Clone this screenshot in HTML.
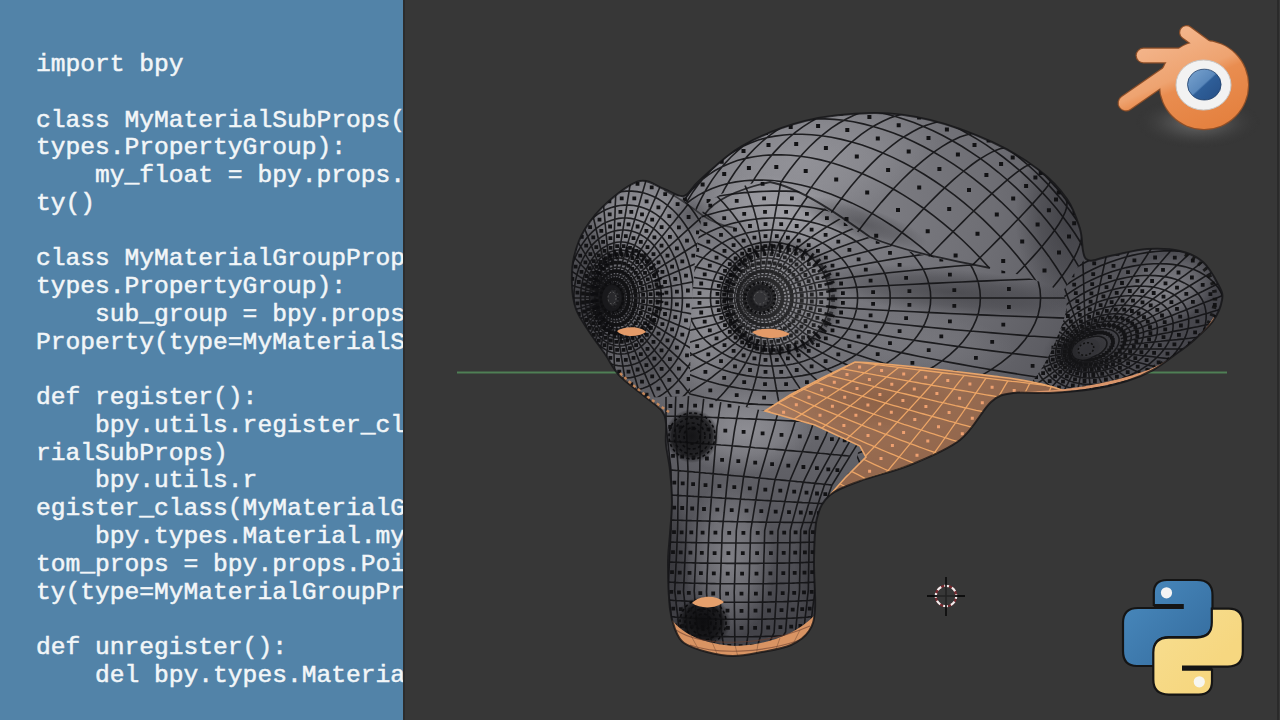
<!DOCTYPE html>
<html><head><meta charset="utf-8">
<style>
html,body{margin:0;padding:0;width:1280px;height:720px;overflow:hidden;background:#373737;}
#code{position:absolute;left:0;top:0;width:403px;height:720px;background:#5283a8;overflow:hidden;}
#code pre{position:absolute;left:36px;top:51px;margin:0;font-family:"Liberation Mono",monospace;font-size:24.6px;line-height:27.77px;color:#f2f6f8;white-space:pre;-webkit-text-stroke:0.5px #f2f6f8;}
#edge{position:absolute;left:403px;top:0;width:2px;height:720px;background:#2c2c2c;}
#redge{position:absolute;left:1277px;top:0;width:2px;height:720px;background:#2a2a2a;}
#scene{position:absolute;left:0;top:0;filter:blur(0.45px);}
</style></head><body>
<div id="code"><pre>import bpy

class MyMaterialSubProps(bpy.
types.PropertyGroup):
    my_float = bpy.props.FloatProper
ty()

class MyMaterialGroupProps(bpy.
types.PropertyGroup):
    sub_group = bpy.props.Pointer
Property(type=MyMaterialSubProps)

def register():
    bpy.utils.register_class(MyMate
rialSubProps)
    bpy.utils.r
egister_class(MyMaterialGroupProps)
    bpy.types.Material.my_cus
tom_props = bpy.props.PointerProper
ty(type=MyMaterialGroupProps)

def unregister():
    del bpy.types.Material.my_custom</pre></div>
<div id="edge"></div>
<div id="redge"></div>
<svg id="scene" width="1280" height="720" viewBox="0 0 1280 720">
<line x1="457" y1="372.5" x2="1227" y2="372.5" stroke="#4f7f55" stroke-width="2"/>
<defs><clipPath id="cSil"><path d="M640.0,181.0 C649.2,179.0 656.7,186.5 664.0,189.0 C671.3,191.5 678.0,197.5 684.0,196.0 C690.0,194.5 690.3,188.3 700.0,180.0 C709.7,171.7 724.5,155.8 742.0,146.0 C759.5,136.2 783.0,126.5 805.0,121.0 C827.0,115.5 853.2,113.2 874.0,113.0 C894.8,112.8 910.3,115.2 930.0,120.0 C949.7,124.8 973.8,133.7 992.0,142.0 C1010.2,150.3 1026.5,160.5 1039.0,170.0 C1051.5,179.5 1060.2,189.2 1067.0,199.0 C1073.8,208.8 1076.8,219.0 1080.0,229.0 C1083.2,239.0 1081.0,254.5 1086.0,259.0 C1091.0,263.5 1099.8,257.7 1110.0,256.0 C1120.2,254.3 1135.3,249.8 1147.0,249.0 C1158.7,248.2 1170.7,248.8 1180.0,251.0 C1189.3,253.2 1196.5,256.2 1203.0,262.0 C1209.5,267.8 1215.8,279.7 1219.0,286.0 C1222.2,292.3 1223.0,294.2 1222.0,300.0 C1221.0,305.8 1217.8,314.2 1213.0,321.0 C1208.2,327.8 1199.2,335.5 1193.0,341.0 C1186.8,346.5 1182.7,349.2 1176.0,354.0 C1169.3,358.8 1161.2,365.5 1153.0,370.0 C1144.8,374.5 1137.0,377.8 1127.0,381.0 C1117.0,384.2 1106.0,387.0 1093.0,389.0 C1080.0,391.0 1062.3,392.3 1049.0,393.0 C1035.7,393.7 1022.7,391.5 1013.0,393.0 C1003.3,394.5 999.8,394.2 991.0,402.0 C982.2,409.8 973.5,429.5 960.0,440.0 C946.5,450.5 926.7,458.2 910.0,465.0 C893.3,471.8 873.3,476.0 860.0,481.0 C846.7,486.0 837.2,488.8 830.0,495.0 C822.8,501.2 819.7,507.2 817.0,518.0 C814.3,528.8 814.3,544.8 814.0,560.0 C813.7,575.2 815.8,597.2 815.0,609.0 C814.2,620.8 813.0,625.0 809.0,631.0 C805.0,637.0 798.8,641.5 791.0,645.0 C783.2,648.5 771.7,650.2 762.0,652.0 C752.3,653.8 742.2,656.0 733.0,656.0 C723.8,656.0 715.2,654.2 707.0,652.0 C698.8,649.8 689.3,646.8 684.0,643.0 C678.7,639.2 677.3,634.7 675.0,629.0 C672.7,623.3 671.2,619.8 670.0,609.0 C668.8,598.2 668.0,576.5 668.0,564.0 C668.0,551.5 669.3,544.3 670.0,534.0 C670.7,523.7 672.0,512.7 672.0,502.0 C672.0,491.3 671.0,479.7 670.0,470.0 C669.0,460.3 666.7,451.8 666.0,444.0 C665.3,436.2 666.7,428.5 666.0,423.0 C665.3,417.5 665.8,415.7 662.0,411.0 C658.2,406.3 650.2,401.0 643.0,395.0 C635.8,389.0 625.3,381.8 619.0,375.0 C612.7,368.2 610.2,361.5 605.0,354.0 C599.8,346.5 592.8,337.5 588.0,330.0 C583.2,322.5 578.7,316.5 576.0,309.0 C573.3,301.5 572.3,293.7 572.0,285.0 C571.7,276.3 571.8,266.3 574.0,257.0 C576.2,247.7 579.2,238.3 585.0,229.0 C590.8,219.7 599.8,209.0 609.0,201.0 C618.2,193.0 630.8,183.0 640.0,181.0Z"/></clipPath><radialGradient id="gBase" gradientUnits="userSpaceOnUse" cx="800" cy="200" r="430"><stop offset="0" stop-color="#85858b" stop-opacity="1"/><stop offset="0.45" stop-color="#6e6e74" stop-opacity="1"/><stop offset="1" stop-color="#434349" stop-opacity="1"/></radialGradient><radialGradient id="b2" gradientUnits="userSpaceOnUse" cx="0" cy="0" r="1"><stop offset="0" stop-color="#a6a6ac" stop-opacity="0.45"/><stop offset="0.55" stop-color="#a6a6ac" stop-opacity="0.27"/><stop offset="1" stop-color="#a6a6ac" stop-opacity="0"/></radialGradient><radialGradient id="b3" gradientUnits="userSpaceOnUse" cx="0" cy="0" r="1"><stop offset="0" stop-color="#b4b4ba" stop-opacity="0.5"/><stop offset="0.55" stop-color="#b4b4ba" stop-opacity="0.3"/><stop offset="1" stop-color="#b4b4ba" stop-opacity="0"/></radialGradient><radialGradient id="b4" gradientUnits="userSpaceOnUse" cx="0" cy="0" r="1"><stop offset="0" stop-color="#b4b4ba" stop-opacity="0.55"/><stop offset="0.55" stop-color="#b4b4ba" stop-opacity="0.33"/><stop offset="1" stop-color="#b4b4ba" stop-opacity="0"/></radialGradient><radialGradient id="b5" gradientUnits="userSpaceOnUse" cx="0" cy="0" r="1"><stop offset="0" stop-color="#b0b0b6" stop-opacity="0.45"/><stop offset="0.55" stop-color="#b0b0b6" stop-opacity="0.27"/><stop offset="1" stop-color="#b0b0b6" stop-opacity="0"/></radialGradient><radialGradient id="b6" gradientUnits="userSpaceOnUse" cx="0" cy="0" r="1"><stop offset="0" stop-color="#b4b4ba" stop-opacity="0.5"/><stop offset="0.55" stop-color="#b4b4ba" stop-opacity="0.3"/><stop offset="1" stop-color="#b4b4ba" stop-opacity="0"/></radialGradient><radialGradient id="b7" gradientUnits="userSpaceOnUse" cx="0" cy="0" r="1"><stop offset="0" stop-color="#b0b0b6" stop-opacity="0.5"/><stop offset="0.55" stop-color="#b0b0b6" stop-opacity="0.3"/><stop offset="1" stop-color="#b0b0b6" stop-opacity="0"/></radialGradient><radialGradient id="b8" gradientUnits="userSpaceOnUse" cx="0" cy="0" r="1"><stop offset="0" stop-color="#b8b8be" stop-opacity="0.5"/><stop offset="0.55" stop-color="#b8b8be" stop-opacity="0.3"/><stop offset="1" stop-color="#b8b8be" stop-opacity="0"/></radialGradient><radialGradient id="b9" gradientUnits="userSpaceOnUse" cx="0" cy="0" r="1"><stop offset="0" stop-color="#8a8a90" stop-opacity="0.3"/><stop offset="0.55" stop-color="#8a8a90" stop-opacity="0.18"/><stop offset="1" stop-color="#8a8a90" stop-opacity="0"/></radialGradient><radialGradient id="b10" gradientUnits="userSpaceOnUse" cx="0" cy="0" r="1"><stop offset="0" stop-color="#a8a8ae" stop-opacity="0.35"/><stop offset="0.55" stop-color="#a8a8ae" stop-opacity="0.21"/><stop offset="1" stop-color="#a8a8ae" stop-opacity="0"/></radialGradient><radialGradient id="b11" gradientUnits="userSpaceOnUse" cx="0" cy="0" r="1"><stop offset="0" stop-color="#2a2a2e" stop-opacity="0.65"/><stop offset="0.55" stop-color="#2a2a2e" stop-opacity="0.39"/><stop offset="1" stop-color="#2a2a2e" stop-opacity="0"/></radialGradient><radialGradient id="b12" gradientUnits="userSpaceOnUse" cx="0" cy="0" r="1"><stop offset="0" stop-color="#222226" stop-opacity="0.45"/><stop offset="0.55" stop-color="#222226" stop-opacity="0.27"/><stop offset="1" stop-color="#222226" stop-opacity="0"/></radialGradient><radialGradient id="b13" gradientUnits="userSpaceOnUse" cx="0" cy="0" r="1"><stop offset="0" stop-color="#222226" stop-opacity="0.5"/><stop offset="0.55" stop-color="#222226" stop-opacity="0.3"/><stop offset="1" stop-color="#222226" stop-opacity="0"/></radialGradient><radialGradient id="b14" gradientUnits="userSpaceOnUse" cx="0" cy="0" r="1"><stop offset="0" stop-color="#2a2a2e" stop-opacity="0.55"/><stop offset="0.55" stop-color="#2a2a2e" stop-opacity="0.33"/><stop offset="1" stop-color="#2a2a2e" stop-opacity="0"/></radialGradient><radialGradient id="b15" gradientUnits="userSpaceOnUse" cx="0" cy="0" r="1"><stop offset="0" stop-color="#2a2a2e" stop-opacity="0.55"/><stop offset="0.55" stop-color="#2a2a2e" stop-opacity="0.33"/><stop offset="1" stop-color="#2a2a2e" stop-opacity="0"/></radialGradient><radialGradient id="b16" gradientUnits="userSpaceOnUse" cx="0" cy="0" r="1"><stop offset="0" stop-color="#1e1e22" stop-opacity="0.4"/><stop offset="0.55" stop-color="#1e1e22" stop-opacity="0.24"/><stop offset="1" stop-color="#1e1e22" stop-opacity="0"/></radialGradient><radialGradient id="b17" gradientUnits="userSpaceOnUse" cx="0" cy="0" r="1"><stop offset="0" stop-color="#2a2a2e" stop-opacity="0.35"/><stop offset="0.55" stop-color="#2a2a2e" stop-opacity="0.21"/><stop offset="1" stop-color="#2a2a2e" stop-opacity="0"/></radialGradient><radialGradient id="b18" gradientUnits="userSpaceOnUse" cx="0" cy="0" r="1"><stop offset="0" stop-color="#2a2a2e" stop-opacity="0.35"/><stop offset="0.55" stop-color="#2a2a2e" stop-opacity="0.21"/><stop offset="1" stop-color="#2a2a2e" stop-opacity="0"/></radialGradient><radialGradient id="b19" gradientUnits="userSpaceOnUse" cx="0" cy="0" r="1"><stop offset="0" stop-color="#2a2a2e" stop-opacity="0.35"/><stop offset="0.55" stop-color="#2a2a2e" stop-opacity="0.21"/><stop offset="1" stop-color="#2a2a2e" stop-opacity="0"/></radialGradient><radialGradient id="b20" gradientUnits="userSpaceOnUse" cx="0" cy="0" r="1"><stop offset="0" stop-color="#2a2a2e" stop-opacity="0.4"/><stop offset="0.55" stop-color="#2a2a2e" stop-opacity="0.24"/><stop offset="1" stop-color="#2a2a2e" stop-opacity="0"/></radialGradient><g id="shade"><path d="M640.0,181.0 C649.2,179.0 656.7,186.5 664.0,189.0 C671.3,191.5 678.0,197.5 684.0,196.0 C690.0,194.5 690.3,188.3 700.0,180.0 C709.7,171.7 724.5,155.8 742.0,146.0 C759.5,136.2 783.0,126.5 805.0,121.0 C827.0,115.5 853.2,113.2 874.0,113.0 C894.8,112.8 910.3,115.2 930.0,120.0 C949.7,124.8 973.8,133.7 992.0,142.0 C1010.2,150.3 1026.5,160.5 1039.0,170.0 C1051.5,179.5 1060.2,189.2 1067.0,199.0 C1073.8,208.8 1076.8,219.0 1080.0,229.0 C1083.2,239.0 1081.0,254.5 1086.0,259.0 C1091.0,263.5 1099.8,257.7 1110.0,256.0 C1120.2,254.3 1135.3,249.8 1147.0,249.0 C1158.7,248.2 1170.7,248.8 1180.0,251.0 C1189.3,253.2 1196.5,256.2 1203.0,262.0 C1209.5,267.8 1215.8,279.7 1219.0,286.0 C1222.2,292.3 1223.0,294.2 1222.0,300.0 C1221.0,305.8 1217.8,314.2 1213.0,321.0 C1208.2,327.8 1199.2,335.5 1193.0,341.0 C1186.8,346.5 1182.7,349.2 1176.0,354.0 C1169.3,358.8 1161.2,365.5 1153.0,370.0 C1144.8,374.5 1137.0,377.8 1127.0,381.0 C1117.0,384.2 1106.0,387.0 1093.0,389.0 C1080.0,391.0 1062.3,392.3 1049.0,393.0 C1035.7,393.7 1022.7,391.5 1013.0,393.0 C1003.3,394.5 999.8,394.2 991.0,402.0 C982.2,409.8 973.5,429.5 960.0,440.0 C946.5,450.5 926.7,458.2 910.0,465.0 C893.3,471.8 873.3,476.0 860.0,481.0 C846.7,486.0 837.2,488.8 830.0,495.0 C822.8,501.2 819.7,507.2 817.0,518.0 C814.3,528.8 814.3,544.8 814.0,560.0 C813.7,575.2 815.8,597.2 815.0,609.0 C814.2,620.8 813.0,625.0 809.0,631.0 C805.0,637.0 798.8,641.5 791.0,645.0 C783.2,648.5 771.7,650.2 762.0,652.0 C752.3,653.8 742.2,656.0 733.0,656.0 C723.8,656.0 715.2,654.2 707.0,652.0 C698.8,649.8 689.3,646.8 684.0,643.0 C678.7,639.2 677.3,634.7 675.0,629.0 C672.7,623.3 671.2,619.8 670.0,609.0 C668.8,598.2 668.0,576.5 668.0,564.0 C668.0,551.5 669.3,544.3 670.0,534.0 C670.7,523.7 672.0,512.7 672.0,502.0 C672.0,491.3 671.0,479.7 670.0,470.0 C669.0,460.3 666.7,451.8 666.0,444.0 C665.3,436.2 666.7,428.5 666.0,423.0 C665.3,417.5 665.8,415.7 662.0,411.0 C658.2,406.3 650.2,401.0 643.0,395.0 C635.8,389.0 625.3,381.8 619.0,375.0 C612.7,368.2 610.2,361.5 605.0,354.0 C599.8,346.5 592.8,337.5 588.0,330.0 C583.2,322.5 578.7,316.5 576.0,309.0 C573.3,301.5 572.3,293.7 572.0,285.0 C571.7,276.3 571.8,266.3 574.0,257.0 C576.2,247.7 579.2,238.3 585.0,229.0 C590.8,219.7 599.8,209.0 609.0,201.0 C618.2,193.0 630.8,183.0 640.0,181.0Z" fill="url(#gBase)"/><ellipse cx="0" cy="0" rx="1" ry="1" fill="url(#b2)" transform="translate(800 160) rotate(-10) scale(140 60)"/><ellipse cx="0" cy="0" rx="1" ry="1" fill="url(#b3)" transform="translate(640 215) rotate(0) scale(55 45)"/><ellipse cx="0" cy="0" rx="1" ry="1" fill="url(#b4)" transform="translate(785 215) rotate(12) scale(80 38)"/><ellipse cx="0" cy="0" rx="1" ry="1" fill="url(#b5)" transform="translate(705 320) rotate(0) scale(35 80)"/><ellipse cx="0" cy="0" rx="1" ry="1" fill="url(#b6)" transform="translate(745 430) rotate(0) scale(70 45)"/><ellipse cx="0" cy="0" rx="1" ry="1" fill="url(#b7)" transform="translate(730 560) rotate(0) scale(45 80)"/><ellipse cx="0" cy="0" rx="1" ry="1" fill="url(#b8)" transform="translate(1165 290) rotate(-20) scale(55 35)"/><ellipse cx="0" cy="0" rx="1" ry="1" fill="url(#b9)" transform="translate(930 345) rotate(5) scale(90 30)"/><ellipse cx="0" cy="0" rx="1" ry="1" fill="url(#b10)" transform="translate(760 300) rotate(0) scale(40 40)"/><ellipse cx="0" cy="0" rx="1" ry="1" fill="url(#b11)" transform="translate(585 300) rotate(0) scale(35 90)"/><ellipse cx="0" cy="0" rx="1" ry="1" fill="url(#b12)" transform="translate(950 292) rotate(6) scale(140 24)"/><ellipse cx="0" cy="0" rx="1" ry="1" fill="url(#b13)" transform="translate(1070 215) rotate(0) scale(55 95)"/><ellipse cx="0" cy="0" rx="1" ry="1" fill="url(#b14)" transform="translate(816 560) rotate(0) scale(22 70)"/><ellipse cx="0" cy="0" rx="1" ry="1" fill="url(#b15)" transform="translate(672 560) rotate(0) scale(18 70)"/><ellipse cx="0" cy="0" rx="1" ry="1" fill="url(#b16)" transform="translate(1085 350) rotate(-20) scale(45 30)"/><ellipse cx="0" cy="0" rx="1" ry="1" fill="url(#b17)" transform="translate(880 400) rotate(0) scale(80 30)"/><ellipse cx="0" cy="0" rx="1" ry="1" fill="url(#b18)" transform="translate(650 360) rotate(0) scale(35 40)"/><ellipse cx="0" cy="0" rx="1" ry="1" fill="url(#b19)" transform="translate(690 215) rotate(0) scale(25 20)"/><ellipse cx="0" cy="0" rx="1" ry="1" fill="url(#b20)" transform="translate(860 222) rotate(18) scale(70 16)"/></g><clipPath id="cDome"><path d="M640.0,181.0 C649.2,179.0 656.7,186.5 664.0,189.0 C671.3,191.5 678.0,197.5 684.0,196.0 C690.0,194.5 690.3,188.3 700.0,180.0 C709.7,171.7 724.5,155.8 742.0,146.0 C759.5,136.2 783.0,126.5 805.0,121.0 C827.0,115.5 853.2,113.2 874.0,113.0 C894.8,112.8 910.3,115.2 930.0,120.0 C949.7,124.8 973.8,133.7 992.0,142.0 C1010.2,150.3 1026.5,160.5 1039.0,170.0 C1051.5,179.5 1060.2,189.2 1067.0,199.0 C1073.8,208.8 1076.8,219.0 1080.0,229.0 C1083.2,239.0 1081.0,254.5 1086.0,259.0 C1091.0,263.5 1099.8,257.7 1110.0,256.0 C1120.2,254.3 1135.3,249.8 1147.0,249.0 C1158.7,248.2 1170.7,248.8 1180.0,251.0 C1189.3,253.2 1196.5,256.2 1203.0,262.0 C1209.5,267.8 1215.8,279.7 1219.0,286.0 C1222.2,292.3 1223.0,294.2 1222.0,300.0 C1221.0,305.8 1217.8,314.2 1213.0,321.0 C1208.2,327.8 1199.2,335.5 1193.0,341.0 C1186.8,346.5 1182.7,349.2 1176.0,354.0 C1169.3,358.8 1161.2,365.5 1153.0,370.0 C1144.8,374.5 1137.0,377.8 1127.0,381.0 C1117.0,384.2 1106.0,387.0 1093.0,389.0 C1080.0,391.0 1062.3,392.3 1049.0,393.0 C1035.7,393.7 1022.7,391.5 1013.0,393.0 C1003.3,394.5 999.8,394.2 991.0,402.0 C982.2,409.8 973.5,429.5 960.0,440.0 C946.5,450.5 926.7,458.2 910.0,465.0 C893.3,471.8 873.3,476.0 860.0,481.0 C846.7,486.0 837.2,488.8 830.0,495.0 C822.8,501.2 819.7,507.2 817.0,518.0 C814.3,528.8 814.3,544.8 814.0,560.0 C813.7,575.2 815.8,597.2 815.0,609.0 C814.2,620.8 813.0,625.0 809.0,631.0 C805.0,637.0 798.8,641.5 791.0,645.0 C783.2,648.5 771.7,650.2 762.0,652.0 C752.3,653.8 742.2,656.0 733.0,656.0 C723.8,656.0 715.2,654.2 707.0,652.0 C698.8,649.8 689.3,646.8 684.0,643.0 C678.7,639.2 677.3,634.7 675.0,629.0 C672.7,623.3 671.2,619.8 670.0,609.0 C668.8,598.2 668.0,576.5 668.0,564.0 C668.0,551.5 669.3,544.3 670.0,534.0 C670.7,523.7 672.0,512.7 672.0,502.0 C672.0,491.3 671.0,479.7 670.0,470.0 C669.0,460.3 666.7,451.8 666.0,444.0 C665.3,436.2 666.7,428.5 666.0,423.0 C665.3,417.5 665.8,415.7 662.0,411.0 C658.2,406.3 650.2,401.0 643.0,395.0 C635.8,389.0 625.3,381.8 619.0,375.0 C612.7,368.2 610.2,361.5 605.0,354.0 C599.8,346.5 592.8,337.5 588.0,330.0 C583.2,322.5 578.7,316.5 576.0,309.0 C573.3,301.5 572.3,293.7 572.0,285.0 C571.7,276.3 571.8,266.3 574.0,257.0 C576.2,247.7 579.2,238.3 585.0,229.0 C590.8,219.7 599.8,209.0 609.0,201.0 C618.2,193.0 630.8,183.0 640.0,181.0Z"/></clipPath><radialGradient id="gEarSh" gradientUnits="userSpaceOnUse" cx="0" cy="0" r="1"><stop offset="0" stop-color="#18181a" stop-opacity="0.35"/><stop offset="0.5" stop-color="#18181a" stop-opacity="0.2"/><stop offset="1" stop-color="#18181a" stop-opacity="0"/></radialGradient><clipPath id="cEar"><path d="M1086.0,259.0 C1092.7,255.0 1099.8,257.7 1110.0,256.0 C1120.2,254.3 1135.3,249.8 1147.0,249.0 C1158.7,248.2 1170.7,248.8 1180.0,251.0 C1189.3,253.2 1196.5,256.2 1203.0,262.0 C1209.5,267.8 1215.8,279.7 1219.0,286.0 C1222.2,292.3 1223.0,294.2 1222.0,300.0 C1221.0,305.8 1217.8,314.2 1213.0,321.0 C1208.2,327.8 1199.2,335.5 1193.0,341.0 C1186.8,346.5 1182.7,349.2 1176.0,354.0 C1169.3,358.8 1161.2,365.5 1153.0,370.0 C1144.8,374.5 1137.0,377.8 1127.0,381.0 C1117.0,384.2 1106.0,387.0 1093.0,389.0 C1080.0,391.0 1061.2,392.3 1049.0,393.0 C1036.8,393.7 1023.2,398.5 1020.0,393.0 C1016.8,387.5 1025.3,372.5 1030.0,360.0 C1034.7,347.5 1041.3,331.3 1048.0,318.0 C1054.7,304.7 1063.7,289.8 1070.0,280.0 C1076.3,270.2 1079.3,263.0 1086.0,259.0Z"/></clipPath><radialGradient id="gPupil" gradientUnits="userSpaceOnUse" cx="0" cy="0" r="1"><stop offset="0" stop-color="#0c0c0e" stop-opacity="0.95"/><stop offset="0.6" stop-color="#161618" stop-opacity="0.75"/><stop offset="1" stop-color="#161618" stop-opacity="0"/></radialGradient><radialGradient id="gSock" gradientUnits="userSpaceOnUse" cx="0" cy="0" r="1"><stop offset="0" stop-color="#fff" stop-opacity="0.12"/><stop offset="0.7" stop-color="#fff" stop-opacity="0.06"/><stop offset="0.85" stop-color="#0c0c0e" stop-opacity="0.25"/><stop offset="1" stop-color="#000" stop-opacity="0"/></radialGradient><clipPath id="cRE"><path d="M702.0,214.0 C704.8,204.0 707.0,204.0 712.0,200.0 C717.0,196.0 722.3,193.2 732.0,190.0 C741.7,186.8 758.3,180.5 770.0,181.0 C781.7,181.5 791.5,187.5 802.0,193.0 C812.5,198.5 822.8,207.0 833.0,214.0 C843.2,221.0 851.8,229.2 863.0,235.0 C874.2,240.8 885.5,244.7 900.0,249.0 C914.5,253.3 933.3,257.5 950.0,261.0 C966.7,264.5 985.0,266.5 1000.0,270.0 C1015.0,273.5 1029.0,277.0 1040.0,282.0 C1051.0,287.0 1063.3,290.3 1066.0,300.0 C1068.7,309.7 1061.2,327.0 1056.0,340.0 C1050.8,353.0 1042.2,369.2 1035.0,378.0 C1027.8,386.8 1025.5,388.0 1013.0,393.0 C1000.5,398.0 983.8,403.5 960.0,408.0 C936.2,412.5 902.5,419.5 870.0,420.0 C837.5,420.5 790.0,413.5 765.0,411.0 C740.0,408.5 732.5,406.8 720.0,405.0 C707.5,403.2 695.0,412.5 690.0,400.0 C685.0,387.5 689.2,353.3 690.0,330.0 C690.8,306.7 693.0,279.3 695.0,260.0 C697.0,240.7 699.2,224.0 702.0,214.0Z"/></clipPath><clipPath id="cLE"><path d="M560.0,150.0 L664.0,150.0 L668.0,190.0 L686.0,202.0 L702.0,214.0 L695.0,260.0 L690.0,330.0 L690.0,398.0 L662.0,415.0 L560.0,415.0Z"/></clipPath><radialGradient id="gNose" gradientUnits="userSpaceOnUse" cx="0" cy="0" r="1"><stop offset="0" stop-color="#0a0a0c" stop-opacity="0.9"/><stop offset="0.75" stop-color="#121214" stop-opacity="0.8"/><stop offset="1" stop-color="#141416" stop-opacity="0"/></radialGradient><radialGradient id="gMouth" gradientUnits="userSpaceOnUse" cx="0" cy="0" r="1"><stop offset="0" stop-color="#0a0a0c" stop-opacity="0.95"/><stop offset="0.7" stop-color="#121214" stop-opacity="0.85"/><stop offset="1" stop-color="#141416" stop-opacity="0"/></radialGradient><clipPath id="cMJ"><path d="M640.0,398.0 L690.0,396.0 L720.0,402.0 L765.0,411.0 L810.0,422.0 L860.0,445.0 L855.0,465.0 L830.0,495.0 L840.0,520.0 L840.0,680.0 L650.0,680.0Z"/></clipPath><clipPath id="cOr"><path d="M765,411 L790,395 L822,378 L855,362 C900,364 960,372 1000,377 C1025,380 1045,384 1062,390  C1052.8,393.3 1027.5,395.0 1017.0,400.0 C1006.5,405.0 1006.5,414.5 997.0,422.0 C987.5,429.5 974.5,437.8 960.0,445.0 C945.5,452.2 926.7,459.0 910.0,465.0 C893.3,471.0 873.3,476.0 860.0,481.0 C846.7,486.0 835.0,492.7 830.0,495.0 L845,478 L866,457 L860,446 L815,425 Z"/></clipPath><linearGradient id="gBl" gradientUnits="userSpaceOnUse" x1="1170" y1="25" x2="1215" y2="130"><stop offset="0" stop-color="#f4b890"/><stop offset="0.45" stop-color="#eea370"/><stop offset="0.55" stop-color="#e98d50"/><stop offset="1" stop-color="#e4803e"/></linearGradient><radialGradient id="gGlow" gradientUnits="userSpaceOnUse" cx="0" cy="0" r="1"><stop offset="0" stop-color="#7a7a7a" stop-opacity="0.85"/><stop offset="0.5" stop-color="#5a5a5a" stop-opacity="0.5"/><stop offset="1" stop-color="#383838" stop-opacity="0"/></radialGradient><linearGradient id="gBlue" x1="0" y1="0" x2="1" y2="1"><stop offset="0" stop-color="#7aa4d0"/><stop offset="0.48" stop-color="#5a88bb"/><stop offset="0.52" stop-color="#2e5e98"/><stop offset="1" stop-color="#264f86"/></linearGradient><linearGradient id="gPyB" gradientUnits="userSpaceOnUse" x1="1123" y1="580" x2="1212" y2="666"><stop offset="0" stop-color="#4a8bbf"/><stop offset="1" stop-color="#336a9c"/></linearGradient><linearGradient id="gPyY" gradientUnits="userSpaceOnUse" x1="1243" y1="695" x2="1153" y2="608"><stop offset="0" stop-color="#f8e29a"/><stop offset="1" stop-color="#f6d780"/></linearGradient></defs>
<g clip-path="url(#cSil)">
<g clip-path="url(#cDome)">
<use href="#shade"/>

<path d="M981.0,129.9 L987.7,133.2 L994.4,136.9 L1001.0,140.8 L1007.6,145.0 L1014.1,149.4 L1020.5,154.2 L1026.8,159.1 L1032.9,164.3 L1038.8,169.7 L1044.7,175.3 L1050.3,181.2 L1055.7,187.1 L1060.9,193.2 L1065.8,199.5 L1070.6,205.9 L1075.0,212.4 L1079.2,219.0 L1083.1,225.6 L1086.8,232.3 L1090.1,239.0M912.8,108.2 L920.3,109.3 L927.9,110.9 L935.7,112.9 L943.5,115.3 L951.4,118.1 L959.3,121.2 L967.2,124.8 L975.0,128.7 L982.9,132.9 L990.7,137.5 L998.4,142.4 L1006.0,147.7 L1013.5,153.2 L1020.9,159.1 L1028.1,165.2 L1035.1,171.5 L1041.9,178.1 L1048.5,184.9 L1054.8,191.9 L1060.9,199.1 L1066.8,206.5 L1072.3,214.0 L1077.6,221.6 L1082.5,229.3 L1087.1,237.1 L1091.3,245.0 L1095.2,252.8 L1098.8,260.7 L1101.9,268.6 L1104.7,276.5 L1107.1,284.3 L1109.1,292.1 L1110.7,299.7 L1111.8,307.2M857.8,105.7 L865.5,105.2 L873.5,105.1 L881.6,105.5 L889.9,106.4 L898.4,107.7 L907.0,109.5 L915.7,111.7 L924.5,114.4 L933.3,117.5 L942.2,121.1 L951.1,125.0 L959.9,129.4 L968.7,134.2 L977.5,139.4 L986.2,144.9 L994.7,150.8 L1003.1,157.0 L1011.4,163.6 L1019.5,170.4 L1027.4,177.6 L1035.0,185.0 L1042.4,192.6 L1049.6,200.5 L1056.4,208.6 L1063.0,216.9 L1069.2,225.3 L1075.1,233.8 L1080.6,242.5 L1085.8,251.3 L1090.6,260.1 L1095.0,268.9 L1098.9,277.8 L1102.5,286.7 L1105.6,295.5 L1108.3,304.3 L1110.5,313.0 L1112.3,321.6 L1113.6,330.1 L1114.5,338.4 L1114.9,346.5 L1114.8,354.5 L1114.3,362.2M808.4,114.5 L815.9,112.4 L823.7,110.8 L831.9,109.8 L840.3,109.2 L848.9,109.1 L857.7,109.5 L866.7,110.5 L875.9,111.9 L885.2,113.8 L894.7,116.3 L904.2,119.2 L913.8,122.6 L923.4,126.4 L933.1,130.7 L942.7,135.5 L952.3,140.7 L961.8,146.3 L971.2,152.3 L980.5,158.7 L989.6,165.4 L998.6,172.5 L1007.4,180.0 L1015.9,187.7 L1024.2,195.8 L1032.3,204.1 L1040.0,212.6 L1047.5,221.4 L1054.6,230.4 L1061.3,239.5 L1067.7,248.8 L1073.7,258.2 L1079.3,267.7 L1084.5,277.3 L1089.3,286.9 L1093.6,296.6 L1097.4,306.2 L1100.8,315.8 L1103.7,325.3 L1106.2,334.8 L1108.1,344.1 L1109.5,353.3 L1110.5,362.3 L1110.9,371.1 L1110.8,379.7 L1110.2,388.1 L1109.2,396.3 L1107.6,404.1 L1105.5,411.6M760.5,134.2 L767.4,130.5 L774.6,127.3 L782.2,124.6 L790.2,122.4 L798.4,120.7 L807.0,119.6 L815.8,119.0 L824.9,118.9 L834.2,119.4 L843.7,120.3 L853.4,121.8 L863.2,123.9 L873.2,126.4 L883.2,129.5 L893.4,133.1 L903.5,137.1 L913.7,141.7 L923.8,146.7 L933.9,152.2 L943.9,158.1 L953.8,164.4 L963.6,171.1 L973.3,178.3 L982.7,185.8 L992.0,193.6 L1001.0,201.8 L1009.7,210.3 L1018.2,219.0 L1026.4,228.0 L1034.2,237.3 L1041.7,246.7 L1048.9,256.4 L1055.6,266.2 L1061.9,276.1 L1067.8,286.1 L1073.3,296.2 L1078.3,306.3 L1082.9,316.5 L1086.9,326.6 L1090.5,336.8 L1093.6,346.8 L1096.1,356.8 L1098.2,366.6 L1099.7,376.3 L1100.6,385.8 L1101.1,395.1 L1101.0,404.2 L1100.4,413.0 L1099.3,421.6 L1097.6,429.8 L1095.4,437.8 L1092.7,445.4 L1089.5,452.6 L1085.8,459.5M723.3,159.1 L729.4,154.3 L736.1,150.0 L743.1,146.2 L750.5,142.9 L758.3,140.1 L766.5,137.8 L775.0,136.1 L783.8,135.0 L792.8,134.3 L802.2,134.3 L811.7,134.7 L821.5,135.7 L831.4,137.3 L841.5,139.4 L851.8,142.0 L862.1,145.1 L872.4,148.8 L882.9,153.0 L893.3,157.6 L903.7,162.8 L914.1,168.4 L924.4,174.5 L934.5,181.0 L944.6,187.9 L954.5,195.2 L964.2,202.9 L973.7,211.0 L983.0,219.4 L991.9,228.1 L1000.6,237.0 L1009.0,246.3 L1017.1,255.8 L1024.8,265.5 L1032.1,275.4 L1039.0,285.5 L1045.5,295.6 L1051.6,305.9 L1057.2,316.3 L1062.4,326.7 L1067.0,337.1 L1071.2,347.6 L1074.9,357.9 L1078.0,368.2 L1080.6,378.5 L1082.7,388.6 L1084.3,398.5 L1085.3,408.3 L1085.7,417.8 L1085.7,427.2 L1085.0,436.2 L1083.9,445.0 L1082.2,453.5 L1079.9,461.7 L1077.1,469.5 L1073.8,476.9 L1070.0,483.9 L1065.7,490.6 L1060.9,496.7M1035.0,523.5 L1029.3,528.8 L1023.1,533.7M686.3,196.9 L691.2,190.7 L696.5,185.0 L702.2,179.7 L708.4,174.9 L715.0,170.5 L722.1,166.7 L729.5,163.4 L737.3,160.6 L745.5,158.4 L754.0,156.7 L762.8,155.5 L771.9,154.9 L781.2,154.8 L790.8,155.3 L800.6,156.3 L810.5,157.8 L820.7,159.9 L830.9,162.6 L841.2,165.7 L851.6,169.4 L862.0,173.6 L872.5,178.2 L882.9,183.4 L893.3,189.0 L903.6,195.1 L913.8,201.6 L923.9,208.5 L933.8,215.8 L943.5,223.6 L953.0,231.6 L962.3,240.0 L971.3,248.7 L980.0,257.7 L988.4,267.0 L996.4,276.5 L1004.2,286.2 L1011.5,296.1 L1018.4,306.2 L1024.9,316.4 L1031.0,326.7 L1036.6,337.1 L1041.8,347.5 L1046.4,358.0 L1050.6,368.4 L1054.3,378.8 L1057.4,389.1 L1060.1,399.3 L1062.2,409.5 L1063.7,419.4 L1064.7,429.2 L1065.2,438.8 L1065.1,448.1 L1064.5,457.2 L1063.3,466.0 L1061.6,474.5 L1059.4,482.7 L1056.6,490.5 L1053.3,497.9 L1049.5,505.0 L1045.1,511.6 L1040.3,517.8 L1035.0,523.5M1010.5,540.2 L1004.9,545.4 L998.8,550.1 L992.3,554.3 L985.5,558.0M662.0,234.5 L665.7,227.7 L669.9,221.2 L674.6,215.1 L679.8,209.5 L685.4,204.3 L691.5,199.6 L698.0,195.4 L704.8,191.7 L712.1,188.5 L719.7,185.7 L727.7,183.5 L736.0,181.9 L744.6,180.7 L753.5,180.1 L762.6,180.0 L772.0,180.5 L781.5,181.5 L791.2,183.0 L801.1,185.0 L811.1,187.6 L821.2,190.7 L831.3,194.3 L841.5,198.4 L851.7,202.9 L861.9,207.9 L872.0,213.4 L882.1,219.4 L892.1,225.7 L901.9,232.5 L911.6,239.7 L921.1,247.2 L930.4,255.1 L939.4,263.3 L948.2,271.8 L956.7,280.6 L964.9,289.6 L972.8,298.9 L980.3,308.4 L987.5,318.1 L994.3,327.9 L1000.6,337.9 L1006.6,348.0 L1012.1,358.1 L1017.1,368.3 L1021.6,378.5 L1025.7,388.7 L1029.3,398.8 L1032.4,408.9 L1035.0,418.9 L1037.0,428.8 L1038.5,438.5 L1039.5,448.0 L1040.0,457.4 L1039.9,466.5 L1039.3,475.4 L1038.1,484.0 L1036.5,492.3 L1034.3,500.3 L1031.5,507.9 L1028.3,515.2 L1024.6,522.0 L1020.4,528.5 L1015.7,534.6 L1010.5,540.2M982.6,552.1 L977.3,557.0 L971.5,561.5 L965.4,565.5 L958.8,569.0 L951.9,572.1 L944.6,574.7 L937.0,576.8M643.2,283.0 L645.3,275.4 L647.9,268.1 L651.0,261.2 L654.5,254.6 L658.5,248.5 L663.0,242.7 L667.9,237.4 L673.3,232.4 L679.1,228.0 L685.2,224.0 L691.8,220.4 L698.7,217.3 L705.9,214.8 L713.5,212.7 L721.4,211.1 L729.6,210.0 L738.1,209.4 L746.7,209.3 L755.6,209.8 L764.7,210.7 L774.0,212.2 L783.4,214.1 L792.9,216.5 L802.5,219.5 L812.1,222.9 L821.8,226.8 L831.6,231.1 L841.2,235.9 L850.9,241.1 L860.5,246.8 L869.9,252.8 L879.3,259.3 L888.5,266.1 L897.5,273.2 L906.4,280.7 L915.0,288.5 L923.4,296.6 L931.5,305.0 L939.3,313.6 L946.8,322.5 L953.9,331.5 L960.7,340.7 L967.2,350.1 L973.2,359.5 L978.9,369.1 L984.1,378.8 L988.9,388.4 L993.2,398.2 L997.1,407.9 L1000.5,417.5 L1003.5,427.1 L1005.9,436.6 L1007.8,446.0 L1009.3,455.3 L1010.2,464.4 L1010.7,473.3 L1010.6,481.9 L1010.0,490.4 L1008.9,498.6 L1007.3,506.5 L1005.2,514.1 L1002.7,521.3 L999.6,528.2 L996.0,534.8 L992.0,540.9 L987.6,546.7 L982.6,552.1M952.1,558.8 L947.2,563.4 L941.8,567.5 L936.1,571.2 L930.1,574.5 L923.7,577.3 L917.0,579.7 L910.0,581.6 L902.7,583.1 L895.1,584.1 L887.3,584.7 L879.3,584.7M635.3,340.7 L635.3,332.7 L635.9,324.9 L636.9,317.3 L638.4,310.0 L640.3,303.0 L642.7,296.3 L645.5,289.9 L648.8,283.9 L652.5,278.2 L656.6,272.8 L661.2,267.9 L666.1,263.3 L671.5,259.2 L677.2,255.5 L683.2,252.2 L689.6,249.4 L696.3,247.0 L703.3,245.1 L710.6,243.6 L718.2,242.6 L726.0,242.0 L734.0,242.0 L742.3,242.4 L750.7,243.2 L759.2,244.6 L767.9,246.4 L776.7,248.6 L785.6,251.3 L794.5,254.5 L803.5,258.1 L812.4,262.1 L821.4,266.5 L830.3,271.3 L839.2,276.6 L847.9,282.2 L856.6,288.1 L865.1,294.4 L873.5,301.0 L881.6,308.0 L889.6,315.2 L897.3,322.7 L904.8,330.4 L912.0,338.4 L919.0,346.5 L925.6,354.9 L931.9,363.4 L937.8,372.1 L943.4,380.8 L948.7,389.7 L953.5,398.6 L957.9,407.6 L961.9,416.5 L965.5,425.5 L968.7,434.4 L971.4,443.3 L973.6,452.1 L975.4,460.8 L976.8,469.3 L977.6,477.7 L978.0,486.0 L978.0,494.0 L977.4,501.8 L976.4,509.4 L974.9,516.7 L973.0,523.7 L970.6,530.4 L967.8,536.8 L964.5,542.8 L960.8,548.5 L956.7,553.9 L952.1,558.8M919.7,560.3 L915.3,564.4 L910.5,568.1 L905.4,571.4 L900.0,574.3 L894.3,576.8 L888.3,579.0 L882.0,580.7 L875.5,582.0 L868.7,582.9 L861.8,583.4 L854.6,583.5 L847.2,583.1 L839.7,582.3 L832.1,581.1 L824.3,579.5 L816.5,577.5M642.5,403.5 L640.5,395.7 L638.9,387.9 L637.7,380.3 L636.9,372.8 L636.5,365.4 L636.6,358.2 L637.1,351.3 L638.0,344.5 L639.3,338.0 L641.0,331.7 L643.2,325.7 L645.7,320.0 L648.6,314.6 L651.9,309.5 L655.6,304.7 L659.7,300.3 L664.1,296.2 L668.9,292.5 L674.0,289.2 L679.4,286.3 L685.1,283.8 L691.1,281.6 L697.4,279.9 L703.9,278.6 L710.7,277.7 L717.6,277.2 L724.8,277.1 L732.2,277.5 L739.7,278.3 L747.3,279.5 L755.1,281.1 L762.9,283.1 L770.9,285.5 L778.8,288.3 L786.9,291.5 L794.9,295.1 L802.9,299.1 L810.8,303.4 L818.8,308.1 L826.6,313.1 L834.3,318.4 L841.9,324.0 L849.4,329.9 L856.7,336.1 L863.8,342.6 L870.7,349.3 L877.4,356.2 L883.9,363.3 L890.1,370.6 L896.0,378.1 L901.6,385.7 L906.9,393.4 L911.9,401.2 L916.6,409.2 L920.9,417.1 L924.9,425.1 L928.5,433.1 L931.7,441.2 L934.5,449.1 L936.9,457.1 L938.9,464.9 L940.5,472.7 L941.7,480.3 L942.5,487.8 L942.9,495.2 L942.8,502.4 L942.3,509.3 L941.4,516.1 L940.1,522.6 L938.4,528.9 L936.2,534.9 L933.7,540.6 L930.8,546.0 L927.5,551.1 L923.8,555.9 L919.7,560.3M886.2,556.5 L882.4,560.0 L878.3,563.1 L874.0,566.0 L869.3,568.5 L864.4,570.7 L859.3,572.5 L853.9,574.0 L848.3,575.1 L842.5,575.9 L836.6,576.3 L830.4,576.3 L824.1,576.0 L817.7,575.4 L811.1,574.3 L804.5,573.0 L797.8,571.2 L791.0,569.2 L784.1,566.7 L777.3,564.0 L770.4,560.9 L763.6,557.5 L756.7,553.8 L750.0,549.8 L743.2,545.6 L736.6,541.0 L730.1,536.2 L723.7,531.1 L717.5,525.8 L711.4,520.3 L705.4,514.6 L699.7,508.6 L694.2,502.5 L688.9,496.3 L683.8,489.9 L679.0,483.4 L674.4,476.8 L670.2,470.0 L666.2,463.3 L662.5,456.4 L659.1,449.6 L656.0,442.7 L653.3,435.9 L650.8,429.0 L648.8,422.2 L647.0,415.5 L645.7,408.9 L644.6,402.3 L644.0,395.9 L643.7,389.6 L643.7,383.4 L644.1,377.5 L644.9,371.7 L646.0,366.1 L647.5,360.7 L649.3,355.6 L651.5,350.7 L654.0,346.0 L656.9,341.7 L660.0,337.6 L663.5,333.8 L667.3,330.3 L671.4,327.2 L675.7,324.3 L680.4,321.8 L685.3,319.6 L690.4,317.8 L695.8,316.3 L701.4,315.2 L707.2,314.4 L713.1,314.0 L719.3,314.0 L725.6,314.3 L732.0,315.0 L738.5,316.0 L745.2,317.4 L751.9,319.1 L758.7,321.2 L765.5,323.6 L772.4,326.3 L779.3,329.4 L786.1,332.8 L793.0,336.5 L799.7,340.5 L806.4,344.7 L813.1,349.3 L819.6,354.1 L826.0,359.2 L832.2,364.5 L838.3,370.0 L844.2,375.8 L850.0,381.7 L855.5,387.8 L860.8,394.0 L865.9,400.4 L870.7,406.9 L875.3,413.6 L879.5,420.3 L883.5,427.0 L887.2,433.9 L890.6,440.7 L893.7,447.6 L896.4,454.5 L898.8,461.3 L900.9,468.1 L902.6,474.8 L904.0,481.5 L905.0,488.0 L905.7,494.4 L906.0,500.7 L906.0,506.9 L905.6,512.8 L904.8,518.6 L903.7,524.2 L902.2,529.6 L900.4,534.7 L898.2,539.6 L895.7,544.3 L892.8,548.6 L889.7,552.7 L886.2,556.5M852.4,547.5 L849.3,550.3 L846.0,552.8 L842.5,555.1 L838.8,557.2 L834.8,558.9 L830.7,560.4 L826.3,561.6 L821.8,562.5 L817.1,563.1 L812.3,563.4 L807.4,563.5 L802.3,563.2 L797.1,562.7 L791.8,561.9 L786.4,560.8 L781.0,559.4 L775.5,557.7 L770.0,555.7 L764.4,553.5 L758.9,551.1 L753.3,548.3 L747.8,545.3 L742.4,542.1 L736.9,538.6 L731.6,535.0 L726.3,531.1 L721.2,527.0 L716.1,522.7 L711.2,518.2 L706.4,513.6 L701.8,508.8 L697.3,503.9 L693.0,498.8 L688.9,493.7 L685.0,488.4 L681.4,483.1 L677.9,477.6 L674.7,472.2 L671.7,466.7 L668.9,461.1 L666.5,455.6 L664.3,450.0 L662.3,444.5 L660.6,439.0 L659.2,433.6 L658.1,428.2 L657.3,422.9 L656.8,417.7 L656.5,412.6 L656.6,407.7 L656.9,402.9 L657.5,398.2 L658.4,393.7 L659.6,389.3 L661.1,385.2 L662.8,381.2 L664.9,377.5 L667.2,374.0 L669.7,370.7 L672.5,367.6 L675.6,364.8 L678.9,362.2 L682.4,359.9 L686.1,357.9 L690.1,356.2 L694.3,354.7 L698.6,353.5 L703.1,352.6 L707.8,352.0 L712.6,351.6 L717.6,351.6 L722.7,351.8 L727.8,352.4 L733.1,353.2 L738.5,354.3 L743.9,355.7 L749.4,357.4 L754.9,359.3 L760.5,361.5 L766.0,364.0 L771.6,366.8 L777.1,369.8 L782.6,373.0 L788.0,376.4 L793.3,380.1 L798.6,384.0 L803.8,388.1 L808.8,392.4 L813.7,396.9 L818.5,401.5 L823.1,406.3 L827.6,411.2 L831.9,416.2 L836.0,421.4 L839.9,426.7 L843.6,432.0 L847.0,437.4 L850.2,442.9 L853.2,448.4 L856.0,454.0 L858.5,459.5 L860.7,465.1 L862.6,470.6 L864.3,476.1 L865.7,481.5 L866.8,486.9 L867.6,492.2 L868.2,497.3 L868.4,502.4 L868.4,507.4 L868.0,512.2 L867.4,516.9 L866.5,521.4 L865.3,525.7 L863.8,529.9 L862.1,533.9 L860.1,537.6 L857.8,541.1 L855.2,544.4 L852.4,547.5M819.2,533.5 L816.9,535.5 L814.5,537.4 L811.9,539.1 L809.1,540.6 L806.2,541.9 L803.1,543.0 L799.9,543.9 L796.6,544.5 L793.2,545.0 L789.6,545.2 L785.9,545.3 L782.2,545.1 L778.4,544.7 L774.5,544.1 L770.5,543.3 L766.5,542.2 L762.5,541.0 L758.4,539.6 L754.3,537.9 L750.2,536.1 L746.1,534.1 L742.1,531.9 L738.0,529.5 L734.0,527.0 L730.1,524.2 L726.2,521.4 L722.4,518.4 L718.7,515.2 L715.0,511.9 L711.5,508.5 L708.1,505.0 L704.8,501.3 L701.6,497.6 L698.6,493.8 L695.8,489.9 L693.0,486.0 L690.5,482.0 L688.1,477.9 L685.9,473.9 L683.9,469.8 L682.1,465.7 L680.4,461.6 L679.0,457.5 L677.8,453.5 L676.7,449.5 L675.9,445.5 L675.3,441.6 L674.9,437.8 L674.7,434.1 L674.8,430.4 L675.0,426.8 L675.5,423.4 L676.1,420.1 L677.0,416.9 L678.1,413.8 L679.4,410.9 L680.9,408.1 L682.6,405.5 L684.5,403.1 L686.5,400.8 L688.8,398.8 L691.2,396.9 L693.8,395.2 L696.6,393.7 L699.5,392.4 L702.6,391.3 L705.8,390.4 L709.1,389.8 L712.5,389.3 L716.1,389.1 L719.7,389.0 L723.5,389.2 L727.3,389.6 L731.2,390.2 L735.2,391.0 L739.2,392.1 L743.2,393.3 L747.3,394.7 L751.4,396.4 L755.5,398.2 L759.6,400.2 L763.6,402.4 L767.7,404.8 L771.7,407.4 L775.6,410.1 L779.5,412.9 L783.3,416.0 L787.0,419.1 L790.6,422.4 L794.2,425.8 L797.6,429.4 L800.9,433.0 L804.0,436.7 L807.1,440.5 L809.9,444.4 L812.6,448.3 L815.2,452.3 L817.6,456.4 L819.8,460.4 L821.8,464.5 L823.6,468.6 L825.3,472.7 L826.7,476.8 L827.9,480.8 L829.0,484.8 L829.8,488.8 L830.4,492.7 L830.8,496.5 L831.0,500.3 L830.9,503.9 L830.7,507.5 L830.2,510.9 L829.6,514.2 L828.7,517.4 L827.6,520.5 L826.3,523.4 L824.8,526.2 L823.1,528.8 L821.2,531.2 L819.2,533.5M787.3,514.8 L785.9,516.1 L784.4,517.3 L782.8,518.3 L781.1,519.2 L779.3,520.0 L777.4,520.7 L775.4,521.3 L773.3,521.7 L771.2,522.0 L769.0,522.1 L766.7,522.1 L764.4,522.0 L762.0,521.8 L759.6,521.4 L757.2,520.9 L754.7,520.3 L752.2,519.5 L749.7,518.6 L747.1,517.6 L744.6,516.5 L742.1,515.2 L739.6,513.8 L737.1,512.4 L734.6,510.8 L732.1,509.1 L729.7,507.3 L727.4,505.5 L725.1,503.5 L722.8,501.5 L720.6,499.4 L718.5,497.2 L716.5,494.9 L714.5,492.6 L712.7,490.3 L710.9,487.9 L709.2,485.4 L707.6,482.9 L706.2,480.4 L704.8,477.9 L703.5,475.4 L702.4,472.9 L701.4,470.3 L700.5,467.8 L699.7,465.3 L699.1,462.8 L698.6,460.4 L698.2,458.0 L698.0,455.6 L697.9,453.3 L697.9,451.0 L698.0,448.8 L698.3,446.7 L698.7,444.6 L699.3,442.6 L700.0,440.7 L700.8,438.9 L701.7,437.2 L702.7,435.6 L703.9,434.1 L705.2,432.7 L706.6,431.4 L708.1,430.3 L709.7,429.2 L711.4,428.3 L713.2,427.5 L715.1,426.8 L717.1,426.3 L719.1,425.8 L721.3,425.6 L723.5,425.4 L725.7,425.4 L728.1,425.5 L730.4,425.8 L732.8,426.1 L735.3,426.6 L737.8,427.3 L740.3,428.0 L742.8,428.9 L745.3,429.9 L747.9,431.1 L750.4,432.3 L752.9,433.7 L755.4,435.2 L757.9,436.7 L760.3,438.4 L762.7,440.2 L765.1,442.1 L767.4,444.0 L769.6,446.1 L771.8,448.2 L773.9,450.4 L776.0,452.6 L777.9,454.9 L779.8,457.3 L781.6,459.7 L783.3,462.1 L784.8,464.6 L786.3,467.1 L787.7,469.6 L788.9,472.1 L790.1,474.7 L791.1,477.2 L792.0,479.7 L792.7,482.2 L793.4,484.7 L793.9,487.2 L794.2,489.6 L794.5,491.9 L794.6,494.3 L794.6,496.5 L794.4,498.7 L794.2,500.9 L793.7,502.9 L793.2,504.9 L792.5,506.8 L791.7,508.6 L790.8,510.3 L789.7,511.9 L788.6,513.4 L787.3,514.8M757.6,492.0 L757.1,492.5 L756.5,492.9 L756.0,493.3 L755.4,493.6 L754.7,493.9 L754.0,494.1 L753.3,494.3 L752.6,494.5 L751.8,494.6 L751.0,494.6 L750.2,494.6 L749.3,494.6 L748.5,494.5 L747.6,494.4 L746.7,494.2 L745.8,493.9 L744.9,493.7 L744.0,493.4 L743.1,493.0 L742.2,492.6 L741.3,492.1 L740.4,491.6 L739.5,491.1 L738.6,490.5 L737.7,489.9 L736.9,489.3 L736.0,488.6 L735.2,487.9 L734.4,487.2 L733.6,486.4 L732.8,485.6 L732.1,484.8 L731.4,484.0 L730.7,483.1 L730.1,482.3 L729.5,481.4 L728.9,480.5 L728.4,479.6 L727.9,478.7 L727.4,477.8 L727.0,476.9 L726.6,476.0 L726.3,475.1 L726.1,474.2 L725.8,473.3 L725.6,472.4 L725.5,471.5 L725.4,470.7 L725.4,469.8 L725.4,469.0 L725.4,468.2 L725.5,467.4 L725.7,466.7 L725.9,466.0 L726.1,465.3 L726.4,464.6 L726.7,464.0 L727.1,463.5 L727.5,462.9 L728.0,462.4 L728.5,461.9 L729.1,461.5 L729.6,461.1 L730.2,460.8 L730.9,460.5 L731.6,460.3 L732.3,460.1 L733.0,459.9 L733.8,459.8 L734.6,459.8 L735.4,459.8 L736.3,459.8 L737.1,459.9 L738.0,460.0 L738.9,460.2 L739.8,460.5 L740.7,460.7 L741.6,461.0 L742.5,461.4 L743.4,461.8 L744.3,462.3 L745.2,462.8 L746.1,463.3 L747.0,463.9 L747.9,464.5 L748.7,465.1 L749.6,465.8 L750.4,466.5 L751.2,467.2 L752.0,468.0 L752.8,468.8 L753.5,469.6 L754.2,470.4 L754.9,471.3 L755.5,472.1 L756.1,473.0 L756.7,473.9 L757.2,474.8 L757.7,475.7 L758.2,476.6 L758.6,477.5 L759.0,478.4 L759.3,479.3 L759.5,480.2 L759.8,481.1 L760.0,482.0 L760.1,482.9 L760.2,483.7 L760.2,484.6 L760.2,485.4 L760.2,486.2 L760.1,487.0 L759.9,487.7 L759.7,488.4 L759.5,489.1 L759.2,489.8 L758.9,490.4 L758.5,490.9 L758.1,491.5 L757.6,492.0M1038.9,520.0 L1031.8,526.7 L1024.2,532.9 L1016.2,538.6 L1007.8,543.8 L999.0,548.4 L989.9,552.5 L980.5,555.9 L970.8,558.9 L960.8,561.2 L950.6,562.9 L940.2,564.1 L929.6,564.6 L918.9,564.5 L908.0,563.9 L897.1,562.6 L886.1,560.7 L875.0,558.3 L864.0,555.2 L853.0,551.6 L842.0,547.4 L831.2,542.7 L820.4,537.4 L809.9,531.6 L799.4,525.3 L789.2,518.5 L779.3,511.2 L769.6,503.4 L760.2,495.3 L751.1,486.7 L742.3,477.7M988.3,556.5 L979.8,560.9 L970.9,564.8 L961.9,568.1 L952.6,570.7 L943.1,572.7 L933.4,574.2 L923.5,574.9 L913.5,575.1 L903.4,574.6 L893.2,573.5 L883.0,571.8 L872.7,569.4 L862.5,566.4 L852.3,562.9 L842.1,558.7 L832.1,553.9 L822.1,548.6 L812.3,542.7 L802.7,536.3 L793.3,529.3 L784.1,521.8 L775.1,513.9 L766.5,505.5 L758.1,496.6 L750.0,487.4 L742.3,477.7M940.0,575.9 L931.1,578.3 L922.1,580.2 L913.0,581.4 L903.8,581.9 L894.5,581.8 L885.2,581.1 L875.8,579.7 L866.4,577.7 L857.0,575.0 L847.7,571.7 L838.5,567.8 L829.3,563.2 L820.3,558.1 L811.5,552.4 L802.8,546.1 L794.3,539.3 L786.0,531.9 L778.0,524.0 L770.3,515.6 L762.8,506.8 L755.6,497.5 L748.8,487.8 L742.3,477.7M890.1,584.4 L881.6,584.9 L873.1,584.7 L864.6,583.8 L856.1,582.3 L847.7,580.2 L839.3,577.4 L831.1,573.9 L822.9,569.8 L814.9,565.1 L807.1,559.9 L799.5,554.0 L792.0,547.5 L784.8,540.5 L777.9,533.0 L771.2,524.9 L764.8,516.4 L758.6,507.3 L752.9,497.9 L747.4,488.0 L742.3,477.7M849.8,583.6 L842.2,582.7 L834.7,581.3 L827.3,579.2 L820.1,576.4 L813.0,573.0 L806.0,569.0 L799.3,564.4 L792.7,559.2 L786.4,553.3 L780.3,547.0 L774.5,540.0 L769.0,532.5 L763.7,524.5 L758.8,516.1 L754.1,507.1 L749.8,497.7 L745.9,487.9 L742.3,477.7M812.2,576.6 L805.9,574.7 L799.8,572.2 L793.9,569.1 L788.2,565.3 L782.7,561.0 L777.5,556.0 L772.6,550.5 L768.0,544.4 L763.6,537.8 L759.6,530.6 L755.9,522.9 L752.5,514.8 L749.4,506.1 L746.7,497.1 L744.3,487.6 L742.3,477.7M783.8,566.9 L778.9,564.8 L774.2,562.1 L769.8,558.8 L765.7,555.0 L761.9,550.5 L758.4,545.5 L755.3,539.9 L752.4,533.8 L749.9,527.2 L747.8,520.1 L746.0,512.5 L744.5,504.4 L743.4,495.9 L742.7,487.0 L742.3,477.7M757.9,554.5 L754.5,552.4 L751.4,549.7 L748.7,546.5 L746.3,542.8 L744.2,538.4 L742.5,533.6 L741.2,528.3 L740.3,522.4 L739.7,516.1 L739.5,509.2 L739.6,502.0 L740.1,494.3 L741.0,486.2 L742.3,477.7M737.4,541.4 L735.2,540.1 L733.4,538.2 L732.0,535.9 L730.9,533.0 L730.3,529.6 L730.1,525.7 L730.2,521.2 L730.8,516.4 L731.7,511.0 L733.1,505.2 L734.8,498.9 L736.9,492.2 L739.4,485.2 L742.3,477.7M716.8,525.5 L716.2,524.6 L716.1,523.3 L716.3,521.4 L717.1,519.1 L718.2,516.2 L719.8,512.9 L721.8,509.2 L724.2,505.0 L727.0,500.4 L730.2,495.3 L733.9,489.8 L737.9,484.0 L742.3,477.7M699.8,509.0 L700.3,509.2 L701.3,509.0 L702.8,508.3 L704.8,507.2 L707.2,505.6 L710.1,503.6 L713.4,501.1 L717.2,498.2 L721.4,494.9 L726.0,491.2 L731.1,487.1 L736.5,482.6 L742.3,477.7M683.5,489.2 L684.5,491.0 L686.1,492.4 L688.1,493.4 L690.7,494.0 L693.8,494.2 L697.3,494.0 L701.4,493.3 L705.9,492.3 L710.9,490.8 L716.3,489.0 L722.2,486.7 L728.5,484.1 L735.2,481.1 L742.3,477.7M669.6,469.0 L671.4,472.0 L673.8,474.7 L676.8,477.0 L680.3,478.9 L684.3,480.5 L688.9,481.7 L693.9,482.5 L699.5,482.9 L705.5,483.0 L712.0,482.7 L719.0,482.0 L726.3,480.9 L734.1,479.5 L742.3,477.7M656.4,443.6 L658.3,448.1 L660.8,452.4 L663.9,456.3 L667.6,460.0 L671.8,463.3 L676.6,466.3 L682.0,469.0 L687.9,471.3 L694.3,473.3 L701.1,474.9 L708.5,476.2 L716.3,477.1 L724.6,477.7 L733.2,477.9 L742.3,477.7M645.7,415.5 L647.5,421.4 L649.9,427.2 L652.9,432.7 L656.5,437.9 L660.8,442.9 L665.6,447.6 L671.0,452.1 L676.9,456.2 L683.4,460.1 L690.4,463.6 L697.9,466.8 L705.9,469.7 L714.4,472.2 L723.3,474.4 L732.6,476.2 L742.3,477.7M638.5,385.5 L639.9,392.7 L641.9,399.7 L644.6,406.6 L648.0,413.3 L651.9,419.8 L656.5,426.2 L661.6,432.3 L667.4,438.1 L673.7,443.7 L680.5,449.1 L687.9,454.1 L695.9,458.9 L704.3,463.3 L713.1,467.4 L722.4,471.2 L732.2,474.6 L742.3,477.7M635.0,346.2 L635.2,354.5 L636.1,362.7 L637.6,370.8 L639.8,378.9 L642.6,386.9 L646.0,394.8 L650.1,402.6 L654.8,410.2 L660.1,417.6 L666.0,424.8 L672.4,431.8 L679.5,438.5 L687.0,445.0 L695.1,451.3 L703.6,457.2 L712.7,462.8 L722.1,468.1 L732.0,473.1 L742.3,477.7M640.1,296.7 L638.3,305.4 L637.1,314.3 L636.6,323.3 L636.8,332.4 L637.6,341.5 L639.0,350.6 L641.1,359.6 L643.9,368.7 L647.2,377.6 L651.2,386.5 L655.8,395.3 L661.0,403.9 L666.8,412.4 L673.2,420.7 L680.1,428.8 L687.6,436.6 L695.6,444.2 L704.0,451.5 L712.9,458.5 L722.3,465.3 L732.1,471.7 L742.3,477.7M655.9,247.5 L652.1,256.1 L648.8,265.1 L646.3,274.2 L644.3,283.6 L643.0,293.1 L642.3,302.8 L642.2,312.5 L642.8,322.4 L644.0,332.3 L645.9,342.3 L648.4,352.3 L651.5,362.2 L655.2,372.1 L659.5,381.9 L664.4,391.7 L669.9,401.3 L676.0,410.7 L682.6,420.0 L689.7,429.0 L697.3,437.8 L705.4,446.4 L714.0,454.7 L723.0,462.7 L732.5,470.4 L742.3,477.7M688.5,194.4 L682.3,202.0 L676.6,210.0 L671.5,218.3 L666.9,227.0 L663.0,236.0 L659.6,245.3 L656.7,254.9 L654.5,264.7 L652.9,274.8 L651.9,285.0 L651.5,295.4 L651.7,305.9 L652.6,316.6 L654.0,327.3 L656.0,338.1 L658.7,348.9 L661.9,359.7 L665.8,370.4 L670.2,381.1 L675.1,391.6 L680.6,402.1 L686.7,412.4 L693.2,422.5 L700.3,432.4 L707.8,442.0 L715.8,451.4 L724.2,460.5 L733.1,469.3 L742.3,477.7M725.8,157.1 L718.2,163.3 L711.1,170.0 L704.3,177.2 L698.1,184.8 L692.3,192.9 L687.1,201.4 L682.3,210.3 L678.1,219.6 L674.4,229.2 L671.3,239.1 L668.7,249.3 L666.7,259.8 L665.2,270.5 L664.4,281.4 L664.1,292.5 L664.4,303.7 L665.2,315.1 L666.7,326.5 L668.7,338.0 L671.3,349.5 L674.4,361.0 L678.1,372.4 L682.3,383.8 L687.1,395.0 L692.4,406.2 L698.1,417.1 L704.4,427.9 L711.1,438.4 L718.3,448.7 L725.9,458.7 L733.9,468.4 L742.3,477.7M779.1,125.2 L770.2,129.1 L761.7,133.5 L753.5,138.6 L745.7,144.2 L738.1,150.3 L731.0,157.0 L724.2,164.2 L717.9,171.9 L712.0,180.1 L706.6,188.7 L701.6,197.8 L697.0,207.2 L693.0,217.1 L689.5,227.2 L686.4,237.7 L683.9,248.5 L682.0,259.6 L680.5,270.9 L679.6,282.4 L679.2,294.1 L679.3,305.9 L680.0,317.8 L681.2,329.8 L683.0,341.9 L685.3,353.9 L688.1,365.9 L691.4,377.9 L695.2,389.8 L699.5,401.5 L704.3,413.1 L709.5,424.5 L715.3,435.7 L721.4,446.7 L728.0,457.3 L734.9,467.7 L742.3,477.7M827.9,109.8 L818.9,111.7 L810.0,114.1 L801.4,117.3 L792.9,121.0 L784.7,125.4 L776.7,130.3 L769.0,135.9 L761.6,142.0 L754.5,148.7 L747.7,155.9 L741.3,163.6 L735.2,171.8 L729.5,180.5 L724.2,189.7 L719.4,199.3 L714.9,209.3 L710.9,219.6 L707.4,230.3 L704.3,241.3 L701.6,252.6 L699.5,264.2 L697.8,275.9 L696.6,287.9 L695.9,300.0 L695.7,312.2 L696.0,324.6 L696.8,337.0 L698.1,349.4 L699.8,361.8 L702.0,374.1 L704.7,386.4 L707.9,398.5 L711.5,410.5 L715.6,422.4 L720.1,434.0 L725.1,445.4 L730.4,456.5 L736.2,467.2 L742.3,477.7M868.4,105.1 L859.9,105.6 L851.4,106.7 L843.0,108.4 L834.7,110.9 L826.5,113.9 L818.5,117.6 L810.6,121.9 L802.8,126.8 L795.3,132.4 L788.0,138.5 L780.9,145.1 L774.1,152.4 L767.6,160.1 L761.3,168.4 L755.4,177.1 L749.8,186.3 L744.5,195.9 L739.6,206.0 L735.1,216.4 L730.9,227.2 L727.2,238.3 L723.8,249.7 L720.9,261.3 L718.4,273.2 L716.3,285.3 L714.6,297.5 L713.4,309.9 L712.7,322.4 L712.3,334.9 L712.5,347.4 L713.0,360.0 L714.0,372.5 L715.5,384.9 L717.4,397.3 L719.7,409.5 L722.5,421.5 L725.6,433.3 L729.2,444.8 L733.2,456.1 L737.6,467.1 L742.3,477.7M907.8,107.3 L900.2,106.4 L892.5,106.3 L884.8,106.8 L877.0,107.9 L869.3,109.7 L861.6,112.2 L853.9,115.2 L846.3,119.0 L838.7,123.3 L831.2,128.2 L823.9,133.8 L816.7,139.9 L809.7,146.5 L802.8,153.8 L796.2,161.5 L789.7,169.7 L783.5,178.5 L777.6,187.7 L771.9,197.3 L766.5,207.3 L761.4,217.7 L756.6,228.4 L752.1,239.5 L747.9,250.8 L744.2,262.4 L740.7,274.3 L737.7,286.3 L735.0,298.5 L732.7,310.8 L730.8,323.2 L729.2,335.7 L728.1,348.2 L727.4,360.7 L727.1,373.1 L727.2,385.5 L727.7,397.8 L728.6,409.9 L729.9,421.8 L731.6,433.5 L733.7,445.0 L736.2,456.2 L739.1,467.1 L742.3,477.7M944.1,115.3 L937.8,113.4 L931.4,112.1 L924.7,111.5 L918.0,111.6 L911.1,112.2 L904.1,113.5 L897.1,115.5 L889.9,118.0 L882.8,121.2 L875.6,125.0 L868.4,129.4 L861.2,134.4 L854.1,140.0 L847.0,146.2 L840.1,152.8 L833.2,160.0 L826.4,167.8 L819.7,176.0 L813.2,184.6 L806.9,193.7 L800.8,203.2 L794.8,213.2 L789.1,223.4 L783.6,234.0 L778.4,244.9 L773.4,256.1 L768.7,267.5 L764.3,279.2 L760.2,291.0 L756.5,303.0 L753.0,315.0 L749.9,327.2 L747.1,339.4 L744.7,351.6 L742.6,363.8 L740.9,376.0 L739.6,388.1 L738.6,400.0 L738.0,411.8 L737.8,423.4 L737.9,434.9 L738.5,446.0 L739.4,456.9 L740.6,467.5 L742.3,477.7M971.1,125.2 L966.2,123.1 L961.0,121.6 L955.6,120.7 L950.0,120.5 L944.2,120.8 L938.1,121.8 L931.9,123.4 L925.6,125.5 L919.1,128.3 L912.5,131.7 L905.8,135.7 L899.0,140.2 L892.1,145.3 L885.2,151.0 L878.2,157.2 L871.3,163.9 L864.3,171.1 L857.4,178.7 L850.6,186.8 L843.8,195.4 L837.1,204.4 L830.5,213.7 L824.0,223.4 L817.6,233.5 L811.4,243.8 L805.4,254.5 L799.6,265.4 L794.0,276.5 L788.6,287.7 L783.4,299.2 L778.5,310.7 L773.9,322.4 L769.5,334.1 L765.5,345.9 L761.7,357.6 L758.2,369.4 L755.1,381.0 L752.3,392.6 L749.8,404.0 L747.6,415.2 L745.9,426.3 L744.4,437.1 L743.3,447.7 L742.6,458.0 L742.3,468.0 L742.3,477.7M995.5,137.6 L992.1,135.5 L988.4,134.0 L984.3,133.1 L980.0,132.7 L975.3,133.0 L970.4,133.8 L965.3,135.2 L959.8,137.1 L954.2,139.7 L948.3,142.8 L942.3,146.4 L936.0,150.6 L929.6,155.4 L923.0,160.6 L916.3,166.4 L909.5,172.6 L902.6,179.3 L895.6,186.5 L888.6,194.1 L881.5,202.1 L874.4,210.6 L867.3,219.3 L860.2,228.5 L853.2,237.9 L846.2,247.6 L839.4,257.6 L832.6,267.9 L825.9,278.3 L819.3,289.0 L812.9,299.8 L806.7,310.7 L800.7,321.7 L794.9,332.8 L789.2,343.9 L783.9,355.0 L778.7,366.1 L773.9,377.1 L769.3,388.0 L765.0,398.9 L761.0,409.5 L757.3,420.0 L754.0,430.3 L750.9,440.4 L748.2,450.2 L745.9,459.7 L743.9,468.9 L742.3,477.7M1014.8,149.9 L1012.6,148.6 L1010.0,147.9 L1007.1,147.6 L1003.8,147.9 L1000.1,148.8 L996.1,150.2 L991.8,152.1 L987.2,154.6 L982.2,157.6 L976.9,161.0 L971.4,165.0 L965.6,169.5 L959.6,174.5 L953.3,179.9 L946.8,185.8 L940.1,192.2 L933.3,198.9 L926.2,206.0 L919.1,213.6 L911.8,221.5 L904.4,229.7 L896.9,238.2 L889.4,247.1 L881.8,256.2 L874.2,265.5 L866.7,275.1 L859.1,284.8 L851.6,294.7 L844.1,304.8 L836.8,315.0 L829.5,325.2 L822.4,335.5 L815.4,345.9 L808.5,356.2 L801.9,366.5 L795.4,376.7 L789.2,386.9 L783.2,396.9 L777.5,406.8 L772.0,416.5 L766.8,426.1 L761.9,435.4 L757.3,444.4 L753.0,453.2 L749.1,461.7 L745.5,469.9 L742.3,477.7M1033.8,165.4 L1033.2,164.5 L1032.1,164.1 L1030.7,164.2 L1028.8,164.8 L1026.5,165.9 L1023.8,167.5 L1020.6,169.6 L1017.1,172.2 L1013.2,175.2 L1008.9,178.7 L1004.2,182.7 L999.2,187.1 L993.8,191.9 L988.1,197.2 L982.1,202.8 L975.9,208.9 L969.3,215.3 L962.5,222.1 L955.4,229.2 L948.1,236.6 L940.6,244.3 L933.0,252.3 L925.1,260.6 L917.2,269.1 L909.1,277.8 L900.9,286.7 L892.7,295.7 L884.4,304.9 L876.1,314.2 L867.8,323.5 L859.5,333.0 L851.2,342.4 L843.0,351.9 L834.9,361.4 L826.9,370.8 L819.0,380.1 L811.3,389.3 L803.8,398.5 L796.5,407.4 L789.3,416.2 L782.5,424.8 L775.8,433.2 L769.5,441.4 L763.4,449.2 L757.6,456.8 L752.2,464.1 L747.1,471.1 L742.3,477.7M1049.7,180.8 L1050.2,181.0 L1050.2,181.6 L1049.8,182.7 L1048.9,184.3 L1047.5,186.3 L1045.6,188.7 L1043.3,191.6 L1040.5,194.9 L1037.3,198.5 L1033.6,202.6 L1029.5,207.1 L1024.9,212.0 L1020.0,217.2 L1014.6,222.8 L1008.9,228.7 L1002.8,234.9 L996.3,241.4 L989.5,248.2 L982.4,255.3 L975.0,262.6 L967.3,270.2 L959.4,278.0 L951.3,285.9 L942.9,294.0 L934.4,302.2 L925.6,310.6 L916.8,319.0 L907.8,327.6 L898.8,336.1 L889.6,344.7 L880.5,353.3 L871.3,361.9 L862.1,370.4 L853.0,378.9 L843.9,387.2 L835.0,395.5 L826.1,403.6 L817.3,411.5 L808.7,419.3 L800.3,426.9 L792.1,434.2 L784.2,441.3 L776.5,448.1 L769.0,454.7 L761.8,460.9 L755.0,466.9 L748.5,472.5 L742.3,477.7M1065.5,199.0 L1066.5,200.8 L1066.9,202.9 L1066.9,205.5 L1066.3,208.5 L1065.3,211.8 L1063.6,215.5 L1061.5,219.6 L1058.9,224.0 L1055.7,228.7 L1052.1,233.8 L1048.0,239.1 L1043.4,244.8 L1038.3,250.7 L1032.8,256.9 L1026.9,263.3 L1020.5,270.0 L1013.8,276.8 L1006.6,283.9 L999.1,291.1 L991.3,298.4 L983.1,305.9 L974.7,313.5 L966.0,321.2 L957.0,328.9 L947.8,336.7 L938.4,344.5 L928.8,352.3 L919.1,360.1 L909.3,367.8 L899.3,375.5 L889.3,383.1 L879.3,390.6 L869.2,398.0 L859.2,405.2 L849.2,412.3 L839.3,419.2 L829.4,425.8 L819.8,432.3 L810.2,438.5 L800.8,444.5 L791.7,450.1 L782.7,455.5 L774.0,460.6 L765.6,465.4 L757.5,469.9 L749.7,474.0 L742.3,477.7M1078.6,218.0 L1080.4,221.0 L1081.7,224.3 L1082.4,228.0 L1082.5,232.0 L1082.1,236.3 L1081.1,240.9 L1079.5,245.8 L1077.4,251.0 L1074.8,256.4 L1071.5,262.0 L1067.8,267.9 L1063.5,274.0 L1058.7,280.3 L1053.4,286.8 L1047.6,293.4 L1041.3,300.2 L1034.6,307.1 L1027.4,314.1 L1019.8,321.1 L1011.8,328.3 L1003.5,335.5 L994.8,342.7 L985.8,349.9 L976.4,357.1 L966.8,364.3 L956.9,371.4 L946.8,378.5 L936.6,385.5 L926.1,392.3 L915.5,399.0 L904.8,405.6 L894.0,412.0 L883.2,418.2 L872.3,424.3 L861.4,430.1 L850.6,435.6 L839.9,441.0 L829.2,446.0 L818.7,450.8 L808.3,455.3 L798.1,459.5 L788.1,463.4 L778.4,466.9 L768.9,470.1 L759.7,473.0 L750.8,475.5 L742.3,477.7M1091.7,241.9 L1093.6,246.4 L1094.9,251.2 L1095.6,256.2 L1095.8,261.5 L1095.3,267.1 L1094.2,272.8 L1092.5,278.7 L1090.2,284.9 L1087.3,291.1 L1083.8,297.6 L1079.8,304.1 L1075.2,310.8 L1070.0,317.6 L1064.4,324.4 L1058.2,331.3 L1051.5,338.2 L1044.3,345.2 L1036.6,352.2 L1028.5,359.1 L1020.0,366.0 L1011.1,372.8 L1001.8,379.6 L992.2,386.3 L982.2,392.8 L972.0,399.2 L961.5,405.5 L950.7,411.6 L939.8,417.5 L928.6,423.3 L917.3,428.8 L905.9,434.1 L894.5,439.1 L882.9,443.9 L871.4,448.4 L859.8,452.6 L848.3,456.5 L836.9,460.2 L825.5,463.5 L814.3,466.5 L803.3,469.1 L792.5,471.4 L781.9,473.4 L771.5,475.0 L761.5,476.3 L751.7,477.2 L742.3,477.7M1102.5,268.6 L1104.3,274.5 L1105.4,280.6 L1105.9,286.9 L1105.8,293.3 L1105.0,299.9 L1103.7,306.7 L1101.6,313.5 L1099.0,320.4 L1095.8,327.4 L1091.9,334.4 L1087.5,341.5 L1082.4,348.5 L1076.8,355.6 L1070.7,362.6 L1064.0,369.6 L1056.8,376.5 L1049.1,383.3 L1040.9,390.0 L1032.3,396.6 L1023.2,403.1 L1013.7,409.4 L1003.9,415.5 L993.7,421.4 L983.2,427.2 L972.3,432.7 L961.2,437.9 L949.9,442.9 L938.4,447.6 L926.7,452.1 L914.8,456.2 L902.9,460.1 L890.8,463.6 L878.7,466.8 L866.6,469.7 L854.6,472.2 L842.6,474.4 L830.6,476.2 L818.8,477.7 L807.2,478.8 L795.7,479.5 L784.5,479.9 L773.5,479.9 L762.8,479.5 L752.4,478.8 L742.3,477.7M1110.1,297.3 L1111.5,304.5 L1112.3,311.8 L1112.4,319.1 L1111.9,326.6 L1110.7,334.1 L1108.8,341.6 L1106.4,349.1 L1103.3,356.6 L1099.5,364.1 L1095.2,371.5 L1090.2,378.9 L1084.7,386.2 L1078.6,393.3 L1071.9,400.3 L1064.7,407.2 L1056.9,413.9 L1048.7,420.4 L1040.0,426.7 L1030.8,432.8 L1021.3,438.6 L1011.3,444.2 L1000.9,449.5 L990.2,454.6 L979.2,459.3 L967.9,463.7 L956.3,467.8 L944.5,471.5 L932.5,474.9 L920.4,478.0 L908.1,480.6 L895.8,483.0 L883.4,484.9 L870.9,486.4 L858.5,487.6 L846.1,488.4 L833.9,488.7 L821.7,488.7 L809.6,488.3 L797.8,487.5 L786.1,486.3 L774.7,484.7 L763.6,482.8 L752.8,480.4 L742.3,477.7M1114.8,335.5 L1115.0,343.8 L1114.5,352.0 L1113.4,360.2 L1111.6,368.4 L1109.2,376.5 L1106.2,384.6 L1102.5,392.5 L1098.2,400.3 L1093.2,407.9 L1087.7,415.4 L1081.6,422.7 L1074.9,429.7 L1067.7,436.5 L1060.0,443.1 L1051.7,449.4 L1043.0,455.5 L1033.8,461.2 L1024.1,466.6 L1014.1,471.6 L1003.7,476.4 L992.9,480.7 L981.8,484.7 L970.4,488.3 L958.8,491.5 L946.9,494.4 L934.8,496.8 L922.5,498.7 L910.2,500.3 L897.7,501.4 L885.2,502.2 L872.6,502.4 L860.0,502.3 L847.5,501.7 L835.1,500.7 L822.8,499.3 L810.6,497.4 L798.6,495.1 L786.8,492.4 L775.2,489.3 L763.9,485.8 L752.9,482.0 L742.3,477.7M1112.9,375.7 L1111.7,384.6 L1109.9,393.3 L1107.5,402.0 L1104.4,410.5 L1100.7,418.8 L1096.3,427.0 L1091.4,434.9 L1085.8,442.5 L1079.7,449.9 L1073.1,457.0 L1065.8,463.8 L1058.1,470.3 L1049.9,476.4 L1041.1,482.2 L1032.0,487.5 L1022.4,492.5 L1012.3,497.1 L1002.0,501.3 L991.2,505.0 L980.2,508.4 L968.8,511.2 L957.2,513.6 L945.4,515.6 L933.4,517.0 L921.2,518.0 L908.9,518.6 L896.5,518.6 L884.1,518.2 L871.6,517.3 L859.1,515.9 L846.7,514.1 L834.3,511.8 L822.1,509.0 L810.0,505.8 L798.1,502.2 L786.4,498.1 L774.9,493.6 L763.7,488.7 L752.8,483.4 L742.3,477.7M1101.2,424.9 L1097.9,433.9 L1094.1,442.5 L1089.7,451.0 L1084.7,459.1 L1079.1,466.9 L1073.0,474.4 L1066.3,481.5 L1059.1,488.3 L1051.4,494.7 L1043.2,500.6 L1034.5,506.2 L1025.4,511.2 L1015.9,515.9 L1006.0,520.0 L995.8,523.7 L985.2,526.9 L974.3,529.6 L963.2,531.8 L951.8,533.5 L940.2,534.6 L928.4,535.3 L916.4,535.4 L904.4,535.0 L892.3,534.1 L880.1,532.6 L867.9,530.7 L855.7,528.2 L843.6,525.2 L831.6,521.8 L819.7,517.8 L807.9,513.4 L796.3,508.5 L785.0,503.2 L773.9,497.4 L763.0,491.3 L752.5,484.7 L742.3,477.7M1078.5,471.7 L1073.4,480.0 L1067.7,488.0 L1061.5,495.6 L1054.8,502.7 L1047.6,509.4 L1040.0,515.7 L1031.9,521.5 L1023.3,526.9 L1014.4,531.7 L1005.0,536.0 L995.3,539.8 L985.3,543.1 L975.0,545.8 L964.4,547.9 L953.5,549.6 L942.5,550.6 L931.2,551.1 L919.8,551.0 L908.3,550.4 L896.7,549.2 L885.0,547.4 L873.3,545.1 L861.6,542.2 L850.0,538.8 L838.4,534.8 L826.9,530.4 L815.6,525.4 L804.4,519.9 L793.4,514.0 L782.6,507.6 L772.1,500.7 L761.8,493.5 L751.9,485.8 L742.3,477.7" fill="none" stroke="#121214" stroke-width="1.60" opacity="0.9"/>
<path d="M997.8,138.8h4.0v4.0h-4.0zM1018.9,153.8h4.0v4.0h-4.0zM1038.7,171.1h4.0v4.0h-4.0zM1056.7,190.4h4.0v4.0h-4.0zM1072.5,211.0h4.0v4.0h-4.0zM1085.8,232.6h4.0v4.0h-4.0zM911.5,106.6h4.0v4.0h-4.0zM936.3,113.6h4.0v4.0h-4.0zM961.6,124.2h4.0v4.0h-4.0zM986.6,138.4h4.0v4.0h-4.0zM1010.7,155.6h4.0v4.0h-4.0zM1033.4,175.5h4.0v4.0h-4.0zM1054.0,197.6h4.0v4.0h-4.0zM1072.2,221.3h4.0v4.0h-4.0zM1087.4,246.0h4.0v4.0h-4.0zM1099.3,271.3h4.0v4.0h-4.0zM1107.5,296.3h4.0v4.0h-4.0zM863.4,104.5h4.0v4.0h-4.0zM889.7,107.9h4.0v4.0h-4.0zM917.1,115.6h4.0v4.0h-4.0zM944.9,127.4h4.0v4.0h-4.0zM972.5,143.0h4.0v4.0h-4.0zM999.1,162.0h4.0v4.0h-4.0zM1024.1,184.0h4.0v4.0h-4.0zM1046.9,208.3h4.0v4.0h-4.0zM1067.0,234.5h4.0v4.0h-4.0zM1083.8,261.8h4.0v4.0h-4.0zM1096.9,289.7h4.0v4.0h-4.0zM1106.0,317.3h4.0v4.0h-4.0zM1110.8,344.0h4.0v4.0h-4.0zM813.0,112.4h4.0v4.0h-4.0zM839.3,111.4h4.0v4.0h-4.0zM867.4,115.1h4.0v4.0h-4.0zM896.7,123.3h4.0v4.0h-4.0zM926.5,135.9h4.0v4.0h-4.0zM955.9,152.6h4.0v4.0h-4.0zM984.4,172.9h4.0v4.0h-4.0zM1011.2,196.4h4.0v4.0h-4.0zM1035.6,222.4h4.0v4.0h-4.0zM1057.0,250.4h4.0v4.0h-4.0zM1074.9,279.6h4.0v4.0h-4.0zM1088.9,309.4h4.0v4.0h-4.0zM1098.7,338.9h4.0v4.0h-4.0zM1103.9,367.5h4.0v4.0h-4.0zM1104.4,394.5h4.0v4.0h-4.0zM764.0,131.0h4.0v4.0h-4.0zM788.7,125.1h4.0v4.0h-4.0zM816.1,124.1h4.0v4.0h-4.0zM845.3,127.9h4.0v4.0h-4.0zM875.8,136.4h4.0v4.0h-4.0zM906.7,149.5h4.0v4.0h-4.0zM937.4,166.9h4.0v4.0h-4.0zM967.0,188.0h4.0v4.0h-4.0zM994.8,212.4h4.0v4.0h-4.0zM1020.2,239.5h4.0v4.0h-4.0zM1042.5,268.6h4.0v4.0h-4.0zM1061.1,299.0h4.0v4.0h-4.0zM1075.7,329.9h4.0v4.0h-4.0zM1085.8,360.6h4.0v4.0h-4.0zM1091.2,390.4h4.0v4.0h-4.0zM1091.8,418.4h4.0v4.0h-4.0zM1087.5,444.0h4.0v4.0h-4.0zM719.7,159.8h4.0v4.0h-4.0zM741.5,149.1h4.0v4.0h-4.0zM766.5,143.1h4.0v4.0h-4.0zM794.2,142.1h4.0v4.0h-4.0zM823.9,145.9h4.0v4.0h-4.0zM854.8,154.6h4.0v4.0h-4.0zM886.1,167.9h4.0v4.0h-4.0zM917.2,185.5h4.0v4.0h-4.0zM947.2,206.9h4.0v4.0h-4.0zM975.5,231.7h4.0v4.0h-4.0zM1001.2,259.1h4.0v4.0h-4.0zM1023.8,288.6h4.0v4.0h-4.0zM1042.7,319.4h4.0v4.0h-4.0zM1057.4,350.8h4.0v4.0h-4.0zM1067.7,381.9h4.0v4.0h-4.0zM1073.2,412.1h4.0v4.0h-4.0zM1073.8,440.5h4.0v4.0h-4.0zM1069.4,466.5h4.0v4.0h-4.0zM1060.3,489.4h4.0v4.0h-4.0zM682.9,197.6h4.0v4.0h-4.0zM700.6,182.6h4.0v4.0h-4.0zM722.2,172.0h4.0v4.0h-4.0zM746.9,166.1h4.0v4.0h-4.0zM774.3,165.0h4.0v4.0h-4.0zM803.7,168.9h4.0v4.0h-4.0zM834.2,177.4h4.0v4.0h-4.0zM865.2,190.6h4.0v4.0h-4.0zM896.0,208.0h4.0v4.0h-4.0zM925.7,229.2h4.0v4.0h-4.0zM953.6,253.6h4.0v4.0h-4.0zM979.0,280.8h4.0v4.0h-4.0zM1001.4,310.0h4.0v4.0h-4.0zM1020.1,340.4h4.0v4.0h-4.0zM1034.7,371.5h4.0v4.0h-4.0zM1044.8,402.3h4.0v4.0h-4.0zM1050.2,432.1h4.0v4.0h-4.0zM1050.8,460.2h4.0v4.0h-4.0zM1046.5,485.9h4.0v4.0h-4.0zM1037.5,508.6h4.0v4.0h-4.0zM1023.9,527.7h4.0v4.0h-4.0zM980.4,556.5h4.0v4.0h-4.0zM655.6,242.1h4.0v4.0h-4.0zM668.7,223.8h4.0v4.0h-4.0zM685.8,209.3h4.0v4.0h-4.0zM706.6,199.1h4.0v4.0h-4.0zM730.4,193.4h4.0v4.0h-4.0zM756.9,192.4h4.0v4.0h-4.0zM785.1,196.1h4.0v4.0h-4.0zM814.6,204.3h4.0v4.0h-4.0zM844.5,217.0h4.0v4.0h-4.0zM874.2,233.8h4.0v4.0h-4.0zM902.8,254.2h4.0v4.0h-4.0zM929.7,277.8h4.0v4.0h-4.0zM954.2,304.0h4.0v4.0h-4.0zM975.8,332.1h4.0v4.0h-4.0zM993.8,361.5h4.0v4.0h-4.0zM1007.9,391.4h4.0v4.0h-4.0zM1017.7,421.1h4.0v4.0h-4.0zM1022.9,449.9h4.0v4.0h-4.0zM1023.5,477.0h4.0v4.0h-4.0zM1019.3,501.8h4.0v4.0h-4.0zM1010.6,523.7h4.0v4.0h-4.0zM997.5,542.1h4.0v4.0h-4.0zM952.0,565.1h4.0v4.0h-4.0zM932.5,574.7h4.0v4.0h-4.0zM647.2,270.1h4.0v4.0h-4.0zM659.5,252.9h4.0v4.0h-4.0zM675.6,239.3h4.0v4.0h-4.0zM695.1,229.7h4.0v4.0h-4.0zM717.5,224.4h4.0v4.0h-4.0zM742.2,223.4h4.0v4.0h-4.0zM768.8,226.9h4.0v4.0h-4.0zM796.4,234.7h4.0v4.0h-4.0zM824.5,246.6h4.0v4.0h-4.0zM852.3,262.3h4.0v4.0h-4.0zM879.2,281.5h4.0v4.0h-4.0zM904.4,303.6h4.0v4.0h-4.0zM927.5,328.2h4.0v4.0h-4.0zM947.7,354.6h4.0v4.0h-4.0zM964.6,382.2h4.0v4.0h-4.0zM977.8,410.2h4.0v4.0h-4.0zM987.0,438.1h4.0v4.0h-4.0zM991.9,465.1h4.0v4.0h-4.0zM992.4,490.5h4.0v4.0h-4.0zM988.6,513.8h4.0v4.0h-4.0zM980.4,534.3h4.0v4.0h-4.0zM968.1,551.6h4.0v4.0h-4.0zM921.7,568.3h4.0v4.0h-4.0zM903.9,577.0h4.0v4.0h-4.0zM883.6,581.8h4.0v4.0h-4.0zM633.4,339.7h4.0v4.0h-4.0zM637.0,318.6h4.0v4.0h-4.0zM644.4,299.9h4.0v4.0h-4.0zM655.6,284.2h4.0v4.0h-4.0zM670.2,271.8h4.0v4.0h-4.0zM687.9,263.1h4.0v4.0h-4.0zM708.3,258.3h4.0v4.0h-4.0zM730.9,257.4h4.0v4.0h-4.0zM755.0,260.6h4.0v4.0h-4.0zM780.2,267.6h4.0v4.0h-4.0zM805.7,278.5h4.0v4.0h-4.0zM831.0,292.8h4.0v4.0h-4.0zM855.4,310.2h4.0v4.0h-4.0zM878.4,330.4h4.0v4.0h-4.0zM899.4,352.7h4.0v4.0h-4.0zM917.7,376.7h4.0v4.0h-4.0zM933.1,401.8h4.0v4.0h-4.0zM945.2,427.3h4.0v4.0h-4.0zM953.5,452.7h4.0v4.0h-4.0zM958.0,477.2h4.0v4.0h-4.0zM958.4,500.4h4.0v4.0h-4.0zM954.9,521.6h4.0v4.0h-4.0zM947.5,540.2h4.0v4.0h-4.0zM936.3,555.9h4.0v4.0h-4.0zM890.1,565.9h4.0v4.0h-4.0zM874.6,573.5h4.0v4.0h-4.0zM856.8,577.7h4.0v4.0h-4.0zM837.0,578.5h4.0v4.0h-4.0zM815.9,575.8h4.0v4.0h-4.0zM638.0,385.9h4.0v4.0h-4.0zM637.6,365.6h4.0v4.0h-4.0zM640.7,347.1h4.0v4.0h-4.0zM647.2,330.7h4.0v4.0h-4.0zM657.0,317.0h4.0v4.0h-4.0zM669.8,306.2h4.0v4.0h-4.0zM685.4,298.5h4.0v4.0h-4.0zM703.2,294.3h4.0v4.0h-4.0zM723.0,293.5h4.0v4.0h-4.0zM744.1,296.3h4.0v4.0h-4.0zM766.2,302.5h4.0v4.0h-4.0zM788.5,312.0h4.0v4.0h-4.0zM810.7,324.5h4.0v4.0h-4.0zM832.1,339.8h4.0v4.0h-4.0zM852.2,357.4h4.0v4.0h-4.0zM870.6,377.0h4.0v4.0h-4.0zM886.7,398.1h4.0v4.0h-4.0zM900.2,420.0h4.0v4.0h-4.0zM910.7,442.4h4.0v4.0h-4.0zM918.0,464.6h4.0v4.0h-4.0zM921.9,486.1h4.0v4.0h-4.0zM922.4,506.4h4.0v4.0h-4.0zM919.3,524.9h4.0v4.0h-4.0zM912.8,541.3h4.0v4.0h-4.0zM903.0,555.0h4.0v4.0h-4.0zM858.2,558.0h4.0v4.0h-4.0zM845.2,564.3h4.0v4.0h-4.0zM830.3,567.9h4.0v4.0h-4.0zM813.9,568.5h4.0v4.0h-4.0zM796.2,566.2h4.0v4.0h-4.0zM777.9,561.0h4.0v4.0h-4.0zM759.2,553.1h4.0v4.0h-4.0zM740.7,542.7h4.0v4.0h-4.0zM677.3,481.3h4.0v4.0h-4.0zM666.1,463.0h4.0v4.0h-4.0zM657.3,444.4h4.0v4.0h-4.0zM651.2,425.8h4.0v4.0h-4.0zM647.9,407.9h4.0v4.0h-4.0zM647.6,391.0h4.0v4.0h-4.0zM650.2,375.5h4.0v4.0h-4.0zM655.6,361.9h4.0v4.0h-4.0zM663.8,350.4h4.0v4.0h-4.0zM674.5,341.4h4.0v4.0h-4.0zM687.4,335.0h4.0v4.0h-4.0zM702.3,331.5h4.0v4.0h-4.0zM718.8,330.8h4.0v4.0h-4.0zM736.4,333.1h4.0v4.0h-4.0zM754.8,338.3h4.0v4.0h-4.0zM773.5,346.2h4.0v4.0h-4.0zM791.9,356.7h4.0v4.0h-4.0zM809.8,369.4h4.0v4.0h-4.0zM826.6,384.1h4.0v4.0h-4.0zM841.9,400.5h4.0v4.0h-4.0zM855.3,418.0h4.0v4.0h-4.0zM866.6,436.3h4.0v4.0h-4.0zM875.4,455.0h4.0v4.0h-4.0zM881.5,473.5h4.0v4.0h-4.0zM884.7,491.5h4.0v4.0h-4.0zM885.1,508.4h4.0v4.0h-4.0zM882.5,523.8h4.0v4.0h-4.0zM877.0,537.5h4.0v4.0h-4.0zM868.9,548.9h4.0v4.0h-4.0zM826.6,544.8h4.0v4.0h-4.0zM816.6,549.7h4.0v4.0h-4.0zM805.0,552.5h4.0v4.0h-4.0zM792.2,553.0h4.0v4.0h-4.0zM778.5,551.2h4.0v4.0h-4.0zM764.2,547.2h4.0v4.0h-4.0zM749.8,541.0h4.0v4.0h-4.0zM735.4,532.9h4.0v4.0h-4.0zM721.5,523.0h4.0v4.0h-4.0zM708.5,511.6h4.0v4.0h-4.0zM696.6,498.9h4.0v4.0h-4.0zM686.2,485.3h4.0v4.0h-4.0zM677.5,471.1h4.0v4.0h-4.0zM670.7,456.6h4.0v4.0h-4.0zM665.9,442.2h4.0v4.0h-4.0zM663.4,428.3h4.0v4.0h-4.0zM663.1,415.2h4.0v4.0h-4.0zM665.1,403.1h4.0v4.0h-4.0zM669.3,392.6h4.0v4.0h-4.0zM675.7,383.7h4.0v4.0h-4.0zM684.0,376.6h4.0v4.0h-4.0zM694.0,371.7h4.0v4.0h-4.0zM705.6,369.0h4.0v4.0h-4.0zM718.4,368.5h4.0v4.0h-4.0zM732.1,370.2h4.0v4.0h-4.0zM746.3,374.3h4.0v4.0h-4.0zM760.8,380.4h4.0v4.0h-4.0zM775.2,388.5h4.0v4.0h-4.0zM789.0,398.4h4.0v4.0h-4.0zM802.1,409.8h4.0v4.0h-4.0zM813.9,422.5h4.0v4.0h-4.0zM824.4,436.1h4.0v4.0h-4.0zM833.1,450.4h4.0v4.0h-4.0zM839.9,464.8h4.0v4.0h-4.0zM844.7,479.2h4.0v4.0h-4.0zM847.2,493.1h4.0v4.0h-4.0zM847.5,506.3h4.0v4.0h-4.0zM845.5,518.3h4.0v4.0h-4.0zM841.2,528.9h4.0v4.0h-4.0zM834.9,537.8h4.0v4.0h-4.0zM796.2,526.6h4.0v4.0h-4.0zM789.3,530.0h4.0v4.0h-4.0zM781.3,531.9h4.0v4.0h-4.0zM772.5,532.2h4.0v4.0h-4.0zM763.1,531.0h4.0v4.0h-4.0zM753.3,528.3h4.0v4.0h-4.0zM743.3,524.0h4.0v4.0h-4.0zM733.5,518.5h4.0v4.0h-4.0zM724.0,511.7h4.0v4.0h-4.0zM715.0,503.8h4.0v4.0h-4.0zM706.8,495.1h4.0v4.0h-4.0zM699.7,485.7h4.0v4.0h-4.0zM693.7,476.0h4.0v4.0h-4.0zM689.0,466.0h4.0v4.0h-4.0zM685.7,456.1h4.0v4.0h-4.0zM684.0,446.6h4.0v4.0h-4.0zM683.8,437.5h4.0v4.0h-4.0zM685.2,429.3h4.0v4.0h-4.0zM688.1,422.0h4.0v4.0h-4.0zM692.4,415.9h4.0v4.0h-4.0zM698.1,411.1h4.0v4.0h-4.0zM705.1,407.7h4.0v4.0h-4.0zM713.0,405.8h4.0v4.0h-4.0zM721.8,405.5h4.0v4.0h-4.0zM731.2,406.7h4.0v4.0h-4.0zM741.0,409.4h4.0v4.0h-4.0zM751.0,413.7h4.0v4.0h-4.0zM760.8,419.2h4.0v4.0h-4.0zM770.3,426.0h4.0v4.0h-4.0zM779.3,433.9h4.0v4.0h-4.0zM787.5,442.6h4.0v4.0h-4.0zM794.6,452.0h4.0v4.0h-4.0zM800.6,461.7h4.0v4.0h-4.0zM805.3,471.7h4.0v4.0h-4.0zM808.6,481.6h4.0v4.0h-4.0zM810.3,491.1h4.0v4.0h-4.0zM810.5,500.2h4.0v4.0h-4.0zM809.1,508.4h4.0v4.0h-4.0zM806.2,515.7h4.0v4.0h-4.0zM801.9,521.8h4.0v4.0h-4.0zM767.6,503.9h4.0v4.0h-4.0zM764.0,505.7h4.0v4.0h-4.0zM759.9,506.7h4.0v4.0h-4.0zM755.3,506.9h4.0v4.0h-4.0zM750.4,506.2h4.0v4.0h-4.0zM745.3,504.8h4.0v4.0h-4.0zM740.1,502.6h4.0v4.0h-4.0zM735.0,499.7h4.0v4.0h-4.0zM730.1,496.2h4.0v4.0h-4.0zM725.4,492.1h4.0v4.0h-4.0zM721.1,487.5h4.0v4.0h-4.0zM717.4,482.7h4.0v4.0h-4.0zM714.3,477.6h4.0v4.0h-4.0zM711.9,472.4h4.0v4.0h-4.0zM710.2,467.3h4.0v4.0h-4.0zM709.3,462.3h4.0v4.0h-4.0zM709.2,457.6h4.0v4.0h-4.0zM709.9,453.3h4.0v4.0h-4.0zM711.4,449.5h4.0v4.0h-4.0zM713.7,446.3h4.0v4.0h-4.0zM716.6,443.8h4.0v4.0h-4.0zM720.2,442.1h4.0v4.0h-4.0zM724.3,441.1h4.0v4.0h-4.0zM728.9,440.9h4.0v4.0h-4.0zM733.8,441.6h4.0v4.0h-4.0zM738.9,443.0h4.0v4.0h-4.0zM744.1,445.2h4.0v4.0h-4.0zM749.2,448.1h4.0v4.0h-4.0zM754.2,451.6h4.0v4.0h-4.0zM758.8,455.7h4.0v4.0h-4.0zM763.1,460.2h4.0v4.0h-4.0zM766.8,465.1h4.0v4.0h-4.0zM769.9,470.2h4.0v4.0h-4.0zM772.4,475.4h4.0v4.0h-4.0zM774.1,480.5h4.0v4.0h-4.0zM775.0,485.5h4.0v4.0h-4.0zM775.1,490.2h4.0v4.0h-4.0zM774.3,494.5h4.0v4.0h-4.0zM772.8,498.2h4.0v4.0h-4.0zM770.6,501.4h4.0v4.0h-4.0zM741.6,477.3h4.0v4.0h-4.0zM741.5,477.4h4.0v4.0h-4.0zM741.2,477.4h4.0v4.0h-4.0zM741.0,477.4h4.0v4.0h-4.0zM740.7,477.4h4.0v4.0h-4.0zM740.5,477.3h4.0v4.0h-4.0zM740.2,477.2h4.0v4.0h-4.0zM739.9,477.1h4.0v4.0h-4.0zM739.7,476.9h4.0v4.0h-4.0zM739.4,476.7h4.0v4.0h-4.0zM739.2,476.4h4.0v4.0h-4.0zM739.0,476.2h4.0v4.0h-4.0zM738.8,475.9h4.0v4.0h-4.0zM738.7,475.6h4.0v4.0h-4.0zM738.6,475.4h4.0v4.0h-4.0zM738.6,475.1h4.0v4.0h-4.0zM738.6,474.8h4.0v4.0h-4.0zM738.6,474.6h4.0v4.0h-4.0zM738.7,474.4h4.0v4.0h-4.0zM738.8,474.2h4.0v4.0h-4.0zM739.0,474.1h4.0v4.0h-4.0zM739.1,474.0h4.0v4.0h-4.0zM739.4,474.0h4.0v4.0h-4.0zM739.6,474.0h4.0v4.0h-4.0zM739.9,474.0h4.0v4.0h-4.0zM740.1,474.1h4.0v4.0h-4.0zM740.4,474.2h4.0v4.0h-4.0zM740.7,474.3h4.0v4.0h-4.0zM740.9,474.5h4.0v4.0h-4.0zM741.2,474.7h4.0v4.0h-4.0zM741.4,475.0h4.0v4.0h-4.0zM741.6,475.2h4.0v4.0h-4.0zM741.8,475.5h4.0v4.0h-4.0zM741.9,475.8h4.0v4.0h-4.0zM742.0,476.0h4.0v4.0h-4.0zM742.0,476.3h4.0v4.0h-4.0zM742.0,476.6h4.0v4.0h-4.0zM742.0,476.8h4.0v4.0h-4.0zM741.9,477.0h4.0v4.0h-4.0zM741.8,477.2h4.0v4.0h-4.0z" fill="#121214"/>

</g>
<g clip-path="url(#cEar)">
<use href="#shade"/>

<path d="M1106.5,341.0 L1106.7,341.6 L1106.8,342.3 L1106.9,343.0 L1106.9,343.7 L1106.8,344.4 L1106.7,345.1 L1106.5,345.9 L1106.2,346.6 L1105.8,347.3 L1105.4,348.1 L1104.9,348.8 L1104.4,349.5 L1103.7,350.3 L1103.1,351.0 L1102.3,351.6 L1101.6,352.3 L1100.8,352.9 L1099.9,353.5 L1099.0,354.1 L1098.1,354.6 L1097.1,355.1 L1096.1,355.5 L1095.1,355.9 L1094.1,356.3 L1093.0,356.6 L1092.0,356.9 L1091.0,357.1 L1089.9,357.3 L1088.9,357.4 L1087.9,357.5 L1086.9,357.5 L1085.9,357.5 L1085.0,357.4 L1084.1,357.2 L1083.2,357.0 L1082.4,356.8 L1081.6,356.5 L1080.9,356.2 L1080.2,355.8 L1079.6,355.4 L1079.1,354.9 L1078.6,354.4 L1078.2,353.9 L1077.8,353.3 L1077.5,352.7 L1077.3,352.0 L1077.2,351.4 L1077.1,350.7 L1077.1,350.0 L1077.2,349.3 L1077.3,348.6 L1077.5,347.8 L1077.8,347.1 L1078.2,346.3 L1078.6,345.6 L1079.1,344.9 L1079.6,344.1 L1080.3,343.4 L1080.9,342.7 L1081.7,342.1 L1082.4,341.4 L1083.2,340.8 L1084.1,340.2 L1085.0,339.6 L1085.9,339.1 L1086.9,338.6 L1087.9,338.1 L1088.9,337.7 L1089.9,337.4 L1091.0,337.1 L1092.0,336.8 L1093.0,336.6 L1094.1,336.4 L1095.1,336.3 L1096.1,336.2 L1097.1,336.2 L1098.1,336.2 L1099.0,336.3 L1099.9,336.5 L1100.8,336.6 L1101.6,336.9 L1102.4,337.2 L1103.1,337.5 L1103.8,337.9 L1104.4,338.3 L1104.9,338.8 L1105.4,339.3 L1105.8,339.8 L1106.2,340.4 L1106.5,341.0M1118.4,336.3 L1118.7,337.3 L1119.0,338.4 L1119.1,339.5 L1119.1,340.6 L1119.0,341.7 L1118.7,342.9 L1118.4,344.0 L1117.9,345.2 L1117.4,346.4 L1116.7,347.6 L1115.9,348.7 L1115.1,349.9 L1114.1,351.0 L1113.0,352.1 L1111.9,353.2 L1110.7,354.2 L1109.4,355.2 L1108.0,356.1 L1106.6,357.0 L1105.1,357.9 L1103.6,358.6 L1102.0,359.3 L1100.4,360.0 L1098.8,360.6 L1097.1,361.1 L1095.5,361.5 L1093.8,361.8 L1092.2,362.1 L1090.6,362.3 L1089.0,362.4 L1087.4,362.4 L1085.9,362.4 L1084.4,362.2 L1083.0,362.0 L1081.6,361.7 L1080.3,361.3 L1079.1,360.9 L1078.0,360.4 L1076.9,359.8 L1075.9,359.1 L1075.1,358.4 L1074.3,357.6 L1073.6,356.7 L1073.1,355.8 L1072.6,354.8 L1072.3,353.8 L1072.0,352.8 L1071.9,351.7 L1071.9,350.6 L1072.0,349.5 L1072.3,348.3 L1072.6,347.1 L1073.1,346.0 L1073.6,344.8 L1074.3,343.6 L1075.1,342.4 L1075.9,341.3 L1076.9,340.2 L1078.0,339.1 L1079.1,338.0 L1080.3,337.0 L1081.6,336.0 L1083.0,335.0 L1084.4,334.1 L1085.9,333.3 L1087.4,332.5 L1089.0,331.8 L1090.6,331.2 L1092.2,330.6 L1093.9,330.1 L1095.5,329.7 L1097.2,329.3 L1098.8,329.0 L1100.4,328.9 L1102.0,328.7 L1103.6,328.7 L1105.1,328.8 L1106.6,328.9 L1108.0,329.1 L1109.4,329.4 L1110.7,329.8 L1111.9,330.3 L1113.0,330.8 L1114.1,331.4 L1115.1,332.1 L1115.9,332.8 L1116.7,333.6 L1117.4,334.5 L1117.9,335.4 L1118.4,336.3M1130.3,331.7 L1130.8,333.0 L1131.1,334.5 L1131.3,335.9 L1131.3,337.5 L1131.1,339.0 L1130.8,340.6 L1130.3,342.2 L1129.7,343.8 L1128.9,345.4 L1128.0,347.0 L1127.0,348.6 L1125.8,350.2 L1124.4,351.7 L1123.0,353.2 L1121.4,354.7 L1119.7,356.1 L1118.0,357.5 L1116.1,358.7 L1114.1,360.0 L1112.1,361.1 L1110.0,362.2 L1107.9,363.2 L1105.7,364.0 L1103.5,364.8 L1101.2,365.5 L1099.0,366.1 L1096.7,366.6 L1094.5,366.9 L1092.3,367.2 L1090.1,367.4 L1087.9,367.4 L1085.8,367.3 L1083.8,367.1 L1081.9,366.8 L1080.0,366.4 L1078.2,365.9 L1076.6,365.3 L1075.0,364.6 L1073.5,363.7 L1072.2,362.8 L1071.0,361.8 L1070.0,360.7 L1069.1,359.5 L1068.3,358.3 L1067.7,357.0 L1067.2,355.6 L1066.9,354.2 L1066.7,352.7 L1066.7,351.2 L1066.9,349.6 L1067.2,348.0 L1067.7,346.4 L1068.3,344.8 L1069.1,343.2 L1070.0,341.6 L1071.0,340.0 L1072.2,338.5 L1073.6,336.9 L1075.0,335.4 L1076.6,333.9 L1078.3,332.5 L1080.0,331.2 L1081.9,329.9 L1083.9,328.7 L1085.9,327.5 L1088.0,326.5 L1090.1,325.5 L1092.3,324.6 L1094.5,323.8 L1096.8,323.1 L1099.0,322.5 L1101.3,322.1 L1103.5,321.7 L1105.7,321.4 L1107.9,321.3 L1110.1,321.3 L1112.2,321.3 L1114.2,321.5 L1116.1,321.8 L1118.0,322.2 L1119.8,322.7 L1121.4,323.4 L1123.0,324.1 L1124.5,324.9 L1125.8,325.8 L1127.0,326.8 L1128.0,327.9 L1128.9,329.1 L1129.7,330.3 L1130.3,331.7M1142.3,327.0 L1142.9,328.7 L1143.3,330.6 L1143.5,332.4 L1143.5,334.4 L1143.3,336.3 L1142.9,338.3 L1142.3,340.4 L1141.5,342.4 L1140.5,344.4 L1139.3,346.5 L1138.0,348.5 L1136.5,350.5 L1134.8,352.5 L1132.9,354.4 L1131.0,356.2 L1128.8,358.0 L1126.6,359.7 L1124.2,361.4 L1121.7,362.9 L1119.1,364.4 L1116.5,365.7 L1113.8,367.0 L1111.0,368.1 L1108.2,369.1 L1105.3,370.0 L1102.5,370.7 L1099.6,371.3 L1096.8,371.8 L1094.0,372.1 L1091.2,372.3 L1088.5,372.3 L1085.8,372.2 L1083.2,372.0 L1080.8,371.6 L1078.4,371.1 L1076.1,370.4 L1074.0,369.7 L1072.0,368.7 L1070.2,367.7 L1068.5,366.5 L1067.0,365.3 L1065.6,363.9 L1064.5,362.4 L1063.5,360.8 L1062.7,359.1 L1062.1,357.4 L1061.7,355.6 L1061.5,353.7 L1061.5,351.8 L1061.7,349.8 L1062.1,347.8 L1062.7,345.8 L1063.5,343.7 L1064.5,341.7 L1065.7,339.6 L1067.0,337.6 L1068.5,335.6 L1070.2,333.7 L1072.1,331.8 L1074.0,329.9 L1076.2,328.1 L1078.4,326.4 L1080.8,324.7 L1083.3,323.2 L1085.9,321.7 L1088.5,320.4 L1091.2,319.2 L1094.0,318.0 L1096.8,317.0 L1099.7,316.2 L1102.5,315.4 L1105.4,314.8 L1108.2,314.3 L1111.0,314.0 L1113.8,313.8 L1116.5,313.8 L1119.2,313.9 L1121.8,314.1 L1124.2,314.5 L1126.6,315.0 L1128.9,315.7 L1131.0,316.5 L1133.0,317.4 L1134.8,318.4 L1136.5,319.6 L1138.0,320.9 L1139.4,322.3 L1140.5,323.7 L1141.5,325.3 L1142.3,327.0M1155.9,321.7 L1156.7,323.8 L1157.1,326.1 L1157.4,328.4 L1157.4,330.8 L1157.1,333.3 L1156.6,335.7 L1155.9,338.3 L1154.9,340.8 L1153.7,343.3 L1152.3,345.9 L1150.6,348.4 L1148.7,350.9 L1146.6,353.3 L1144.3,355.7 L1141.9,358.0 L1139.2,360.2 L1136.4,362.3 L1133.5,364.4 L1130.4,366.3 L1127.2,368.1 L1123.9,369.8 L1120.5,371.3 L1117.1,372.7 L1113.6,374.0 L1110.0,375.0 L1106.5,376.0 L1102.9,376.7 L1099.4,377.3 L1095.9,377.7 L1092.4,377.9 L1089.1,378.0 L1085.8,377.9 L1082.6,377.6 L1079.5,377.1 L1076.5,376.5 L1073.7,375.6 L1071.1,374.7 L1068.6,373.5 L1066.4,372.2 L1064.3,370.8 L1062.4,369.2 L1060.7,367.5 L1059.3,365.6 L1058.1,363.7 L1057.1,361.6 L1056.3,359.4 L1055.9,357.2 L1055.6,354.8 L1055.6,352.4 L1055.9,350.0 L1056.4,347.5 L1057.1,345.0 L1058.1,342.4 L1059.3,339.9 L1060.7,337.4 L1062.4,334.9 L1064.3,332.4 L1066.4,329.9 L1068.7,327.6 L1071.1,325.3 L1073.8,323.0 L1076.6,320.9 L1079.5,318.9 L1082.6,316.9 L1085.8,315.1 L1089.1,313.5 L1092.5,311.9 L1095.9,310.5 L1099.4,309.3 L1103.0,308.2 L1106.5,307.3 L1110.1,306.5 L1113.6,305.9 L1117.1,305.5 L1120.6,305.3 L1123.9,305.2 L1127.2,305.4 L1130.4,305.7 L1133.5,306.1 L1136.5,306.8 L1139.3,307.6 L1141.9,308.6 L1144.4,309.7 L1146.6,311.0 L1148.7,312.5 L1150.6,314.0 L1152.3,315.8 L1153.7,317.6 L1154.9,319.6 L1155.9,321.7M1171.3,315.7 L1172.2,318.3 L1172.8,321.0 L1173.1,323.9 L1173.1,326.8 L1172.8,329.8 L1172.2,332.8 L1171.2,335.9 L1170.0,339.0 L1168.6,342.1 L1166.8,345.2 L1164.8,348.2 L1162.5,351.3 L1159.9,354.2 L1157.1,357.1 L1154.1,359.9 L1150.9,362.7 L1147.5,365.3 L1143.9,367.7 L1140.1,370.1 L1136.2,372.3 L1132.2,374.3 L1128.1,376.2 L1123.9,377.9 L1119.6,379.4 L1115.3,380.8 L1111.0,381.9 L1106.6,382.8 L1102.3,383.5 L1098.0,384.0 L1093.8,384.3 L1089.7,384.4 L1085.7,384.2 L1081.8,383.9 L1078.1,383.3 L1074.5,382.5 L1071.1,381.5 L1067.8,380.3 L1064.8,378.9 L1062.0,377.3 L1059.5,375.6 L1057.2,373.6 L1055.2,371.5 L1053.4,369.3 L1051.9,366.9 L1050.7,364.3 L1049.8,361.7 L1049.2,359.0 L1048.9,356.1 L1048.9,353.2 L1049.2,350.2 L1049.8,347.2 L1050.8,344.1 L1052.0,341.0 L1053.4,337.9 L1055.2,334.8 L1057.2,331.8 L1059.5,328.7 L1062.1,325.8 L1064.9,322.9 L1067.9,320.1 L1071.1,317.3 L1074.5,314.7 L1078.1,312.3 L1081.9,309.9 L1085.8,307.7 L1089.8,305.7 L1093.9,303.8 L1098.1,302.1 L1102.4,300.6 L1106.7,299.2 L1111.0,298.1 L1115.4,297.2 L1119.7,296.5 L1124.0,296.0 L1128.2,295.7 L1132.3,295.6 L1136.3,295.8 L1140.2,296.1 L1143.9,296.7 L1147.5,297.5 L1150.9,298.5 L1154.2,299.7 L1157.2,301.1 L1160.0,302.7 L1162.5,304.4 L1164.8,306.4 L1166.8,308.5 L1168.6,310.7 L1170.1,313.1 L1171.3,315.7M1186.6,309.6 L1187.7,312.8 L1188.4,316.0 L1188.7,319.4 L1188.7,322.8 L1188.4,326.3 L1187.7,329.9 L1186.6,333.6 L1185.2,337.2 L1183.4,340.9 L1181.3,344.5 L1178.9,348.1 L1176.2,351.7 L1173.2,355.2 L1169.9,358.6 L1166.4,361.9 L1162.6,365.1 L1158.5,368.2 L1154.3,371.1 L1149.9,373.9 L1145.3,376.5 L1140.5,378.9 L1135.7,381.1 L1130.7,383.1 L1125.7,384.9 L1120.6,386.5 L1115.5,387.8 L1110.3,388.9 L1105.3,389.7 L1100.2,390.3 L1095.3,390.6 L1090.4,390.7 L1085.7,390.6 L1081.1,390.1 L1076.6,389.4 L1072.4,388.5 L1068.4,387.3 L1064.6,385.9 L1061.0,384.3 L1057.7,382.4 L1054.7,380.3 L1052.0,378.1 L1049.6,375.6 L1047.5,372.9 L1045.8,370.1 L1044.4,367.1 L1043.3,364.0 L1042.6,360.7 L1042.3,357.4 L1042.3,353.9 L1042.6,350.4 L1043.3,346.8 L1044.4,343.2 L1045.8,339.6 L1047.6,335.9 L1049.7,332.3 L1052.1,328.6 L1054.8,325.1 L1057.8,321.6 L1061.1,318.2 L1064.6,314.8 L1068.4,311.6 L1072.5,308.6 L1076.7,305.6 L1081.1,302.9 L1085.7,300.3 L1090.5,297.9 L1095.3,295.6 L1100.3,293.6 L1105.3,291.9 L1110.4,290.3 L1115.5,289.0 L1120.7,287.9 L1125.7,287.0 L1130.8,286.5 L1135.7,286.1 L1140.6,286.0 L1145.3,286.2 L1149.9,286.6 L1154.4,287.3 L1158.6,288.2 L1162.6,289.4 L1166.4,290.8 L1170.0,292.5 L1173.3,294.3 L1176.3,296.4 L1179.0,298.7 L1181.4,301.2 L1183.5,303.8 L1185.2,306.7 L1186.6,309.6M1203.7,303.0 L1204.9,306.6 L1205.7,310.4 L1206.2,314.4 L1206.1,318.4 L1205.7,322.5 L1204.9,326.7 L1203.6,330.9 L1202.0,335.2 L1199.9,339.5 L1197.5,343.7 L1194.7,348.0 L1191.5,352.1 L1188.0,356.2 L1184.2,360.2 L1180.0,364.1 L1175.5,367.9 L1170.8,371.4 L1165.9,374.9 L1160.7,378.1 L1155.3,381.1 L1149.8,384.0 L1144.1,386.6 L1138.3,388.9 L1132.4,391.0 L1126.4,392.8 L1120.4,394.4 L1114.5,395.6 L1108.5,396.6 L1102.6,397.3 L1096.8,397.7 L1091.1,397.8 L1085.6,397.6 L1080.2,397.1 L1075.0,396.3 L1070.1,395.2 L1065.4,393.8 L1060.9,392.2 L1056.8,390.3 L1052.9,388.1 L1049.4,385.7 L1046.3,383.0 L1043.4,380.1 L1041.0,377.0 L1039.0,373.7 L1037.3,370.2 L1036.1,366.5 L1035.3,362.7 L1034.8,358.8 L1034.9,354.8 L1035.3,350.7 L1036.1,346.5 L1037.4,342.2 L1039.0,338.0 L1041.1,333.7 L1043.5,329.4 L1046.3,325.2 L1049.5,321.0 L1053.0,316.9 L1056.8,312.9 L1061.0,309.1 L1065.5,305.3 L1070.2,301.7 L1075.1,298.3 L1080.3,295.0 L1085.7,292.0 L1091.2,289.2 L1096.9,286.6 L1102.7,284.3 L1108.6,282.2 L1114.6,280.3 L1120.6,278.8 L1126.5,277.5 L1132.5,276.5 L1138.4,275.8 L1144.2,275.5 L1149.9,275.4 L1155.4,275.6 L1160.8,276.1 L1166.0,276.9 L1170.9,277.9 L1175.6,279.3 L1180.1,281.0 L1184.2,282.9 L1188.1,285.1 L1191.6,287.5 L1194.7,290.2 L1197.6,293.1 L1200.0,296.2 L1202.0,299.5 L1203.7,303.0M1222.4,295.6 L1223.9,299.9 L1224.8,304.3 L1225.3,308.8 L1225.3,313.5 L1224.8,318.3 L1223.8,323.1 L1222.4,328.1 L1220.5,333.0 L1218.1,338.0 L1215.3,342.9 L1212.0,347.8 L1208.3,352.6 L1204.3,357.4 L1199.8,362.0 L1195.0,366.5 L1189.8,370.9 L1184.4,375.0 L1178.6,379.0 L1172.6,382.8 L1166.4,386.3 L1159.9,389.5 L1153.3,392.5 L1146.6,395.3 L1139.8,397.7 L1132.9,399.8 L1125.9,401.6 L1119.0,403.1 L1112.1,404.2 L1105.3,405.0 L1098.5,405.5 L1092.0,405.6 L1085.5,405.3 L1079.3,404.8 L1073.3,403.8 L1067.5,402.6 L1062.1,401.0 L1056.9,399.1 L1052.1,396.9 L1047.7,394.3 L1043.6,391.5 L1039.9,388.4 L1036.7,385.0 L1033.8,381.4 L1031.5,377.6 L1029.6,373.6 L1028.1,369.3 L1027.2,364.9 L1026.7,360.4 L1026.7,355.7 L1027.2,350.9 L1028.2,346.1 L1029.6,341.1 L1031.5,336.2 L1033.9,331.2 L1036.7,326.3 L1040.0,321.4 L1043.7,316.6 L1047.7,311.8 L1052.2,307.2 L1057.0,302.7 L1062.2,298.3 L1067.6,294.2 L1073.4,290.2 L1079.4,286.4 L1085.6,282.9 L1092.1,279.7 L1098.7,276.7 L1105.4,273.9 L1112.2,271.5 L1119.1,269.4 L1126.1,267.6 L1133.0,266.1 L1139.9,265.0 L1146.7,264.2 L1153.5,263.7 L1160.0,263.6 L1166.5,263.9 L1172.7,264.4 L1178.7,265.4 L1184.5,266.6 L1189.9,268.2 L1195.1,270.1 L1199.9,272.3 L1204.3,274.9 L1208.4,277.7 L1212.1,280.8 L1215.3,284.2 L1218.2,287.8 L1220.5,291.6 L1222.4,295.6M1242.9,287.6 L1244.5,292.5 L1245.6,297.6 L1246.2,302.8 L1246.2,308.2 L1245.6,313.7 L1244.5,319.3 L1242.9,324.9 L1240.7,330.6 L1237.9,336.3 L1234.7,342.0 L1230.9,347.6 L1226.7,353.2 L1222.0,358.6 L1216.9,364.0 L1211.3,369.1 L1205.4,374.1 L1199.1,378.9 L1192.5,383.5 L1185.6,387.8 L1178.4,391.9 L1171.0,395.6 L1163.4,399.1 L1155.7,402.2 L1147.8,405.0 L1139.9,407.4 L1131.9,409.5 L1124.0,411.2 L1116.0,412.5 L1108.2,413.4 L1100.4,413.9 L1092.8,414.1 L1085.5,413.8 L1078.3,413.1 L1071.4,412.1 L1064.8,410.6 L1058.5,408.8 L1052.6,406.6 L1047.0,404.0 L1041.9,401.1 L1037.2,397.9 L1033.0,394.3 L1029.3,390.5 L1026.0,386.3 L1023.3,381.9 L1021.1,377.2 L1019.5,372.4 L1018.4,367.3 L1017.8,362.1 L1017.8,356.7 L1018.4,351.2 L1019.5,345.6 L1021.1,340.0 L1023.3,334.3 L1026.1,328.6 L1029.3,322.9 L1033.1,317.3 L1037.3,311.7 L1042.0,306.2 L1047.1,300.9 L1052.7,295.7 L1058.6,290.7 L1064.9,286.0 L1071.5,281.4 L1078.4,277.1 L1085.6,273.0 L1093.0,269.3 L1100.6,265.8 L1108.3,262.7 L1116.2,259.9 L1124.1,257.5 L1132.1,255.4 L1140.0,253.7 L1148.0,252.4 L1155.8,251.5 L1163.6,250.9 L1171.2,250.8 L1178.5,251.1 L1185.7,251.7 L1192.6,252.8 L1199.2,254.3 L1205.5,256.1 L1211.4,258.3 L1217.0,260.8 L1222.1,263.8 L1226.8,267.0 L1231.0,270.6 L1234.7,274.4 L1238.0,278.6 L1240.7,283.0 L1242.9,287.6M1265.1,279.0 L1266.9,284.5 L1268.2,290.3 L1268.8,296.3 L1268.8,302.4 L1268.2,308.7 L1266.9,315.1 L1265.0,321.5 L1262.5,328.0 L1259.4,334.5 L1255.7,341.0 L1251.4,347.4 L1246.6,353.8 L1241.2,360.0 L1235.4,366.1 L1229.0,372.0 L1222.3,377.7 L1215.1,383.2 L1207.5,388.4 L1199.7,393.3 L1191.5,397.9 L1183.0,402.2 L1174.4,406.2 L1165.5,409.7 L1156.6,412.9 L1147.5,415.7 L1138.4,418.0 L1129.3,420.0 L1120.3,421.5 L1111.3,422.5 L1102.5,423.1 L1093.8,423.3 L1085.4,423.0 L1077.2,422.2 L1069.3,421.0 L1061.8,419.3 L1054.6,417.2 L1047.8,414.7 L1041.5,411.8 L1035.7,408.5 L1030.3,404.8 L1025.5,400.7 L1021.2,396.3 L1017.6,391.6 L1014.4,386.5 L1011.9,381.2 L1010.1,375.7 L1008.8,369.9 L1008.2,363.9 L1008.2,357.8 L1008.8,351.5 L1010.1,345.1 L1012.0,338.7 L1014.5,332.2 L1017.6,325.7 L1021.3,319.2 L1025.6,312.8 L1030.4,306.4 L1035.8,300.2 L1041.6,294.1 L1048.0,288.2 L1054.7,282.5 L1061.9,277.0 L1069.5,271.8 L1077.3,266.9 L1085.5,262.3 L1094.0,258.0 L1102.6,254.0 L1111.5,250.5 L1120.4,247.3 L1129.5,244.5 L1138.6,242.2 L1147.7,240.2 L1156.7,238.7 L1165.7,237.7 L1174.5,237.1 L1183.2,236.9 L1191.6,237.2 L1199.8,238.0 L1207.7,239.2 L1215.2,240.9 L1222.4,243.0 L1229.2,245.5 L1235.5,248.4 L1241.3,251.7 L1246.7,255.4 L1251.5,259.5 L1255.8,263.9 L1259.4,268.6 L1262.6,273.7 L1265.1,279.0M1288.9,269.6 L1291.1,275.9 L1292.5,282.5 L1293.2,289.2 L1293.2,296.2 L1292.5,303.3 L1291.0,310.5 L1288.9,317.9 L1286.0,325.2 L1282.5,332.6 L1278.3,339.9 L1273.5,347.2 L1268.0,354.4 L1261.9,361.5 L1255.3,368.4 L1248.1,375.0 L1240.4,381.5 L1232.3,387.7 L1223.7,393.6 L1214.8,399.2 L1205.5,404.4 L1196.0,409.3 L1186.1,413.8 L1176.1,417.8 L1166.0,421.4 L1155.7,424.6 L1145.4,427.2 L1135.1,429.4 L1124.8,431.1 L1114.7,432.3 L1104.7,433.0 L1094.9,433.2 L1085.3,432.8 L1076.0,432.0 L1067.1,430.6 L1058.5,428.7 L1050.4,426.3 L1042.8,423.5 L1035.6,420.2 L1029.0,416.4 L1022.9,412.2 L1017.5,407.6 L1012.6,402.6 L1008.4,397.3 L1004.9,391.5 L1002.1,385.5 L999.9,379.2 L998.5,372.7 L997.8,365.9 L997.8,359.0 L998.5,351.8 L1000.0,344.6 L1002.1,337.3 L1005.0,330.0 L1008.5,322.6 L1012.7,315.2 L1017.5,308.0 L1023.0,300.8 L1029.1,293.7 L1035.7,286.8 L1042.9,280.1 L1050.6,273.6 L1058.7,267.4 L1067.3,261.5 L1076.2,256.0 L1085.5,250.7 L1095.0,245.9 L1104.9,241.4 L1114.9,237.3 L1125.0,233.7 L1135.3,230.6 L1145.6,227.9 L1155.9,225.7 L1166.2,224.0 L1176.3,222.8 L1186.3,222.2 L1196.1,222.0 L1205.7,222.3 L1215.0,223.2 L1223.9,224.6 L1232.5,226.4 L1240.6,228.8 L1248.2,231.7 L1255.4,235.0 L1262.0,238.7 L1268.1,242.9 L1273.5,247.5 L1278.4,252.5 L1282.6,257.9 L1286.1,263.6 L1288.9,269.6M1120.1,335.7 L1124.3,334.0 L1128.5,332.4 L1132.8,330.7 L1137.0,329.1 L1141.2,327.4 L1145.4,325.8 L1149.7,324.1 L1153.9,322.5 L1158.1,320.8 L1162.3,319.2 L1166.5,317.5 L1170.8,315.9 L1175.0,314.2 L1179.2,312.5 L1183.4,310.9 L1187.6,309.2 L1191.9,307.6 L1196.1,305.9 L1200.3,304.3 L1204.5,302.6 L1208.7,301.0 L1213.0,299.3 L1217.2,297.7 L1221.4,296.0 L1225.6,294.4 L1229.8,292.7 L1234.1,291.1 L1238.3,289.4 L1242.5,287.8 L1246.7,286.1 L1250.9,284.5 L1255.2,282.8 L1259.4,281.2 L1263.6,279.5 L1267.8,277.9 L1272.1,276.2 L1276.3,274.6 L1280.5,272.9 L1284.7,271.3 L1288.9,269.6M1120.8,338.7 L1125.1,337.5 L1129.4,336.2 L1133.7,334.9 L1138.0,333.7 L1142.4,332.4 L1146.7,331.1 L1151.0,329.9 L1155.3,328.6 L1159.6,327.3 L1163.9,326.0 L1168.2,324.8 L1172.5,323.5 L1176.8,322.2 L1181.1,321.0 L1185.4,319.7 L1189.7,318.4 L1194.1,317.2 L1198.4,315.9 L1202.7,314.6 L1207.0,313.4 L1211.3,312.1 L1215.6,310.8 L1219.9,309.5 L1224.2,308.3 L1228.5,307.0 L1232.8,305.7 L1237.1,304.5 L1241.4,303.2 L1245.7,301.9 L1250.1,300.7 L1254.4,299.4 L1258.7,298.1 L1263.0,296.8 L1267.3,295.6 L1271.6,294.3 L1275.9,293.0 L1280.2,291.8 L1284.5,290.5 L1288.8,289.2 L1293.1,288.0M1120.6,342.1 L1124.8,341.2 L1129.1,340.4 L1133.4,339.5 L1137.7,338.7 L1142.0,337.8 L1146.2,336.9 L1150.5,336.1 L1154.8,335.2 L1159.1,334.4 L1163.3,333.5 L1167.6,332.7 L1171.9,331.8 L1176.2,330.9 L1180.5,330.1 L1184.7,329.2 L1189.0,328.4 L1193.3,327.5 L1197.6,326.7 L1201.8,325.8 L1206.1,324.9 L1210.4,324.1 L1214.7,323.2 L1218.9,322.4 L1223.2,321.5 L1227.5,320.7 L1231.8,319.8 L1236.1,319.0 L1240.3,318.1 L1244.6,317.2 L1248.9,316.4 L1253.2,315.5 L1257.4,314.7 L1261.7,313.8 L1266.0,313.0 L1270.3,312.1 L1274.6,311.2 L1278.8,310.4 L1283.1,309.5 L1287.4,308.7 L1291.7,307.8M1119.4,345.5 L1123.5,345.1 L1127.6,344.7 L1131.8,344.3 L1135.9,343.8 L1140.0,343.4 L1144.2,343.0 L1148.3,342.5 L1152.4,342.1 L1156.5,341.7 L1160.7,341.3 L1164.8,340.8 L1168.9,340.4 L1173.1,340.0 L1177.2,339.6 L1181.3,339.1 L1185.5,338.7 L1189.6,338.3 L1193.7,337.8 L1197.8,337.4 L1202.0,337.0 L1206.1,336.6 L1210.2,336.1 L1214.4,335.7 L1218.5,335.3 L1222.6,334.9 L1226.8,334.4 L1230.9,334.0 L1235.0,333.6 L1239.1,333.1 L1243.3,332.7 L1247.4,332.3 L1251.5,331.9 L1255.7,331.4 L1259.8,331.0 L1263.9,330.6 L1268.1,330.1 L1272.2,329.7 L1276.3,329.3 L1280.4,328.9 L1284.6,328.4M1117.3,349.0 L1121.2,349.0 L1125.0,349.0 L1128.9,349.0 L1132.8,349.0 L1136.6,349.0 L1140.5,349.0 L1144.4,349.0 L1148.3,349.0 L1152.1,349.0 L1156.0,349.0 L1159.9,349.0 L1163.7,349.0 L1167.6,349.0 L1171.5,349.0 L1175.4,349.0 L1179.2,349.0 L1183.1,349.0 L1187.0,349.0 L1190.8,349.0 L1194.7,349.0 L1198.6,349.0 L1202.5,349.0 L1206.3,349.0 L1210.2,349.0 L1214.1,349.0 L1217.9,349.0 L1221.8,349.0 L1225.7,349.0 L1229.6,349.0 L1233.4,349.0 L1237.3,349.0 L1241.2,349.0 L1245.0,349.0 L1248.9,349.0 L1252.8,349.0 L1256.7,349.0 L1260.5,349.0 L1264.4,349.0 L1268.3,349.0 L1272.1,349.0M1114.4,352.3 L1117.9,352.7 L1121.4,353.1 L1124.9,353.6 L1128.4,354.0 L1131.9,354.4 L1135.4,354.8 L1139.0,355.2 L1142.5,355.6 L1146.0,356.0 L1149.5,356.4 L1153.0,356.8 L1156.5,357.3 L1160.0,357.7 L1163.5,358.1 L1167.1,358.5 L1170.6,358.9 L1174.1,359.3 L1177.6,359.7 L1181.1,360.1 L1184.6,360.5 L1188.1,361.0 L1191.6,361.4 L1195.1,361.8 L1198.7,362.2 L1202.2,362.6 L1205.7,363.0 L1209.2,363.4 L1212.7,363.8 L1216.2,364.3 L1219.7,364.7 L1223.2,365.1 L1226.7,365.5 L1230.3,365.9 L1233.8,366.3 L1237.3,366.7 L1240.8,367.1 L1244.3,367.5 L1247.8,368.0 L1251.3,368.4 L1254.8,368.8M1110.8,355.4 L1113.8,356.2 L1116.9,357.0 L1120.0,357.7 L1123.0,358.5 L1126.1,359.3 L1129.1,360.1 L1132.2,360.9 L1135.3,361.7 L1138.3,362.5 L1141.4,363.3 L1144.5,364.1 L1147.5,364.9 L1150.6,365.6 L1153.7,366.4 L1156.7,367.2 L1159.8,368.0 L1162.9,368.8 L1165.9,369.6 L1169.0,370.4 L1172.1,371.2 L1175.1,372.0 L1178.2,372.7 L1181.2,373.5 L1184.3,374.3 L1187.4,375.1 L1190.4,375.9 L1193.5,376.7 L1196.6,377.5 L1199.6,378.3 L1202.7,379.1 L1205.8,379.8 L1208.8,380.6 L1211.9,381.4 L1215.0,382.2 L1218.0,383.0 L1221.1,383.8 L1224.1,384.6 L1227.2,385.4 L1230.3,386.2 L1233.3,387.0M1106.6,358.0 L1109.1,359.2 L1111.7,360.3 L1114.2,361.4 L1116.8,362.5 L1119.3,363.6 L1121.9,364.8 L1124.4,365.9 L1127.0,367.0 L1129.5,368.1 L1132.1,369.2 L1134.6,370.4 L1137.1,371.5 L1139.7,372.6 L1142.2,373.7 L1144.8,374.8 L1147.3,376.0 L1149.9,377.1 L1152.4,378.2 L1155.0,379.3 L1157.5,380.4 L1160.1,381.6 L1162.6,382.7 L1165.2,383.8 L1167.7,384.9 L1170.3,386.0 L1172.8,387.2 L1175.3,388.3 L1177.9,389.4 L1180.4,390.5 L1183.0,391.6 L1185.5,392.8 L1188.1,393.9 L1190.6,395.0 L1193.2,396.1 L1195.7,397.2 L1198.3,398.4 L1200.8,399.5 L1203.4,400.6 L1205.9,401.7 L1208.5,402.8M1102.0,360.2 L1104.0,361.6 L1106.0,363.0 L1107.9,364.4 L1109.9,365.8 L1111.9,367.2 L1113.9,368.6 L1115.8,370.0 L1117.8,371.4 L1119.8,372.7 L1121.8,374.1 L1123.8,375.5 L1125.7,376.9 L1127.7,378.3 L1129.7,379.7 L1131.7,381.1 L1133.7,382.5 L1135.6,383.9 L1137.6,385.3 L1139.6,386.7 L1141.6,388.0 L1143.6,389.4 L1145.5,390.8 L1147.5,392.2 L1149.5,393.6 L1151.5,395.0 L1153.5,396.4 L1155.4,397.8 L1157.4,399.2 L1159.4,400.6 L1161.4,401.9 L1163.3,403.3 L1165.3,404.7 L1167.3,406.1 L1169.3,407.5 L1171.3,408.9 L1173.2,410.3 L1175.2,411.7 L1177.2,413.1 L1179.2,414.5 L1181.2,415.8M1097.2,361.9 L1098.6,363.4 L1099.9,365.0 L1101.3,366.6 L1102.7,368.2 L1104.1,369.8 L1105.5,371.4 L1106.9,373.0 L1108.2,374.6 L1109.6,376.2 L1111.0,377.8 L1112.4,379.3 L1113.8,380.9 L1115.2,382.5 L1116.5,384.1 L1117.9,385.7 L1119.3,387.3 L1120.7,388.9 L1122.1,390.5 L1123.5,392.1 L1124.8,393.7 L1126.2,395.2 L1127.6,396.8 L1129.0,398.4 L1130.4,400.0 L1131.7,401.6 L1133.1,403.2 L1134.5,404.8 L1135.9,406.4 L1137.3,408.0 L1138.7,409.6 L1140.0,411.1 L1141.4,412.7 L1142.8,414.3 L1144.2,415.9 L1145.6,417.5 L1147.0,419.1 L1148.3,420.7 L1149.7,422.3 L1151.1,423.9 L1152.5,425.5M1092.3,362.8 L1093.1,364.5 L1093.9,366.3 L1094.7,368.0 L1095.4,369.7 L1096.2,371.4 L1097.0,373.1 L1097.8,374.8 L1098.6,376.5 L1099.3,378.2 L1100.1,380.0 L1100.9,381.7 L1101.7,383.4 L1102.5,385.1 L1103.2,386.8 L1104.0,388.5 L1104.8,390.2 L1105.6,391.9 L1106.4,393.6 L1107.2,395.4 L1107.9,397.1 L1108.7,398.8 L1109.5,400.5 L1110.3,402.2 L1111.1,403.9 L1111.8,405.6 L1112.6,407.3 L1113.4,409.1 L1114.2,410.8 L1115.0,412.5 L1115.7,414.2 L1116.5,415.9 L1117.3,417.6 L1118.1,419.3 L1118.9,421.0 L1119.7,422.7 L1120.4,424.5 L1121.2,426.2 L1122.0,427.9 L1122.8,429.6 L1123.6,431.3M1087.6,363.1 L1087.8,364.9 L1088.0,366.6 L1088.2,368.4 L1088.4,370.1 L1088.6,371.9 L1088.8,373.6 L1089.0,375.4 L1089.2,377.2 L1089.4,378.9 L1089.6,380.7 L1089.8,382.4 L1090.0,384.2 L1090.1,385.9 L1090.3,387.7 L1090.5,389.4 L1090.7,391.2 L1090.9,392.9 L1091.1,394.7 L1091.3,396.4 L1091.5,398.2 L1091.7,399.9 L1091.9,401.7 L1092.1,403.4 L1092.3,405.2 L1092.5,406.9 L1092.7,408.7 L1092.9,410.4 L1093.1,412.2 L1093.3,413.9 L1093.5,415.7 L1093.7,417.4 L1093.9,419.2 L1094.1,420.9 L1094.3,422.7 L1094.5,424.4 L1094.7,426.2 L1094.9,427.9 L1095.1,429.7 L1095.3,431.4 L1095.5,433.2M1083.2,362.8 L1082.8,364.5 L1082.5,366.2 L1082.1,367.9 L1081.8,369.6 L1081.5,371.3 L1081.1,373.0 L1080.8,374.7 L1080.4,376.4 L1080.1,378.1 L1079.7,379.8 L1079.4,381.5 L1079.0,383.2 L1078.7,384.9 L1078.3,386.6 L1078.0,388.4 L1077.6,390.1 L1077.3,391.8 L1076.9,393.5 L1076.6,395.2 L1076.2,396.9 L1075.9,398.6 L1075.5,400.3 L1075.2,402.0 L1074.9,403.7 L1074.5,405.4 L1074.2,407.1 L1073.8,408.8 L1073.5,410.5 L1073.1,412.2 L1072.8,413.9 L1072.4,415.6 L1072.1,417.3 L1071.7,419.0 L1071.4,420.7 L1071.0,422.4 L1070.7,424.2 L1070.3,425.9 L1070.0,427.6 L1069.6,429.3 L1069.3,431.0M1079.3,361.7 L1078.5,363.3 L1077.6,364.9 L1076.8,366.5 L1076.0,368.0 L1075.1,369.6 L1074.3,371.2 L1073.5,372.8 L1072.6,374.4 L1071.8,375.9 L1071.0,377.5 L1070.1,379.1 L1069.3,380.7 L1068.5,382.2 L1067.7,383.8 L1066.8,385.4 L1066.0,387.0 L1065.2,388.5 L1064.3,390.1 L1063.5,391.7 L1062.7,393.3 L1061.8,394.8 L1061.0,396.4 L1060.2,398.0 L1059.3,399.6 L1058.5,401.2 L1057.7,402.7 L1056.9,404.3 L1056.0,405.9 L1055.2,407.5 L1054.4,409.0 L1053.5,410.6 L1052.7,412.2 L1051.9,413.8 L1051.0,415.3 L1050.2,416.9 L1049.4,418.5 L1048.5,420.1 L1047.7,421.7 L1046.9,423.2 L1046.1,424.8M1076.0,360.1 L1074.8,361.4 L1073.6,362.8 L1072.3,364.2 L1071.1,365.6 L1069.8,366.9 L1068.6,368.3 L1067.4,369.7 L1066.1,371.0 L1064.9,372.4 L1063.7,373.8 L1062.4,375.2 L1061.2,376.5 L1060.0,377.9 L1058.7,379.3 L1057.5,380.6 L1056.3,382.0 L1055.0,383.4 L1053.8,384.7 L1052.6,386.1 L1051.3,387.5 L1050.1,388.9 L1048.9,390.2 L1047.6,391.6 L1046.4,393.0 L1045.2,394.3 L1043.9,395.7 L1042.7,397.1 L1041.4,398.5 L1040.2,399.8 L1039.0,401.2 L1037.7,402.6 L1036.5,403.9 L1035.3,405.3 L1034.0,406.7 L1032.8,408.0 L1031.6,409.4 L1030.3,410.8 L1029.1,412.2 L1027.9,413.5 L1026.6,414.9M1073.5,357.8 L1072.0,358.9 L1070.4,360.0 L1068.9,361.1 L1067.4,362.2 L1065.8,363.3 L1064.3,364.4 L1062.7,365.5 L1061.2,366.6 L1059.6,367.7 L1058.1,368.8 L1056.5,369.9 L1055.0,371.0 L1053.5,372.1 L1051.9,373.2 L1050.4,374.3 L1048.8,375.4 L1047.3,376.5 L1045.7,377.6 L1044.2,378.6 L1042.7,379.7 L1041.1,380.8 L1039.6,381.9 L1038.0,383.0 L1036.5,384.1 L1034.9,385.2 L1033.4,386.3 L1031.8,387.4 L1030.3,388.5 L1028.8,389.6 L1027.2,390.7 L1025.7,391.8 L1024.1,392.9 L1022.6,394.0 L1021.0,395.1 L1019.5,396.2 L1018.0,397.3 L1016.4,398.4 L1014.9,399.4 L1013.3,400.5 L1011.8,401.6M1071.9,355.1 L1070.1,355.9 L1068.4,356.7 L1066.7,357.4 L1064.9,358.2 L1063.2,358.9 L1061.4,359.7 L1059.7,360.5 L1057.9,361.2 L1056.2,362.0 L1054.4,362.7 L1052.7,363.5 L1050.9,364.3 L1049.2,365.0 L1047.5,365.8 L1045.7,366.5 L1044.0,367.3 L1042.2,368.1 L1040.5,368.8 L1038.7,369.6 L1037.0,370.3 L1035.2,371.1 L1033.5,371.9 L1031.7,372.6 L1030.0,373.4 L1028.3,374.1 L1026.5,374.9 L1024.8,375.7 L1023.0,376.4 L1021.3,377.2 L1019.5,377.9 L1017.8,378.7 L1016.0,379.5 L1014.3,380.2 L1012.5,381.0 L1010.8,381.7 L1009.0,382.5 L1007.3,383.3 L1005.6,384.0 L1003.8,384.8 L1002.1,385.5M1071.2,352.1 L1069.4,352.4 L1067.5,352.8 L1065.7,353.2 L1063.9,353.6 L1062.0,354.0 L1060.2,354.3 L1058.4,354.7 L1056.5,355.1 L1054.7,355.5 L1052.9,355.8 L1051.0,356.2 L1049.2,356.6 L1047.4,357.0 L1045.5,357.4 L1043.7,357.7 L1041.9,358.1 L1040.0,358.5 L1038.2,358.9 L1036.4,359.2 L1034.5,359.6 L1032.7,360.0 L1030.9,360.4 L1029.0,360.8 L1027.2,361.1 L1025.4,361.5 L1023.5,361.9 L1021.7,362.3 L1019.9,362.7 L1018.0,363.0 L1016.2,363.4 L1014.4,363.8 L1012.5,364.2 L1010.7,364.5 L1008.9,364.9 L1007.0,365.3 L1005.2,365.7 L1003.4,366.1 L1001.5,366.4 L999.7,366.8 L997.9,367.2M1071.4,348.7 L1069.6,348.7 L1067.8,348.7 L1066.0,348.6 L1064.2,348.6 L1062.4,348.5 L1060.6,348.5 L1058.8,348.5 L1057.0,348.4 L1055.2,348.4 L1053.4,348.4 L1051.6,348.3 L1049.8,348.3 L1048.0,348.3 L1046.2,348.2 L1044.4,348.2 L1042.6,348.2 L1040.8,348.1 L1039.0,348.1 L1037.2,348.1 L1035.4,348.0 L1033.6,348.0 L1031.8,348.0 L1030.0,347.9 L1028.2,347.9 L1026.4,347.9 L1024.6,347.8 L1022.8,347.8 L1021.0,347.8 L1019.2,347.7 L1017.4,347.7 L1015.6,347.7 L1013.8,347.6 L1012.0,347.6 L1010.2,347.5 L1008.3,347.5 L1006.5,347.5 L1004.7,347.4 L1002.9,347.4 L1001.1,347.4 L999.3,347.3M1072.6,345.3 L1071.0,344.8 L1069.3,344.3 L1067.7,343.9 L1066.0,343.4 L1064.4,342.9 L1062.7,342.5 L1061.0,342.0 L1059.4,341.6 L1057.7,341.1 L1056.1,340.6 L1054.4,340.2 L1052.8,339.7 L1051.1,339.2 L1049.5,338.8 L1047.8,338.3 L1046.1,337.8 L1044.5,337.4 L1042.8,336.9 L1041.2,336.5 L1039.5,336.0 L1037.9,335.5 L1036.2,335.1 L1034.6,334.6 L1032.9,334.1 L1031.3,333.7 L1029.6,333.2 L1027.9,332.7 L1026.3,332.3 L1024.6,331.8 L1023.0,331.4 L1021.3,330.9 L1019.7,330.4 L1018.0,330.0 L1016.4,329.5 L1014.7,329.0 L1013.0,328.6 L1011.4,328.1 L1009.7,327.7 L1008.1,327.2 L1006.4,326.7M1074.7,341.8 L1073.3,340.9 L1071.9,340.0 L1070.5,339.1 L1069.1,338.2 L1067.7,337.3 L1066.3,336.4 L1064.9,335.6 L1063.5,334.7 L1062.1,333.8 L1060.8,332.9 L1059.4,332.0 L1058.0,331.1 L1056.6,330.2 L1055.2,329.3 L1053.8,328.4 L1052.4,327.5 L1051.0,326.6 L1049.6,325.8 L1048.2,324.9 L1046.8,324.0 L1045.4,323.1 L1044.0,322.2 L1042.6,321.3 L1041.2,320.4 L1039.8,319.5 L1038.4,318.6 L1037.0,317.7 L1035.6,316.8 L1034.2,315.9 L1032.8,315.1 L1031.4,314.2 L1030.0,313.3 L1028.6,312.4 L1027.2,311.5 L1025.8,310.6 L1024.4,309.7 L1023.0,308.8 L1021.7,307.9 L1020.3,307.0 L1018.9,306.1M1077.6,338.5 L1076.6,337.2 L1075.6,335.9 L1074.5,334.6 L1073.5,333.3 L1072.4,332.0 L1071.4,330.7 L1070.4,329.4 L1069.3,328.1 L1068.3,326.8 L1067.3,325.5 L1066.2,324.2 L1065.2,322.8 L1064.1,321.5 L1063.1,320.2 L1062.1,318.9 L1061.0,317.6 L1060.0,316.3 L1059.0,315.0 L1057.9,313.7 L1056.9,312.4 L1055.9,311.1 L1054.8,309.8 L1053.8,308.5 L1052.7,307.2 L1051.7,305.9 L1050.7,304.6 L1049.6,303.3 L1048.6,302.0 L1047.6,300.7 L1046.5,299.4 L1045.5,298.1 L1044.5,296.8 L1043.4,295.5 L1042.4,294.2 L1041.3,292.9 L1040.3,291.6 L1039.3,290.3 L1038.2,289.0 L1037.2,287.7 L1036.2,286.4M1081.2,335.4 L1080.6,333.7 L1080.1,332.1 L1079.5,330.4 L1078.9,328.7 L1078.3,327.0 L1077.7,325.3 L1077.1,323.7 L1076.5,322.0 L1075.9,320.3 L1075.3,318.6 L1074.8,316.9 L1074.2,315.3 L1073.6,313.6 L1073.0,311.9 L1072.4,310.2 L1071.8,308.5 L1071.2,306.9 L1070.6,305.2 L1070.0,303.5 L1069.4,301.8 L1068.9,300.1 L1068.3,298.5 L1067.7,296.8 L1067.1,295.1 L1066.5,293.4 L1065.9,291.7 L1065.3,290.1 L1064.7,288.4 L1064.1,286.7 L1063.6,285.0 L1063.0,283.3 L1062.4,281.7 L1061.8,280.0 L1061.2,278.3 L1060.6,276.6 L1060.0,274.9 L1059.4,273.2 L1058.8,271.6 L1058.3,269.9 L1057.7,268.2M1085.4,332.8 L1085.3,330.7 L1085.3,328.7 L1085.2,326.7 L1085.1,324.7 L1085.1,322.7 L1085.0,320.7 L1084.9,318.7 L1084.8,316.7 L1084.8,314.7 L1084.7,312.6 L1084.6,310.6 L1084.6,308.6 L1084.5,306.6 L1084.4,304.6 L1084.3,302.6 L1084.3,300.6 L1084.2,298.6 L1084.1,296.6 L1084.1,294.5 L1084.0,292.5 L1083.9,290.5 L1083.8,288.5 L1083.8,286.5 L1083.7,284.5 L1083.6,282.5 L1083.5,280.5 L1083.5,278.5 L1083.4,276.4 L1083.3,274.4 L1083.3,272.4 L1083.2,270.4 L1083.1,268.4 L1083.0,266.4 L1083.0,264.4 L1082.9,262.4 L1082.8,260.4 L1082.8,258.3 L1082.7,256.3 L1082.6,254.3 L1082.5,252.3M1090.0,330.6 L1090.5,328.3 L1091.0,326.0 L1091.5,323.7 L1092.0,321.4 L1092.5,319.2 L1093.0,316.9 L1093.5,314.6 L1094.0,312.3 L1094.5,310.0 L1095.0,307.8 L1095.5,305.5 L1096.0,303.2 L1096.5,300.9 L1096.9,298.6 L1097.4,296.3 L1097.9,294.1 L1098.4,291.8 L1098.9,289.5 L1099.4,287.2 L1099.9,284.9 L1100.4,282.7 L1100.9,280.4 L1101.4,278.1 L1101.9,275.8 L1102.4,273.5 L1102.9,271.3 L1103.4,269.0 L1103.9,266.7 L1104.4,264.4 L1104.9,262.1 L1105.4,259.8 L1105.9,257.6 L1106.4,255.3 L1106.9,253.0 L1107.4,250.7 L1107.9,248.4 L1108.4,246.2 L1108.8,243.9 L1109.3,241.6 L1109.8,239.3M1094.8,328.9 L1095.9,326.5 L1097.0,324.0 L1098.1,321.5 L1099.2,319.0 L1100.3,316.5 L1101.4,314.1 L1102.5,311.6 L1103.6,309.1 L1104.7,306.6 L1105.7,304.1 L1106.8,301.7 L1107.9,299.2 L1109.0,296.7 L1110.1,294.2 L1111.2,291.7 L1112.3,289.3 L1113.4,286.8 L1114.5,284.3 L1115.6,281.8 L1116.7,279.3 L1117.8,276.8 L1118.8,274.4 L1119.9,271.9 L1121.0,269.4 L1122.1,266.9 L1123.2,264.4 L1124.3,262.0 L1125.4,259.5 L1126.5,257.0 L1127.6,254.5 L1128.7,252.0 L1129.8,249.6 L1130.9,247.1 L1132.0,244.6 L1133.0,242.1 L1134.1,239.6 L1135.2,237.1 L1136.3,234.7 L1137.4,232.2 L1138.5,229.7M1099.7,328.0 L1101.4,325.4 L1103.1,322.8 L1104.8,320.2 L1106.5,317.6 L1108.2,315.0 L1109.9,312.4 L1111.5,309.7 L1113.2,307.1 L1114.9,304.5 L1116.6,301.9 L1118.3,299.3 L1120.0,296.7 L1121.7,294.1 L1123.4,291.5 L1125.1,288.9 L1126.8,286.3 L1128.5,283.7 L1130.2,281.1 L1131.9,278.5 L1133.6,275.9 L1135.3,273.3 L1137.0,270.7 L1138.6,268.1 L1140.3,265.5 L1142.0,262.9 L1143.7,260.3 L1145.4,257.7 L1147.1,255.1 L1148.8,252.5 L1150.5,249.9 L1152.2,247.3 L1153.9,244.7 L1155.6,242.1 L1157.3,239.5 L1159.0,236.9 L1160.7,234.3 L1162.4,231.7 L1164.1,229.1 L1165.7,226.5 L1167.4,223.9M1104.4,327.7 L1106.7,325.0 L1109.0,322.4 L1111.2,319.7 L1113.5,317.1 L1115.8,314.4 L1118.1,311.8 L1120.4,309.2 L1122.6,306.5 L1124.9,303.9 L1127.2,301.2 L1129.5,298.6 L1131.7,296.0 L1134.0,293.3 L1136.3,290.7 L1138.6,288.0 L1140.9,285.4 L1143.1,282.7 L1145.4,280.1 L1147.7,277.5 L1150.0,274.8 L1152.3,272.2 L1154.5,269.5 L1156.8,266.9 L1159.1,264.3 L1161.4,261.6 L1163.6,259.0 L1165.9,256.3 L1168.2,253.7 L1170.5,251.0 L1172.8,248.4 L1175.0,245.8 L1177.3,243.1 L1179.6,240.5 L1181.9,237.8 L1184.1,235.2 L1186.4,232.6 L1188.7,229.9 L1191.0,227.3 L1193.3,224.6 L1195.5,222.0M1108.8,328.0 L1111.6,325.4 L1114.5,322.8 L1117.3,320.2 L1120.1,317.6 L1122.9,315.0 L1125.7,312.4 L1128.6,309.9 L1131.4,307.3 L1134.2,304.7 L1137.0,302.1 L1139.9,299.5 L1142.7,296.9 L1145.5,294.3 L1148.3,291.7 L1151.1,289.1 L1154.0,286.5 L1156.8,283.9 L1159.6,281.3 L1162.4,278.7 L1165.3,276.1 L1168.1,273.5 L1170.9,270.9 L1173.7,268.3 L1176.5,265.7 L1179.4,263.1 L1182.2,260.5 L1185.0,257.9 L1187.8,255.3 L1190.7,252.7 L1193.5,250.1 L1196.3,247.6 L1199.1,245.0 L1201.9,242.4 L1204.8,239.8 L1207.6,237.2 L1210.4,234.6 L1213.2,232.0 L1216.1,229.4 L1218.9,226.8 L1221.7,224.2M1112.7,329.1 L1116.0,326.6 L1119.3,324.1 L1122.6,321.7 L1125.9,319.2 L1129.2,316.7 L1132.5,314.3 L1135.9,311.8 L1139.2,309.3 L1142.5,306.9 L1145.8,304.4 L1149.1,301.9 L1152.4,299.4 L1155.7,297.0 L1159.0,294.5 L1162.3,292.0 L1165.6,289.6 L1168.9,287.1 L1172.2,284.6 L1175.5,282.2 L1178.8,279.7 L1182.1,277.2 L1185.4,274.8 L1188.7,272.3 L1192.1,269.8 L1195.4,267.4 L1198.7,264.9 L1202.0,262.4 L1205.3,260.0 L1208.6,257.5 L1211.9,255.0 L1215.2,252.6 L1218.5,250.1 L1221.8,247.6 L1225.1,245.2 L1228.4,242.7 L1231.7,240.2 L1235.0,237.8 L1238.3,235.3 L1241.6,232.8 L1244.9,230.4M1116.0,330.7 L1119.7,328.5 L1123.4,326.2 L1127.1,323.9 L1130.8,321.7 L1134.5,319.4 L1138.2,317.2 L1141.9,314.9 L1145.7,312.6 L1149.4,310.4 L1153.1,308.1 L1156.8,305.8 L1160.5,303.6 L1164.2,301.3 L1167.9,299.1 L1171.6,296.8 L1175.3,294.5 L1179.0,292.3 L1182.8,290.0 L1186.5,287.8 L1190.2,285.5 L1193.9,283.2 L1197.6,281.0 L1201.3,278.7 L1205.0,276.4 L1208.7,274.2 L1212.4,271.9 L1216.1,269.7 L1219.9,267.4 L1223.6,265.1 L1227.3,262.9 L1231.0,260.6 L1234.7,258.4 L1238.4,256.1 L1242.1,253.8 L1245.8,251.6 L1249.5,249.3 L1253.2,247.0 L1256.9,244.8 L1260.7,242.5 L1264.4,240.3M1118.5,333.0 L1122.5,331.0 L1126.5,329.0 L1130.5,327.0 L1134.5,325.0 L1138.6,323.0 L1142.6,321.0 L1146.6,319.1 L1150.6,317.1 L1154.6,315.1 L1158.7,313.1 L1162.7,311.1 L1166.7,309.1 L1170.7,307.1 L1174.7,305.2 L1178.8,303.2 L1182.8,301.2 L1186.8,299.2 L1190.8,297.2 L1194.8,295.2 L1198.8,293.2 L1202.9,291.3 L1206.9,289.3 L1210.9,287.3 L1214.9,285.3 L1218.9,283.3 L1223.0,281.3 L1227.0,279.3 L1231.0,277.4 L1235.0,275.4 L1239.0,273.4 L1243.1,271.4 L1247.1,269.4 L1251.1,267.4 L1255.1,265.4 L1259.1,263.5 L1263.1,261.5 L1267.2,259.5 L1271.2,257.5 L1275.2,255.5 L1279.2,253.5" fill="none" stroke="#121214" stroke-width="1.60" opacity="0.9"/>
<path d="M1110.9,337.9h3.8v3.8h-3.8zM1111.1,340.4h3.8v3.8h-3.8zM1110.5,343.1h3.8v3.8h-3.8zM1109.2,345.8h3.8v3.8h-3.8zM1107.3,348.4h3.8v3.8h-3.8zM1104.8,350.9h3.8v3.8h-3.8zM1101.7,353.1h3.8v3.8h-3.8zM1098.3,355.0h3.8v3.8h-3.8zM1094.6,356.5h3.8v3.8h-3.8zM1090.9,357.5h3.8v3.8h-3.8zM1087.1,358.0h3.8v3.8h-3.8zM1083.6,358.0h3.8v3.8h-3.8zM1080.4,357.4h3.8v3.8h-3.8zM1077.6,356.4h3.8v3.8h-3.8zM1075.3,354.9h3.8v3.8h-3.8zM1073.7,352.9h3.8v3.8h-3.8zM1072.8,350.7h3.8v3.8h-3.8zM1072.6,348.2h3.8v3.8h-3.8zM1073.2,345.5h3.8v3.8h-3.8zM1074.5,342.9h3.8v3.8h-3.8zM1076.4,340.2h3.8v3.8h-3.8zM1078.9,337.7h3.8v3.8h-3.8zM1082.0,335.5h3.8v3.8h-3.8zM1085.4,333.6h3.8v3.8h-3.8zM1089.1,332.1h3.8v3.8h-3.8zM1092.8,331.1h3.8v3.8h-3.8zM1096.6,330.6h3.8v3.8h-3.8zM1100.1,330.6h3.8v3.8h-3.8zM1103.3,331.2h3.8v3.8h-3.8zM1106.1,332.2h3.8v3.8h-3.8zM1108.4,333.7h3.8v3.8h-3.8zM1110.0,335.7h3.8v3.8h-3.8zM1123.0,333.8h3.8v3.8h-3.8zM1123.3,337.4h3.8v3.8h-3.8zM1122.4,341.3h3.8v3.8h-3.8zM1120.6,345.2h3.8v3.8h-3.8zM1117.8,349.0h3.8v3.8h-3.8zM1114.1,352.6h3.8v3.8h-3.8zM1109.7,355.8h3.8v3.8h-3.8zM1104.7,358.6h3.8v3.8h-3.8zM1099.4,360.7h3.8v3.8h-3.8zM1093.9,362.2h3.8v3.8h-3.8zM1088.5,362.9h3.8v3.8h-3.8zM1083.4,362.9h3.8v3.8h-3.8zM1078.7,362.1h3.8v3.8h-3.8zM1074.6,360.6h3.8v3.8h-3.8zM1071.4,358.4h3.8v3.8h-3.8zM1069.0,355.6h3.8v3.8h-3.8zM1067.7,352.3h3.8v3.8h-3.8zM1067.4,348.7h3.8v3.8h-3.8zM1068.3,344.8h3.8v3.8h-3.8zM1070.1,340.9h3.8v3.8h-3.8zM1072.9,337.1h3.8v3.8h-3.8zM1076.6,333.5h3.8v3.8h-3.8zM1081.0,330.3h3.8v3.8h-3.8zM1086.0,327.5h3.8v3.8h-3.8zM1091.3,325.4h3.8v3.8h-3.8zM1096.8,323.9h3.8v3.8h-3.8zM1102.2,323.2h3.8v3.8h-3.8zM1107.3,323.2h3.8v3.8h-3.8zM1112.0,324.0h3.8v3.8h-3.8zM1116.1,325.5h3.8v3.8h-3.8zM1119.3,327.7h3.8v3.8h-3.8zM1121.7,330.5h3.8v3.8h-3.8zM1135.1,329.6h3.8v3.8h-3.8zM1135.4,334.4h3.8v3.8h-3.8zM1134.4,339.4h3.8v3.8h-3.8zM1131.9,344.6h3.8v3.8h-3.8zM1128.2,349.6h3.8v3.8h-3.8zM1123.4,354.3h3.8v3.8h-3.8zM1117.6,358.6h3.8v3.8h-3.8zM1111.1,362.2h3.8v3.8h-3.8zM1104.2,365.0h3.8v3.8h-3.8zM1097.0,366.9h3.8v3.8h-3.8zM1089.9,367.9h3.8v3.8h-3.8zM1083.1,367.8h3.8v3.8h-3.8zM1077.0,366.8h3.8v3.8h-3.8zM1071.7,364.8h3.8v3.8h-3.8zM1067.4,361.9h3.8v3.8h-3.8zM1064.3,358.2h3.8v3.8h-3.8zM1062.6,353.9h3.8v3.8h-3.8zM1062.3,349.2h3.8v3.8h-3.8zM1063.3,344.1h3.8v3.8h-3.8zM1065.8,339.0h3.8v3.8h-3.8zM1069.5,334.0h3.8v3.8h-3.8zM1074.3,329.3h3.8v3.8h-3.8zM1080.1,325.0h3.8v3.8h-3.8zM1086.6,321.4h3.8v3.8h-3.8zM1093.5,318.6h3.8v3.8h-3.8zM1100.7,316.7h3.8v3.8h-3.8zM1107.8,315.7h3.8v3.8h-3.8zM1114.6,315.8h3.8v3.8h-3.8zM1120.7,316.8h3.8v3.8h-3.8zM1126.0,318.8h3.8v3.8h-3.8zM1130.3,321.7h3.8v3.8h-3.8zM1133.4,325.3h3.8v3.8h-3.8zM1148.1,325.2h3.8v3.8h-3.8zM1148.5,331.2h3.8v3.8h-3.8zM1147.2,337.5h3.8v3.8h-3.8zM1144.1,343.9h3.8v3.8h-3.8zM1139.5,350.2h3.8v3.8h-3.8zM1133.4,356.2h3.8v3.8h-3.8zM1126.2,361.5h3.8v3.8h-3.8zM1118.0,366.0h3.8v3.8h-3.8zM1109.3,369.5h3.8v3.8h-3.8zM1100.3,371.9h3.8v3.8h-3.8zM1091.4,373.1h3.8v3.8h-3.8zM1082.9,373.1h3.8v3.8h-3.8zM1075.2,371.8h3.8v3.8h-3.8zM1068.5,369.3h3.8v3.8h-3.8zM1063.1,365.6h3.8v3.8h-3.8zM1059.3,361.1h3.8v3.8h-3.8zM1057.1,355.7h3.8v3.8h-3.8zM1056.7,349.7h3.8v3.8h-3.8zM1058.0,343.4h3.8v3.8h-3.8zM1061.1,337.0h3.8v3.8h-3.8zM1065.7,330.7h3.8v3.8h-3.8zM1071.8,324.7h3.8v3.8h-3.8zM1079.0,319.4h3.8v3.8h-3.8zM1087.2,314.9h3.8v3.8h-3.8zM1095.9,311.4h3.8v3.8h-3.8zM1104.9,308.9h3.8v3.8h-3.8zM1113.8,307.7h3.8v3.8h-3.8zM1122.3,307.8h3.8v3.8h-3.8zM1130.0,309.1h3.8v3.8h-3.8zM1136.7,311.6h3.8v3.8h-3.8zM1142.1,315.2h3.8v3.8h-3.8zM1145.9,319.8h3.8v3.8h-3.8zM1162.8,320.2h3.8v3.8h-3.8zM1163.3,327.5h3.8v3.8h-3.8zM1161.6,335.3h3.8v3.8h-3.8zM1157.9,343.2h3.8v3.8h-3.8zM1152.2,350.9h3.8v3.8h-3.8zM1144.7,358.2h3.8v3.8h-3.8zM1135.8,364.8h3.8v3.8h-3.8zM1125.8,370.3h3.8v3.8h-3.8zM1115.0,374.7h3.8v3.8h-3.8zM1104.0,377.6h3.8v3.8h-3.8zM1093.0,379.1h3.8v3.8h-3.8zM1082.6,379.1h3.8v3.8h-3.8zM1073.1,377.4h3.8v3.8h-3.8zM1064.9,374.4h3.8v3.8h-3.8zM1058.3,369.9h3.8v3.8h-3.8zM1053.6,364.3h3.8v3.8h-3.8zM1050.9,357.7h3.8v3.8h-3.8zM1050.4,350.3h3.8v3.8h-3.8zM1052.1,342.5h3.8v3.8h-3.8zM1055.8,334.6h3.8v3.8h-3.8zM1061.5,326.9h3.8v3.8h-3.8zM1069.0,319.6h3.8v3.8h-3.8zM1077.9,313.0h3.8v3.8h-3.8zM1087.9,307.5h3.8v3.8h-3.8zM1098.7,303.2h3.8v3.8h-3.8zM1109.7,300.2h3.8v3.8h-3.8zM1120.7,298.7h3.8v3.8h-3.8zM1131.1,298.8h3.8v3.8h-3.8zM1140.6,300.4h3.8v3.8h-3.8zM1148.8,303.5h3.8v3.8h-3.8zM1155.4,307.9h3.8v3.8h-3.8zM1160.1,313.6h3.8v3.8h-3.8zM1178.3,314.8h3.8v3.8h-3.8zM1179.0,323.6h3.8v3.8h-3.8zM1177.0,332.9h3.8v3.8h-3.8zM1172.5,342.4h3.8v3.8h-3.8zM1165.6,351.7h3.8v3.8h-3.8zM1156.7,360.4h3.8v3.8h-3.8zM1146.0,368.3h3.8v3.8h-3.8zM1134.0,374.9h3.8v3.8h-3.8zM1121.2,380.1h3.8v3.8h-3.8zM1107.9,383.7h3.8v3.8h-3.8zM1094.8,385.5h3.8v3.8h-3.8zM1082.3,385.4h3.8v3.8h-3.8zM1070.9,383.5h3.8v3.8h-3.8zM1061.1,379.8h3.8v3.8h-3.8zM1053.2,374.4h3.8v3.8h-3.8zM1047.6,367.7h3.8v3.8h-3.8zM1044.4,359.7h3.8v3.8h-3.8zM1043.7,351.0h3.8v3.8h-3.8zM1045.7,341.6h3.8v3.8h-3.8zM1050.2,332.2h3.8v3.8h-3.8zM1057.1,322.9h3.8v3.8h-3.8zM1066.0,314.1h3.8v3.8h-3.8zM1076.7,306.3h3.8v3.8h-3.8zM1088.7,299.7h3.8v3.8h-3.8zM1101.5,294.5h3.8v3.8h-3.8zM1114.8,290.9h3.8v3.8h-3.8zM1127.9,289.1h3.8v3.8h-3.8zM1140.4,289.2h3.8v3.8h-3.8zM1151.8,291.1h3.8v3.8h-3.8zM1161.6,294.8h3.8v3.8h-3.8zM1169.5,300.2h3.8v3.8h-3.8zM1175.1,306.9h3.8v3.8h-3.8zM1194.8,309.2h3.8v3.8h-3.8zM1195.5,319.5h3.8v3.8h-3.8zM1193.2,330.5h3.8v3.8h-3.8zM1187.9,341.6h3.8v3.8h-3.8zM1179.9,352.5h3.8v3.8h-3.8zM1169.4,362.8h3.8v3.8h-3.8zM1156.8,372.0h3.8v3.8h-3.8zM1142.7,379.8h3.8v3.8h-3.8zM1127.6,385.9h3.8v3.8h-3.8zM1112.1,390.1h3.8v3.8h-3.8zM1096.7,392.1h3.8v3.8h-3.8zM1082.0,392.0h3.8v3.8h-3.8zM1068.6,389.8h3.8v3.8h-3.8zM1057.1,385.4h3.8v3.8h-3.8zM1047.8,379.2h3.8v3.8h-3.8zM1041.2,371.3h3.8v3.8h-3.8zM1037.4,361.9h3.8v3.8h-3.8zM1036.7,351.6h3.8v3.8h-3.8zM1039.0,340.7h3.8v3.8h-3.8zM1044.3,329.6h3.8v3.8h-3.8zM1052.3,318.7h3.8v3.8h-3.8zM1062.8,308.4h3.8v3.8h-3.8zM1075.4,299.2h3.8v3.8h-3.8zM1089.5,291.4h3.8v3.8h-3.8zM1104.6,285.3h3.8v3.8h-3.8zM1120.1,281.1h3.8v3.8h-3.8zM1135.5,279.0h3.8v3.8h-3.8zM1150.2,279.1h3.8v3.8h-3.8zM1163.6,281.4h3.8v3.8h-3.8zM1175.1,285.7h3.8v3.8h-3.8zM1184.4,292.0h3.8v3.8h-3.8zM1191.0,299.9h3.8v3.8h-3.8zM1212.9,303.0h3.8v3.8h-3.8zM1213.8,315.0h3.8v3.8h-3.8zM1211.1,327.7h3.8v3.8h-3.8zM1204.9,340.7h3.8v3.8h-3.8zM1195.6,353.4h3.8v3.8h-3.8zM1183.4,365.3h3.8v3.8h-3.8zM1168.8,376.0h3.8v3.8h-3.8zM1152.4,385.1h3.8v3.8h-3.8zM1134.8,392.2h3.8v3.8h-3.8zM1116.6,397.1h3.8v3.8h-3.8zM1098.7,399.5h3.8v3.8h-3.8zM1081.6,399.4h3.8v3.8h-3.8zM1066.1,396.8h3.8v3.8h-3.8zM1052.7,391.7h3.8v3.8h-3.8zM1041.9,384.4h3.8v3.8h-3.8zM1034.2,375.2h3.8v3.8h-3.8zM1029.8,364.4h3.8v3.8h-3.8zM1028.9,352.4h3.8v3.8h-3.8zM1031.6,339.6h3.8v3.8h-3.8zM1037.8,326.7h3.8v3.8h-3.8zM1047.1,314.0h3.8v3.8h-3.8zM1059.3,302.1h3.8v3.8h-3.8zM1073.9,291.3h3.8v3.8h-3.8zM1090.3,282.3h3.8v3.8h-3.8zM1107.9,275.1h3.8v3.8h-3.8zM1126.1,270.3h3.8v3.8h-3.8zM1144.0,267.9h3.8v3.8h-3.8zM1161.1,268.0h3.8v3.8h-3.8zM1176.6,270.6h3.8v3.8h-3.8zM1190.0,275.6h3.8v3.8h-3.8zM1200.8,282.9h3.8v3.8h-3.8zM1208.5,292.2h3.8v3.8h-3.8zM1232.8,296.2h3.8v3.8h-3.8zM1233.8,310.1h3.8v3.8h-3.8zM1230.7,324.8h3.8v3.8h-3.8zM1223.6,339.7h3.8v3.8h-3.8zM1212.8,354.4h3.8v3.8h-3.8zM1198.7,368.1h3.8v3.8h-3.8zM1181.9,380.5h3.8v3.8h-3.8zM1162.9,391.0h3.8v3.8h-3.8zM1142.6,399.2h3.8v3.8h-3.8zM1121.7,404.8h3.8v3.8h-3.8zM1101.0,407.6h3.8v3.8h-3.8zM1081.3,407.5h3.8v3.8h-3.8zM1063.3,404.5h3.8v3.8h-3.8zM1047.8,398.6h3.8v3.8h-3.8zM1035.4,390.2h3.8v3.8h-3.8zM1026.5,379.6h3.8v3.8h-3.8zM1021.4,367.0h3.8v3.8h-3.8zM1020.4,353.2h3.8v3.8h-3.8zM1023.5,338.5h3.8v3.8h-3.8zM1030.6,323.5h3.8v3.8h-3.8zM1041.4,308.9h3.8v3.8h-3.8zM1055.5,295.1h3.8v3.8h-3.8zM1072.3,282.7h3.8v3.8h-3.8zM1091.3,272.2h3.8v3.8h-3.8zM1111.6,264.0h3.8v3.8h-3.8zM1132.5,258.4h3.8v3.8h-3.8zM1153.2,255.6h3.8v3.8h-3.8zM1172.9,255.7h3.8v3.8h-3.8zM1190.9,258.8h3.8v3.8h-3.8zM1206.4,264.6h3.8v3.8h-3.8zM1218.8,273.0h3.8v3.8h-3.8zM1227.7,283.7h3.8v3.8h-3.8zM1254.4,288.8h3.8v3.8h-3.8zM1255.5,304.7h3.8v3.8h-3.8zM1252.0,321.5h3.8v3.8h-3.8zM1243.9,338.6h3.8v3.8h-3.8zM1231.5,355.4h3.8v3.8h-3.8zM1215.4,371.2h3.8v3.8h-3.8zM1196.1,385.4h3.8v3.8h-3.8zM1174.4,397.4h3.8v3.8h-3.8zM1151.1,406.8h3.8v3.8h-3.8zM1127.1,413.2h3.8v3.8h-3.8zM1103.4,416.4h3.8v3.8h-3.8zM1080.8,416.3h3.8v3.8h-3.8zM1060.3,412.8h3.8v3.8h-3.8zM1042.6,406.1h3.8v3.8h-3.8zM1028.3,396.5h3.8v3.8h-3.8zM1018.1,384.3h3.8v3.8h-3.8zM1012.3,369.9h3.8v3.8h-3.8zM1011.2,354.1h3.8v3.8h-3.8zM1014.7,337.2h3.8v3.8h-3.8zM1022.8,320.1h3.8v3.8h-3.8zM1035.2,303.3h3.8v3.8h-3.8zM1051.3,287.5h3.8v3.8h-3.8zM1070.6,273.4h3.8v3.8h-3.8zM1092.3,261.4h3.8v3.8h-3.8zM1115.6,252.0h3.8v3.8h-3.8zM1139.6,245.5h3.8v3.8h-3.8zM1163.3,242.3h3.8v3.8h-3.8zM1185.9,242.5h3.8v3.8h-3.8zM1206.4,245.9h3.8v3.8h-3.8zM1224.1,252.6h3.8v3.8h-3.8zM1238.4,262.3h3.8v3.8h-3.8zM1248.6,274.5h3.8v3.8h-3.8zM1277.7,280.8h3.8v3.8h-3.8zM1279.0,298.9h3.8v3.8h-3.8zM1275.0,318.0h3.8v3.8h-3.8zM1265.7,337.5h3.8v3.8h-3.8zM1251.7,356.6h3.8v3.8h-3.8zM1233.3,374.5h3.8v3.8h-3.8zM1211.4,390.6h3.8v3.8h-3.8zM1186.7,404.3h3.8v3.8h-3.8zM1160.3,415.0h3.8v3.8h-3.8zM1133.0,422.3h3.8v3.8h-3.8zM1106.1,425.9h3.8v3.8h-3.8zM1080.4,425.8h3.8v3.8h-3.8zM1057.0,421.8h3.8v3.8h-3.8zM1036.9,414.2h3.8v3.8h-3.8zM1020.7,403.2h3.8v3.8h-3.8zM1009.0,389.4h3.8v3.8h-3.8zM1002.5,373.1h3.8v3.8h-3.8zM1001.2,355.0h3.8v3.8h-3.8zM1005.2,335.9h3.8v3.8h-3.8zM1014.5,316.4h3.8v3.8h-3.8zM1028.5,297.3h3.8v3.8h-3.8zM1046.9,279.4h3.8v3.8h-3.8zM1068.8,263.3h3.8v3.8h-3.8zM1093.5,249.6h3.8v3.8h-3.8zM1119.9,238.9h3.8v3.8h-3.8zM1147.2,231.6h3.8v3.8h-3.8zM1174.1,228.0h3.8v3.8h-3.8zM1199.8,228.1h3.8v3.8h-3.8zM1223.2,232.1h3.8v3.8h-3.8zM1243.3,239.7h3.8v3.8h-3.8zM1259.5,250.6h3.8v3.8h-3.8zM1271.2,264.5h3.8v3.8h-3.8z" fill="#121214"/>
<ellipse cx="0" cy="0" rx="1" ry="1" fill="url(#gEarSh)" transform="translate(1095 348) rotate(-22) scale(60 38)"/><ellipse cx="1086" cy="349" rx="14" ry="10" transform="rotate(-22 1086 349)" fill="#333337" opacity="0.7"/><ellipse cx="1086" cy="349" rx="8" ry="6" transform="rotate(-22 1086 349)" fill="none" stroke="#111" stroke-width="1.5" stroke-dasharray="2,2"/><path d="M1185,254 C1215,268 1224,300 1205,330 C1182,360 1130,382 1070,392" fill="none" stroke="#111" stroke-width="4.5" stroke-dasharray="3,5" opacity="0.85"/>
</g>
<g clip-path="url(#cRE)">
<use href="#shade"/>

<path d="M770.6,298.0 L770.6,298.6 L770.5,299.3 L770.4,299.9 L770.3,300.5 L770.1,301.1 L769.8,301.7 L769.6,302.2 L769.3,302.8 L768.9,303.3 L768.5,303.8 L768.1,304.3 L767.6,304.7 L767.2,305.1 L766.7,305.5 L766.1,305.8 L765.6,306.1 L765.0,306.3 L764.4,306.6 L763.8,306.7 L763.2,306.9 L762.6,307.0 L761.9,307.0 L761.3,307.0 L760.7,307.0 L760.1,306.9 L759.4,306.7 L758.8,306.6 L758.2,306.3 L757.7,306.1 L757.1,305.8 L756.6,305.5 L756.1,305.1 L755.6,304.7 L755.1,304.3 L754.7,303.8 L754.3,303.3 L754.0,302.8 L753.7,302.2 L753.4,301.7 L753.2,301.1 L753.0,300.5 L752.8,299.9 L752.7,299.3 L752.6,298.6 L752.6,298.0 L752.6,297.4 L752.7,296.7 L752.8,296.1 L753.0,295.5 L753.2,294.9 L753.4,294.3 L753.7,293.8 L754.0,293.2 L754.3,292.7 L754.7,292.2 L755.1,291.7 L755.6,291.3 L756.1,290.9 L756.6,290.5 L757.1,290.2 L757.7,289.9 L758.2,289.7 L758.8,289.4 L759.4,289.3 L760.1,289.1 L760.7,289.0 L761.3,289.0 L761.9,289.0 L762.6,289.0 L763.2,289.1 L763.8,289.3 L764.4,289.4 L765.0,289.7 L765.6,289.9 L766.1,290.2 L766.7,290.5 L767.2,290.9 L767.6,291.3 L768.1,291.7 L768.5,292.2 L768.9,292.7 L769.3,293.2 L769.6,293.8 L769.8,294.3 L770.1,294.9 L770.3,295.5 L770.4,296.1 L770.5,296.7 L770.6,297.4 L770.6,298.0M777.7,298.0 L777.7,299.0 L777.6,300.1 L777.4,301.1 L777.1,302.1 L776.8,303.1 L776.4,304.1 L775.9,305.0 L775.4,305.9 L774.8,306.8 L774.2,307.6 L773.5,308.4 L772.7,309.1 L771.9,309.8 L771.1,310.4 L770.2,311.0 L769.3,311.5 L768.3,311.9 L767.3,312.3 L766.3,312.6 L765.3,312.8 L764.3,312.9 L763.2,313.0 L762.2,313.0 L761.1,312.9 L760.1,312.8 L759.1,312.6 L758.1,312.3 L757.1,311.9 L756.1,311.5 L755.2,311.0 L754.3,310.4 L753.5,309.8 L752.7,309.1 L751.9,308.4 L751.2,307.6 L750.6,306.8 L750.0,305.9 L749.5,305.0 L749.0,304.1 L748.6,303.1 L748.3,302.1 L748.0,301.1 L747.8,300.1 L747.7,299.0 L747.7,298.0 L747.7,297.0 L747.8,295.9 L748.0,294.9 L748.3,293.9 L748.6,292.9 L749.0,291.9 L749.5,291.0 L750.0,290.1 L750.6,289.2 L751.2,288.4 L751.9,287.6 L752.7,286.9 L753.5,286.2 L754.3,285.6 L755.2,285.0 L756.1,284.5 L757.1,284.1 L758.1,283.7 L759.1,283.4 L760.1,283.2 L761.1,283.1 L762.2,283.0 L763.2,283.0 L764.3,283.1 L765.3,283.2 L766.3,283.4 L767.3,283.7 L768.3,284.1 L769.3,284.5 L770.2,285.0 L771.1,285.6 L771.9,286.2 L772.7,286.9 L773.5,287.6 L774.2,288.4 L774.8,289.2 L775.4,290.1 L775.9,291.0 L776.4,291.9 L776.8,292.9 L777.1,293.9 L777.4,294.9 L777.6,295.9 L777.7,297.0 L777.7,298.0M787.1,298.0 L787.1,299.6 L786.9,301.2 L786.6,302.8 L786.2,304.3 L785.8,305.9 L785.2,307.4 L784.4,308.8 L783.6,310.2 L782.7,311.5 L781.8,312.8 L780.7,314.0 L779.5,315.1 L778.3,316.1 L777.0,317.1 L775.6,317.9 L774.2,318.7 L772.8,319.3 L771.2,319.9 L769.7,320.3 L768.1,320.7 L766.5,320.9 L764.9,321.0 L763.3,321.0 L761.7,320.9 L760.1,320.7 L758.6,320.3 L757.0,319.9 L755.5,319.3 L754.1,318.7 L752.6,317.9 L751.3,317.1 L750.0,316.1 L748.7,315.1 L747.6,314.0 L746.5,312.8 L745.5,311.5 L744.6,310.2 L743.8,308.8 L743.1,307.4 L742.5,305.9 L742.0,304.3 L741.6,302.8 L741.4,301.2 L741.2,299.6 L741.1,298.0 L741.2,296.4 L741.4,294.8 L741.6,293.2 L742.0,291.7 L742.5,290.1 L743.1,288.6 L743.8,287.2 L744.6,285.8 L745.5,284.5 L746.5,283.2 L747.6,282.0 L748.7,280.9 L750.0,279.9 L751.3,278.9 L752.6,278.1 L754.1,277.3 L755.5,276.7 L757.0,276.1 L758.6,275.7 L760.1,275.3 L761.7,275.1 L763.3,275.0 L764.9,275.0 L766.5,275.1 L768.1,275.3 L769.7,275.7 L771.2,276.1 L772.8,276.7 L774.2,277.3 L775.6,278.1 L777.0,278.9 L778.3,279.9 L779.5,280.9 L780.7,282.0 L781.8,283.2 L782.7,284.5 L783.6,285.8 L784.4,287.2 L785.2,288.6 L785.8,290.1 L786.2,291.7 L786.6,293.2 L786.9,294.8 L787.1,296.4 L787.1,298.0M796.6,298.0 L796.5,300.2 L796.3,302.3 L795.9,304.4 L795.4,306.5 L794.7,308.6 L793.9,310.6 L793.0,312.6 L791.9,314.4 L790.7,316.2 L789.3,317.9 L787.9,319.5 L786.3,321.0 L784.7,322.4 L782.9,323.7 L781.1,324.8 L779.2,325.9 L777.2,326.7 L775.2,327.5 L773.1,328.1 L771.0,328.5 L768.8,328.8 L766.7,329.0 L764.5,329.0 L762.3,328.8 L760.2,328.5 L758.1,328.1 L756.0,327.5 L754.0,326.7 L752.0,325.9 L750.1,324.8 L748.2,323.7 L746.5,322.4 L744.8,321.0 L743.3,319.5 L741.8,317.9 L740.5,316.2 L739.3,314.4 L738.2,312.6 L737.3,310.6 L736.4,308.6 L735.8,306.5 L735.3,304.4 L734.9,302.3 L734.7,300.2 L734.6,298.0 L734.7,295.8 L734.9,293.7 L735.3,291.6 L735.8,289.5 L736.4,287.4 L737.3,285.4 L738.2,283.4 L739.3,281.6 L740.5,279.8 L741.8,278.1 L743.3,276.5 L744.8,275.0 L746.5,273.6 L748.2,272.3 L750.1,271.2 L752.0,270.1 L754.0,269.3 L756.0,268.5 L758.1,267.9 L760.2,267.5 L762.3,267.2 L764.5,267.0 L766.7,267.0 L768.8,267.2 L771.0,267.5 L773.1,267.9 L775.2,268.5 L777.2,269.3 L779.2,270.1 L781.1,271.2 L782.9,272.3 L784.7,273.6 L786.3,275.0 L787.9,276.5 L789.3,278.1 L790.7,279.8 L791.9,281.6 L793.0,283.4 L793.9,285.4 L794.7,287.4 L795.4,289.5 L795.9,291.6 L796.3,293.7 L796.5,295.8 L796.6,298.0M807.2,298.0 L807.1,300.8 L806.8,303.6 L806.3,306.3 L805.7,309.0 L804.8,311.7 L803.7,314.3 L802.5,316.8 L801.1,319.2 L799.6,321.5 L797.8,323.7 L796.0,325.8 L794.0,327.7 L791.8,329.5 L789.6,331.2 L787.2,332.6 L784.7,334.0 L782.2,335.1 L779.6,336.0 L776.9,336.8 L774.1,337.4 L771.4,337.8 L768.6,338.0 L765.8,338.0 L763.0,337.8 L760.3,337.4 L757.5,336.8 L754.8,336.0 L752.2,335.1 L749.7,334.0 L747.2,332.6 L744.8,331.2 L742.6,329.5 L740.4,327.7 L738.4,325.8 L736.6,323.7 L734.8,321.5 L733.3,319.2 L731.9,316.8 L730.7,314.3 L729.6,311.7 L728.7,309.0 L728.1,306.3 L727.6,303.6 L727.3,300.8 L727.2,298.0 L727.3,295.2 L727.6,292.4 L728.1,289.7 L728.7,287.0 L729.6,284.3 L730.7,281.7 L731.9,279.2 L733.3,276.8 L734.8,274.5 L736.6,272.3 L738.4,270.2 L740.4,268.3 L742.6,266.5 L744.8,264.8 L747.2,263.4 L749.7,262.0 L752.2,260.9 L754.8,260.0 L757.5,259.2 L760.3,258.6 L763.0,258.2 L765.8,258.0 L768.6,258.0 L771.4,258.2 L774.1,258.6 L776.9,259.2 L779.6,260.0 L782.2,260.9 L784.7,262.0 L787.2,263.4 L789.6,264.8 L791.8,266.5 L794.0,268.3 L796.0,270.2 L797.8,272.3 L799.6,274.5 L801.1,276.8 L802.5,279.2 L803.7,281.7 L804.8,284.3 L805.7,287.0 L806.3,289.7 L806.8,292.4 L807.1,295.2 L807.2,298.0M816.6,298.0 L816.5,301.3 L816.2,304.7 L815.6,308.0 L814.8,311.2 L813.7,314.4 L812.5,317.5 L811.0,320.5 L809.3,323.4 L807.5,326.2 L805.4,328.9 L803.2,331.3 L800.8,333.7 L798.2,335.8 L795.5,337.8 L792.6,339.6 L789.7,341.1 L786.6,342.5 L783.5,343.7 L780.3,344.6 L777.0,345.3 L773.7,345.7 L770.3,346.0 L767.0,346.0 L763.6,345.7 L760.3,345.3 L757.0,344.6 L753.8,343.7 L750.7,342.5 L747.6,341.1 L744.6,339.6 L741.8,337.8 L739.1,335.8 L736.5,333.7 L734.1,331.3 L731.9,328.9 L729.8,326.2 L727.9,323.4 L726.3,320.5 L724.8,317.5 L723.5,314.4 L722.5,311.2 L721.7,308.0 L721.1,304.7 L720.8,301.3 L720.6,298.0 L720.8,294.7 L721.1,291.3 L721.7,288.0 L722.5,284.8 L723.5,281.6 L724.8,278.5 L726.3,275.5 L727.9,272.6 L729.8,269.8 L731.9,267.1 L734.1,264.7 L736.5,262.3 L739.1,260.2 L741.8,258.2 L744.6,256.4 L747.6,254.9 L750.7,253.5 L753.8,252.3 L757.0,251.4 L760.3,250.7 L763.6,250.3 L767.0,250.0 L770.3,250.0 L773.7,250.3 L777.0,250.7 L780.3,251.4 L783.5,252.3 L786.6,253.5 L789.7,254.9 L792.6,256.4 L795.5,258.2 L798.2,260.2 L800.8,262.3 L803.2,264.7 L805.4,267.1 L807.5,269.8 L809.3,272.6 L811.0,275.5 L812.5,278.5 L813.7,281.6 L814.8,284.8 L815.6,288.0 L816.2,291.3 L816.5,294.7 L816.6,298.0M829.7,298.0 L829.5,301.9 L829.1,305.8 L828.4,309.6 L827.4,313.4 L826.1,317.2 L824.5,320.8 L822.7,324.3 L820.6,327.7 L818.3,330.9 L815.7,334.0 L812.9,336.9 L809.9,339.6 L806.8,342.1 L803.4,344.4 L799.9,346.5 L796.2,348.3 L792.4,349.9 L788.5,351.3 L784.5,352.3 L780.4,353.1 L776.3,353.7 L772.2,354.0 L768.0,354.0 L763.9,353.7 L759.7,353.1 L755.7,352.3 L751.7,351.3 L747.8,349.9 L744.0,348.3 L740.3,346.5 L736.8,344.4 L733.4,342.1 L730.2,339.6 L727.2,336.9 L724.4,334.0 L721.9,330.9 L719.5,327.7 L717.5,324.3 L715.6,320.8 L714.1,317.2 L712.8,313.4 L711.8,309.6 L711.1,305.8 L710.6,301.9 L710.5,298.0 L710.6,294.1 L711.1,290.2 L711.8,286.4 L712.8,282.6 L714.1,278.8 L715.6,275.2 L717.5,271.7 L719.5,268.3 L721.9,265.1 L724.4,262.0 L727.2,259.1 L730.2,256.4 L733.4,253.9 L736.8,251.6 L740.3,249.5 L744.0,247.7 L747.8,246.1 L751.7,244.7 L755.7,243.7 L759.7,242.9 L763.9,242.3 L768.0,242.0 L772.2,242.0 L776.3,242.3 L780.4,242.9 L784.5,243.7 L788.5,244.7 L792.4,246.1 L796.2,247.7 L799.9,249.5 L803.4,251.6 L806.8,253.9 L809.9,256.4 L812.9,259.1 L815.7,262.0 L818.3,265.1 L820.6,268.3 L822.7,271.7 L824.5,275.2 L826.1,278.8 L827.4,282.6 L828.4,286.4 L829.1,290.2 L829.5,294.1 L829.7,298.0M857.6,298.0 L857.4,302.7 L856.8,307.5 L855.8,312.1 L854.3,316.7 L852.5,321.3 L850.3,325.7 L847.7,329.9 L844.7,334.0 L841.3,338.0 L837.7,341.7 L833.7,345.2 L829.4,348.5 L824.8,351.6 L820.0,354.4 L814.9,356.9 L809.7,359.1 L804.2,361.0 L798.6,362.7 L792.9,364.0 L787.1,365.0 L781.2,365.6 L775.2,366.0 L769.3,366.0 L763.3,365.6 L757.4,365.0 L751.6,364.0 L745.8,362.7 L740.2,361.0 L734.8,359.1 L729.5,356.9 L724.5,354.4 L719.7,351.6 L715.1,348.5 L710.8,345.2 L706.8,341.7 L703.1,338.0 L699.8,334.0 L696.8,329.9 L694.2,325.7 L692.0,321.3 L690.1,316.7 L688.7,312.1 L687.7,307.5 L687.0,302.7 L686.8,298.0 L687.0,293.3 L687.7,288.5 L688.7,283.9 L690.1,279.3 L692.0,274.7 L694.2,270.3 L696.8,266.1 L699.8,262.0 L703.1,258.0 L706.8,254.3 L710.8,250.8 L715.1,247.5 L719.7,244.4 L724.5,241.6 L729.5,239.1 L734.8,236.9 L740.2,235.0 L745.8,233.3 L751.6,232.0 L757.4,231.0 L763.3,230.4 L769.3,230.0 L775.2,230.0 L781.2,230.4 L787.1,231.0 L792.9,232.0 L798.6,233.3 L804.2,235.0 L809.7,236.9 L814.9,239.1 L820.0,241.6 L824.8,244.4 L829.4,247.5 L833.7,250.8 L837.7,254.3 L841.3,258.0 L844.7,262.0 L847.7,266.1 L850.3,270.3 L852.5,274.7 L854.3,279.3 L855.8,283.9 L856.8,288.5 L857.4,293.3 L857.6,298.0M890.2,298.0 L890.0,303.6 L889.1,309.1 L887.7,314.6 L885.8,320.1 L883.3,325.4 L880.2,330.5 L876.7,335.6 L872.6,340.4 L868.1,345.0 L863.1,349.4 L857.7,353.6 L851.9,357.5 L845.7,361.0 L839.2,364.3 L832.3,367.3 L825.2,369.9 L817.8,372.2 L810.2,374.1 L802.4,375.6 L794.5,376.8 L786.5,377.6 L778.4,378.0 L770.4,378.0 L762.3,377.6 L754.3,376.8 L746.4,375.6 L738.6,374.1 L731.0,372.2 L723.6,369.9 L716.5,367.3 L709.6,364.3 L703.1,361.0 L696.9,357.5 L691.1,353.6 L685.7,349.4 L680.7,345.0 L676.2,340.4 L672.1,335.6 L668.6,330.5 L665.5,325.4 L663.0,320.1 L661.1,314.6 L659.7,309.1 L658.8,303.6 L658.6,298.0 L658.8,292.4 L659.7,286.9 L661.1,281.4 L663.0,275.9 L665.5,270.6 L668.6,265.5 L672.1,260.4 L676.2,255.6 L680.7,251.0 L685.7,246.6 L691.1,242.4 L696.9,238.5 L703.1,235.0 L709.6,231.7 L716.5,228.7 L723.6,226.1 L731.0,223.8 L738.6,221.9 L746.4,220.4 L754.3,219.2 L762.3,218.4 L770.4,218.0 L778.4,218.0 L786.5,218.4 L794.5,219.2 L802.4,220.4 L810.2,221.9 L817.8,223.8 L825.2,226.1 L832.3,228.7 L839.2,231.7 L845.7,235.0 L851.9,238.5 L857.7,242.4 L863.1,246.6 L868.1,251.0 L872.6,255.6 L876.7,260.4 L880.2,265.5 L883.3,270.6 L885.8,275.9 L887.7,281.4 L889.1,286.9 L890.0,292.4 L890.2,298.0M930.7,298.0 L930.4,304.5 L929.2,310.9 L927.4,317.3 L924.8,323.6 L921.5,329.8 L917.4,335.8 L912.7,341.7 L907.3,347.3 L901.3,352.7 L894.7,357.8 L887.5,362.6 L879.8,367.1 L871.6,371.3 L862.9,375.1 L853.7,378.5 L844.3,381.6 L834.4,384.2 L824.3,386.4 L814.0,388.2 L803.5,389.6 L792.8,390.5 L782.1,390.9 L771.4,390.9 L760.6,390.5 L750.0,389.6 L739.5,388.2 L729.1,386.4 L719.0,384.2 L709.2,381.6 L699.7,378.5 L690.6,375.1 L681.9,371.3 L673.7,367.1 L666.0,362.6 L658.8,357.8 L652.1,352.7 L646.1,347.3 L640.8,341.7 L636.0,335.8 L632.0,329.8 L628.7,323.6 L626.1,317.3 L624.2,310.9 L623.1,304.5 L622.7,298.0 L623.1,291.5 L624.2,285.1 L626.1,278.7 L628.7,272.4 L632.0,266.2 L636.0,260.2 L640.8,254.3 L646.1,248.7 L652.1,243.3 L658.8,238.2 L666.0,233.4 L673.7,228.9 L681.9,224.7 L690.6,220.9 L699.7,217.5 L709.2,214.4 L719.0,211.8 L729.1,209.6 L739.5,207.8 L750.0,206.4 L760.6,205.5 L771.4,205.1 L782.1,205.1 L792.8,205.5 L803.5,206.4 L814.0,207.8 L824.3,209.6 L834.4,211.8 L844.3,214.4 L853.7,217.5 L862.9,220.9 L871.6,224.7 L879.8,228.9 L887.5,233.4 L894.7,238.2 L901.3,243.3 L907.3,248.7 L912.7,254.3 L917.4,260.2 L921.5,266.2 L924.8,272.4 L927.4,278.7 L929.2,285.1 L930.4,291.5 L930.7,298.0M980.4,298.0 L979.9,305.5 L978.5,312.9 L976.0,320.2 L972.6,327.5 L968.3,334.6 L963.0,341.5 L956.9,348.2 L949.9,354.7 L942.0,360.9 L933.4,366.8 L924.0,372.3 L913.9,377.5 L903.1,382.3 L891.7,386.7 L879.8,390.7 L867.4,394.2 L854.6,397.2 L841.4,399.8 L827.9,401.8 L814.2,403.4 L800.3,404.4 L786.3,404.9 L772.2,404.9 L758.2,404.4 L744.3,403.4 L730.6,401.8 L717.1,399.8 L703.9,397.2 L691.1,394.2 L678.7,390.7 L666.8,386.7 L655.4,382.3 L644.7,377.5 L634.6,372.3 L625.2,366.8 L616.5,360.9 L608.7,354.7 L601.6,348.2 L595.5,341.5 L590.2,334.6 L585.9,327.5 L582.5,320.2 L580.1,312.9 L578.6,305.5 L578.1,298.0 L578.6,290.5 L580.1,283.1 L582.5,275.8 L585.9,268.5 L590.2,261.4 L595.5,254.5 L601.6,247.8 L608.7,241.3 L616.5,235.1 L625.2,229.2 L634.6,223.7 L644.7,218.5 L655.4,213.7 L666.8,209.3 L678.7,205.3 L691.1,201.8 L703.9,198.8 L717.1,196.2 L730.6,194.2 L744.3,192.6 L758.2,191.6 L772.2,191.1 L786.3,191.1 L800.3,191.6 L814.2,192.6 L827.9,194.2 L841.4,196.2 L854.6,198.8 L867.4,201.8 L879.8,205.3 L891.7,209.3 L903.1,213.7 L913.9,218.5 L924.0,223.7 L933.4,229.2 L942.0,235.1 L949.9,241.3 L956.9,247.8 L963.0,254.5 L968.3,261.4 L972.6,268.5 L976.0,275.8 L978.5,283.1 L979.9,290.5 L980.4,298.0M1040.6,298.0 L1040.0,306.5 L1038.1,315.0 L1034.9,323.4 L1030.6,331.6 L1025.0,339.7 L1018.2,347.6 L1010.3,355.3 L1001.3,362.7 L991.2,369.7 L980.1,376.4 L968.0,382.7 L955.0,388.7 L941.2,394.1 L926.6,399.1 L911.3,403.7 L895.3,407.7 L878.8,411.1 L861.9,414.0 L844.5,416.4 L826.9,418.1 L809.0,419.3 L791.0,419.9 L772.9,419.9 L754.9,419.3 L737.0,418.1 L719.4,416.4 L702.0,414.0 L685.1,411.1 L668.6,407.7 L652.6,403.7 L637.3,399.1 L622.7,394.1 L608.9,388.7 L595.9,382.7 L583.8,376.4 L572.7,369.7 L562.6,362.7 L553.6,355.3 L545.7,347.6 L538.9,339.7 L533.3,331.6 L529.0,323.4 L525.8,315.0 L524.0,306.5 L523.3,298.0 L524.0,289.5 L525.8,281.0 L529.0,272.6 L533.3,264.4 L538.9,256.3 L545.7,248.4 L553.6,240.7 L562.6,233.3 L572.7,226.3 L583.8,219.6 L595.9,213.3 L608.9,207.3 L622.7,201.9 L637.3,196.9 L652.6,192.3 L668.6,188.3 L685.1,184.9 L702.0,182.0 L719.4,179.6 L737.0,177.9 L754.9,176.7 L772.9,176.1 L791.0,176.1 L809.0,176.7 L826.9,177.9 L844.5,179.6 L861.9,182.0 L878.8,184.9 L895.3,188.3 L911.3,192.3 L926.6,196.9 L941.2,201.9 L955.0,207.3 L968.0,213.3 L980.1,219.6 L991.2,226.3 L1001.3,233.3 L1010.3,240.7 L1018.2,248.4 L1025.0,256.3 L1030.6,264.4 L1034.9,272.6 L1038.1,281.0 L1040.0,289.5 L1040.6,298.0M1112.7,298.0 L1111.9,307.6 L1109.5,317.2 L1105.6,326.7 L1100.0,336.0 L1093.0,345.2 L1084.4,354.1 L1074.3,362.8 L1062.9,371.1 L1050.1,379.1 L1036.0,386.7 L1020.7,393.9 L1004.2,400.6 L986.7,406.7 L968.2,412.4 L948.8,417.5 L928.6,422.0 L907.7,426.0 L886.2,429.2 L864.2,431.9 L841.8,433.9 L819.1,435.2 L796.3,435.9 L773.4,435.9 L750.6,435.2 L727.9,433.9 L705.5,431.9 L683.5,429.2 L662.0,426.0 L641.1,422.0 L620.9,417.5 L601.5,412.4 L583.0,406.7 L565.4,400.6 L549.0,393.9 L533.7,386.7 L519.6,379.1 L506.8,371.1 L495.3,362.8 L485.3,354.1 L476.7,345.2 L469.7,336.0 L464.1,326.7 L460.1,317.2 L457.8,307.6 L457.0,298.0 L457.8,288.4 L460.1,278.8 L464.1,269.3 L469.7,260.0 L476.7,250.8 L485.3,241.9 L495.3,233.2 L506.8,224.9 L519.6,216.9 L533.7,209.3 L549.0,202.1 L565.4,195.4 L583.0,189.3 L601.5,183.6 L620.9,178.5 L641.1,174.0 L662.0,170.0 L683.5,166.8 L705.5,164.1 L727.9,162.1 L750.6,160.8 L773.4,160.1 L796.3,160.1 L819.1,160.8 L841.8,162.1 L864.2,164.1 L886.2,166.8 L907.7,170.0 L928.6,174.0 L948.8,178.5 L968.2,183.6 L986.7,189.3 L1004.2,195.4 L1020.7,202.1 L1036.0,209.3 L1050.1,216.9 L1062.9,224.9 L1074.3,233.2 L1084.4,241.9 L1093.0,250.8 L1100.0,260.0 L1105.6,269.3 L1109.5,278.8 L1111.9,288.4 L1112.7,298.0M1198.3,298.0 L1197.3,308.8 L1194.3,319.6 L1189.4,330.2 L1182.4,340.7 L1173.6,351.0 L1162.9,361.0 L1150.3,370.8 L1136.0,380.1 L1120.0,389.1 L1102.3,397.6 L1083.1,405.7 L1062.5,413.2 L1040.6,420.1 L1017.4,426.5 L993.1,432.2 L967.8,437.3 L941.7,441.7 L914.7,445.4 L887.2,448.4 L859.2,450.6 L830.8,452.2 L802.2,452.9 L773.6,452.9 L745.0,452.2 L716.6,450.6 L688.6,448.4 L661.1,445.4 L634.1,441.7 L608.0,437.3 L582.7,432.2 L558.4,426.5 L535.2,420.1 L513.3,413.2 L492.7,405.7 L473.5,397.6 L455.8,389.1 L439.8,380.1 L425.5,370.8 L412.9,361.0 L402.2,351.0 L393.4,340.7 L386.4,330.2 L381.5,319.6 L378.5,308.8 L377.5,298.0 L378.5,287.2 L381.5,276.4 L386.4,265.8 L393.4,255.3 L402.2,245.0 L412.9,235.0 L425.5,225.2 L439.8,215.9 L455.8,206.9 L473.5,198.4 L492.7,190.3 L513.3,182.8 L535.2,175.9 L558.4,169.5 L582.7,163.8 L608.0,158.7 L634.1,154.3 L661.1,150.6 L688.6,147.6 L716.6,145.4 L745.0,143.8 L773.6,143.1 L802.2,143.1 L830.8,143.8 L859.2,145.4 L887.2,147.6 L914.7,150.6 L941.7,154.3 L967.8,158.7 L993.1,163.8 L1017.4,169.5 L1040.6,175.9 L1062.5,182.8 L1083.1,190.3 L1102.3,198.4 L1120.0,206.9 L1136.0,215.9 L1150.3,225.2 L1162.9,235.0 L1173.6,245.0 L1182.4,255.3 L1189.4,265.8 L1194.3,276.4 L1197.3,287.2 L1198.3,298.0M777.7,298.0 L781.8,298.0 L786.0,298.0 L790.1,298.0 L794.2,298.0 L798.4,298.0 L802.5,298.0 L806.6,298.0 L810.7,298.0 L814.9,298.0 L819.0,298.0 L824.4,298.0 L831.8,298.0 L839.6,298.0 L847.8,298.0 L856.4,298.0 L865.4,298.0 L874.7,298.0 L884.5,298.0 L894.6,298.0 L905.2,298.0 L916.1,298.0 L927.4,298.0 L939.2,298.0 L951.3,298.0 L963.8,298.0 L976.7,298.0 L990.0,298.0 L1003.6,298.0 L1017.7,298.0 L1032.2,298.0 L1047.0,298.0 L1062.3,298.0 L1077.9,298.0 L1093.9,298.0 L1110.3,298.0 L1127.2,298.0 L1144.4,298.0 L1162.0,298.0 L1180.0,298.0 L1198.3,298.0M777.5,300.3 L781.6,300.9 L785.7,301.4 L789.8,302.0 L793.9,302.5 L797.9,303.1 L802.0,303.6 L806.1,304.2 L810.2,304.7 L814.3,305.3 L818.4,305.8 L823.7,306.4 L831.1,306.9 L838.8,307.5 L846.9,308.0 L855.4,308.6 L864.2,309.1 L873.5,309.7 L883.1,310.2 L893.2,310.7 L903.6,311.3 L914.4,311.8 L925.6,312.4 L937.2,312.9 L949.1,313.5 L961.5,314.0 L974.2,314.6 L987.4,315.1 L1000.9,315.7 L1014.8,316.2 L1029.1,316.8 L1043.8,317.3 L1058.8,317.9 L1074.3,318.4 L1090.1,319.0 L1106.3,319.5 L1123.0,320.1 L1140.0,320.6 L1157.3,321.2 L1175.1,321.7 L1193.3,322.2M777.0,302.6 L780.9,303.7 L784.9,304.8 L788.8,305.9 L792.8,307.0 L796.8,308.0 L800.7,309.1 L804.7,310.2 L808.6,311.3 L812.6,312.4 L816.6,313.5 L821.7,314.5 L828.8,315.6 L836.3,316.7 L844.1,317.8 L852.3,318.9 L860.8,319.9 L869.8,321.0 L879.1,322.1 L888.8,323.2 L898.8,324.3 L909.3,325.3 L920.1,326.4 L931.2,327.5 L942.8,328.6 L954.7,329.7 L967.0,330.8 L979.7,331.8 L992.7,332.9 L1006.1,334.0 L1019.9,335.1 L1034.1,336.2 L1048.6,337.2 L1063.5,338.3 L1078.8,339.4 L1094.4,340.5 L1110.4,341.6 L1126.8,342.7 L1143.6,343.7 L1160.7,344.8 L1178.3,345.9M776.1,304.8 L779.8,306.4 L783.6,308.0 L787.3,309.6 L791.1,311.2 L794.8,312.8 L798.6,314.3 L802.3,315.9 L806.1,317.5 L809.8,319.1 L813.6,320.7 L818.4,322.3 L825.1,323.9 L832.1,325.5 L839.5,327.1 L847.2,328.6 L855.3,330.2 L863.7,331.8 L872.4,333.4 L881.6,335.0 L891.0,336.6 L900.8,338.2 L911.0,339.8 L921.5,341.4 L932.4,342.9 L943.6,344.5 L955.1,346.1 L967.0,347.7 L979.3,349.3 L991.9,350.9 L1004.9,352.5 L1018.2,354.1 L1031.8,355.7 L1045.8,357.2 L1060.2,358.8 L1074.9,360.4 L1089.9,362.0 L1105.3,363.6 L1121.1,365.2 L1137.2,366.8 L1153.6,368.4M774.8,306.8 L778.3,308.9 L781.8,310.9 L785.2,313.0 L788.7,315.0 L792.1,317.1 L795.6,319.2 L799.1,321.2 L802.5,323.3 L806.0,325.3 L809.5,327.4 L814.0,329.4 L820.1,331.5 L826.5,333.6 L833.2,335.6 L840.3,337.7 L847.7,339.7 L855.4,341.8 L863.4,343.8 L871.7,345.9 L880.4,348.0 L889.3,350.0 L898.6,352.1 L908.2,354.1 L918.1,356.2 L928.4,358.2 L938.9,360.3 L949.8,362.4 L961.0,364.4 L972.5,366.5 L984.3,368.5 L996.4,370.6 L1008.9,372.6 L1021.7,374.7 L1034.8,376.8 L1048.2,378.8 L1061.9,380.9 L1075.9,382.9 L1090.3,385.0 L1105.0,387.0 L1120.0,389.1M773.3,308.6 L776.4,311.1 L779.5,313.6 L782.6,316.0 L785.7,318.5 L788.8,321.0 L791.9,323.5 L795.0,325.9 L798.1,328.4 L801.3,330.9 L804.4,333.4 L808.4,335.8 L813.8,338.3 L819.5,340.8 L825.5,343.3 L831.7,345.7 L838.2,348.2 L845.1,350.7 L852.1,353.2 L859.5,355.6 L867.1,358.1 L875.1,360.6 L883.2,363.1 L891.7,365.5 L900.5,368.0 L909.5,370.5 L918.8,373.0 L928.4,375.4 L938.2,377.9 L948.4,380.4 L958.8,382.9 L969.5,385.3 L980.4,387.8 L991.7,390.3 L1003.2,392.8 L1015.0,395.2 L1027.1,397.7 L1039.4,400.2 L1052.0,402.7 L1064.9,405.1 L1078.1,407.6M771.5,310.1 L774.2,313.0 L776.9,315.8 L779.6,318.6 L782.3,321.5 L785.0,324.3 L787.6,327.1 L790.3,330.0 L793.0,332.8 L795.7,335.6 L798.4,338.5 L801.8,341.3 L806.4,344.1 L811.3,346.9 L816.4,349.8 L821.7,352.6 L827.2,355.4 L833.0,358.3 L839.0,361.1 L845.2,363.9 L851.6,366.8 L858.3,369.6 L865.2,372.4 L872.4,375.3 L879.8,378.1 L887.4,380.9 L895.2,383.8 L903.3,386.6 L911.6,389.4 L920.1,392.3 L928.9,395.1 L937.9,397.9 L947.1,400.7 L956.5,403.6 L966.2,406.4 L976.1,409.2 L986.3,412.1 L996.6,414.9 L1007.3,417.7 L1018.1,420.6 L1029.2,423.4M769.5,311.4 L771.7,314.5 L773.9,317.6 L776.2,320.7 L778.4,323.8 L780.6,327.0 L782.8,330.1 L785.0,333.2 L787.3,336.3 L789.5,339.4 L791.7,342.6 L794.5,345.7 L798.2,348.8 L802.1,351.9 L806.2,355.0 L810.4,358.1 L814.8,361.3 L819.4,364.4 L824.2,367.5 L829.1,370.6 L834.3,373.7 L839.6,376.9 L845.1,380.0 L850.7,383.1 L856.6,386.2 L862.6,389.3 L868.8,392.4 L875.2,395.6 L881.7,398.7 L888.4,401.8 L895.4,404.9 L902.4,408.0 L909.7,411.2 L917.1,414.3 L924.8,417.4 L932.6,420.5 L940.5,423.6 L948.7,426.8 L957.0,429.9 L965.5,433.0 L974.2,436.1M767.3,312.3 L769.0,315.6 L770.8,318.9 L772.5,322.3 L774.2,325.6 L775.9,328.9 L777.6,332.2 L779.3,335.6 L781.0,338.9 L782.7,342.2 L784.5,345.6 L786.6,348.9 L789.3,352.2 L792.1,355.5 L795.1,358.9 L798.2,362.2 L801.4,365.5 L804.7,368.9 L808.2,372.2 L811.7,375.5 L815.4,378.8 L819.2,382.2 L823.2,385.5 L827.2,388.8 L831.4,392.2 L835.7,395.5 L840.1,398.8 L844.7,402.1 L849.3,405.5 L854.1,408.8 L859.0,412.1 L864.1,415.5 L869.2,418.8 L874.5,422.1 L879.9,425.4 L885.4,428.8 L891.0,432.1 L896.7,435.4 L902.6,438.8 L908.6,442.1 L914.7,445.4M765.0,312.8 L766.2,316.3 L767.4,319.7 L768.6,323.2 L769.8,326.6 L770.9,330.1 L772.1,333.6 L773.3,337.0 L774.5,340.5 L775.6,343.9 L776.8,347.4 L778.2,350.8 L779.9,354.3 L781.6,357.8 L783.5,361.2 L785.3,364.7 L787.3,368.1 L789.3,371.6 L791.3,375.0 L793.4,378.5 L795.6,382.0 L797.9,385.4 L800.2,388.9 L802.5,392.3 L805.0,395.8 L807.4,399.2 L810.0,402.7 L812.6,406.2 L815.3,409.6 L818.0,413.1 L820.8,416.5 L823.7,420.0 L826.6,423.4 L829.5,426.9 L832.6,430.4 L835.7,433.8 L838.8,437.3 L842.1,440.7 L845.4,444.2 L848.7,447.6 L852.1,451.1M762.7,313.0 L763.3,316.5 L764.0,320.0 L764.6,323.5 L765.2,327.0 L765.9,330.5 L766.5,334.0 L767.1,337.5 L767.7,341.0 L768.4,344.5 L769.0,348.0 L769.6,351.5 L770.3,355.0 L770.9,358.5 L771.5,362.0 L772.1,365.5 L772.8,369.0 L773.4,372.5 L774.0,376.0 L774.7,379.5 L775.3,383.0 L775.9,386.5 L776.6,390.0 L777.2,393.5 L777.8,397.0 L778.5,400.5 L779.1,404.0 L779.7,407.5 L780.3,411.0 L781.0,414.5 L781.6,418.0 L782.2,421.5 L782.9,425.0 L783.5,428.5 L784.1,432.0 L784.8,435.5 L785.4,439.0 L786.0,442.5 L786.6,446.0 L787.3,449.5 L787.9,453.0M760.4,312.8 L760.4,316.3 L760.5,319.7 L760.6,323.2 L760.7,326.6 L760.8,330.1 L760.8,333.6 L760.9,337.0 L761.0,340.5 L761.1,343.9 L761.2,347.4 L761.1,350.8 L760.6,354.3 L760.1,357.8 L759.6,361.2 L759.0,364.7 L758.3,368.1 L757.6,371.6 L756.8,375.0 L755.9,378.5 L755.0,382.0 L754.0,385.4 L753.0,388.9 L751.9,392.3 L750.7,395.8 L749.5,399.2 L748.2,402.7 L746.8,406.2 L745.4,409.6 L743.9,413.1 L742.4,416.5 L740.8,420.0 L739.2,423.4 L737.4,426.9 L735.7,430.4 L733.8,433.8 L731.9,437.3 L730.0,440.7 L727.9,444.2 L725.8,447.6 L723.7,451.1M758.1,312.3 L757.6,315.6 L757.2,318.9 L756.7,322.3 L756.3,325.6 L755.8,328.9 L755.4,332.2 L754.9,335.6 L754.5,338.9 L754.0,342.2 L753.5,345.6 L752.7,348.9 L751.2,352.2 L749.7,355.5 L747.9,358.9 L746.1,362.2 L744.2,365.5 L742.1,368.9 L739.9,372.2 L737.6,375.5 L735.2,378.8 L732.6,382.2 L729.9,385.5 L727.1,388.8 L724.2,392.2 L721.2,395.5 L718.0,398.8 L714.7,402.1 L711.3,405.5 L707.8,408.8 L704.2,412.1 L700.4,415.5 L696.5,418.8 L692.5,422.1 L688.4,425.4 L684.1,428.8 L679.8,432.1 L675.3,435.4 L670.7,438.8 L665.9,442.1 L661.1,445.4M755.9,311.4 L754.9,314.5 L754.0,317.6 L753.0,320.7 L752.1,323.8 L751.1,327.0 L750.1,330.1 L749.2,333.2 L748.2,336.3 L747.3,339.4 L746.3,342.6 L744.8,345.7 L742.3,348.8 L739.7,351.9 L736.9,355.0 L733.9,358.1 L730.7,361.3 L727.4,364.4 L723.9,367.5 L720.2,370.6 L716.3,373.7 L712.3,376.9 L708.1,380.0 L703.7,383.1 L699.1,386.2 L694.3,389.3 L689.4,392.4 L684.3,395.6 L679.0,398.7 L673.5,401.8 L667.8,404.9 L662.0,408.0 L656.0,411.2 L649.8,414.3 L643.5,417.4 L636.9,420.5 L630.2,423.6 L623.3,426.8 L616.2,429.9 L609.0,433.0 L601.6,436.1M753.9,310.1 L752.5,313.0 L751.0,315.8 L749.6,318.6 L748.2,321.5 L746.7,324.3 L745.3,327.1 L743.9,330.0 L742.5,332.8 L741.0,335.6 L739.6,338.5 L737.4,341.3 L734.1,344.1 L730.5,346.9 L726.7,349.8 L722.6,352.6 L718.4,355.4 L713.9,358.3 L709.1,361.1 L704.2,363.9 L699.0,366.8 L693.5,369.6 L687.9,372.4 L682.0,375.3 L675.9,378.1 L669.5,380.9 L662.9,383.8 L656.1,386.6 L649.1,389.4 L641.8,392.3 L634.3,395.1 L626.6,397.9 L618.6,400.7 L610.4,403.6 L602.0,406.4 L593.4,409.2 L584.5,412.1 L575.4,414.9 L566.0,417.7 L556.5,420.6 L546.6,423.4M752.1,308.6 L750.2,311.1 L748.4,313.6 L746.6,316.0 L744.7,318.5 L742.9,321.0 L741.0,323.5 L739.2,325.9 L737.3,328.4 L735.5,330.9 L733.6,333.4 L730.9,335.8 L726.7,338.3 L722.3,340.8 L717.6,343.3 L712.6,345.7 L707.3,348.2 L701.8,350.7 L695.9,353.2 L689.8,355.6 L683.5,358.1 L676.8,360.6 L669.9,363.1 L662.7,365.5 L655.2,368.0 L647.4,370.5 L639.4,373.0 L631.0,375.4 L622.5,377.9 L613.6,380.4 L604.4,382.9 L595.0,385.3 L585.3,387.8 L575.3,390.3 L565.1,392.8 L554.5,395.2 L543.7,397.7 L532.6,400.2 L521.2,402.7 L509.6,405.1 L497.7,407.6M750.6,306.8 L748.4,308.9 L746.2,310.9 L744.0,313.0 L741.8,315.0 L739.6,317.1 L737.4,319.2 L735.2,321.2 L733.0,323.3 L730.8,325.3 L728.5,327.4 L725.3,329.4 L720.5,331.5 L715.3,333.6 L709.8,335.6 L704.0,337.7 L697.9,339.7 L691.4,341.8 L684.7,343.8 L677.6,345.9 L670.2,348.0 L662.5,350.0 L654.5,352.1 L646.2,354.1 L637.5,356.2 L628.5,358.2 L619.2,360.3 L609.6,362.4 L599.7,364.4 L589.5,366.5 L578.9,368.5 L568.0,370.6 L556.8,372.6 L545.3,374.7 L533.5,376.8 L521.3,378.8 L508.9,380.9 L496.1,382.9 L483.0,385.0 L469.6,387.0 L455.8,389.1M749.3,304.8 L746.8,306.4 L744.4,308.0 L741.9,309.6 L739.4,311.2 L736.9,312.8 L734.4,314.3 L731.9,315.9 L729.4,317.5 L726.9,319.1 L724.4,320.7 L720.8,322.3 L715.4,323.9 L709.7,325.5 L703.5,327.1 L697.1,328.6 L690.3,330.2 L683.1,331.8 L675.6,333.4 L667.8,335.0 L659.6,336.6 L651.0,338.2 L642.1,339.8 L632.9,341.4 L623.3,342.9 L613.3,344.5 L603.0,346.1 L592.4,347.7 L581.4,349.3 L570.0,350.9 L558.3,352.5 L546.3,354.1 L533.9,355.7 L521.2,357.2 L508.1,358.8 L494.6,360.4 L480.8,362.0 L466.7,363.6 L452.2,365.2 L437.4,366.8 L422.2,368.4M748.4,302.6 L745.7,303.7 L743.0,304.8 L740.3,305.9 L737.6,307.0 L734.9,308.0 L732.2,309.1 L729.5,310.2 L726.8,311.3 L724.1,312.4 L721.4,313.5 L717.5,314.5 L711.7,315.6 L705.5,316.7 L699.0,317.8 L692.0,318.9 L684.7,319.9 L677.0,321.0 L669.0,322.1 L660.6,323.2 L651.8,324.3 L642.6,325.3 L633.1,326.4 L623.1,327.5 L612.9,328.6 L602.2,329.7 L591.2,330.8 L579.8,331.8 L568.0,332.9 L555.8,334.0 L543.3,335.1 L530.4,336.2 L517.1,337.2 L503.5,338.3 L489.5,339.4 L475.1,340.5 L460.3,341.6 L445.2,342.7 L429.7,343.7 L413.8,344.8 L397.5,345.9M747.9,300.3 L745.1,300.9 L742.2,301.4 L739.4,302.0 L736.6,302.5 L733.8,303.1 L730.9,303.6 L728.1,304.2 L725.3,304.7 L722.4,305.3 L719.6,305.8 L715.5,306.4 L709.5,306.9 L703.0,307.5 L696.2,308.0 L688.9,308.6 L681.3,309.1 L673.3,309.7 L665.0,310.2 L656.2,310.7 L647.0,311.3 L637.5,311.8 L627.5,312.4 L617.2,312.9 L606.5,313.5 L595.4,314.0 L583.9,314.6 L572.1,315.1 L559.8,315.7 L547.2,316.2 L534.1,316.8 L520.7,317.3 L506.9,317.9 L492.7,318.4 L478.1,319.0 L463.2,319.5 L447.8,320.1 L432.1,320.6 L415.9,321.2 L399.4,321.7 L382.5,322.2M747.7,298.0 L744.8,298.0 L742.0,298.0 L739.1,298.0 L736.2,298.0 L733.4,298.0 L730.5,298.0 L727.6,298.0 L724.7,298.0 L721.9,298.0 L719.0,298.0 L714.8,298.0 L708.7,298.0 L702.2,298.0 L695.2,298.0 L687.9,298.0 L680.2,298.0 L672.1,298.0 L663.6,298.0 L654.7,298.0 L645.4,298.0 L635.7,298.0 L625.7,298.0 L615.2,298.0 L604.4,298.0 L593.1,298.0 L581.5,298.0 L569.5,298.0 L557.1,298.0 L544.2,298.0 L531.0,298.0 L517.4,298.0 L503.5,298.0 L489.1,298.0 L474.3,298.0 L459.1,298.0 L443.6,298.0 L427.6,298.0 L411.3,298.0 L394.6,298.0 L377.5,298.0M747.9,295.7 L745.1,295.1 L742.2,294.6 L739.4,294.0 L736.6,293.5 L733.8,292.9 L730.9,292.4 L728.1,291.8 L725.3,291.3 L722.4,290.7 L719.6,290.2 L715.5,289.6 L709.5,289.1 L703.0,288.5 L696.2,288.0 L688.9,287.4 L681.3,286.9 L673.3,286.3 L665.0,285.8 L656.2,285.3 L647.0,284.7 L637.5,284.2 L627.5,283.6 L617.2,283.1 L606.5,282.5 L595.4,282.0 L583.9,281.4 L572.1,280.9 L559.8,280.3 L547.2,279.8 L534.1,279.2 L520.7,278.7 L506.9,278.1 L492.7,277.6 L478.1,277.0 L463.2,276.5 L447.8,275.9 L432.1,275.4 L415.9,274.8 L399.4,274.3 L382.5,273.8M748.4,293.4 L745.7,292.3 L743.0,291.2 L740.3,290.1 L737.6,289.0 L734.9,288.0 L732.2,286.9 L729.5,285.8 L726.8,284.7 L724.1,283.6 L721.4,282.5 L717.5,281.5 L711.7,280.4 L705.5,279.3 L699.0,278.2 L692.0,277.1 L684.7,276.1 L677.0,275.0 L669.0,273.9 L660.6,272.8 L651.8,271.7 L642.6,270.7 L633.1,269.6 L623.1,268.5 L612.9,267.4 L602.2,266.3 L591.2,265.2 L579.8,264.2 L568.0,263.1 L555.8,262.0 L543.3,260.9 L530.4,259.8 L517.1,258.8 L503.5,257.7 L489.5,256.6 L475.1,255.5 L460.3,254.4 L445.2,253.3 L429.7,252.3 L413.8,251.2 L397.5,250.1M749.3,291.2 L746.8,289.6 L744.4,288.0 L741.9,286.4 L739.4,284.8 L736.9,283.2 L734.4,281.7 L731.9,280.1 L729.4,278.5 L726.9,276.9 L724.4,275.3 L720.8,273.7 L715.4,272.1 L709.7,270.5 L703.5,268.9 L697.1,267.4 L690.3,265.8 L683.1,264.2 L675.6,262.6 L667.8,261.0 L659.6,259.4 L651.0,257.8 L642.1,256.2 L632.9,254.6 L623.3,253.1 L613.3,251.5 L603.0,249.9 L592.4,248.3 L581.4,246.7 L570.0,245.1 L558.3,243.5 L546.3,241.9 L533.9,240.3 L521.2,238.8 L508.1,237.2 L494.6,235.6 L480.8,234.0 L466.7,232.4 L452.2,230.8 L437.4,229.2 L422.2,227.6M750.6,289.2 L748.4,287.1 L746.2,285.1 L744.0,283.0 L741.8,281.0 L739.6,278.9 L737.4,276.8 L735.2,274.8 L733.0,272.7 L730.8,270.7 L728.5,268.6 L725.3,266.6 L720.5,264.5 L715.3,262.4 L709.8,260.4 L704.0,258.3 L697.9,256.3 L691.4,254.2 L684.7,252.2 L677.6,250.1 L670.2,248.0 L662.5,246.0 L654.5,243.9 L646.2,241.9 L637.5,239.8 L628.5,237.8 L619.2,235.7 L609.6,233.6 L599.7,231.6 L589.5,229.5 L578.9,227.5 L568.0,225.4 L556.8,223.4 L545.3,221.3 L533.5,219.2 L521.3,217.2 L508.9,215.1 L496.1,213.1 L483.0,211.0 L469.6,209.0 L455.8,206.9M752.1,287.4 L750.2,284.9 L748.4,282.4 L746.6,280.0 L744.7,277.5 L742.9,275.0 L741.0,272.5 L739.2,270.1 L737.3,267.6 L735.5,265.1 L733.6,262.6 L730.9,260.2 L726.7,257.7 L722.3,255.2 L717.6,252.7 L712.6,250.3 L707.3,247.8 L701.8,245.3 L695.9,242.8 L689.8,240.4 L683.5,237.9 L676.8,235.4 L669.9,232.9 L662.7,230.5 L655.2,228.0 L647.4,225.5 L639.4,223.0 L631.0,220.6 L622.5,218.1 L613.6,215.6 L604.4,213.1 L595.0,210.7 L585.3,208.2 L575.3,205.7 L565.1,203.2 L554.5,200.8 L543.7,198.3 L532.6,195.8 L521.2,193.3 L509.6,190.9 L497.7,188.4M753.9,285.9 L752.5,283.0 L751.0,280.2 L749.6,277.4 L748.2,274.5 L746.7,271.7 L745.3,268.9 L743.9,266.0 L742.5,263.2 L741.0,260.4 L739.6,257.5 L737.4,254.7 L734.1,251.9 L730.5,249.1 L726.7,246.2 L722.6,243.4 L718.4,240.6 L713.9,237.7 L709.1,234.9 L704.2,232.1 L699.0,229.2 L693.5,226.4 L687.9,223.6 L682.0,220.7 L675.9,217.9 L669.5,215.1 L662.9,212.2 L656.1,209.4 L649.1,206.6 L641.8,203.7 L634.3,200.9 L626.6,198.1 L618.6,195.3 L610.4,192.4 L602.0,189.6 L593.4,186.8 L584.5,183.9 L575.4,181.1 L566.0,178.3 L556.5,175.4 L546.6,172.6M755.9,284.6 L754.9,281.5 L754.0,278.4 L753.0,275.3 L752.1,272.2 L751.1,269.0 L750.1,265.9 L749.2,262.8 L748.2,259.7 L747.3,256.6 L746.3,253.4 L744.8,250.3 L742.3,247.2 L739.7,244.1 L736.9,241.0 L733.9,237.9 L730.7,234.7 L727.4,231.6 L723.9,228.5 L720.2,225.4 L716.3,222.3 L712.3,219.1 L708.1,216.0 L703.7,212.9 L699.1,209.8 L694.3,206.7 L689.4,203.6 L684.3,200.4 L679.0,197.3 L673.5,194.2 L667.8,191.1 L662.0,188.0 L656.0,184.8 L649.8,181.7 L643.5,178.6 L636.9,175.5 L630.2,172.4 L623.3,169.2 L616.2,166.1 L609.0,163.0 L601.6,159.9M758.1,283.7 L757.6,280.4 L757.2,277.1 L756.7,273.7 L756.3,270.4 L755.8,267.1 L755.4,263.8 L754.9,260.4 L754.5,257.1 L754.0,253.8 L753.5,250.4 L752.7,247.1 L751.2,243.8 L749.7,240.5 L747.9,237.1 L746.1,233.8 L744.2,230.5 L742.1,227.1 L739.9,223.8 L737.6,220.5 L735.2,217.2 L732.6,213.8 L729.9,210.5 L727.1,207.2 L724.2,203.8 L721.2,200.5 L718.0,197.2 L714.7,193.9 L711.3,190.5 L707.8,187.2 L704.2,183.9 L700.4,180.5 L696.5,177.2 L692.5,173.9 L688.4,170.6 L684.1,167.2 L679.8,163.9 L675.3,160.6 L670.7,157.2 L665.9,153.9 L661.1,150.6M760.4,283.2 L760.4,279.7 L760.5,276.3 L760.6,272.8 L760.7,269.4 L760.8,265.9 L760.8,262.4 L760.9,259.0 L761.0,255.5 L761.1,252.1 L761.2,248.6 L761.1,245.2 L760.6,241.7 L760.1,238.2 L759.6,234.8 L759.0,231.3 L758.3,227.9 L757.6,224.4 L756.8,221.0 L755.9,217.5 L755.0,214.0 L754.0,210.6 L753.0,207.1 L751.9,203.7 L750.7,200.2 L749.5,196.8 L748.2,193.3 L746.8,189.8 L745.4,186.4 L743.9,182.9 L742.4,179.5 L740.8,176.0 L739.2,172.6 L737.4,169.1 L735.7,165.6 L733.8,162.2 L731.9,158.7 L730.0,155.3 L727.9,151.8 L725.8,148.4 L723.7,144.9M762.7,283.0 L763.3,279.5 L764.0,276.0 L764.6,272.5 L765.2,269.0 L765.9,265.5 L766.5,262.0 L767.1,258.5 L767.7,255.0 L768.4,251.5 L769.0,248.0 L769.6,244.5 L770.3,241.0 L770.9,237.5 L771.5,234.0 L772.1,230.5 L772.8,227.0 L773.4,223.5 L774.0,220.0 L774.7,216.5 L775.3,213.0 L775.9,209.5 L776.6,206.0 L777.2,202.5 L777.8,199.0 L778.5,195.5 L779.1,192.0 L779.7,188.5 L780.3,185.0 L781.0,181.5 L781.6,178.0 L782.2,174.5 L782.9,171.0 L783.5,167.5 L784.1,164.0 L784.7,160.5 L785.4,157.0 L786.0,153.5 L786.6,150.0 L787.3,146.5 L787.9,143.0M765.0,283.2 L766.2,279.7 L767.4,276.3 L768.6,272.8 L769.8,269.4 L770.9,265.9 L772.1,262.4 L773.3,259.0 L774.5,255.5 L775.6,252.1 L776.8,248.6 L778.2,245.2 L779.9,241.7 L781.6,238.2 L783.5,234.8 L785.3,231.3 L787.3,227.9 L789.3,224.4 L791.3,221.0 L793.4,217.5 L795.6,214.0 L797.9,210.6 L800.2,207.1 L802.5,203.7 L805.0,200.2 L807.4,196.8 L810.0,193.3 L812.6,189.8 L815.3,186.4 L818.0,182.9 L820.8,179.5 L823.7,176.0 L826.6,172.6 L829.5,169.1 L832.6,165.6 L835.7,162.2 L838.8,158.7 L842.1,155.3 L845.4,151.8 L848.7,148.4 L852.1,144.9M767.3,283.7 L769.0,280.4 L770.8,277.1 L772.5,273.7 L774.2,270.4 L775.9,267.1 L777.6,263.8 L779.3,260.4 L781.0,257.1 L782.7,253.8 L784.5,250.4 L786.6,247.1 L789.3,243.8 L792.1,240.5 L795.1,237.1 L798.2,233.8 L801.4,230.5 L804.7,227.1 L808.2,223.8 L811.7,220.5 L815.4,217.2 L819.2,213.8 L823.2,210.5 L827.2,207.2 L831.4,203.8 L835.7,200.5 L840.1,197.2 L844.7,193.9 L849.3,190.5 L854.1,187.2 L859.0,183.9 L864.1,180.5 L869.2,177.2 L874.5,173.9 L879.9,170.6 L885.4,167.2 L891.0,163.9 L896.7,160.6 L902.6,157.2 L908.6,153.9 L914.7,150.6M769.5,284.6 L771.7,281.5 L773.9,278.4 L776.2,275.3 L778.4,272.2 L780.6,269.0 L782.8,265.9 L785.0,262.8 L787.3,259.7 L789.5,256.6 L791.7,253.4 L794.5,250.3 L798.2,247.2 L802.1,244.1 L806.2,241.0 L810.4,237.9 L814.8,234.7 L819.4,231.6 L824.2,228.5 L829.1,225.4 L834.3,222.3 L839.6,219.1 L845.1,216.0 L850.7,212.9 L856.6,209.8 L862.6,206.7 L868.8,203.6 L875.2,200.4 L881.7,197.3 L888.4,194.2 L895.4,191.1 L902.4,188.0 L909.7,184.8 L917.1,181.7 L924.8,178.6 L932.6,175.5 L940.5,172.4 L948.7,169.2 L957.0,166.1 L965.5,163.0 L974.2,159.9M771.5,285.9 L774.2,283.0 L776.9,280.2 L779.6,277.4 L782.3,274.5 L785.0,271.7 L787.6,268.9 L790.3,266.0 L793.0,263.2 L795.7,260.4 L798.4,257.5 L801.8,254.7 L806.4,251.9 L811.3,249.1 L816.4,246.2 L821.7,243.4 L827.2,240.6 L833.0,237.7 L839.0,234.9 L845.2,232.1 L851.6,229.2 L858.3,226.4 L865.2,223.6 L872.4,220.7 L879.8,217.9 L887.4,215.1 L895.2,212.2 L903.3,209.4 L911.6,206.6 L920.1,203.7 L928.9,200.9 L937.9,198.1 L947.1,195.3 L956.5,192.4 L966.2,189.6 L976.1,186.8 L986.3,183.9 L996.6,181.1 L1007.3,178.3 L1018.1,175.4 L1029.2,172.6M773.3,287.4 L776.4,284.9 L779.5,282.4 L782.6,280.0 L785.7,277.5 L788.8,275.0 L791.9,272.5 L795.0,270.1 L798.1,267.6 L801.3,265.1 L804.4,262.6 L808.4,260.2 L813.8,257.7 L819.5,255.2 L825.5,252.7 L831.7,250.3 L838.2,247.8 L845.1,245.3 L852.1,242.8 L859.5,240.4 L867.1,237.9 L875.1,235.4 L883.2,232.9 L891.7,230.5 L900.5,228.0 L909.5,225.5 L918.8,223.0 L928.4,220.6 L938.2,218.1 L948.4,215.6 L958.8,213.1 L969.5,210.7 L980.4,208.2 L991.7,205.7 L1003.2,203.2 L1015.0,200.8 L1027.1,198.3 L1039.4,195.8 L1052.0,193.3 L1064.9,190.9 L1078.1,188.4M774.8,289.2 L778.3,287.1 L781.8,285.1 L785.2,283.0 L788.7,281.0 L792.1,278.9 L795.6,276.8 L799.1,274.8 L802.5,272.7 L806.0,270.7 L809.5,268.6 L814.0,266.6 L820.1,264.5 L826.5,262.4 L833.2,260.4 L840.3,258.3 L847.7,256.3 L855.4,254.2 L863.4,252.2 L871.7,250.1 L880.4,248.0 L889.3,246.0 L898.6,243.9 L908.2,241.9 L918.1,239.8 L928.4,237.8 L938.9,235.7 L949.8,233.6 L961.0,231.6 L972.5,229.5 L984.3,227.5 L996.4,225.4 L1008.9,223.4 L1021.7,221.3 L1034.8,219.2 L1048.2,217.2 L1061.9,215.1 L1075.9,213.1 L1090.3,211.0 L1105.0,209.0 L1120.0,206.9M776.1,291.2 L779.8,289.6 L783.6,288.0 L787.3,286.4 L791.1,284.8 L794.8,283.2 L798.6,281.7 L802.3,280.1 L806.1,278.5 L809.8,276.9 L813.6,275.3 L818.4,273.7 L825.1,272.1 L832.1,270.5 L839.5,268.9 L847.2,267.4 L855.3,265.8 L863.7,264.2 L872.4,262.6 L881.6,261.0 L891.0,259.4 L900.8,257.8 L911.0,256.2 L921.5,254.6 L932.4,253.1 L943.6,251.5 L955.1,249.9 L967.0,248.3 L979.3,246.7 L991.9,245.1 L1004.9,243.5 L1018.2,241.9 L1031.8,240.3 L1045.8,238.8 L1060.2,237.2 L1074.9,235.6 L1089.9,234.0 L1105.3,232.4 L1121.1,230.8 L1137.2,229.2 L1153.6,227.6M777.0,293.4 L780.9,292.3 L784.9,291.2 L788.8,290.1 L792.8,289.0 L796.8,288.0 L800.7,286.9 L804.7,285.8 L808.6,284.7 L812.6,283.6 L816.6,282.5 L821.7,281.5 L828.8,280.4 L836.3,279.3 L844.1,278.2 L852.3,277.1 L860.8,276.1 L869.8,275.0 L879.1,273.9 L888.8,272.8 L898.8,271.7 L909.3,270.7 L920.1,269.6 L931.2,268.5 L942.8,267.4 L954.7,266.3 L967.0,265.2 L979.7,264.2 L992.7,263.1 L1006.1,262.0 L1019.9,260.9 L1034.1,259.8 L1048.6,258.8 L1063.5,257.7 L1078.8,256.6 L1094.4,255.5 L1110.4,254.4 L1126.8,253.3 L1143.6,252.3 L1160.7,251.2 L1178.3,250.1M777.5,295.7 L781.6,295.1 L785.7,294.6 L789.8,294.0 L793.9,293.5 L797.9,292.9 L802.0,292.4 L806.1,291.8 L810.2,291.3 L814.3,290.7 L818.4,290.2 L823.7,289.6 L831.1,289.1 L838.8,288.5 L846.9,288.0 L855.4,287.4 L864.2,286.9 L873.5,286.3 L883.1,285.8 L893.2,285.3 L903.6,284.7 L914.4,284.2 L925.6,283.6 L937.2,283.1 L949.1,282.5 L961.5,282.0 L974.2,281.4 L987.4,280.9 L1000.9,280.3 L1014.8,279.8 L1029.1,279.2 L1043.8,278.7 L1058.8,278.1 L1074.3,277.6 L1090.1,277.0 L1106.3,276.5 L1123.0,275.9 L1140.0,275.4 L1157.3,274.8 L1175.1,274.3 L1193.3,273.8" fill="none" stroke="#121214" stroke-width="1.60" opacity="0.9"/>
<path d="M772.2,297.0h3.8v3.8h-3.8zM771.9,298.9h3.8v3.8h-3.8zM771.3,300.7h3.8v3.8h-3.8zM770.5,302.4h3.8v3.8h-3.8zM769.4,303.9h3.8v3.8h-3.8zM768.1,305.2h3.8v3.8h-3.8zM766.5,306.3h3.8v3.8h-3.8zM764.9,307.2h3.8v3.8h-3.8zM763.1,307.8h3.8v3.8h-3.8zM761.2,308.1h3.8v3.8h-3.8zM759.3,308.1h3.8v3.8h-3.8zM757.5,307.8h3.8v3.8h-3.8zM755.7,307.2h3.8v3.8h-3.8zM754.0,306.3h3.8v3.8h-3.8zM752.5,305.2h3.8v3.8h-3.8zM751.1,303.9h3.8v3.8h-3.8zM750.0,302.4h3.8v3.8h-3.8zM749.2,300.7h3.8v3.8h-3.8zM748.6,298.9h3.8v3.8h-3.8zM748.3,297.0h3.8v3.8h-3.8zM748.3,295.2h3.8v3.8h-3.8zM748.6,293.3h3.8v3.8h-3.8zM749.2,291.5h3.8v3.8h-3.8zM750.0,289.8h3.8v3.8h-3.8zM751.1,288.3h3.8v3.8h-3.8zM752.5,287.0h3.8v3.8h-3.8zM754.0,285.9h3.8v3.8h-3.8zM755.7,285.0h3.8v3.8h-3.8zM757.5,284.4h3.8v3.8h-3.8zM759.3,284.1h3.8v3.8h-3.8zM761.2,284.1h3.8v3.8h-3.8zM763.1,284.4h3.8v3.8h-3.8zM764.9,285.0h3.8v3.8h-3.8zM766.5,285.9h3.8v3.8h-3.8zM768.1,287.0h3.8v3.8h-3.8zM769.4,288.3h3.8v3.8h-3.8zM770.5,289.8h3.8v3.8h-3.8zM771.3,291.5h3.8v3.8h-3.8zM771.9,293.3h3.8v3.8h-3.8zM772.2,295.2h3.8v3.8h-3.8zM780.5,297.6h3.8v3.8h-3.8zM780.0,300.5h3.8v3.8h-3.8zM779.1,303.4h3.8v3.8h-3.8zM777.7,306.0h3.8v3.8h-3.8zM776.0,308.4h3.8v3.8h-3.8zM773.9,310.5h3.8v3.8h-3.8zM771.4,312.3h3.8v3.8h-3.8zM768.8,313.7h3.8v3.8h-3.8zM766.0,314.6h3.8v3.8h-3.8zM763.0,315.0h3.8v3.8h-3.8zM760.0,315.0h3.8v3.8h-3.8zM757.1,314.6h3.8v3.8h-3.8zM754.2,313.7h3.8v3.8h-3.8zM751.6,312.3h3.8v3.8h-3.8zM749.2,310.5h3.8v3.8h-3.8zM747.1,308.4h3.8v3.8h-3.8zM745.3,306.0h3.8v3.8h-3.8zM744.0,303.4h3.8v3.8h-3.8zM743.0,300.5h3.8v3.8h-3.8zM742.6,297.6h3.8v3.8h-3.8zM742.6,294.6h3.8v3.8h-3.8zM743.0,291.7h3.8v3.8h-3.8zM744.0,288.8h3.8v3.8h-3.8zM745.3,286.2h3.8v3.8h-3.8zM747.1,283.8h3.8v3.8h-3.8zM749.2,281.7h3.8v3.8h-3.8zM751.6,279.9h3.8v3.8h-3.8zM754.2,278.5h3.8v3.8h-3.8zM757.1,277.6h3.8v3.8h-3.8zM760.0,277.2h3.8v3.8h-3.8zM763.0,277.2h3.8v3.8h-3.8zM766.0,277.6h3.8v3.8h-3.8zM768.8,278.5h3.8v3.8h-3.8zM771.4,279.9h3.8v3.8h-3.8zM773.9,281.7h3.8v3.8h-3.8zM776.0,283.8h3.8v3.8h-3.8zM777.7,286.2h3.8v3.8h-3.8zM779.1,288.8h3.8v3.8h-3.8zM780.0,291.7h3.8v3.8h-3.8zM780.5,294.6h3.8v3.8h-3.8zM789.9,298.2h3.8v3.8h-3.8zM789.2,302.4h3.8v3.8h-3.8zM787.9,306.4h3.8v3.8h-3.8zM786.0,310.2h3.8v3.8h-3.8zM783.5,313.6h3.8v3.8h-3.8zM780.5,316.6h3.8v3.8h-3.8zM777.1,319.1h3.8v3.8h-3.8zM773.3,321.0h3.8v3.8h-3.8zM769.3,322.4h3.8v3.8h-3.8zM765.1,323.0h3.8v3.8h-3.8zM760.8,323.0h3.8v3.8h-3.8zM756.7,322.4h3.8v3.8h-3.8zM752.6,321.0h3.8v3.8h-3.8zM748.9,319.1h3.8v3.8h-3.8zM745.4,316.6h3.8v3.8h-3.8zM742.4,313.6h3.8v3.8h-3.8zM739.9,310.2h3.8v3.8h-3.8zM738.0,306.4h3.8v3.8h-3.8zM736.7,302.4h3.8v3.8h-3.8zM736.0,298.2h3.8v3.8h-3.8zM736.0,294.0h3.8v3.8h-3.8zM736.7,289.8h3.8v3.8h-3.8zM738.0,285.8h3.8v3.8h-3.8zM739.9,282.0h3.8v3.8h-3.8zM742.4,278.6h3.8v3.8h-3.8zM745.4,275.6h3.8v3.8h-3.8zM748.9,273.1h3.8v3.8h-3.8zM752.6,271.2h3.8v3.8h-3.8zM756.7,269.8h3.8v3.8h-3.8zM760.8,269.2h3.8v3.8h-3.8zM765.1,269.2h3.8v3.8h-3.8zM769.3,269.8h3.8v3.8h-3.8zM773.3,271.2h3.8v3.8h-3.8zM777.1,273.1h3.8v3.8h-3.8zM780.5,275.6h3.8v3.8h-3.8zM783.5,278.6h3.8v3.8h-3.8zM786.0,282.0h3.8v3.8h-3.8zM787.9,285.8h3.8v3.8h-3.8zM789.2,289.8h3.8v3.8h-3.8zM789.9,294.0h3.8v3.8h-3.8zM799.9,298.9h3.8v3.8h-3.8zM799.0,304.4h3.8v3.8h-3.8zM797.3,309.7h3.8v3.8h-3.8zM794.8,314.6h3.8v3.8h-3.8zM791.5,319.2h3.8v3.8h-3.8zM787.5,323.1h3.8v3.8h-3.8zM783.0,326.4h3.8v3.8h-3.8zM778.1,328.9h3.8v3.8h-3.8zM772.8,330.6h3.8v3.8h-3.8zM767.3,331.5h3.8v3.8h-3.8zM761.7,331.5h3.8v3.8h-3.8zM756.2,330.6h3.8v3.8h-3.8zM750.9,328.9h3.8v3.8h-3.8zM745.9,326.4h3.8v3.8h-3.8zM741.4,323.1h3.8v3.8h-3.8zM737.5,319.2h3.8v3.8h-3.8zM734.2,314.6h3.8v3.8h-3.8zM731.7,309.7h3.8v3.8h-3.8zM730.0,304.4h3.8v3.8h-3.8zM729.1,298.9h3.8v3.8h-3.8zM729.1,293.3h3.8v3.8h-3.8zM730.0,287.8h3.8v3.8h-3.8zM731.7,282.5h3.8v3.8h-3.8zM734.2,277.6h3.8v3.8h-3.8zM737.5,273.0h3.8v3.8h-3.8zM741.4,269.1h3.8v3.8h-3.8zM745.9,265.8h3.8v3.8h-3.8zM750.9,263.3h3.8v3.8h-3.8zM756.2,261.6h3.8v3.8h-3.8zM761.7,260.7h3.8v3.8h-3.8zM767.3,260.7h3.8v3.8h-3.8zM772.8,261.6h3.8v3.8h-3.8zM778.1,263.3h3.8v3.8h-3.8zM783.0,265.8h3.8v3.8h-3.8zM787.5,269.1h3.8v3.8h-3.8zM791.5,273.0h3.8v3.8h-3.8zM794.8,277.6h3.8v3.8h-3.8zM797.3,282.5h3.8v3.8h-3.8zM799.0,287.8h3.8v3.8h-3.8zM799.9,293.3h3.8v3.8h-3.8zM809.9,299.6h3.8v3.8h-3.8zM808.8,306.4h3.8v3.8h-3.8zM806.7,312.9h3.8v3.8h-3.8zM803.5,319.1h3.8v3.8h-3.8zM799.5,324.7h3.8v3.8h-3.8zM794.6,329.6h3.8v3.8h-3.8zM789.0,333.6h3.8v3.8h-3.8zM782.9,336.8h3.8v3.8h-3.8zM776.3,338.9h3.8v3.8h-3.8zM769.5,340.0h3.8v3.8h-3.8zM762.6,340.0h3.8v3.8h-3.8zM755.7,338.9h3.8v3.8h-3.8zM749.2,336.8h3.8v3.8h-3.8zM743.0,333.6h3.8v3.8h-3.8zM737.4,329.6h3.8v3.8h-3.8zM732.6,324.7h3.8v3.8h-3.8zM728.5,319.1h3.8v3.8h-3.8zM725.4,312.9h3.8v3.8h-3.8zM723.2,306.4h3.8v3.8h-3.8zM722.2,299.6h3.8v3.8h-3.8zM722.2,292.6h3.8v3.8h-3.8zM723.2,285.8h3.8v3.8h-3.8zM725.4,279.3h3.8v3.8h-3.8zM728.5,273.1h3.8v3.8h-3.8zM732.6,267.5h3.8v3.8h-3.8zM737.4,262.6h3.8v3.8h-3.8zM743.0,258.6h3.8v3.8h-3.8zM749.2,255.4h3.8v3.8h-3.8zM755.7,253.3h3.8v3.8h-3.8zM762.6,252.2h3.8v3.8h-3.8zM769.5,252.2h3.8v3.8h-3.8zM776.3,253.3h3.8v3.8h-3.8zM782.9,255.4h3.8v3.8h-3.8zM789.0,258.6h3.8v3.8h-3.8zM794.6,262.6h3.8v3.8h-3.8zM799.5,267.5h3.8v3.8h-3.8zM803.5,273.1h3.8v3.8h-3.8zM806.7,279.3h3.8v3.8h-3.8zM808.8,285.8h3.8v3.8h-3.8zM809.9,292.6h3.8v3.8h-3.8zM819.3,300.2h3.8v3.8h-3.8zM818.0,308.2h3.8v3.8h-3.8zM815.5,316.0h3.8v3.8h-3.8zM811.8,323.3h3.8v3.8h-3.8zM807.0,329.9h3.8v3.8h-3.8zM801.2,335.6h3.8v3.8h-3.8zM794.6,340.4h3.8v3.8h-3.8zM787.4,344.1h3.8v3.8h-3.8zM779.6,346.7h3.8v3.8h-3.8zM771.5,347.9h3.8v3.8h-3.8zM763.4,347.9h3.8v3.8h-3.8zM755.3,346.7h3.8v3.8h-3.8zM747.6,344.1h3.8v3.8h-3.8zM740.3,340.4h3.8v3.8h-3.8zM733.7,335.6h3.8v3.8h-3.8zM727.9,329.9h3.8v3.8h-3.8zM723.1,323.3h3.8v3.8h-3.8zM719.4,316.0h3.8v3.8h-3.8zM716.9,308.2h3.8v3.8h-3.8zM715.6,300.2h3.8v3.8h-3.8zM715.6,292.0h3.8v3.8h-3.8zM716.9,284.0h3.8v3.8h-3.8zM719.4,276.2h3.8v3.8h-3.8zM723.1,268.9h3.8v3.8h-3.8zM727.9,262.3h3.8v3.8h-3.8zM733.7,256.6h3.8v3.8h-3.8zM740.3,251.8h3.8v3.8h-3.8zM747.6,248.1h3.8v3.8h-3.8zM755.3,245.5h3.8v3.8h-3.8zM763.4,244.3h3.8v3.8h-3.8zM771.5,244.3h3.8v3.8h-3.8zM779.6,245.5h3.8v3.8h-3.8zM787.4,248.1h3.8v3.8h-3.8zM794.6,251.8h3.8v3.8h-3.8zM801.2,256.6h3.8v3.8h-3.8zM807.0,262.3h3.8v3.8h-3.8zM811.8,268.9h3.8v3.8h-3.8zM815.5,276.2h3.8v3.8h-3.8zM818.0,284.0h3.8v3.8h-3.8zM819.3,292.0h3.8v3.8h-3.8zM841.0,301.0h3.8v3.8h-3.8zM839.2,310.6h3.8v3.8h-3.8zM835.7,319.8h3.8v3.8h-3.8zM830.6,328.5h3.8v3.8h-3.8zM823.9,336.4h3.8v3.8h-3.8zM816.0,343.2h3.8v3.8h-3.8zM806.8,349.0h3.8v3.8h-3.8zM796.8,353.4h3.8v3.8h-3.8zM786.0,356.4h3.8v3.8h-3.8zM774.9,357.9h3.8v3.8h-3.8zM763.6,357.9h3.8v3.8h-3.8zM752.5,356.4h3.8v3.8h-3.8zM741.7,353.4h3.8v3.8h-3.8zM731.7,349.0h3.8v3.8h-3.8zM722.6,343.2h3.8v3.8h-3.8zM714.6,336.4h3.8v3.8h-3.8zM707.9,328.5h3.8v3.8h-3.8zM702.8,319.8h3.8v3.8h-3.8zM699.3,310.6h3.8v3.8h-3.8zM697.6,301.0h3.8v3.8h-3.8zM697.6,291.2h3.8v3.8h-3.8zM699.3,281.6h3.8v3.8h-3.8zM702.8,272.4h3.8v3.8h-3.8zM707.9,263.7h3.8v3.8h-3.8zM714.6,255.8h3.8v3.8h-3.8zM722.6,249.0h3.8v3.8h-3.8zM731.7,243.2h3.8v3.8h-3.8zM741.7,238.8h3.8v3.8h-3.8zM752.5,235.8h3.8v3.8h-3.8zM763.6,234.3h3.8v3.8h-3.8zM774.9,234.3h3.8v3.8h-3.8zM786.0,235.8h3.8v3.8h-3.8zM796.8,238.8h3.8v3.8h-3.8zM806.8,243.2h3.8v3.8h-3.8zM816.0,249.0h3.8v3.8h-3.8zM823.9,255.8h3.8v3.8h-3.8zM830.6,263.7h3.8v3.8h-3.8zM835.7,272.4h3.8v3.8h-3.8zM839.2,281.6h3.8v3.8h-3.8zM841.0,291.2h3.8v3.8h-3.8zM871.2,301.9h3.8v3.8h-3.8zM868.7,313.4h3.8v3.8h-3.8zM863.9,324.4h3.8v3.8h-3.8zM856.7,334.8h3.8v3.8h-3.8zM847.5,344.2h3.8v3.8h-3.8zM836.4,352.4h3.8v3.8h-3.8zM823.7,359.2h3.8v3.8h-3.8zM809.7,364.5h3.8v3.8h-3.8zM794.8,368.1h3.8v3.8h-3.8zM779.3,369.9h3.8v3.8h-3.8zM763.6,369.9h3.8v3.8h-3.8zM748.1,368.1h3.8v3.8h-3.8zM733.1,364.5h3.8v3.8h-3.8zM719.1,359.2h3.8v3.8h-3.8zM706.4,352.4h3.8v3.8h-3.8zM695.3,344.2h3.8v3.8h-3.8zM686.1,334.8h3.8v3.8h-3.8zM679.0,324.4h3.8v3.8h-3.8zM674.1,313.4h3.8v3.8h-3.8zM671.7,301.9h3.8v3.8h-3.8zM671.7,290.3h3.8v3.8h-3.8zM674.1,278.8h3.8v3.8h-3.8zM679.0,267.8h3.8v3.8h-3.8zM686.1,257.4h3.8v3.8h-3.8zM695.3,248.0h3.8v3.8h-3.8zM706.4,239.8h3.8v3.8h-3.8zM719.1,233.0h3.8v3.8h-3.8zM733.1,227.7h3.8v3.8h-3.8zM748.1,224.1h3.8v3.8h-3.8zM763.6,222.3h3.8v3.8h-3.8zM779.3,222.3h3.8v3.8h-3.8zM794.8,224.1h3.8v3.8h-3.8zM809.7,227.7h3.8v3.8h-3.8zM823.7,233.0h3.8v3.8h-3.8zM836.4,239.8h3.8v3.8h-3.8zM847.5,248.0h3.8v3.8h-3.8zM856.7,257.4h3.8v3.8h-3.8zM863.9,267.8h3.8v3.8h-3.8zM868.7,278.8h3.8v3.8h-3.8zM871.2,290.3h3.8v3.8h-3.8zM907.5,302.9h3.8v3.8h-3.8zM904.2,316.3h3.8v3.8h-3.8zM897.7,329.2h3.8v3.8h-3.8zM888.1,341.3h3.8v3.8h-3.8zM875.8,352.3h3.8v3.8h-3.8zM860.9,361.9h3.8v3.8h-3.8zM843.8,369.9h3.8v3.8h-3.8zM825.0,376.0h3.8v3.8h-3.8zM805.0,380.2h3.8v3.8h-3.8zM784.2,382.3h3.8v3.8h-3.8zM763.1,382.3h3.8v3.8h-3.8zM742.3,380.2h3.8v3.8h-3.8zM722.3,376.0h3.8v3.8h-3.8zM703.5,369.9h3.8v3.8h-3.8zM686.5,361.9h3.8v3.8h-3.8zM671.6,352.3h3.8v3.8h-3.8zM659.2,341.3h3.8v3.8h-3.8zM649.6,329.2h3.8v3.8h-3.8zM643.1,316.3h3.8v3.8h-3.8zM639.8,302.9h3.8v3.8h-3.8zM639.8,289.3h3.8v3.8h-3.8zM643.1,275.9h3.8v3.8h-3.8zM649.6,263.0h3.8v3.8h-3.8zM659.2,250.9h3.8v3.8h-3.8zM671.6,239.9h3.8v3.8h-3.8zM686.5,230.3h3.8v3.8h-3.8zM703.5,222.3h3.8v3.8h-3.8zM722.3,216.2h3.8v3.8h-3.8zM742.3,212.0h3.8v3.8h-3.8zM763.1,209.9h3.8v3.8h-3.8zM784.2,209.9h3.8v3.8h-3.8zM805.0,212.0h3.8v3.8h-3.8zM825.0,216.2h3.8v3.8h-3.8zM843.8,222.3h3.8v3.8h-3.8zM860.9,230.3h3.8v3.8h-3.8zM875.8,239.9h3.8v3.8h-3.8zM888.1,250.9h3.8v3.8h-3.8zM897.7,263.0h3.8v3.8h-3.8zM904.2,275.9h3.8v3.8h-3.8zM907.5,289.3h3.8v3.8h-3.8zM952.4,303.9h3.8v3.8h-3.8zM948.0,319.4h3.8v3.8h-3.8zM939.4,334.4h3.8v3.8h-3.8zM926.8,348.3h3.8v3.8h-3.8zM910.5,361.0h3.8v3.8h-3.8zM890.9,372.1h3.8v3.8h-3.8zM868.5,381.4h3.8v3.8h-3.8zM843.8,388.5h3.8v3.8h-3.8zM817.4,393.3h3.8v3.8h-3.8zM790.0,395.8h3.8v3.8h-3.8zM762.2,395.8h3.8v3.8h-3.8zM734.8,393.3h3.8v3.8h-3.8zM708.4,388.5h3.8v3.8h-3.8zM683.7,381.4h3.8v3.8h-3.8zM661.3,372.1h3.8v3.8h-3.8zM641.7,361.0h3.8v3.8h-3.8zM625.4,348.3h3.8v3.8h-3.8zM612.8,334.4h3.8v3.8h-3.8zM604.2,319.4h3.8v3.8h-3.8zM599.8,303.9h3.8v3.8h-3.8zM599.8,288.3h3.8v3.8h-3.8zM604.2,272.8h3.8v3.8h-3.8zM612.8,257.8h3.8v3.8h-3.8zM625.4,243.9h3.8v3.8h-3.8zM641.7,231.2h3.8v3.8h-3.8zM661.3,220.1h3.8v3.8h-3.8zM683.7,210.8h3.8v3.8h-3.8zM708.4,203.7h3.8v3.8h-3.8zM734.8,198.9h3.8v3.8h-3.8zM762.2,196.4h3.8v3.8h-3.8zM790.0,196.4h3.8v3.8h-3.8zM817.4,198.9h3.8v3.8h-3.8zM843.8,203.7h3.8v3.8h-3.8zM868.5,210.8h3.8v3.8h-3.8zM890.9,220.1h3.8v3.8h-3.8zM910.5,231.2h3.8v3.8h-3.8zM926.8,243.9h3.8v3.8h-3.8zM939.4,257.8h3.8v3.8h-3.8zM948.0,272.8h3.8v3.8h-3.8zM952.4,288.3h3.8v3.8h-3.8zM1007.0,305.1h3.8v3.8h-3.8zM1001.4,322.8h3.8v3.8h-3.8zM990.3,339.9h3.8v3.8h-3.8zM974.0,355.9h3.8v3.8h-3.8zM952.8,370.5h3.8v3.8h-3.8zM927.4,383.2h3.8v3.8h-3.8zM898.4,393.7h3.8v3.8h-3.8zM866.3,401.9h3.8v3.8h-3.8zM832.2,407.4h3.8v3.8h-3.8zM796.7,410.2h3.8v3.8h-3.8zM760.7,410.2h3.8v3.8h-3.8zM725.3,407.4h3.8v3.8h-3.8zM691.1,401.9h3.8v3.8h-3.8zM659.1,393.7h3.8v3.8h-3.8zM630.0,383.2h3.8v3.8h-3.8zM604.6,370.5h3.8v3.8h-3.8zM583.5,355.9h3.8v3.8h-3.8zM567.1,339.9h3.8v3.8h-3.8zM556.0,322.8h3.8v3.8h-3.8zM550.4,305.1h3.8v3.8h-3.8zM550.4,287.1h3.8v3.8h-3.8zM556.0,269.4h3.8v3.8h-3.8zM567.1,252.3h3.8v3.8h-3.8zM583.5,236.3h3.8v3.8h-3.8zM604.6,221.7h3.8v3.8h-3.8zM630.0,209.0h3.8v3.8h-3.8zM659.1,198.5h3.8v3.8h-3.8zM691.1,190.3h3.8v3.8h-3.8zM725.3,184.8h3.8v3.8h-3.8zM760.7,182.0h3.8v3.8h-3.8zM796.7,182.0h3.8v3.8h-3.8zM832.2,184.8h3.8v3.8h-3.8zM866.3,190.3h3.8v3.8h-3.8zM898.4,198.5h3.8v3.8h-3.8zM927.4,209.0h3.8v3.8h-3.8zM952.8,221.7h3.8v3.8h-3.8zM974.0,236.3h3.8v3.8h-3.8zM990.3,252.3h3.8v3.8h-3.8zM1001.4,269.4h3.8v3.8h-3.8zM1007.0,287.1h3.8v3.8h-3.8zM1072.8,306.3h3.8v3.8h-3.8zM1065.7,326.4h3.8v3.8h-3.8zM1051.5,345.8h3.8v3.8h-3.8zM1030.7,364.0h3.8v3.8h-3.8zM1003.7,380.5h3.8v3.8h-3.8zM971.3,395.0h3.8v3.8h-3.8zM934.2,406.9h3.8v3.8h-3.8zM893.3,416.2h3.8v3.8h-3.8zM849.7,422.5h3.8v3.8h-3.8zM804.4,425.7h3.8v3.8h-3.8zM758.6,425.7h3.8v3.8h-3.8zM713.3,422.5h3.8v3.8h-3.8zM669.7,416.2h3.8v3.8h-3.8zM628.8,406.9h3.8v3.8h-3.8zM591.7,395.0h3.8v3.8h-3.8zM559.3,380.5h3.8v3.8h-3.8zM532.3,364.0h3.8v3.8h-3.8zM511.5,345.8h3.8v3.8h-3.8zM497.3,326.4h3.8v3.8h-3.8zM490.2,306.3h3.8v3.8h-3.8zM490.2,285.9h3.8v3.8h-3.8zM497.3,265.8h3.8v3.8h-3.8zM511.5,246.4h3.8v3.8h-3.8zM532.3,228.2h3.8v3.8h-3.8zM559.3,211.7h3.8v3.8h-3.8zM591.7,197.2h3.8v3.8h-3.8zM628.8,185.3h3.8v3.8h-3.8zM669.7,176.0h3.8v3.8h-3.8zM713.3,169.7h3.8v3.8h-3.8zM758.6,166.5h3.8v3.8h-3.8zM804.4,166.5h3.8v3.8h-3.8zM849.7,169.7h3.8v3.8h-3.8zM893.3,176.0h3.8v3.8h-3.8zM934.2,185.3h3.8v3.8h-3.8zM971.3,197.2h3.8v3.8h-3.8zM1003.7,211.7h3.8v3.8h-3.8zM1030.7,228.2h3.8v3.8h-3.8zM1051.5,246.4h3.8v3.8h-3.8zM1065.7,265.8h3.8v3.8h-3.8zM1072.8,285.9h3.8v3.8h-3.8zM1151.3,307.6h3.8v3.8h-3.8zM1142.3,330.3h3.8v3.8h-3.8zM1124.5,352.2h3.8v3.8h-3.8zM1098.2,372.6h3.8v3.8h-3.8zM1064.3,391.2h3.8v3.8h-3.8zM1023.5,407.5h3.8v3.8h-3.8zM976.8,421.0h3.8v3.8h-3.8zM925.3,431.4h3.8v3.8h-3.8zM870.4,438.6h3.8v3.8h-3.8zM813.3,442.1h3.8v3.8h-3.8zM755.6,442.1h3.8v3.8h-3.8zM698.6,438.6h3.8v3.8h-3.8zM643.6,431.4h3.8v3.8h-3.8zM592.2,421.0h3.8v3.8h-3.8zM545.5,407.5h3.8v3.8h-3.8zM504.6,391.2h3.8v3.8h-3.8zM470.7,372.6h3.8v3.8h-3.8zM444.5,352.2h3.8v3.8h-3.8zM426.6,330.3h3.8v3.8h-3.8zM417.6,307.6h3.8v3.8h-3.8zM417.6,284.6h3.8v3.8h-3.8zM426.6,261.9h3.8v3.8h-3.8zM444.5,240.0h3.8v3.8h-3.8zM470.7,219.6h3.8v3.8h-3.8zM504.6,201.0h3.8v3.8h-3.8zM545.5,184.7h3.8v3.8h-3.8zM592.2,171.2h3.8v3.8h-3.8zM643.6,160.8h3.8v3.8h-3.8zM698.6,153.6h3.8v3.8h-3.8zM755.6,150.1h3.8v3.8h-3.8zM813.3,150.1h3.8v3.8h-3.8zM870.4,153.6h3.8v3.8h-3.8zM925.3,160.8h3.8v3.8h-3.8zM976.8,171.2h3.8v3.8h-3.8zM1023.5,184.7h3.8v3.8h-3.8zM1064.3,201.0h3.8v3.8h-3.8zM1098.2,219.6h3.8v3.8h-3.8zM1124.5,240.0h3.8v3.8h-3.8zM1142.3,261.9h3.8v3.8h-3.8zM1151.3,284.6h3.8v3.8h-3.8z" fill="#121214"/>
<ellipse cx="0" cy="0" rx="1" ry="1" fill="url(#gSock)" transform="translate(780 298) scale(62 62)"/><path d="M826.8,299.0L837.2,299.0M826.2,306.2L836.5,307.8M824.5,313.2L834.4,316.3M821.7,319.8L831.0,324.5M817.9,326.0L826.3,332.0M813.1,331.5L820.4,338.7M807.5,336.1L813.6,344.4M801.2,339.9L806.0,349.0M794.5,342.7L797.7,352.4M787.3,344.3L788.9,354.4M780.0,344.9L780.0,355.1M772.7,344.3L771.1,354.4M765.5,342.7L762.3,352.4M758.8,339.9L754.0,349.0M752.5,336.1L746.4,344.4M746.9,331.5L739.6,338.7M742.1,326.0L733.7,332.0M738.3,319.8L729.0,324.5M735.5,313.2L725.6,316.3M733.8,306.2L723.5,307.8M733.2,299.0L722.8,299.0M733.8,291.8L723.5,290.2M735.5,284.8L725.6,281.7M738.3,278.2L729.0,273.5M742.1,272.0L733.7,266.0M746.9,266.5L739.6,259.3M752.5,261.9L746.4,253.6M758.8,258.1L754.0,249.0M765.5,255.3L762.3,245.6M772.7,253.7L771.1,243.6M780.0,253.1L780.0,242.9M787.3,253.7L788.9,243.6M794.5,255.3L797.7,245.6M801.2,258.1L806.0,249.0M807.5,261.9L813.6,253.6M813.1,266.5L820.4,259.3M817.9,272.0L826.3,266.0M821.7,278.2L831.0,273.5M824.5,284.8L834.4,281.7M826.2,291.8L836.5,290.2" stroke="#0e0e10" stroke-width="2.6" opacity="0.9"/><circle cx="760" cy="298" r="15" fill="none" stroke="#0e0e10" stroke-width="3" stroke-dasharray="2,2.5"/><circle cx="760" cy="298" r="9" fill="none" stroke="#0e0e10" stroke-width="2" stroke-dasharray="2,2"/><circle cx="760" cy="298" r="13" fill="#1c1c1e" opacity="0.8"/><circle cx="760" cy="298" r="6" fill="none" stroke="#777" stroke-width="1" stroke-dasharray="2,2" opacity="0.6"/><ellipse cx="780" cy="299" rx="53" ry="52" fill="none" stroke="#0e0e10" stroke-width="4" stroke-dasharray="3,3.5" opacity="0.6"/>
</g>
<g clip-path="url(#cLE)">
<use href="#shade"/>

<path d="M619.9,298.0 L619.9,298.6 L619.9,299.3 L619.8,299.9 L619.7,300.5 L619.5,301.1 L619.4,301.7 L619.2,302.2 L618.9,302.8 L618.7,303.3 L618.4,303.8 L618.1,304.3 L617.8,304.7 L617.4,305.1 L617.1,305.5 L616.7,305.8 L616.3,306.1 L615.9,306.3 L615.4,306.6 L615.0,306.7 L614.6,306.9 L614.1,307.0 L613.7,307.0 L613.2,307.0 L612.8,307.0 L612.3,306.9 L611.9,306.7 L611.4,306.6 L611.0,306.3 L610.6,306.1 L610.2,305.8 L609.8,305.5 L609.5,305.1 L609.1,304.7 L608.8,304.3 L608.5,303.8 L608.2,303.3 L607.9,302.8 L607.7,302.2 L607.5,301.7 L607.4,301.1 L607.2,300.5 L607.1,299.9 L607.0,299.3 L607.0,298.6 L607.0,298.0 L607.0,297.4 L607.0,296.7 L607.1,296.1 L607.2,295.5 L607.4,294.9 L607.5,294.3 L607.7,293.8 L607.9,293.2 L608.2,292.7 L608.5,292.2 L608.8,291.7 L609.1,291.3 L609.5,290.9 L609.8,290.5 L610.2,290.2 L610.6,289.9 L611.0,289.7 L611.4,289.4 L611.9,289.3 L612.3,289.1 L612.8,289.0 L613.2,289.0 L613.7,289.0 L614.1,289.0 L614.6,289.1 L615.0,289.3 L615.4,289.4 L615.9,289.7 L616.3,289.9 L616.7,290.2 L617.1,290.5 L617.4,290.9 L617.8,291.3 L618.1,291.7 L618.4,292.2 L618.7,292.7 L618.9,293.2 L619.2,293.8 L619.4,294.3 L619.5,294.9 L619.7,295.5 L619.8,296.1 L619.9,296.7 L619.9,297.4 L619.9,298.0M625.2,298.0 L625.2,299.0 L625.1,300.1 L625.0,301.1 L624.8,302.1 L624.5,303.1 L624.3,304.1 L623.9,305.0 L623.6,305.9 L623.1,306.8 L622.7,307.6 L622.2,308.4 L621.6,309.1 L621.0,309.8 L620.4,310.4 L619.8,311.0 L619.1,311.5 L618.4,311.9 L617.7,312.3 L617.0,312.6 L616.3,312.8 L615.5,312.9 L614.8,313.0 L614.0,313.0 L613.3,312.9 L612.5,312.8 L611.8,312.6 L611.1,312.3 L610.4,311.9 L609.7,311.5 L609.0,311.0 L608.4,310.4 L607.8,309.8 L607.2,309.1 L606.6,308.4 L606.1,307.6 L605.7,306.8 L605.2,305.9 L604.9,305.0 L604.5,304.1 L604.3,303.1 L604.0,302.1 L603.8,301.1 L603.7,300.1 L603.6,299.0 L603.6,298.0 L603.6,297.0 L603.7,295.9 L603.8,294.9 L604.0,293.9 L604.3,292.9 L604.5,291.9 L604.9,291.0 L605.2,290.1 L605.7,289.2 L606.1,288.4 L606.6,287.6 L607.2,286.9 L607.8,286.2 L608.4,285.6 L609.0,285.0 L609.7,284.5 L610.4,284.1 L611.1,283.7 L611.8,283.4 L612.5,283.2 L613.3,283.1 L614.0,283.0 L614.8,283.0 L615.5,283.1 L616.3,283.2 L617.0,283.4 L617.7,283.7 L618.4,284.1 L619.1,284.5 L619.8,285.0 L620.4,285.6 L621.0,286.2 L621.6,286.9 L622.2,287.6 L622.7,288.4 L623.1,289.2 L623.6,290.1 L623.9,291.0 L624.3,291.9 L624.5,292.9 L624.8,293.9 L625.0,294.9 L625.1,295.9 L625.2,297.0 L625.2,298.0M632.2,298.0 L632.2,299.6 L632.1,301.2 L631.9,302.8 L631.6,304.3 L631.2,305.9 L630.8,307.4 L630.3,308.8 L629.7,310.2 L629.1,311.5 L628.4,312.8 L627.6,314.0 L626.8,315.1 L625.9,316.1 L624.9,317.1 L624.0,317.9 L622.9,318.7 L621.9,319.3 L620.8,319.9 L619.7,320.3 L618.6,320.7 L617.4,320.9 L616.3,321.0 L615.1,321.0 L613.9,320.9 L612.8,320.7 L611.7,320.3 L610.6,319.9 L609.5,319.3 L608.4,318.7 L607.4,317.9 L606.4,317.1 L605.5,316.1 L604.6,315.1 L603.8,314.0 L603.0,312.8 L602.3,311.5 L601.6,310.2 L601.1,308.8 L600.6,307.4 L600.1,305.9 L599.8,304.3 L599.5,302.8 L599.3,301.2 L599.2,299.6 L599.1,298.0 L599.2,296.4 L599.3,294.8 L599.5,293.2 L599.8,291.7 L600.1,290.1 L600.6,288.6 L601.1,287.2 L601.6,285.8 L602.3,284.5 L603.0,283.2 L603.8,282.0 L604.6,280.9 L605.5,279.9 L606.4,278.9 L607.4,278.1 L608.4,277.3 L609.5,276.7 L610.6,276.1 L611.7,275.7 L612.8,275.3 L613.9,275.1 L615.1,275.0 L616.3,275.0 L617.4,275.1 L618.6,275.3 L619.7,275.7 L620.8,276.1 L621.9,276.7 L622.9,277.3 L624.0,278.1 L624.9,278.9 L625.9,279.9 L626.8,280.9 L627.6,282.0 L628.4,283.2 L629.1,284.5 L629.7,285.8 L630.3,287.2 L630.8,288.6 L631.2,290.1 L631.6,291.7 L631.9,293.2 L632.1,294.8 L632.2,296.4 L632.2,298.0M639.3,298.0 L639.2,300.2 L639.1,302.3 L638.8,304.4 L638.4,306.5 L637.9,308.6 L637.4,310.6 L636.7,312.6 L635.9,314.4 L635.0,316.2 L634.1,317.9 L633.0,319.5 L631.9,321.0 L630.7,322.4 L629.4,323.7 L628.1,324.8 L626.7,325.9 L625.3,326.7 L623.9,327.5 L622.4,328.1 L620.8,328.5 L619.3,328.8 L617.7,329.0 L616.2,329.0 L614.6,328.8 L613.1,328.5 L611.6,328.1 L610.1,327.5 L608.6,326.7 L607.2,325.9 L605.8,324.8 L604.5,323.7 L603.2,322.4 L602.0,321.0 L600.9,319.5 L599.9,317.9 L598.9,316.2 L598.0,314.4 L597.3,312.6 L596.6,310.6 L596.0,308.6 L595.5,306.5 L595.1,304.4 L594.9,302.3 L594.7,300.2 L594.6,298.0 L594.7,295.8 L594.9,293.7 L595.1,291.6 L595.5,289.5 L596.0,287.4 L596.6,285.4 L597.3,283.4 L598.0,281.6 L598.9,279.8 L599.9,278.1 L600.9,276.5 L602.0,275.0 L603.2,273.6 L604.5,272.3 L605.8,271.2 L607.2,270.1 L608.6,269.3 L610.1,268.5 L611.6,267.9 L613.1,267.5 L614.6,267.2 L616.2,267.0 L617.7,267.0 L619.3,267.2 L620.8,267.5 L622.4,267.9 L623.9,268.5 L625.3,269.3 L626.7,270.1 L628.1,271.2 L629.4,272.3 L630.7,273.6 L631.9,275.0 L633.0,276.5 L634.1,278.1 L635.0,279.8 L635.9,281.6 L636.7,283.4 L637.4,285.4 L637.9,287.4 L638.4,289.5 L638.8,291.6 L639.1,293.7 L639.2,295.8 L639.3,298.0M647.2,298.0 L647.1,300.8 L646.9,303.6 L646.6,306.3 L646.1,309.0 L645.5,311.7 L644.7,314.3 L643.8,316.8 L642.8,319.2 L641.7,321.5 L640.5,323.7 L639.1,325.8 L637.7,327.7 L636.1,329.5 L634.5,331.2 L632.8,332.6 L631.0,334.0 L629.2,335.1 L627.3,336.0 L625.4,336.8 L623.4,337.4 L621.4,337.8 L619.4,338.0 L617.4,338.0 L615.4,337.8 L613.4,337.4 L611.4,336.8 L609.5,336.0 L607.6,335.1 L605.8,334.0 L604.0,332.6 L602.3,331.2 L600.7,329.5 L599.1,327.7 L597.7,325.8 L596.3,323.7 L595.1,321.5 L594.0,319.2 L593.0,316.8 L592.1,314.3 L591.3,311.7 L590.7,309.0 L590.2,306.3 L589.9,303.6 L589.7,300.8 L589.6,298.0 L589.7,295.2 L589.9,292.4 L590.2,289.7 L590.7,287.0 L591.3,284.3 L592.1,281.7 L593.0,279.2 L594.0,276.8 L595.1,274.5 L596.3,272.3 L597.7,270.2 L599.1,268.3 L600.7,266.5 L602.3,264.8 L604.0,263.4 L605.8,262.0 L607.6,260.9 L609.5,260.0 L611.4,259.2 L613.4,258.6 L615.4,258.2 L617.4,258.0 L619.4,258.0 L621.4,258.2 L623.4,258.6 L625.4,259.2 L627.3,260.0 L629.2,260.9 L631.0,262.0 L632.8,263.4 L634.5,264.8 L636.1,266.5 L637.7,268.3 L639.1,270.2 L640.5,272.3 L641.7,274.5 L642.8,276.8 L643.8,279.2 L644.7,281.7 L645.5,284.3 L646.1,287.0 L646.6,289.7 L646.9,292.4 L647.1,295.2 L647.2,298.0M654.2,298.0 L654.2,301.3 L653.9,304.7 L653.5,308.0 L652.9,311.2 L652.2,314.4 L651.3,317.5 L650.2,320.5 L649.0,323.4 L647.6,326.2 L646.2,328.9 L644.5,331.3 L642.8,333.7 L641.0,335.8 L639.0,337.8 L637.0,339.6 L634.8,341.1 L632.6,342.5 L630.4,343.7 L628.0,344.6 L625.7,345.3 L623.3,345.7 L620.9,346.0 L618.5,346.0 L616.1,345.7 L613.7,345.3 L611.3,344.6 L609.0,343.7 L606.7,342.5 L604.5,341.1 L602.4,339.6 L600.4,337.8 L598.4,335.8 L596.6,333.7 L594.8,331.3 L593.2,328.9 L591.7,326.2 L590.4,323.4 L589.2,320.5 L588.1,317.5 L587.2,314.4 L586.5,311.2 L585.9,308.0 L585.5,304.7 L585.2,301.3 L585.1,298.0 L585.2,294.7 L585.5,291.3 L585.9,288.0 L586.5,284.8 L587.2,281.6 L588.1,278.5 L589.2,275.5 L590.4,272.6 L591.7,269.8 L593.2,267.1 L594.8,264.7 L596.6,262.3 L598.4,260.2 L600.4,258.2 L602.4,256.4 L604.5,254.9 L606.7,253.5 L609.0,252.3 L611.3,251.4 L613.7,250.7 L616.1,250.3 L618.5,250.0 L620.9,250.0 L623.3,250.3 L625.7,250.7 L628.0,251.4 L630.4,252.3 L632.6,253.5 L634.8,254.9 L637.0,256.4 L639.0,258.2 L641.0,260.2 L642.8,262.3 L644.5,264.7 L646.2,267.1 L647.6,269.8 L649.0,272.6 L650.2,275.5 L651.3,278.5 L652.2,281.6 L652.9,284.8 L653.5,288.0 L653.9,291.3 L654.2,294.7 L654.2,298.0M661.3,298.0 L661.2,301.9 L660.9,305.8 L660.4,309.6 L659.7,313.4 L658.8,317.2 L657.8,320.8 L656.6,324.3 L655.2,327.7 L653.6,330.9 L651.8,334.0 L650.0,336.9 L647.9,339.6 L645.8,342.1 L643.5,344.4 L641.1,346.5 L638.6,348.3 L636.1,349.9 L633.4,351.3 L630.7,352.3 L628.0,353.1 L625.2,353.7 L622.4,354.0 L619.6,354.0 L616.7,353.7 L614.0,353.1 L611.2,352.3 L608.5,351.3 L605.9,349.9 L603.3,348.3 L600.8,346.5 L598.4,344.4 L596.1,342.1 L594.0,339.6 L592.0,336.9 L590.1,334.0 L588.3,330.9 L586.8,327.7 L585.4,324.3 L584.1,320.8 L583.1,317.2 L582.2,313.4 L581.5,309.6 L581.0,305.8 L580.7,301.9 L580.6,298.0 L580.7,294.1 L581.0,290.2 L581.5,286.4 L582.2,282.6 L583.1,278.8 L584.1,275.2 L585.4,271.7 L586.8,268.3 L588.3,265.1 L590.1,262.0 L592.0,259.1 L594.0,256.4 L596.1,253.9 L598.4,251.6 L600.8,249.5 L603.3,247.7 L605.9,246.1 L608.5,244.7 L611.2,243.7 L614.0,242.9 L616.7,242.3 L619.6,242.0 L622.4,242.0 L625.2,242.3 L628.0,242.9 L630.7,243.7 L633.4,244.7 L636.1,246.1 L638.6,247.7 L641.1,249.5 L643.5,251.6 L645.8,253.9 L647.9,256.4 L650.0,259.1 L651.8,262.0 L653.6,265.1 L655.2,268.3 L656.6,271.7 L657.8,275.2 L658.8,278.8 L659.7,282.6 L660.4,286.4 L660.9,290.2 L661.2,294.1 L661.3,298.0M671.8,298.0 L671.7,302.7 L671.4,307.5 L670.8,312.1 L669.9,316.7 L668.9,321.3 L667.6,325.7 L666.1,329.9 L664.4,334.0 L662.5,338.0 L660.4,341.7 L658.1,345.2 L655.6,348.5 L653.0,351.6 L650.3,354.4 L647.4,356.9 L644.3,359.1 L641.2,361.0 L638.0,362.7 L634.7,364.0 L631.4,365.0 L628.0,365.6 L624.6,366.0 L621.2,366.0 L617.8,365.6 L614.4,365.0 L611.0,364.0 L607.8,362.7 L604.5,361.0 L601.4,359.1 L598.4,356.9 L595.5,354.4 L592.7,351.6 L590.1,348.5 L587.7,345.2 L585.4,341.7 L583.3,338.0 L581.4,334.0 L579.7,329.9 L578.2,325.7 L576.9,321.3 L575.8,316.7 L575.0,312.1 L574.4,307.5 L574.0,302.7 L573.9,298.0 L574.0,293.3 L574.4,288.5 L575.0,283.9 L575.8,279.3 L576.9,274.7 L578.2,270.3 L579.7,266.1 L581.4,262.0 L583.3,258.0 L585.4,254.3 L587.7,250.8 L590.1,247.5 L592.7,244.4 L595.5,241.6 L598.4,239.1 L601.4,236.9 L604.5,235.0 L607.8,233.3 L611.0,232.0 L614.4,231.0 L617.8,230.4 L621.2,230.0 L624.6,230.0 L628.0,230.4 L631.4,231.0 L634.7,232.0 L638.0,233.3 L641.2,235.0 L644.3,236.9 L647.4,239.1 L650.3,241.6 L653.0,244.4 L655.6,247.5 L658.1,250.8 L660.4,254.3 L662.5,258.0 L664.4,262.0 L666.1,266.1 L667.6,270.3 L668.9,274.7 L669.9,279.3 L670.8,283.9 L671.4,288.5 L671.7,293.3 L671.8,298.0M682.4,298.0 L682.3,303.6 L681.8,309.1 L681.1,314.6 L680.2,320.1 L678.9,325.4 L677.4,330.5 L675.7,335.6 L673.6,340.4 L671.4,345.0 L668.9,349.4 L666.2,353.6 L663.3,357.5 L660.3,361.0 L657.0,364.3 L653.6,367.3 L650.1,369.9 L646.4,372.2 L642.6,374.1 L638.7,375.6 L634.8,376.8 L630.8,377.6 L626.8,378.0 L622.8,378.0 L618.8,377.6 L614.8,376.8 L610.9,375.6 L607.0,374.1 L603.2,372.2 L599.5,369.9 L596.0,367.3 L592.6,364.3 L589.3,361.0 L586.3,357.5 L583.4,353.6 L580.7,349.4 L578.2,345.0 L576.0,340.4 L573.9,335.6 L572.2,330.5 L570.7,325.4 L569.4,320.1 L568.5,314.6 L567.8,309.1 L567.3,303.6 L567.2,298.0 L567.3,292.4 L567.8,286.9 L568.5,281.4 L569.4,275.9 L570.7,270.6 L572.2,265.5 L573.9,260.4 L576.0,255.6 L578.2,251.0 L580.7,246.6 L583.4,242.4 L586.3,238.5 L589.3,235.0 L592.6,231.7 L596.0,228.7 L599.5,226.1 L603.2,223.8 L607.0,221.9 L610.9,220.4 L614.8,219.2 L618.8,218.4 L622.8,218.0 L626.8,218.0 L630.8,218.4 L634.8,219.2 L638.7,220.4 L642.6,221.9 L646.4,223.8 L650.1,226.1 L653.6,228.7 L657.0,231.7 L660.3,235.0 L663.3,238.5 L666.2,242.4 L668.9,246.6 L671.4,251.0 L673.6,255.6 L675.7,260.4 L677.4,265.5 L678.9,270.6 L680.2,275.9 L681.1,281.4 L681.8,286.9 L682.3,292.4 L682.4,298.0M693.8,298.0 L693.7,304.5 L693.2,310.9 L692.4,317.3 L691.2,323.6 L689.8,329.8 L688.1,335.8 L686.0,341.7 L683.7,347.3 L681.1,352.7 L678.2,357.8 L675.0,362.6 L671.7,367.1 L668.1,371.3 L664.3,375.1 L660.4,378.5 L656.2,381.6 L652.0,384.2 L647.6,386.4 L643.1,388.2 L638.5,389.6 L633.9,390.5 L629.2,390.9 L624.5,390.9 L619.9,390.5 L615.3,389.6 L610.7,388.2 L606.2,386.4 L601.8,384.2 L597.5,381.6 L593.4,378.5 L589.4,375.1 L585.7,371.3 L582.1,367.1 L578.7,362.6 L575.6,357.8 L572.7,352.7 L570.1,347.3 L567.8,341.7 L565.7,335.8 L564.0,329.8 L562.5,323.6 L561.4,317.3 L560.6,310.9 L560.1,304.5 L559.9,298.0 L560.1,291.5 L560.6,285.1 L561.4,278.7 L562.5,272.4 L564.0,266.2 L565.7,260.2 L567.8,254.3 L570.1,248.7 L572.7,243.3 L575.6,238.2 L578.7,233.4 L582.1,228.9 L585.7,224.7 L589.4,220.9 L593.4,217.5 L597.5,214.4 L601.8,211.8 L606.2,209.6 L610.7,207.8 L615.3,206.4 L619.9,205.5 L624.5,205.1 L629.2,205.1 L633.9,205.5 L638.5,206.4 L643.1,207.8 L647.6,209.6 L652.0,211.8 L656.2,214.4 L660.4,217.5 L664.3,220.9 L668.1,224.7 L671.7,228.9 L675.0,233.4 L678.2,238.2 L681.1,243.3 L683.7,248.7 L686.0,254.3 L688.1,260.2 L689.8,266.2 L691.2,272.4 L692.4,278.7 L693.2,285.1 L693.7,291.5 L693.8,298.0M706.2,298.0 L706.0,305.5 L705.4,312.9 L704.5,320.2 L703.2,327.5 L701.5,334.6 L699.5,341.5 L697.1,348.2 L694.5,354.7 L691.4,360.9 L688.1,366.8 L684.5,372.3 L680.7,377.5 L676.6,382.3 L672.2,386.7 L667.6,390.7 L662.9,394.2 L658.0,397.2 L652.9,399.8 L647.8,401.8 L642.5,403.4 L637.2,404.4 L631.8,404.9 L626.4,404.9 L621.1,404.4 L615.7,403.4 L610.5,401.8 L605.3,399.8 L600.3,397.2 L595.3,394.2 L590.6,390.7 L586.0,386.7 L581.7,382.3 L577.6,377.5 L573.7,372.3 L570.1,366.8 L566.8,360.9 L563.8,354.7 L561.1,348.2 L558.7,341.5 L556.7,334.6 L555.1,327.5 L553.8,320.2 L552.8,312.9 L552.3,305.5 L552.1,298.0 L552.3,290.5 L552.8,283.1 L553.8,275.8 L555.1,268.5 L556.7,261.4 L558.7,254.5 L561.1,247.8 L563.8,241.3 L566.8,235.1 L570.1,229.2 L573.7,223.7 L577.6,218.5 L581.7,213.7 L586.0,209.3 L590.6,205.3 L595.3,201.8 L600.3,198.8 L605.3,196.2 L610.5,194.2 L615.7,192.6 L621.1,191.6 L626.4,191.1 L631.8,191.1 L637.2,191.6 L642.5,192.6 L647.8,194.2 L652.9,196.2 L658.0,198.8 L662.9,201.8 L667.6,205.3 L672.2,209.3 L676.6,213.7 L680.7,218.5 L684.5,223.7 L688.1,229.2 L691.4,235.1 L694.5,241.3 L697.1,247.8 L699.5,254.5 L701.5,261.4 L703.2,268.5 L704.5,275.8 L705.4,283.1 L706.0,290.5 L706.2,298.0M719.4,298.0 L719.1,306.5 L718.5,315.0 L717.4,323.4 L716.0,331.6 L714.1,339.7 L711.8,347.6 L709.1,355.3 L706.0,362.7 L702.6,369.7 L698.8,376.4 L694.7,382.7 L690.3,388.7 L685.6,394.1 L680.6,399.1 L675.4,403.7 L670.0,407.7 L664.4,411.1 L658.7,414.0 L652.8,416.4 L646.8,418.1 L640.7,419.3 L634.6,419.9 L628.5,419.9 L622.3,419.3 L616.3,418.1 L610.3,416.4 L604.4,414.0 L598.6,411.1 L593.0,407.7 L587.6,403.7 L582.4,399.1 L577.4,394.1 L572.7,388.7 L568.3,382.7 L564.2,376.4 L560.5,369.7 L557.0,362.7 L554.0,355.3 L551.3,347.6 L549.0,339.7 L547.1,331.6 L545.6,323.4 L544.5,315.0 L543.9,306.5 L543.7,298.0 L543.9,289.5 L544.5,281.0 L545.6,272.6 L547.1,264.4 L549.0,256.3 L551.3,248.4 L554.0,240.7 L557.0,233.3 L560.5,226.3 L564.2,219.6 L568.3,213.3 L572.7,207.3 L577.4,201.9 L582.4,196.9 L587.6,192.3 L593.0,188.3 L598.6,184.9 L604.4,182.0 L610.3,179.6 L616.3,177.9 L622.3,176.7 L628.5,176.1 L634.6,176.1 L640.7,176.7 L646.8,177.9 L652.8,179.6 L658.7,182.0 L664.4,184.9 L670.0,188.3 L675.4,192.3 L680.6,196.9 L685.6,201.9 L690.3,207.3 L694.7,213.3 L698.8,219.6 L702.6,226.3 L706.0,233.3 L709.1,240.7 L711.8,248.4 L714.1,256.3 L716.0,264.4 L717.4,272.6 L718.5,281.0 L719.1,289.5 L719.4,298.0M733.4,298.0 L733.2,307.6 L732.5,317.2 L731.3,326.7 L729.6,336.0 L727.4,345.2 L724.8,354.1 L721.8,362.8 L718.3,371.1 L714.5,379.1 L710.2,386.7 L705.6,393.9 L700.6,400.6 L695.3,406.7 L689.6,412.4 L683.8,417.5 L677.6,422.0 L671.3,426.0 L664.8,429.2 L658.1,431.9 L651.3,433.9 L644.5,435.2 L637.5,435.9 L630.6,435.9 L623.7,435.2 L616.8,433.9 L610.0,431.9 L603.4,429.2 L596.9,426.0 L590.5,422.0 L584.4,417.5 L578.5,412.4 L572.9,406.7 L567.6,400.6 L562.6,393.9 L558.0,386.7 L553.7,379.1 L549.8,371.1 L546.4,362.8 L543.3,354.1 L540.7,345.2 L538.6,336.0 L536.9,326.7 L535.7,317.2 L535.0,307.6 L534.7,298.0 L535.0,288.4 L535.7,278.8 L536.9,269.3 L538.6,260.0 L540.7,250.8 L543.3,241.9 L546.4,233.2 L549.8,224.9 L553.7,216.9 L558.0,209.3 L562.6,202.1 L567.6,195.4 L572.9,189.3 L578.5,183.6 L584.4,178.5 L590.5,174.0 L596.9,170.0 L603.4,166.8 L610.0,164.1 L616.8,162.1 L623.7,160.8 L630.6,160.1 L637.5,160.1 L644.5,160.8 L651.3,162.1 L658.1,164.1 L664.8,166.8 L671.3,170.0 L677.6,174.0 L683.8,178.5 L689.6,183.6 L695.3,189.3 L700.6,195.4 L705.6,202.1 L710.2,209.3 L714.5,216.9 L718.3,224.9 L721.8,233.2 L724.8,241.9 L727.4,250.8 L729.6,260.0 L731.3,269.3 L732.5,278.8 L733.2,288.4 L733.4,298.0M748.4,298.0 L748.1,308.8 L747.3,319.6 L746.0,330.2 L744.1,340.7 L741.7,351.0 L738.8,361.0 L735.3,370.8 L731.4,380.1 L727.1,389.1 L722.3,397.6 L717.1,405.7 L711.5,413.2 L705.5,420.1 L699.2,426.5 L692.6,432.2 L685.7,437.3 L678.6,441.7 L671.3,445.4 L663.8,448.4 L656.2,450.6 L648.5,452.2 L640.7,452.9 L632.9,452.9 L625.1,452.2 L617.4,450.6 L609.8,448.4 L602.3,445.4 L595.0,441.7 L587.9,437.3 L581.0,432.2 L574.4,426.5 L568.1,420.1 L562.1,413.2 L556.5,405.7 L551.3,397.6 L546.5,389.1 L542.2,380.1 L538.3,370.8 L534.8,361.0 L531.9,351.0 L529.5,340.7 L527.6,330.2 L526.3,319.6 L525.5,308.8 L525.2,298.0 L525.5,287.2 L526.3,276.4 L527.6,265.8 L529.5,255.3 L531.9,245.0 L534.8,235.0 L538.3,225.2 L542.2,215.9 L546.5,206.9 L551.3,198.4 L556.5,190.3 L562.1,182.8 L568.1,175.9 L574.4,169.5 L581.0,163.8 L587.9,158.7 L595.0,154.3 L602.3,150.6 L609.8,147.6 L617.4,145.4 L625.1,143.8 L632.9,143.1 L640.7,143.1 L648.5,143.8 L656.2,145.4 L663.8,147.6 L671.3,150.6 L678.6,154.3 L685.7,158.7 L692.6,163.8 L699.2,169.5 L705.5,175.9 L711.5,182.8 L717.1,190.3 L722.3,198.4 L727.1,206.9 L731.4,215.9 L735.3,225.2 L738.8,235.0 L741.7,245.0 L744.1,255.3 L746.0,265.8 L747.3,276.4 L748.1,287.2 L748.4,298.0M625.2,298.0 L628.3,298.0 L631.4,298.0 L634.4,298.0 L637.5,298.0 L640.6,298.0 L643.7,298.0 L646.8,298.0 L649.8,298.0 L652.9,298.0 L656.0,298.0 L659.1,298.0 L662.2,298.0 L665.2,298.0 L668.3,298.0 L671.4,298.0 L674.5,298.0 L677.6,298.0 L680.6,298.0 L683.7,298.0 L686.8,298.0 L689.9,298.0 L693.0,298.0 L696.0,298.0 L699.1,298.0 L702.2,298.0 L705.3,298.0 L708.4,298.0 L711.4,298.0 L714.5,298.0 L717.6,298.0 L720.7,298.0 L723.8,298.0 L726.8,298.0 L729.9,298.0 L733.0,298.0 L736.1,298.0 L739.2,298.0 L742.2,298.0 L745.3,298.0 L748.4,298.0M625.0,300.6 L628.1,301.2 L631.1,301.8 L634.2,302.4 L637.2,303.0 L640.2,303.6 L643.3,304.3 L646.3,304.9 L649.4,305.5 L652.4,306.1 L655.5,306.7 L658.5,307.3 L661.5,307.9 L664.6,308.5 L667.6,309.1 L670.7,309.7 L673.7,310.3 L676.7,310.9 L679.8,311.5 L682.8,312.2 L685.9,312.8 L688.9,313.4 L692.0,314.0 L695.0,314.6 L698.0,315.2 L701.1,315.8 L704.1,316.4 L707.2,317.0 L710.2,317.6 L713.2,318.2 L716.3,318.8 L719.3,319.4 L722.4,320.1 L725.4,320.7 L728.5,321.3 L731.5,321.9 L734.5,322.5 L737.6,323.1 L740.6,323.7 L743.7,324.3 L746.7,324.9M624.5,303.1 L627.5,304.3 L630.4,305.5 L633.3,306.7 L636.3,307.9 L639.2,309.1 L642.1,310.3 L645.0,311.5 L648.0,312.7 L650.9,313.9 L653.8,315.1 L656.8,316.3 L659.7,317.5 L662.6,318.7 L665.5,319.9 L668.5,321.1 L671.4,322.3 L674.3,323.5 L677.3,324.7 L680.2,325.9 L683.1,327.1 L686.0,328.3 L689.0,329.5 L691.9,330.7 L694.8,331.9 L697.7,333.1 L700.7,334.3 L703.6,335.5 L706.5,336.6 L709.5,337.8 L712.4,339.0 L715.3,340.2 L718.2,341.4 L721.2,342.6 L724.1,343.8 L727.0,345.0 L730.0,346.2 L732.9,347.4 L735.8,348.6 L738.7,349.8 L741.7,351.0M623.8,305.5 L626.5,307.2 L629.2,309.0 L632.0,310.8 L634.7,312.5 L637.5,314.2 L640.2,316.0 L642.9,317.8 L645.7,319.5 L648.4,321.2 L651.2,323.0 L653.9,324.8 L656.7,326.5 L659.4,328.2 L662.1,330.0 L664.9,331.8 L667.6,333.5 L670.4,335.2 L673.1,337.0 L675.9,338.8 L678.6,340.5 L681.3,342.2 L684.1,344.0 L686.8,345.8 L689.6,347.5 L692.3,349.2 L695.1,351.0 L697.8,352.8 L700.5,354.5 L703.3,356.2 L706.0,358.0 L708.8,359.8 L711.5,361.5 L714.3,363.2 L717.0,365.0 L719.7,366.8 L722.5,368.5 L725.2,370.2 L728.0,372.0 L730.7,373.8 L733.4,375.5M622.7,307.6 L625.2,309.9 L627.7,312.1 L630.1,314.4 L632.6,316.6 L635.1,318.9 L637.6,321.1 L640.1,323.4 L642.6,325.6 L645.1,327.9 L647.6,330.1 L650.1,332.4 L652.6,334.6 L655.0,336.9 L657.5,339.1 L660.0,341.4 L662.5,343.6 L665.0,345.9 L667.5,348.1 L670.0,350.4 L672.5,352.6 L675.0,354.9 L677.5,357.1 L680.0,359.4 L682.4,361.6 L684.9,363.9 L687.4,366.1 L689.9,368.4 L692.4,370.6 L694.9,372.9 L697.4,375.1 L699.9,377.4 L702.4,379.6 L704.9,381.9 L707.3,384.1 L709.8,386.4 L712.3,388.6 L714.8,390.9 L717.3,393.1 L719.8,395.4 L722.3,397.6M621.3,309.5 L623.5,312.2 L625.7,314.9 L627.9,317.5 L630.1,320.2 L632.2,322.9 L634.4,325.6 L636.6,328.3 L638.8,330.9 L641.0,333.6 L643.1,336.3 L645.3,339.0 L647.5,341.7 L649.7,344.3 L651.9,347.0 L654.0,349.7 L656.2,352.4 L658.4,355.1 L660.6,357.8 L662.8,360.4 L664.9,363.1 L667.1,365.8 L669.3,368.5 L671.5,371.2 L673.7,373.8 L675.8,376.5 L678.0,379.2 L680.2,381.9 L682.4,384.6 L684.6,387.2 L686.7,389.9 L688.9,392.6 L691.1,395.3 L693.3,398.0 L695.5,400.6 L697.6,403.3 L699.8,406.0 L702.0,408.7 L704.2,411.4 L706.4,414.1 L708.5,416.7M619.8,311.0 L621.6,314.0 L623.4,317.1 L625.3,320.1 L627.1,323.1 L628.9,326.1 L630.7,329.2 L632.5,332.2 L634.4,335.2 L636.2,338.3 L638.0,341.3 L639.8,344.3 L641.6,347.4 L643.5,350.4 L645.3,353.4 L647.1,356.5 L648.9,359.5 L650.7,362.5 L652.6,365.5 L654.4,368.6 L656.2,371.6 L658.0,374.6 L659.8,377.7 L661.7,380.7 L663.5,383.7 L665.3,386.8 L667.1,389.8 L668.9,392.8 L670.8,395.9 L672.6,398.9 L674.4,401.9 L676.2,405.0 L678.0,408.0 L679.9,411.0 L681.7,414.0 L683.5,417.1 L685.3,420.1 L687.1,423.1 L689.0,426.2 L690.8,429.2 L692.6,432.2M618.1,312.1 L619.5,315.4 L620.9,318.7 L622.4,322.0 L623.8,325.3 L625.2,328.5 L626.6,331.8 L628.0,335.1 L629.5,338.4 L630.9,341.7 L632.3,345.0 L633.7,348.3 L635.2,351.6 L636.6,354.9 L638.0,358.1 L639.4,361.4 L640.8,364.7 L642.3,368.0 L643.7,371.3 L645.1,374.6 L646.5,377.9 L648.0,381.2 L649.4,384.5 L650.8,387.7 L652.2,391.0 L653.6,394.3 L655.1,397.6 L656.5,400.9 L657.9,404.2 L659.3,407.5 L660.8,410.8 L662.2,414.1 L663.6,417.3 L665.0,420.6 L666.4,423.9 L667.9,427.2 L669.3,430.5 L670.7,433.8 L672.1,437.1 L673.5,440.4 L675.0,443.7M616.3,312.8 L617.3,316.2 L618.3,319.7 L619.3,323.1 L620.3,326.6 L621.3,330.0 L622.3,333.5 L623.3,336.9 L624.3,340.3 L625.3,343.8 L626.3,347.2 L627.2,350.7 L628.2,354.1 L629.2,357.6 L630.2,361.0 L631.2,364.5 L632.2,367.9 L633.2,371.4 L634.2,374.8 L635.2,378.3 L636.2,381.7 L637.2,385.2 L638.2,388.6 L639.2,392.0 L640.2,395.5 L641.2,398.9 L642.2,402.4 L643.2,405.8 L644.2,409.3 L645.2,412.7 L646.2,416.2 L647.2,419.6 L648.2,423.1 L649.2,426.5 L650.2,430.0 L651.2,433.4 L652.2,436.9 L653.2,440.3 L654.2,443.8 L655.2,447.2 L656.2,450.6M614.4,313.0 L615.0,316.5 L615.5,320.0 L616.1,323.5 L616.6,327.0 L617.2,330.5 L617.8,334.0 L618.3,337.5 L618.9,341.0 L619.4,344.5 L620.0,348.0 L620.6,351.5 L621.1,355.0 L621.7,358.5 L622.2,362.0 L622.8,365.5 L623.4,369.0 L623.9,372.5 L624.5,376.0 L625.0,379.5 L625.6,383.0 L626.2,386.5 L626.7,390.0 L627.3,393.5 L627.8,397.0 L628.4,400.5 L629.0,404.0 L629.5,407.5 L630.1,411.0 L630.6,414.5 L631.2,418.0 L631.8,421.5 L632.3,425.0 L632.9,428.5 L633.4,432.0 L634.0,435.5 L634.6,439.0 L635.1,442.5 L635.7,446.0 L636.2,449.5 L636.8,453.0M612.5,312.8 L612.6,316.2 L612.8,319.7 L612.9,323.1 L613.0,326.6 L613.1,330.0 L613.3,333.5 L613.4,336.9 L613.5,340.3 L613.6,343.8 L613.7,347.2 L613.9,350.7 L614.0,354.1 L614.1,357.6 L614.2,361.0 L614.4,364.5 L614.5,367.9 L614.6,371.4 L614.7,374.8 L614.9,378.3 L615.0,381.7 L615.1,385.2 L615.2,388.6 L615.3,392.0 L615.5,395.5 L615.6,398.9 L615.7,402.4 L615.8,405.8 L616.0,409.3 L616.1,412.7 L616.2,416.2 L616.3,419.6 L616.4,423.1 L616.6,426.5 L616.7,430.0 L616.8,433.4 L616.9,436.9 L617.1,440.3 L617.2,443.8 L617.3,447.2 L617.4,450.6M610.7,312.1 L610.4,315.4 L610.1,318.7 L609.8,322.0 L609.5,325.3 L609.2,328.5 L608.9,331.8 L608.6,335.1 L608.3,338.4 L608.0,341.7 L607.7,345.0 L607.4,348.3 L607.1,351.6 L606.8,354.9 L606.5,358.1 L606.2,361.4 L605.9,364.7 L605.6,368.0 L605.3,371.3 L605.0,374.6 L604.7,377.9 L604.4,381.2 L604.1,384.5 L603.8,387.7 L603.5,391.0 L603.2,394.3 L602.9,397.6 L602.6,400.9 L602.3,404.2 L602.0,407.5 L601.6,410.8 L601.3,414.1 L601.0,417.3 L600.7,420.6 L600.4,423.9 L600.1,427.2 L599.8,430.5 L599.5,433.8 L599.2,437.1 L598.9,440.4 L598.6,443.7M609.0,311.0 L608.3,314.0 L607.6,317.1 L606.9,320.1 L606.2,323.1 L605.5,326.1 L604.8,329.2 L604.1,332.2 L603.4,335.2 L602.7,338.3 L602.0,341.3 L601.3,344.3 L600.6,347.4 L599.9,350.4 L599.2,353.4 L598.5,356.5 L597.8,359.5 L597.1,362.5 L596.4,365.5 L595.7,368.6 L595.0,371.6 L594.3,374.6 L593.6,377.7 L592.9,380.7 L592.2,383.7 L591.5,386.8 L590.8,389.8 L590.1,392.8 L589.4,395.9 L588.7,398.9 L588.0,401.9 L587.3,405.0 L586.6,408.0 L585.9,411.0 L585.2,414.0 L584.5,417.1 L583.8,420.1 L583.1,423.1 L582.4,426.2 L581.7,429.2 L581.0,432.2M607.5,309.5 L606.4,312.2 L605.3,314.9 L604.3,317.5 L603.2,320.2 L602.2,322.9 L601.1,325.6 L600.0,328.3 L599.0,330.9 L597.9,333.6 L596.9,336.3 L595.8,339.0 L594.7,341.7 L593.7,344.3 L592.6,347.0 L591.6,349.7 L590.5,352.4 L589.4,355.1 L588.4,357.8 L587.3,360.4 L586.3,363.1 L585.2,365.8 L584.1,368.5 L583.1,371.2 L582.0,373.8 L581.0,376.5 L579.9,379.2 L578.8,381.9 L577.8,384.6 L576.7,387.2 L575.7,389.9 L574.6,392.6 L573.5,395.3 L572.5,398.0 L571.4,400.6 L570.4,403.3 L569.3,406.0 L568.2,408.7 L567.2,411.4 L566.1,414.1 L565.1,416.7M606.1,307.6 L604.8,309.9 L603.4,312.1 L602.0,314.4 L600.6,316.6 L599.3,318.9 L597.9,321.1 L596.5,323.4 L595.2,325.6 L593.8,327.9 L592.4,330.1 L591.1,332.4 L589.7,334.6 L588.3,336.9 L586.9,339.1 L585.6,341.4 L584.2,343.6 L582.8,345.9 L581.5,348.1 L580.1,350.4 L578.7,352.6 L577.3,354.9 L576.0,357.1 L574.6,359.4 L573.2,361.6 L571.9,363.9 L570.5,366.1 L569.1,368.4 L567.8,370.6 L566.4,372.9 L565.0,375.1 L563.6,377.4 L562.3,379.6 L560.9,381.9 L559.5,384.1 L558.2,386.4 L556.8,388.6 L555.4,390.9 L554.1,393.1 L552.7,395.4 L551.3,397.6M605.0,305.5 L603.4,307.2 L601.8,309.0 L600.2,310.8 L598.6,312.5 L596.9,314.2 L595.3,316.0 L593.7,317.8 L592.1,319.5 L590.4,321.2 L588.8,323.0 L587.2,324.8 L585.6,326.5 L584.0,328.2 L582.3,330.0 L580.7,331.8 L579.1,333.5 L577.5,335.2 L575.8,337.0 L574.2,338.8 L572.6,340.5 L571.0,342.2 L569.4,344.0 L567.7,345.8 L566.1,347.5 L564.5,349.3 L562.9,351.0 L561.2,352.8 L559.6,354.5 L558.0,356.3 L556.4,358.0 L554.8,359.8 L553.1,361.5 L551.5,363.3 L549.9,365.0 L548.3,366.8 L546.6,368.5 L545.0,370.3 L543.4,372.0 L541.8,373.8 L540.2,375.5M604.3,303.1 L602.4,304.3 L600.6,305.5 L598.8,306.7 L597.0,307.9 L595.2,309.1 L593.4,310.3 L591.6,311.5 L589.8,312.7 L588.0,313.9 L586.2,315.1 L584.4,316.3 L582.6,317.5 L580.7,318.7 L578.9,319.9 L577.1,321.1 L575.3,322.3 L573.5,323.5 L571.7,324.7 L569.9,325.9 L568.1,327.1 L566.3,328.3 L564.5,329.5 L562.7,330.7 L560.9,331.9 L559.1,333.1 L557.2,334.3 L555.4,335.5 L553.6,336.6 L551.8,337.8 L550.0,339.0 L548.2,340.2 L546.4,341.4 L544.6,342.6 L542.8,343.8 L541.0,345.0 L539.2,346.2 L537.4,347.4 L535.5,348.6 L533.7,349.8 L531.9,351.0M603.8,300.6 L601.8,301.2 L599.9,301.8 L598.0,302.4 L596.1,303.0 L594.2,303.6 L592.2,304.3 L590.3,304.9 L588.4,305.5 L586.5,306.1 L584.5,306.7 L582.6,307.3 L580.7,307.9 L578.8,308.5 L576.9,309.1 L574.9,309.7 L573.0,310.3 L571.1,310.9 L569.2,311.5 L567.3,312.2 L565.3,312.8 L563.4,313.4 L561.5,314.0 L559.6,314.6 L557.6,315.2 L555.7,315.8 L553.8,316.4 L551.9,317.0 L550.0,317.6 L548.0,318.2 L546.1,318.8 L544.2,319.4 L542.3,320.1 L540.3,320.7 L538.4,321.3 L536.5,321.9 L534.6,322.5 L532.7,323.1 L530.7,323.7 L528.8,324.3 L526.9,324.9M603.6,298.0 L601.6,298.0 L599.7,298.0 L597.7,298.0 L595.8,298.0 L593.8,298.0 L591.8,298.0 L589.9,298.0 L587.9,298.0 L586.0,298.0 L584.0,298.0 L582.0,298.0 L580.1,298.0 L578.1,298.0 L576.2,298.0 L574.2,298.0 L572.2,298.0 L570.3,298.0 L568.3,298.0 L566.4,298.0 L564.4,298.0 L562.4,298.0 L560.5,298.0 L558.5,298.0 L556.6,298.0 L554.6,298.0 L552.6,298.0 L550.7,298.0 L548.7,298.0 L546.8,298.0 L544.8,298.0 L542.8,298.0 L540.9,298.0 L538.9,298.0 L537.0,298.0 L535.0,298.0 L533.0,298.0 L531.1,298.0 L529.1,298.0 L527.2,298.0 L525.2,298.0M603.8,295.4 L601.8,294.8 L599.9,294.2 L598.0,293.6 L596.1,293.0 L594.2,292.4 L592.2,291.7 L590.3,291.1 L588.4,290.5 L586.5,289.9 L584.5,289.3 L582.6,288.7 L580.7,288.1 L578.8,287.5 L576.9,286.9 L574.9,286.3 L573.0,285.7 L571.1,285.1 L569.2,284.5 L567.3,283.8 L565.3,283.2 L563.4,282.6 L561.5,282.0 L559.6,281.4 L557.6,280.8 L555.7,280.2 L553.8,279.6 L551.9,279.0 L550.0,278.4 L548.0,277.8 L546.1,277.2 L544.2,276.6 L542.3,275.9 L540.3,275.3 L538.4,274.7 L536.5,274.1 L534.6,273.5 L532.7,272.9 L530.7,272.3 L528.8,271.7 L526.9,271.1M604.3,292.9 L602.4,291.7 L600.6,290.5 L598.8,289.3 L597.0,288.1 L595.2,286.9 L593.4,285.7 L591.6,284.5 L589.8,283.3 L588.0,282.1 L586.2,280.9 L584.4,279.7 L582.6,278.5 L580.7,277.3 L578.9,276.1 L577.1,274.9 L575.3,273.7 L573.5,272.5 L571.7,271.3 L569.9,270.1 L568.1,268.9 L566.3,267.7 L564.5,266.5 L562.7,265.3 L560.9,264.1 L559.1,262.9 L557.2,261.7 L555.4,260.5 L553.6,259.4 L551.8,258.2 L550.0,257.0 L548.2,255.8 L546.4,254.6 L544.6,253.4 L542.8,252.2 L541.0,251.0 L539.2,249.8 L537.4,248.6 L535.5,247.4 L533.7,246.2 L531.9,245.0M605.0,290.5 L603.4,288.8 L601.8,287.0 L600.2,285.2 L598.6,283.5 L596.9,281.8 L595.3,280.0 L593.7,278.2 L592.1,276.5 L590.4,274.8 L588.8,273.0 L587.2,271.2 L585.6,269.5 L584.0,267.8 L582.3,266.0 L580.7,264.2 L579.1,262.5 L577.5,260.8 L575.8,259.0 L574.2,257.2 L572.6,255.5 L571.0,253.8 L569.4,252.0 L567.7,250.2 L566.1,248.5 L564.5,246.8 L562.9,245.0 L561.2,243.2 L559.6,241.5 L558.0,239.8 L556.4,238.0 L554.8,236.2 L553.1,234.5 L551.5,232.8 L549.9,231.0 L548.3,229.2 L546.6,227.5 L545.0,225.8 L543.4,224.0 L541.8,222.2 L540.2,220.5M606.1,288.4 L604.8,286.1 L603.4,283.9 L602.0,281.6 L600.6,279.4 L599.3,277.1 L597.9,274.9 L596.5,272.6 L595.2,270.4 L593.8,268.1 L592.4,265.9 L591.1,263.6 L589.7,261.4 L588.3,259.1 L586.9,256.9 L585.6,254.6 L584.2,252.4 L582.8,250.1 L581.5,247.9 L580.1,245.6 L578.7,243.4 L577.3,241.1 L576.0,238.9 L574.6,236.6 L573.2,234.4 L571.9,232.1 L570.5,229.9 L569.1,227.6 L567.8,225.4 L566.4,223.1 L565.0,220.9 L563.6,218.6 L562.3,216.4 L560.9,214.1 L559.5,211.9 L558.2,209.6 L556.8,207.4 L555.4,205.1 L554.1,202.9 L552.7,200.6 L551.3,198.4M607.5,286.5 L606.4,283.8 L605.3,281.1 L604.3,278.5 L603.2,275.8 L602.2,273.1 L601.1,270.4 L600.0,267.7 L599.0,265.1 L597.9,262.4 L596.9,259.7 L595.8,257.0 L594.7,254.3 L593.7,251.7 L592.6,249.0 L591.6,246.3 L590.5,243.6 L589.4,240.9 L588.4,238.2 L587.3,235.6 L586.3,232.9 L585.2,230.2 L584.1,227.5 L583.1,224.8 L582.0,222.2 L581.0,219.5 L579.9,216.8 L578.8,214.1 L577.8,211.4 L576.7,208.8 L575.7,206.1 L574.6,203.4 L573.5,200.7 L572.5,198.0 L571.4,195.4 L570.4,192.7 L569.3,190.0 L568.2,187.3 L567.2,184.6 L566.1,181.9 L565.1,179.3M609.0,285.0 L608.3,282.0 L607.6,278.9 L606.9,275.9 L606.2,272.9 L605.5,269.9 L604.8,266.8 L604.1,263.8 L603.4,260.8 L602.7,257.7 L602.0,254.7 L601.3,251.7 L600.6,248.6 L599.9,245.6 L599.2,242.6 L598.5,239.5 L597.8,236.5 L597.1,233.5 L596.4,230.5 L595.7,227.4 L595.0,224.4 L594.3,221.4 L593.6,218.3 L592.9,215.3 L592.2,212.3 L591.5,209.2 L590.8,206.2 L590.1,203.2 L589.4,200.1 L588.7,197.1 L588.0,194.1 L587.3,191.0 L586.6,188.0 L585.9,185.0 L585.2,182.0 L584.5,178.9 L583.8,175.9 L583.1,172.9 L582.4,169.8 L581.7,166.8 L581.0,163.8M610.7,283.9 L610.4,280.6 L610.1,277.3 L609.8,274.0 L609.5,270.7 L609.2,267.5 L608.9,264.2 L608.6,260.9 L608.3,257.6 L608.0,254.3 L607.7,251.0 L607.4,247.7 L607.1,244.4 L606.8,241.1 L606.5,237.9 L606.2,234.6 L605.9,231.3 L605.6,228.0 L605.3,224.7 L605.0,221.4 L604.7,218.1 L604.4,214.8 L604.1,211.5 L603.8,208.3 L603.5,205.0 L603.2,201.7 L602.9,198.4 L602.6,195.1 L602.3,191.8 L602.0,188.5 L601.6,185.2 L601.3,181.9 L601.0,178.7 L600.7,175.4 L600.4,172.1 L600.1,168.8 L599.8,165.5 L599.5,162.2 L599.2,158.9 L598.9,155.6 L598.6,152.3M612.5,283.2 L612.6,279.8 L612.8,276.3 L612.9,272.9 L613.0,269.4 L613.1,266.0 L613.3,262.5 L613.4,259.1 L613.5,255.7 L613.6,252.2 L613.7,248.8 L613.9,245.3 L614.0,241.9 L614.1,238.4 L614.2,235.0 L614.4,231.5 L614.5,228.1 L614.6,224.6 L614.7,221.2 L614.9,217.7 L615.0,214.3 L615.1,210.8 L615.2,207.4 L615.3,204.0 L615.5,200.5 L615.6,197.1 L615.7,193.6 L615.8,190.2 L616.0,186.7 L616.1,183.3 L616.2,179.8 L616.3,176.4 L616.4,172.9 L616.6,169.5 L616.7,166.0 L616.8,162.6 L616.9,159.1 L617.1,155.7 L617.2,152.2 L617.3,148.8 L617.4,145.4M614.4,283.0 L615.0,279.5 L615.5,276.0 L616.1,272.5 L616.6,269.0 L617.2,265.5 L617.8,262.0 L618.3,258.5 L618.9,255.0 L619.4,251.5 L620.0,248.0 L620.6,244.5 L621.1,241.0 L621.7,237.5 L622.2,234.0 L622.8,230.5 L623.4,227.0 L623.9,223.5 L624.5,220.0 L625.0,216.5 L625.6,213.0 L626.2,209.5 L626.7,206.0 L627.3,202.5 L627.8,199.0 L628.4,195.5 L629.0,192.0 L629.5,188.5 L630.1,185.0 L630.6,181.5 L631.2,178.0 L631.8,174.5 L632.3,171.0 L632.9,167.5 L633.4,164.0 L634.0,160.5 L634.6,157.0 L635.1,153.5 L635.7,150.0 L636.2,146.5 L636.8,143.0M616.3,283.2 L617.3,279.8 L618.3,276.3 L619.3,272.9 L620.3,269.4 L621.3,266.0 L622.3,262.5 L623.3,259.1 L624.3,255.7 L625.3,252.2 L626.3,248.8 L627.2,245.3 L628.2,241.9 L629.2,238.4 L630.2,235.0 L631.2,231.5 L632.2,228.1 L633.2,224.6 L634.2,221.2 L635.2,217.7 L636.2,214.3 L637.2,210.8 L638.2,207.4 L639.2,204.0 L640.2,200.5 L641.2,197.1 L642.2,193.6 L643.2,190.2 L644.2,186.7 L645.2,183.3 L646.2,179.8 L647.2,176.4 L648.2,172.9 L649.2,169.5 L650.2,166.0 L651.2,162.6 L652.2,159.1 L653.2,155.7 L654.2,152.2 L655.2,148.8 L656.2,145.4M618.1,283.9 L619.5,280.6 L620.9,277.3 L622.4,274.0 L623.8,270.7 L625.2,267.5 L626.6,264.2 L628.0,260.9 L629.5,257.6 L630.9,254.3 L632.3,251.0 L633.7,247.7 L635.2,244.4 L636.6,241.1 L638.0,237.9 L639.4,234.6 L640.8,231.3 L642.3,228.0 L643.7,224.7 L645.1,221.4 L646.5,218.1 L648.0,214.8 L649.4,211.5 L650.8,208.3 L652.2,205.0 L653.6,201.7 L655.1,198.4 L656.5,195.1 L657.9,191.8 L659.3,188.5 L660.8,185.2 L662.2,181.9 L663.6,178.7 L665.0,175.4 L666.4,172.1 L667.9,168.8 L669.3,165.5 L670.7,162.2 L672.1,158.9 L673.5,155.6 L675.0,152.3M619.8,285.0 L621.6,282.0 L623.4,278.9 L625.3,275.9 L627.1,272.9 L628.9,269.9 L630.7,266.8 L632.5,263.8 L634.4,260.8 L636.2,257.7 L638.0,254.7 L639.8,251.7 L641.6,248.6 L643.5,245.6 L645.3,242.6 L647.1,239.5 L648.9,236.5 L650.7,233.5 L652.6,230.5 L654.4,227.4 L656.2,224.4 L658.0,221.4 L659.8,218.3 L661.7,215.3 L663.5,212.3 L665.3,209.2 L667.1,206.2 L668.9,203.2 L670.8,200.1 L672.6,197.1 L674.4,194.1 L676.2,191.0 L678.0,188.0 L679.9,185.0 L681.7,182.0 L683.5,178.9 L685.3,175.9 L687.1,172.9 L689.0,169.8 L690.8,166.8 L692.6,163.8M621.3,286.5 L623.5,283.8 L625.7,281.1 L627.9,278.5 L630.1,275.8 L632.2,273.1 L634.4,270.4 L636.6,267.7 L638.8,265.1 L641.0,262.4 L643.1,259.7 L645.3,257.0 L647.5,254.3 L649.7,251.7 L651.9,249.0 L654.0,246.3 L656.2,243.6 L658.4,240.9 L660.6,238.2 L662.8,235.6 L664.9,232.9 L667.1,230.2 L669.3,227.5 L671.5,224.8 L673.7,222.2 L675.8,219.5 L678.0,216.8 L680.2,214.1 L682.4,211.4 L684.6,208.8 L686.7,206.1 L688.9,203.4 L691.1,200.7 L693.3,198.0 L695.5,195.4 L697.6,192.7 L699.8,190.0 L702.0,187.3 L704.2,184.6 L706.4,181.9 L708.5,179.3M622.7,288.4 L625.2,286.1 L627.7,283.9 L630.1,281.6 L632.6,279.4 L635.1,277.1 L637.6,274.9 L640.1,272.6 L642.6,270.4 L645.1,268.1 L647.6,265.9 L650.1,263.6 L652.6,261.4 L655.0,259.1 L657.5,256.9 L660.0,254.6 L662.5,252.4 L665.0,250.1 L667.5,247.9 L670.0,245.6 L672.5,243.4 L675.0,241.1 L677.5,238.9 L680.0,236.6 L682.4,234.4 L684.9,232.1 L687.4,229.9 L689.9,227.6 L692.4,225.4 L694.9,223.1 L697.4,220.9 L699.9,218.6 L702.4,216.4 L704.9,214.1 L707.3,211.9 L709.8,209.6 L712.3,207.4 L714.8,205.1 L717.3,202.9 L719.8,200.6 L722.3,198.4M623.8,290.5 L626.5,288.8 L629.2,287.0 L632.0,285.2 L634.7,283.5 L637.5,281.8 L640.2,280.0 L642.9,278.2 L645.7,276.5 L648.4,274.8 L651.2,273.0 L653.9,271.2 L656.7,269.5 L659.4,267.8 L662.1,266.0 L664.9,264.2 L667.6,262.5 L670.4,260.8 L673.1,259.0 L675.9,257.2 L678.6,255.5 L681.3,253.8 L684.1,252.0 L686.8,250.3 L689.6,248.5 L692.3,246.8 L695.1,245.0 L697.8,243.3 L700.5,241.5 L703.3,239.8 L706.0,238.0 L708.8,236.3 L711.5,234.5 L714.3,232.8 L717.0,231.0 L719.7,229.3 L722.5,227.5 L725.2,225.8 L728.0,224.0 L730.7,222.3 L733.4,220.5M624.5,292.9 L627.5,291.7 L630.4,290.5 L633.3,289.3 L636.3,288.1 L639.2,286.9 L642.1,285.7 L645.0,284.5 L648.0,283.3 L650.9,282.1 L653.8,280.9 L656.8,279.7 L659.7,278.5 L662.6,277.3 L665.5,276.1 L668.5,274.9 L671.4,273.7 L674.3,272.5 L677.3,271.3 L680.2,270.1 L683.1,268.9 L686.0,267.7 L689.0,266.5 L691.9,265.3 L694.8,264.1 L697.7,262.9 L700.7,261.7 L703.6,260.5 L706.5,259.4 L709.5,258.2 L712.4,257.0 L715.3,255.8 L718.2,254.6 L721.2,253.4 L724.1,252.2 L727.0,251.0 L730.0,249.8 L732.9,248.6 L735.8,247.4 L738.7,246.2 L741.7,245.0M625.0,295.4 L628.1,294.8 L631.1,294.2 L634.2,293.6 L637.2,293.0 L640.2,292.4 L643.3,291.7 L646.3,291.1 L649.4,290.5 L652.4,289.9 L655.5,289.3 L658.5,288.7 L661.5,288.1 L664.6,287.5 L667.6,286.9 L670.7,286.3 L673.7,285.7 L676.7,285.1 L679.8,284.5 L682.8,283.8 L685.9,283.2 L688.9,282.6 L692.0,282.0 L695.0,281.4 L698.0,280.8 L701.1,280.2 L704.1,279.6 L707.2,279.0 L710.2,278.4 L713.2,277.8 L716.3,277.2 L719.3,276.6 L722.4,275.9 L725.4,275.3 L728.5,274.7 L731.5,274.1 L734.5,273.5 L737.6,272.9 L740.6,272.3 L743.7,271.7 L746.7,271.1" fill="none" stroke="#121214" stroke-width="1.60" opacity="0.9"/>
<path d="M620.6,297.1h3.8v3.8h-3.8zM620.4,299.2h3.8v3.8h-3.8zM619.9,301.2h3.8v3.8h-3.8zM619.1,303.0h3.8v3.8h-3.8zM618.1,304.6h3.8v3.8h-3.8zM617.0,305.9h3.8v3.8h-3.8zM615.7,307.0h3.8v3.8h-3.8zM614.3,307.7h3.8v3.8h-3.8zM612.8,308.1h3.8v3.8h-3.8zM611.3,308.1h3.8v3.8h-3.8zM609.8,307.7h3.8v3.8h-3.8zM608.4,307.0h3.8v3.8h-3.8zM607.1,305.9h3.8v3.8h-3.8zM605.9,304.6h3.8v3.8h-3.8zM604.9,303.0h3.8v3.8h-3.8zM604.2,301.2h3.8v3.8h-3.8zM603.7,299.2h3.8v3.8h-3.8zM603.4,297.1h3.8v3.8h-3.8zM603.4,295.1h3.8v3.8h-3.8zM603.7,293.0h3.8v3.8h-3.8zM604.2,291.0h3.8v3.8h-3.8zM604.9,289.2h3.8v3.8h-3.8zM605.9,287.6h3.8v3.8h-3.8zM607.1,286.3h3.8v3.8h-3.8zM608.4,285.2h3.8v3.8h-3.8zM609.8,284.5h3.8v3.8h-3.8zM611.3,284.1h3.8v3.8h-3.8zM612.8,284.1h3.8v3.8h-3.8zM614.3,284.5h3.8v3.8h-3.8zM615.7,285.2h3.8v3.8h-3.8zM617.0,286.3h3.8v3.8h-3.8zM618.1,287.6h3.8v3.8h-3.8zM619.1,289.2h3.8v3.8h-3.8zM619.9,291.0h3.8v3.8h-3.8zM620.4,293.0h3.8v3.8h-3.8zM620.6,295.1h3.8v3.8h-3.8zM626.8,297.8h3.8v3.8h-3.8zM626.4,301.0h3.8v3.8h-3.8zM625.5,304.1h3.8v3.8h-3.8zM624.3,307.0h3.8v3.8h-3.8zM622.8,309.5h3.8v3.8h-3.8zM621.0,311.7h3.8v3.8h-3.8zM618.9,313.3h3.8v3.8h-3.8zM616.7,314.5h3.8v3.8h-3.8zM614.3,315.0h3.8v3.8h-3.8zM611.9,315.0h3.8v3.8h-3.8zM609.6,314.5h3.8v3.8h-3.8zM607.4,313.3h3.8v3.8h-3.8zM605.3,311.7h3.8v3.8h-3.8zM603.5,309.5h3.8v3.8h-3.8zM601.9,307.0h3.8v3.8h-3.8zM600.7,304.1h3.8v3.8h-3.8zM599.9,301.0h3.8v3.8h-3.8zM599.5,297.8h3.8v3.8h-3.8zM599.5,294.4h3.8v3.8h-3.8zM599.9,291.2h3.8v3.8h-3.8zM600.7,288.1h3.8v3.8h-3.8zM601.9,285.2h3.8v3.8h-3.8zM603.5,282.7h3.8v3.8h-3.8zM605.3,280.5h3.8v3.8h-3.8zM607.4,278.9h3.8v3.8h-3.8zM609.6,277.7h3.8v3.8h-3.8zM611.9,277.2h3.8v3.8h-3.8zM614.3,277.2h3.8v3.8h-3.8zM616.7,277.7h3.8v3.8h-3.8zM618.9,278.9h3.8v3.8h-3.8zM621.0,280.5h3.8v3.8h-3.8zM622.8,282.7h3.8v3.8h-3.8zM624.3,285.2h3.8v3.8h-3.8zM625.5,288.1h3.8v3.8h-3.8zM626.4,291.2h3.8v3.8h-3.8zM626.8,294.4h3.8v3.8h-3.8zM633.8,298.5h3.8v3.8h-3.8zM633.2,303.1h3.8v3.8h-3.8zM632.0,307.5h3.8v3.8h-3.8zM630.3,311.6h3.8v3.8h-3.8zM628.2,315.2h3.8v3.8h-3.8zM625.6,318.2h3.8v3.8h-3.8zM622.6,320.6h3.8v3.8h-3.8zM619.5,322.2h3.8v3.8h-3.8zM616.1,323.0h3.8v3.8h-3.8zM612.7,323.0h3.8v3.8h-3.8zM609.4,322.2h3.8v3.8h-3.8zM606.2,320.6h3.8v3.8h-3.8zM603.3,318.2h3.8v3.8h-3.8zM600.7,315.2h3.8v3.8h-3.8zM598.5,311.6h3.8v3.8h-3.8zM596.8,307.5h3.8v3.8h-3.8zM595.6,303.1h3.8v3.8h-3.8zM595.1,298.5h3.8v3.8h-3.8zM595.1,293.7h3.8v3.8h-3.8zM595.6,289.1h3.8v3.8h-3.8zM596.8,284.7h3.8v3.8h-3.8zM598.5,280.6h3.8v3.8h-3.8zM600.7,277.0h3.8v3.8h-3.8zM603.3,274.0h3.8v3.8h-3.8zM606.2,271.6h3.8v3.8h-3.8zM609.4,270.0h3.8v3.8h-3.8zM612.7,269.2h3.8v3.8h-3.8zM616.1,269.2h3.8v3.8h-3.8zM619.5,270.0h3.8v3.8h-3.8zM622.6,271.6h3.8v3.8h-3.8zM625.6,274.0h3.8v3.8h-3.8zM628.2,277.0h3.8v3.8h-3.8zM630.3,280.6h3.8v3.8h-3.8zM632.0,284.7h3.8v3.8h-3.8zM633.2,289.1h3.8v3.8h-3.8zM633.8,293.7h3.8v3.8h-3.8zM641.2,299.2h3.8v3.8h-3.8zM640.5,305.3h3.8v3.8h-3.8zM638.9,311.1h3.8v3.8h-3.8zM636.7,316.5h3.8v3.8h-3.8zM633.9,321.2h3.8v3.8h-3.8zM630.4,325.2h3.8v3.8h-3.8zM626.6,328.3h3.8v3.8h-3.8zM622.4,330.4h3.8v3.8h-3.8zM618.0,331.5h3.8v3.8h-3.8zM613.6,331.5h3.8v3.8h-3.8zM609.2,330.4h3.8v3.8h-3.8zM605.0,328.3h3.8v3.8h-3.8zM601.1,325.2h3.8v3.8h-3.8zM597.7,321.2h3.8v3.8h-3.8zM594.8,316.5h3.8v3.8h-3.8zM592.6,311.1h3.8v3.8h-3.8zM591.1,305.3h3.8v3.8h-3.8zM590.3,299.2h3.8v3.8h-3.8zM590.3,293.0h3.8v3.8h-3.8zM591.1,286.9h3.8v3.8h-3.8zM592.6,281.1h3.8v3.8h-3.8zM594.8,275.7h3.8v3.8h-3.8zM597.7,271.0h3.8v3.8h-3.8zM601.1,267.0h3.8v3.8h-3.8zM605.0,263.9h3.8v3.8h-3.8zM609.2,261.8h3.8v3.8h-3.8zM613.6,260.7h3.8v3.8h-3.8zM618.0,260.7h3.8v3.8h-3.8zM622.4,261.8h3.8v3.8h-3.8zM626.6,263.9h3.8v3.8h-3.8zM630.4,267.0h3.8v3.8h-3.8zM633.9,271.0h3.8v3.8h-3.8zM636.7,275.7h3.8v3.8h-3.8zM638.9,281.1h3.8v3.8h-3.8zM640.5,286.9h3.8v3.8h-3.8zM641.2,293.0h3.8v3.8h-3.8zM648.7,299.9h3.8v3.8h-3.8zM647.7,307.5h3.8v3.8h-3.8zM645.9,314.7h3.8v3.8h-3.8zM643.1,321.3h3.8v3.8h-3.8zM639.5,327.2h3.8v3.8h-3.8zM635.3,332.1h3.8v3.8h-3.8zM630.5,336.0h3.8v3.8h-3.8zM625.3,338.6h3.8v3.8h-3.8zM619.9,339.9h3.8v3.8h-3.8zM614.4,339.9h3.8v3.8h-3.8zM608.9,338.6h3.8v3.8h-3.8zM603.8,336.0h3.8v3.8h-3.8zM599.0,332.1h3.8v3.8h-3.8zM594.7,327.2h3.8v3.8h-3.8zM591.2,321.3h3.8v3.8h-3.8zM588.4,314.7h3.8v3.8h-3.8zM586.5,307.5h3.8v3.8h-3.8zM585.6,299.9h3.8v3.8h-3.8zM585.6,292.3h3.8v3.8h-3.8zM586.5,284.7h3.8v3.8h-3.8zM588.4,277.5h3.8v3.8h-3.8zM591.2,270.9h3.8v3.8h-3.8zM594.7,265.0h3.8v3.8h-3.8zM599.0,260.1h3.8v3.8h-3.8zM603.8,256.2h3.8v3.8h-3.8zM608.9,253.6h3.8v3.8h-3.8zM614.4,252.3h3.8v3.8h-3.8zM619.9,252.3h3.8v3.8h-3.8zM625.3,253.6h3.8v3.8h-3.8zM630.5,256.2h3.8v3.8h-3.8zM635.3,260.1h3.8v3.8h-3.8zM639.5,265.0h3.8v3.8h-3.8zM643.1,270.9h3.8v3.8h-3.8zM645.9,277.5h3.8v3.8h-3.8zM647.7,284.7h3.8v3.8h-3.8zM648.7,292.3h3.8v3.8h-3.8zM655.7,300.6h3.8v3.8h-3.8zM654.6,309.6h3.8v3.8h-3.8zM652.4,318.1h3.8v3.8h-3.8zM649.1,325.9h3.8v3.8h-3.8zM644.9,332.9h3.8v3.8h-3.8zM639.9,338.7h3.8v3.8h-3.8zM634.2,343.2h3.8v3.8h-3.8zM628.1,346.3h3.8v3.8h-3.8zM621.7,347.9h3.8v3.8h-3.8zM615.2,347.9h3.8v3.8h-3.8zM608.7,346.3h3.8v3.8h-3.8zM602.6,343.2h3.8v3.8h-3.8zM596.9,338.7h3.8v3.8h-3.8zM591.9,332.9h3.8v3.8h-3.8zM587.8,325.9h3.8v3.8h-3.8zM584.5,318.1h3.8v3.8h-3.8zM582.3,309.6h3.8v3.8h-3.8zM581.1,300.6h3.8v3.8h-3.8zM581.1,291.6h3.8v3.8h-3.8zM582.3,282.6h3.8v3.8h-3.8zM584.5,274.1h3.8v3.8h-3.8zM587.8,266.3h3.8v3.8h-3.8zM591.9,259.3h3.8v3.8h-3.8zM596.9,253.5h3.8v3.8h-3.8zM602.6,249.0h3.8v3.8h-3.8zM608.7,245.9h3.8v3.8h-3.8zM615.2,244.3h3.8v3.8h-3.8zM621.7,244.3h3.8v3.8h-3.8zM628.1,245.9h3.8v3.8h-3.8zM634.2,249.0h3.8v3.8h-3.8zM639.9,253.5h3.8v3.8h-3.8zM644.9,259.3h3.8v3.8h-3.8zM649.1,266.3h3.8v3.8h-3.8zM652.4,274.1h3.8v3.8h-3.8zM654.6,282.6h3.8v3.8h-3.8zM655.7,291.6h3.8v3.8h-3.8zM664.5,301.5h3.8v3.8h-3.8zM663.1,312.1h3.8v3.8h-3.8zM660.5,322.3h3.8v3.8h-3.8zM656.6,331.7h3.8v3.8h-3.8zM651.6,339.9h3.8v3.8h-3.8zM645.6,346.9h3.8v3.8h-3.8zM638.9,352.3h3.8v3.8h-3.8zM631.6,356.0h3.8v3.8h-3.8zM623.9,357.9h3.8v3.8h-3.8zM616.1,357.9h3.8v3.8h-3.8zM608.5,356.0h3.8v3.8h-3.8zM601.2,352.3h3.8v3.8h-3.8zM594.4,346.9h3.8v3.8h-3.8zM588.5,339.9h3.8v3.8h-3.8zM583.5,331.7h3.8v3.8h-3.8zM579.6,322.3h3.8v3.8h-3.8zM576.9,312.1h3.8v3.8h-3.8zM575.5,301.5h3.8v3.8h-3.8zM575.5,290.7h3.8v3.8h-3.8zM576.9,280.1h3.8v3.8h-3.8zM579.6,269.9h3.8v3.8h-3.8zM583.5,260.5h3.8v3.8h-3.8zM588.5,252.3h3.8v3.8h-3.8zM594.4,245.3h3.8v3.8h-3.8zM601.2,239.9h3.8v3.8h-3.8zM608.5,236.2h3.8v3.8h-3.8zM616.1,234.3h3.8v3.8h-3.8zM623.9,234.3h3.8v3.8h-3.8zM631.6,236.2h3.8v3.8h-3.8zM638.9,239.9h3.8v3.8h-3.8zM645.6,245.3h3.8v3.8h-3.8zM651.6,252.3h3.8v3.8h-3.8zM656.6,260.5h3.8v3.8h-3.8zM660.5,269.9h3.8v3.8h-3.8zM663.1,280.1h3.8v3.8h-3.8zM664.5,290.7h3.8v3.8h-3.8zM675.0,302.5h3.8v3.8h-3.8zM673.4,315.3h3.8v3.8h-3.8zM670.2,327.4h3.8v3.8h-3.8zM665.6,338.5h3.8v3.8h-3.8zM659.6,348.4h3.8v3.8h-3.8zM652.5,356.7h3.8v3.8h-3.8zM644.5,363.2h3.8v3.8h-3.8zM635.7,367.6h3.8v3.8h-3.8zM626.6,369.8h3.8v3.8h-3.8zM617.3,369.8h3.8v3.8h-3.8zM608.2,367.6h3.8v3.8h-3.8zM599.4,363.2h3.8v3.8h-3.8zM591.4,356.7h3.8v3.8h-3.8zM584.3,348.4h3.8v3.8h-3.8zM578.3,338.5h3.8v3.8h-3.8zM573.7,327.4h3.8v3.8h-3.8zM570.5,315.3h3.8v3.8h-3.8zM568.9,302.5h3.8v3.8h-3.8zM568.9,289.7h3.8v3.8h-3.8zM570.5,276.9h3.8v3.8h-3.8zM573.7,264.8h3.8v3.8h-3.8zM578.3,253.7h3.8v3.8h-3.8zM584.3,243.8h3.8v3.8h-3.8zM591.4,235.5h3.8v3.8h-3.8zM599.4,229.0h3.8v3.8h-3.8zM608.2,224.6h3.8v3.8h-3.8zM617.3,222.4h3.8v3.8h-3.8zM626.6,222.4h3.8v3.8h-3.8zM635.7,224.6h3.8v3.8h-3.8zM644.5,229.0h3.8v3.8h-3.8zM652.5,235.5h3.8v3.8h-3.8zM659.6,243.8h3.8v3.8h-3.8zM665.6,253.7h3.8v3.8h-3.8zM670.2,264.8h3.8v3.8h-3.8zM673.4,276.9h3.8v3.8h-3.8zM675.0,289.7h3.8v3.8h-3.8zM686.0,303.6h3.8v3.8h-3.8zM684.1,318.5h3.8v3.8h-3.8zM680.4,332.7h3.8v3.8h-3.8zM675.0,345.7h3.8v3.8h-3.8zM668.0,357.3h3.8v3.8h-3.8zM659.7,367.0h3.8v3.8h-3.8zM650.3,374.5h3.8v3.8h-3.8zM640.1,379.7h3.8v3.8h-3.8zM629.4,382.3h3.8v3.8h-3.8zM618.5,382.3h3.8v3.8h-3.8zM607.8,379.7h3.8v3.8h-3.8zM597.6,374.5h3.8v3.8h-3.8zM588.2,367.0h3.8v3.8h-3.8zM579.9,357.3h3.8v3.8h-3.8zM572.9,345.7h3.8v3.8h-3.8zM567.5,332.7h3.8v3.8h-3.8zM563.8,318.5h3.8v3.8h-3.8zM561.9,303.6h3.8v3.8h-3.8zM561.9,288.6h3.8v3.8h-3.8zM563.8,273.7h3.8v3.8h-3.8zM567.5,259.5h3.8v3.8h-3.8zM572.9,246.5h3.8v3.8h-3.8zM579.9,234.9h3.8v3.8h-3.8zM588.2,225.2h3.8v3.8h-3.8zM597.6,217.7h3.8v3.8h-3.8zM607.8,212.5h3.8v3.8h-3.8zM618.5,209.9h3.8v3.8h-3.8zM629.4,209.9h3.8v3.8h-3.8zM640.1,212.5h3.8v3.8h-3.8zM650.3,217.7h3.8v3.8h-3.8zM659.7,225.2h3.8v3.8h-3.8zM668.0,234.9h3.8v3.8h-3.8zM675.0,246.5h3.8v3.8h-3.8zM680.4,259.5h3.8v3.8h-3.8zM684.1,273.7h3.8v3.8h-3.8zM686.0,288.6h3.8v3.8h-3.8zM697.8,304.8h3.8v3.8h-3.8zM695.6,322.0h3.8v3.8h-3.8zM691.4,338.4h3.8v3.8h-3.8zM685.1,353.5h3.8v3.8h-3.8zM677.0,366.8h3.8v3.8h-3.8zM667.4,378.0h3.8v3.8h-3.8zM656.5,386.7h3.8v3.8h-3.8zM644.7,392.7h3.8v3.8h-3.8zM632.4,395.7h3.8v3.8h-3.8zM619.8,395.7h3.8v3.8h-3.8zM607.5,392.7h3.8v3.8h-3.8zM595.7,386.7h3.8v3.8h-3.8zM584.8,378.0h3.8v3.8h-3.8zM575.2,366.8h3.8v3.8h-3.8zM567.1,353.5h3.8v3.8h-3.8zM560.8,338.4h3.8v3.8h-3.8zM556.6,322.0h3.8v3.8h-3.8zM554.4,304.8h3.8v3.8h-3.8zM554.4,287.4h3.8v3.8h-3.8zM556.6,270.2h3.8v3.8h-3.8zM560.8,253.8h3.8v3.8h-3.8zM567.1,238.7h3.8v3.8h-3.8zM575.2,225.4h3.8v3.8h-3.8zM584.8,214.2h3.8v3.8h-3.8zM595.7,205.5h3.8v3.8h-3.8zM607.5,199.5h3.8v3.8h-3.8zM619.8,196.5h3.8v3.8h-3.8zM632.4,196.5h3.8v3.8h-3.8zM644.7,199.5h3.8v3.8h-3.8zM656.5,205.5h3.8v3.8h-3.8zM667.4,214.2h3.8v3.8h-3.8zM677.0,225.4h3.8v3.8h-3.8zM685.1,238.7h3.8v3.8h-3.8zM691.4,253.8h3.8v3.8h-3.8zM695.6,270.2h3.8v3.8h-3.8zM697.8,287.4h3.8v3.8h-3.8zM710.5,306.1h3.8v3.8h-3.8zM708.1,325.7h3.8v3.8h-3.8zM703.1,344.5h3.8v3.8h-3.8zM696.0,361.8h3.8v3.8h-3.8zM686.7,377.1h3.8v3.8h-3.8zM675.7,389.9h3.8v3.8h-3.8zM663.3,399.9h3.8v3.8h-3.8zM649.8,406.7h3.8v3.8h-3.8zM635.6,410.2h3.8v3.8h-3.8zM621.2,410.2h3.8v3.8h-3.8zM607.1,406.7h3.8v3.8h-3.8zM593.6,399.9h3.8v3.8h-3.8zM581.1,389.9h3.8v3.8h-3.8zM570.1,377.1h3.8v3.8h-3.8zM560.9,361.8h3.8v3.8h-3.8zM553.7,344.5h3.8v3.8h-3.8zM548.8,325.7h3.8v3.8h-3.8zM546.3,306.1h3.8v3.8h-3.8zM546.3,286.1h3.8v3.8h-3.8zM548.8,266.5h3.8v3.8h-3.8zM553.7,247.7h3.8v3.8h-3.8zM560.9,230.4h3.8v3.8h-3.8zM570.1,215.1h3.8v3.8h-3.8zM581.1,202.3h3.8v3.8h-3.8zM593.6,192.3h3.8v3.8h-3.8zM607.1,185.5h3.8v3.8h-3.8zM621.2,182.0h3.8v3.8h-3.8zM635.6,182.0h3.8v3.8h-3.8zM649.8,185.5h3.8v3.8h-3.8zM663.3,192.3h3.8v3.8h-3.8zM675.7,202.3h3.8v3.8h-3.8zM686.7,215.1h3.8v3.8h-3.8zM696.0,230.4h3.8v3.8h-3.8zM703.1,247.7h3.8v3.8h-3.8zM708.1,266.5h3.8v3.8h-3.8zM710.5,286.1h3.8v3.8h-3.8zM724.1,307.4h3.8v3.8h-3.8zM721.3,329.7h3.8v3.8h-3.8zM715.7,351.0h3.8v3.8h-3.8zM707.6,370.7h3.8v3.8h-3.8zM697.1,388.0h3.8v3.8h-3.8zM684.6,402.6h3.8v3.8h-3.8zM670.5,413.9h3.8v3.8h-3.8zM655.1,421.7h3.8v3.8h-3.8zM639.1,425.6h3.8v3.8h-3.8zM622.7,425.6h3.8v3.8h-3.8zM606.7,421.7h3.8v3.8h-3.8zM591.3,413.9h3.8v3.8h-3.8zM577.2,402.6h3.8v3.8h-3.8zM564.7,388.0h3.8v3.8h-3.8zM554.2,370.7h3.8v3.8h-3.8zM546.1,351.0h3.8v3.8h-3.8zM540.5,329.7h3.8v3.8h-3.8zM537.7,307.4h3.8v3.8h-3.8zM537.7,284.8h3.8v3.8h-3.8zM540.5,262.5h3.8v3.8h-3.8zM546.1,241.2h3.8v3.8h-3.8zM554.2,221.5h3.8v3.8h-3.8zM564.7,204.2h3.8v3.8h-3.8zM577.2,189.6h3.8v3.8h-3.8zM591.3,178.3h3.8v3.8h-3.8zM606.7,170.5h3.8v3.8h-3.8zM622.7,166.6h3.8v3.8h-3.8zM639.1,166.6h3.8v3.8h-3.8zM655.1,170.5h3.8v3.8h-3.8zM670.5,178.3h3.8v3.8h-3.8zM684.6,189.6h3.8v3.8h-3.8zM697.1,204.2h3.8v3.8h-3.8zM707.6,221.5h3.8v3.8h-3.8zM715.7,241.2h3.8v3.8h-3.8zM721.3,262.5h3.8v3.8h-3.8zM724.1,284.8h3.8v3.8h-3.8zM738.6,308.9h3.8v3.8h-3.8zM735.4,334.0h3.8v3.8h-3.8zM729.1,358.0h3.8v3.8h-3.8zM719.9,380.1h3.8v3.8h-3.8zM708.1,399.7h3.8v3.8h-3.8zM694.0,416.1h3.8v3.8h-3.8zM678.1,428.9h3.8v3.8h-3.8zM660.8,437.6h3.8v3.8h-3.8zM642.7,442.0h3.8v3.8h-3.8zM624.3,442.0h3.8v3.8h-3.8zM606.2,437.6h3.8v3.8h-3.8zM589.0,428.9h3.8v3.8h-3.8zM573.0,416.1h3.8v3.8h-3.8zM559.0,399.7h3.8v3.8h-3.8zM547.1,380.1h3.8v3.8h-3.8zM537.9,358.0h3.8v3.8h-3.8zM531.7,334.0h3.8v3.8h-3.8zM528.5,308.9h3.8v3.8h-3.8zM528.5,283.3h3.8v3.8h-3.8zM531.7,258.2h3.8v3.8h-3.8zM537.9,234.2h3.8v3.8h-3.8zM547.1,212.1h3.8v3.8h-3.8zM559.0,192.5h3.8v3.8h-3.8zM573.0,176.1h3.8v3.8h-3.8zM589.0,163.3h3.8v3.8h-3.8zM606.2,154.6h3.8v3.8h-3.8zM624.3,150.2h3.8v3.8h-3.8zM642.7,150.2h3.8v3.8h-3.8zM660.8,154.6h3.8v3.8h-3.8zM678.1,163.3h3.8v3.8h-3.8zM694.0,176.1h3.8v3.8h-3.8zM708.1,192.5h3.8v3.8h-3.8zM719.9,212.1h3.8v3.8h-3.8zM729.1,234.2h3.8v3.8h-3.8zM735.4,258.2h3.8v3.8h-3.8zM738.6,283.3h3.8v3.8h-3.8z" fill="#121214"/>
<path d="M656.0,294.0L664.0,294.0M655.6,300.4L663.4,302.2M654.3,306.6L661.7,310.1M652.1,312.5L659.0,317.5M649.2,317.8L655.3,324.2M645.7,322.3L650.8,330.0M641.5,326.0L645.5,334.7M636.9,328.7L639.6,338.2M632.0,330.4L633.4,340.3M627.0,331.0L627.0,341.0M622.0,330.4L620.6,340.3M617.1,328.7L614.4,338.2M612.5,326.0L608.5,334.7M608.3,322.3L603.2,330.0M604.8,317.8L598.7,324.2M601.9,312.5L595.0,317.5M599.7,306.6L592.3,310.1M598.4,300.4L590.6,302.2M598.0,294.0L590.0,294.0M598.4,287.6L590.6,285.8M599.7,281.4L592.3,277.9M601.9,275.5L595.0,270.5M604.8,270.2L598.7,263.8M608.3,265.7L603.2,258.0M612.5,262.0L608.5,253.3M617.1,259.3L614.4,249.8M622.0,257.6L620.6,247.7M627.0,257.0L627.0,247.0M632.0,257.6L633.4,247.7M636.9,259.3L639.6,249.8M641.5,262.0L645.5,253.3M645.7,265.7L650.8,258.0M649.2,270.2L655.3,263.8M652.1,275.5L659.0,270.5M654.3,281.4L661.7,277.9M655.6,287.6L663.4,285.8" stroke="#0e0e10" stroke-width="2.4" opacity="0.9"/><ellipse cx="612" cy="298" rx="11" ry="15" fill="none" stroke="#0e0e10" stroke-width="3" stroke-dasharray="2,2.5"/><ellipse cx="612" cy="298" rx="6" ry="9" fill="none" stroke="#0e0e10" stroke-width="2" stroke-dasharray="2,2"/><ellipse cx="612" cy="298" rx="10" ry="13" fill="#1c1c1e" opacity="0.8"/><ellipse cx="612" cy="298" rx="4" ry="6" fill="none" stroke="#777" stroke-width="1" stroke-dasharray="2,2" opacity="0.6"/><ellipse cx="627" cy="294" rx="33" ry="42" fill="none" stroke="#0e0e10" stroke-width="4" stroke-dasharray="3,3.5" opacity="0.6"/>
</g>
<g clip-path="url(#cMJ)">
<use href="#shade"/>

<path d="M666.0,396.0 L666.0,400.0 L666.0,404.1 L666.0,408.1 L666.0,412.1 L666.0,416.1 L666.0,420.2 L666.0,424.2 L666.5,429.6 L667.2,435.4 L667.8,441.2 L668.4,446.9 L669.1,452.7 L669.7,458.5 L670.4,464.2 L671.0,470.0 L671.0,475.0 L671.0,480.0 L671.0,485.0 L671.0,490.0 L671.0,495.0 L671.0,500.0 L671.0,505.0 L671.0,510.0 L671.0,515.0 L671.0,520.0 L671.0,525.0 L671.0,530.0 L670.8,534.0 L670.6,538.0 L670.4,542.0 L670.2,546.0 L670.0,550.0 L669.8,554.0 L669.6,558.0 L669.4,562.0 L669.2,566.0 L669.0,570.0 L668.8,574.0 L668.6,578.0 L668.4,582.0 L668.2,586.0 L668.0,590.0 L668.4,593.3 L668.8,596.7 L669.2,600.0 L669.7,603.3 L670.1,606.7 L670.5,610.0 L670.9,613.3 L671.3,616.7 L671.8,620.0 L672.2,623.3 L672.6,626.7 L673.0,630.0 L675.8,633.7 L678.7,637.3 L681.5,641.0 L684.3,644.7 L687.2,648.3 L690.0,652.0M675.8,395.5 L675.7,399.6 L675.5,403.8 L675.4,408.0 L675.3,412.1 L675.2,416.3 L675.0,420.5 L674.9,424.6 L675.2,430.1 L675.7,435.9 L676.1,441.7 L676.6,447.5 L677.0,453.3 L677.5,459.0 L677.9,464.8 L678.4,470.6 L678.3,475.6 L678.2,480.6 L678.2,485.5 L678.1,490.5 L678.1,495.4 L678.0,500.4 L677.9,505.4 L677.9,510.3 L677.8,515.3 L677.8,520.3 L677.7,525.2 L677.6,530.2 L677.4,534.2 L677.2,538.2 L677.0,542.2 L676.9,546.3 L676.7,550.3 L676.5,554.3 L676.3,558.3 L676.1,562.3 L675.9,566.4 L675.7,570.4 L675.5,574.4 L675.3,578.4 L675.1,582.4 L674.9,586.5 L674.7,590.5 L675.1,593.8 L675.5,597.2 L675.9,600.5 L676.2,603.9 L676.6,607.2 L677.0,610.6 L677.4,614.0 L677.8,617.3 L678.1,620.7 L678.5,624.0 L678.9,627.4 L679.3,630.7 L681.8,634.4 L684.4,638.1 L686.9,641.8 L689.5,645.5 L692.0,649.2 L694.6,652.8M688.6,394.9 L688.3,399.2 L688.0,403.6 L687.7,407.9 L687.4,412.3 L687.1,416.6 L686.8,421.0 L686.5,425.3 L686.6,430.8 L686.8,436.6 L687.0,442.4 L687.2,448.2 L687.4,454.0 L687.6,459.9 L687.8,465.7 L688.0,471.5 L687.9,476.4 L687.7,481.3 L687.6,486.2 L687.4,491.1 L687.3,496.0 L687.2,500.9 L687.0,505.8 L686.9,510.7 L686.7,515.6 L686.6,520.5 L686.4,525.4 L686.3,530.3 L686.1,534.4 L685.9,538.4 L685.7,542.5 L685.6,546.5 L685.4,550.5 L685.2,554.6 L685.0,558.6 L684.8,562.7 L684.6,566.7 L684.4,570.7 L684.3,574.8 L684.1,578.8 L683.9,582.9 L683.7,586.9 L683.5,590.9 L683.8,594.3 L684.2,597.7 L684.5,601.0 L684.8,604.4 L685.2,607.8 L685.5,611.2 L685.8,614.5 L686.1,617.9 L686.5,621.3 L686.8,624.7 L687.1,628.0 L687.5,631.4 L689.6,635.1 L691.8,638.8 L694.0,642.5 L696.2,646.2 L698.4,649.9 L700.6,653.6M704.1,394.3 L703.7,398.8 L703.2,403.4 L702.7,408.0 L702.2,412.5 L701.7,417.1 L701.2,421.6 L700.7,426.2 L700.5,431.7 L700.4,437.6 L700.3,443.4 L700.2,449.2 L700.0,455.0 L699.9,460.9 L699.8,466.7 L699.7,472.5 L699.5,477.3 L699.2,482.2 L699.0,487.0 L698.7,491.8 L698.5,496.7 L698.3,501.5 L698.0,506.3 L697.8,511.2 L697.6,516.0 L697.3,520.8 L697.1,525.7 L696.8,530.5 L696.7,534.6 L696.5,538.6 L696.3,542.7 L696.1,546.7 L696.0,550.8 L695.8,554.8 L695.6,558.9 L695.4,562.9 L695.3,567.0 L695.1,571.0 L694.9,575.1 L694.7,579.2 L694.6,583.2 L694.4,587.3 L694.2,591.3 L694.5,594.7 L694.7,598.1 L695.0,601.5 L695.3,604.9 L695.5,608.3 L695.8,611.7 L696.1,615.0 L696.3,618.4 L696.6,621.8 L696.9,625.2 L697.2,628.6 L697.4,632.0 L699.2,635.7 L700.9,639.4 L702.6,643.2 L704.4,646.9 L706.1,650.6 L707.8,654.3M722.0,393.7 L721.3,398.5 L720.6,403.3 L719.8,408.1 L719.1,412.9 L718.4,417.7 L717.7,422.4 L716.9,427.2 L716.4,432.9 L716.0,438.7 L715.5,444.5 L715.0,450.4 L714.6,456.2 L714.1,462.0 L713.6,467.9 L713.2,473.7 L712.8,478.5 L712.5,483.2 L712.1,487.9 L711.8,492.7 L711.4,497.4 L711.1,502.2 L710.7,506.9 L710.4,511.7 L710.0,516.4 L709.7,521.1 L709.3,525.9 L709.0,530.6 L708.8,534.7 L708.6,538.8 L708.5,542.8 L708.3,546.9 L708.1,551.0 L708.0,555.0 L707.8,559.1 L707.6,563.2 L707.5,567.2 L707.3,571.3 L707.1,575.4 L707.0,579.4 L706.8,583.5 L706.7,587.6 L706.5,591.6 L706.7,595.0 L706.9,598.4 L707.1,601.9 L707.3,605.3 L707.5,608.7 L707.7,612.1 L707.9,615.5 L708.1,618.9 L708.3,622.3 L708.5,625.7 L708.7,629.1 L708.9,632.5 L710.1,636.2 L711.3,639.9 L712.5,643.7 L713.7,647.4 L715.0,651.1 L716.2,654.9M741.7,393.2 L740.7,398.2 L739.7,403.3 L738.7,408.3 L737.8,413.3 L736.8,418.4 L735.8,423.4 L734.8,428.5 L733.9,434.1 L733.1,440.0 L732.2,445.8 L731.4,451.7 L730.5,457.5 L729.6,463.4 L728.8,469.2 L727.9,475.1 L727.5,479.7 L727.0,484.3 L726.5,489.0 L726.1,493.6 L725.6,498.3 L725.1,502.9 L724.6,507.5 L724.2,512.2 L723.7,516.8 L723.2,521.4 L722.8,526.1 L722.3,530.7 L722.1,534.8 L722.0,538.9 L721.8,542.9 L721.7,547.0 L721.5,551.1 L721.4,555.2 L721.2,559.2 L721.1,563.3 L720.9,567.4 L720.8,571.5 L720.6,575.6 L720.4,579.6 L720.3,583.7 L720.1,587.8 L720.0,591.9 L720.1,595.3 L720.2,598.7 L720.4,602.1 L720.5,605.5 L720.6,608.9 L720.7,612.3 L720.8,615.7 L721.0,619.2 L721.1,622.6 L721.2,626.0 L721.3,629.4 L721.5,632.8 L722.1,636.5 L722.8,640.3 L723.4,644.0 L724.1,647.8 L724.7,651.5 L725.4,655.3M762.4,392.7 L761.2,398.0 L759.9,403.3 L758.7,408.6 L757.4,413.9 L756.2,419.2 L754.9,424.5 L753.7,429.8 L752.4,435.5 L751.1,441.4 L749.9,447.3 L748.6,453.1 L747.3,459.0 L746.1,464.8 L744.8,470.7 L743.6,476.5 L743.0,481.0 L742.4,485.6 L741.7,490.1 L741.1,494.6 L740.5,499.1 L739.9,503.6 L739.3,508.1 L738.7,512.7 L738.1,517.2 L737.5,521.7 L736.9,526.2 L736.3,530.7 L736.2,534.8 L736.1,538.9 L735.9,543.0 L735.8,547.1 L735.6,551.2 L735.5,555.2 L735.4,559.3 L735.2,563.4 L735.1,567.5 L734.9,571.6 L734.8,575.7 L734.7,579.7 L734.5,583.8 L734.4,587.9 L734.2,592.0 L734.3,595.4 L734.3,598.8 L734.4,602.2 L734.4,605.6 L734.4,609.1 L734.5,612.5 L734.5,615.9 L734.6,619.3 L734.6,622.7 L734.7,626.1 L734.7,629.6 L734.7,633.0 L734.8,636.7 L734.8,640.5 L734.9,644.2 L735.0,648.0 L735.0,651.7 L735.1,655.5M783.6,392.3 L782.0,397.9 L780.5,403.4 L779.0,409.0 L777.5,414.6 L775.9,420.1 L774.4,425.7 L772.9,431.2 L771.2,437.0 L769.5,442.9 L767.9,448.7 L766.2,454.6 L764.5,460.4 L762.8,466.3 L761.1,472.1 L759.4,478.0 L758.7,482.4 L758.0,486.8 L757.3,491.2 L756.5,495.6 L755.8,500.0 L755.1,504.4 L754.3,508.8 L753.6,513.2 L752.9,517.6 L752.1,522.0 L751.4,526.3 L750.7,530.7 L750.5,534.8 L750.4,538.9 L750.3,543.0 L750.2,547.1 L750.0,551.2 L749.9,555.2 L749.8,559.3 L749.6,563.4 L749.5,567.5 L749.4,571.6 L749.3,575.7 L749.1,579.7 L749.0,583.8 L748.9,587.9 L748.8,592.0 L748.7,595.4 L748.7,598.8 L748.6,602.2 L748.6,605.6 L748.6,609.1 L748.5,612.5 L748.5,615.9 L748.4,619.3 L748.4,622.7 L748.3,626.1 L748.3,629.6 L748.3,633.0 L747.7,636.7 L747.2,640.5 L746.6,644.2 L746.0,648.0 L745.5,651.7 L744.9,655.5M804.3,392.0 L802.5,397.8 L800.7,403.6 L798.9,409.4 L797.1,415.3 L795.3,421.1 L793.5,426.9 L791.7,432.7 L789.7,438.5 L787.6,444.4 L785.5,450.2 L783.4,456.1 L781.3,461.9 L779.2,467.8 L777.2,473.6 L775.1,479.5 L774.2,483.7 L773.3,488.0 L772.5,492.3 L771.6,496.5 L770.8,500.8 L769.9,505.1 L769.0,509.4 L768.2,513.6 L767.3,517.9 L766.4,522.2 L765.6,526.4 L764.7,530.7 L764.6,534.8 L764.5,538.9 L764.4,542.9 L764.3,547.0 L764.2,551.1 L764.0,555.2 L763.9,559.2 L763.8,563.3 L763.7,567.4 L763.6,571.5 L763.5,575.6 L763.4,579.6 L763.2,583.7 L763.1,587.8 L763.0,591.9 L762.9,595.3 L762.8,598.7 L762.6,602.1 L762.5,605.5 L762.4,608.9 L762.3,612.3 L762.2,615.7 L762.0,619.2 L761.9,622.6 L761.8,626.0 L761.7,629.4 L761.5,632.8 L760.4,636.5 L759.2,640.3 L758.1,644.0 L756.9,647.8 L755.8,651.5 L754.6,655.3M824.0,391.8 L821.9,397.9 L819.9,403.9 L817.8,409.9 L815.8,416.0 L813.7,422.0 L811.7,428.1 L809.6,434.1 L807.2,440.0 L804.7,445.8 L802.3,451.7 L799.8,457.5 L797.3,463.4 L794.8,469.2 L792.3,475.0 L789.8,480.9 L788.9,485.0 L787.9,489.2 L786.9,493.3 L785.9,497.5 L784.9,501.6 L783.9,505.7 L783.0,509.9 L782.0,514.0 L781.0,518.2 L780.0,522.3 L779.0,526.5 L778.0,530.6 L777.9,534.7 L777.8,538.8 L777.7,542.8 L777.6,546.9 L777.5,551.0 L777.4,555.0 L777.3,559.1 L777.2,563.2 L777.1,567.2 L777.0,571.3 L776.9,575.4 L776.8,579.4 L776.7,583.5 L776.6,587.6 L776.5,591.6 L776.3,595.0 L776.1,598.4 L775.9,601.9 L775.7,605.3 L775.5,608.7 L775.3,612.1 L775.1,615.5 L774.9,618.9 L774.7,622.3 L774.5,625.7 L774.3,629.1 L774.1,632.5 L772.4,636.2 L770.7,639.9 L769.0,643.7 L767.3,647.4 L765.5,651.1 L763.8,654.9M841.9,391.7 L839.6,398.0 L837.3,404.2 L835.0,410.5 L832.7,416.7 L830.4,423.0 L828.2,429.2 L825.9,435.5 L823.1,441.4 L820.3,447.2 L817.5,453.0 L814.6,458.9 L811.8,464.7 L809.0,470.5 L806.1,476.3 L803.3,482.2 L802.2,486.2 L801.1,490.2 L800.0,494.2 L798.9,498.3 L797.8,502.3 L796.7,506.3 L795.6,510.4 L794.5,514.4 L793.4,518.4 L792.3,522.4 L791.2,526.5 L790.2,530.5 L790.1,534.6 L790.0,538.6 L789.9,542.7 L789.8,546.7 L789.7,550.8 L789.6,554.8 L789.5,558.9 L789.4,562.9 L789.3,567.0 L789.2,571.0 L789.2,575.1 L789.1,579.2 L789.0,583.2 L788.9,587.3 L788.8,591.3 L788.5,594.7 L788.3,598.1 L788.0,601.5 L787.7,604.9 L787.5,608.3 L787.2,611.7 L786.9,615.0 L786.7,618.4 L786.4,621.8 L786.1,625.2 L785.8,628.6 L785.6,632.0 L783.3,635.7 L781.1,639.4 L778.9,643.2 L776.6,646.9 L774.4,650.6 L772.2,654.3M857.4,391.7 L854.9,398.2 L852.4,404.6 L850.0,411.0 L847.5,417.4 L845.0,423.9 L842.5,430.3 L840.0,436.7 L837.0,442.6 L833.9,448.5 L830.7,454.3 L827.6,460.1 L824.4,465.9 L821.3,471.7 L818.1,477.5 L815.0,483.3 L813.8,487.2 L812.6,491.1 L811.4,495.1 L810.2,499.0 L809.0,502.9 L807.8,506.8 L806.7,510.7 L805.5,514.7 L804.3,518.6 L803.1,522.5 L801.9,526.4 L800.7,530.3 L800.6,534.4 L800.5,538.4 L800.5,542.5 L800.4,546.5 L800.3,550.5 L800.2,554.6 L800.1,558.6 L800.0,562.7 L800.0,566.7 L799.9,570.7 L799.8,574.8 L799.7,578.8 L799.6,582.9 L799.6,586.9 L799.5,590.9 L799.2,594.3 L798.8,597.7 L798.5,601.0 L798.2,604.4 L797.8,607.8 L797.5,611.2 L797.2,614.5 L796.9,617.9 L796.5,621.3 L796.2,624.7 L795.9,628.0 L795.5,631.4 L792.9,635.1 L790.2,638.8 L787.5,642.5 L784.8,646.2 L782.1,649.9 L779.4,653.6M870.2,391.8 L867.6,398.4 L864.9,405.0 L862.3,411.5 L859.6,418.1 L857.0,424.7 L854.3,431.2 L851.7,437.8 L848.4,443.7 L845.0,449.5 L841.6,455.3 L838.2,461.1 L834.8,466.9 L831.4,472.7 L828.0,478.5 L824.6,484.3 L823.4,488.1 L822.1,491.9 L820.8,495.7 L819.5,499.6 L818.3,503.4 L817.0,507.2 L815.7,511.0 L814.5,514.9 L813.2,518.7 L811.9,522.5 L810.6,526.4 L809.4,530.2 L809.3,534.2 L809.2,538.2 L809.2,542.2 L809.1,546.3 L809.0,550.3 L808.9,554.3 L808.9,558.3 L808.8,562.3 L808.7,566.4 L808.6,570.4 L808.6,574.4 L808.5,578.4 L808.4,582.4 L808.4,586.5 L808.3,590.5 L807.9,593.8 L807.5,597.2 L807.1,600.5 L806.8,603.9 L806.4,607.2 L806.0,610.6 L805.6,614.0 L805.2,617.3 L804.9,620.7 L804.5,624.0 L804.1,627.4 L803.7,630.7 L800.7,634.4 L797.6,638.1 L794.6,641.8 L791.5,645.5 L788.5,649.2 L785.4,652.8M880.0,392.0 L877.2,398.7 L874.4,405.3 L871.7,412.0 L868.9,418.7 L866.1,425.3 L863.3,432.0 L860.6,438.7 L857.1,444.6 L853.5,450.4 L849.9,456.2 L846.4,461.9 L842.8,467.7 L839.2,473.5 L835.6,479.2 L832.0,485.0 L830.7,488.8 L829.3,492.5 L828.0,496.2 L826.7,500.0 L825.3,503.8 L824.0,507.5 L822.7,511.2 L821.3,515.0 L820.0,518.8 L818.7,522.5 L817.3,526.2 L816.0,530.0 L815.9,534.0 L815.9,538.0 L815.8,542.0 L815.7,546.0 L815.7,550.0 L815.6,554.0 L815.5,558.0 L815.5,562.0 L815.4,566.0 L815.3,570.0 L815.3,574.0 L815.2,578.0 L815.1,582.0 L815.1,586.0 L815.0,590.0 L814.6,593.3 L814.2,596.7 L813.8,600.0 L813.3,603.3 L812.9,606.7 L812.5,610.0 L812.1,613.3 L811.7,616.7 L811.2,620.0 L810.8,623.3 L810.4,626.7 L810.0,630.0 L806.7,633.7 L803.3,637.3 L800.0,641.0 L796.7,644.7 L793.3,648.3 L790.0,652.0M666.0,396.0 L667.9,395.9 L669.9,395.8 L672.0,395.7 L674.3,395.5 L676.7,395.4 L679.3,395.3 L682.0,395.2 L684.9,395.0 L687.9,394.9 L691.0,394.8 L694.2,394.7 L697.6,394.5 L701.1,394.4 L704.7,394.3 L708.4,394.1 L712.2,394.0 L716.1,393.9 L720.2,393.8 L724.2,393.7 L728.4,393.5 L732.7,393.4 L737.0,393.3 L741.3,393.2 L745.8,393.1 L750.2,393.0 L754.7,392.9 L759.3,392.8 L763.8,392.7 L768.4,392.6 L773.0,392.5 L777.6,392.4 L782.2,392.3 L786.7,392.3 L791.3,392.2 L795.8,392.1 L800.2,392.1 L804.7,392.0 L809.0,392.0 L813.3,391.9 L817.6,391.9 L821.8,391.8 L825.8,391.8 L829.9,391.8 L833.8,391.7 L837.6,391.7 L841.3,391.7 L844.9,391.7 L848.4,391.7 L851.8,391.7 L855.0,391.7 L858.1,391.7 L861.1,391.7 L864.0,391.8 L866.7,391.8 L869.3,391.8 L871.7,391.8 L874.0,391.9 L876.1,391.9 L878.1,392.0 L880.0,392.0M666.0,416.1 L667.7,416.2 L669.6,416.2 L671.6,416.2 L673.8,416.3 L676.0,416.3 L678.5,416.4 L681.0,416.4 L683.7,416.5 L686.5,416.6 L689.4,416.7 L692.4,416.8 L695.6,416.9 L698.8,417.0 L702.2,417.1 L705.7,417.2 L709.2,417.3 L712.9,417.5 L716.6,417.6 L720.5,417.7 L724.4,417.9 L728.3,418.0 L732.4,418.2 L736.5,418.4 L740.6,418.5 L744.8,418.7 L749.0,418.9 L753.2,419.1 L757.5,419.3 L761.8,419.5 L766.1,419.7 L770.3,419.9 L774.6,420.1 L778.9,420.3 L783.1,420.5 L787.3,420.7 L791.5,420.9 L795.7,421.1 L799.7,421.3 L803.8,421.5 L807.7,421.7 L811.6,421.9 L815.5,422.1 L819.2,422.3 L822.9,422.5 L826.4,422.7 L829.9,422.9 L833.3,423.1 L836.5,423.3 L839.7,423.5 L842.7,423.7 L845.7,423.9 L848.4,424.1 L851.1,424.3 L853.7,424.4 L856.1,424.6 L858.3,424.8 L860.5,424.9 L862.5,425.1 L864.4,425.2 L866.1,425.3M667.8,441.2 L669.4,441.2 L671.1,441.4 L672.9,441.5 L674.9,441.6 L676.9,441.7 L679.1,441.9 L681.4,442.0 L683.9,442.2 L686.4,442.4 L689.1,442.6 L691.8,442.8 L694.7,443.0 L697.7,443.2 L700.7,443.4 L703.9,443.7 L707.1,443.9 L710.5,444.2 L713.9,444.4 L717.4,444.7 L720.9,445.0 L724.5,445.2 L728.2,445.5 L731.9,445.8 L735.7,446.1 L739.5,446.4 L743.3,446.7 L747.2,447.0 L751.1,447.3 L755.0,447.7 L758.9,448.0 L762.8,448.3 L766.7,448.6 L770.5,449.0 L774.4,449.3 L778.2,449.6 L782.1,449.9 L785.8,450.3 L789.5,450.6 L793.2,450.9 L796.8,451.2 L800.4,451.5 L803.9,451.8 L807.3,452.1 L810.6,452.4 L813.8,452.7 L817.0,453.0 L820.1,453.3 L823.0,453.5 L825.9,453.8 L828.7,454.1 L831.3,454.3 L833.9,454.6 L836.3,454.8 L838.6,455.0 L840.8,455.2 L842.9,455.4 L844.8,455.6 L846.7,455.8 L848.4,456.0 L849.9,456.2M671.0,470.0 L672.4,470.1 L673.9,470.2 L675.5,470.4 L677.2,470.5 L679.1,470.7 L681.0,470.9 L683.1,471.0 L685.2,471.2 L687.5,471.4 L689.8,471.6 L692.3,471.8 L694.8,472.1 L697.4,472.3 L700.1,472.5 L702.9,472.8 L705.8,473.1 L708.7,473.3 L711.7,473.6 L714.8,473.9 L718.0,474.2 L721.2,474.4 L724.4,474.7 L727.7,475.0 L731.0,475.4 L734.4,475.7 L737.8,476.0 L741.2,476.3 L744.6,476.6 L748.1,476.9 L751.5,477.2 L754.9,477.6 L758.4,477.9 L761.8,478.2 L765.2,478.5 L768.6,478.9 L772.0,479.2 L775.3,479.5 L778.6,479.8 L781.8,480.1 L785.0,480.4 L788.2,480.7 L791.3,481.0 L794.3,481.3 L797.2,481.6 L800.1,481.8 L802.9,482.1 L805.6,482.4 L808.2,482.6 L810.7,482.9 L813.2,483.1 L815.5,483.4 L817.8,483.6 L819.9,483.8 L822.0,484.0 L823.9,484.2 L825.8,484.4 L827.5,484.5 L829.1,484.7 L830.6,484.9 L832.0,485.0M671.0,495.0 L672.3,495.1 L673.8,495.2 L675.3,495.3 L677.0,495.4 L678.7,495.5 L680.6,495.6 L682.6,495.7 L684.6,495.8 L686.8,496.0 L689.0,496.1 L691.4,496.2 L693.8,496.4 L696.3,496.5 L698.9,496.7 L701.6,496.9 L704.3,497.0 L707.2,497.2 L710.1,497.3 L713.0,497.5 L716.0,497.7 L719.1,497.9 L722.2,498.1 L725.3,498.2 L728.5,498.4 L731.8,498.6 L735.0,498.8 L738.3,499.0 L741.6,499.2 L744.9,499.4 L748.2,499.5 L751.5,499.7 L754.8,499.9 L758.1,500.1 L761.3,500.3 L764.6,500.5 L767.8,500.6 L771.0,500.8 L774.1,501.0 L777.3,501.2 L780.3,501.3 L783.3,501.5 L786.3,501.7 L789.2,501.8 L792.0,502.0 L794.7,502.1 L797.4,502.3 L800.0,502.4 L802.5,502.6 L805.0,502.7 L807.3,502.8 L809.6,502.9 L811.7,503.0 L813.8,503.2 L815.7,503.3 L817.6,503.4 L819.3,503.4 L821.0,503.5 L822.5,503.6 L824.0,503.7 L825.3,503.8M671.0,520.0 L672.3,520.1 L673.7,520.1 L675.1,520.2 L676.7,520.2 L678.4,520.3 L680.2,520.3 L682.1,520.4 L684.0,520.5 L686.1,520.5 L688.3,520.6 L690.5,520.6 L692.8,520.7 L695.2,520.8 L697.7,520.8 L700.3,520.9 L702.9,521.0 L705.6,521.0 L708.4,521.1 L711.2,521.2 L714.1,521.2 L717.0,521.3 L720.0,521.4 L723.0,521.4 L726.0,521.5 L729.1,521.5 L732.2,521.6 L735.4,521.7 L738.5,521.7 L741.7,521.8 L744.8,521.8 L748.0,521.9 L751.2,521.9 L754.3,522.0 L757.4,522.0 L760.5,522.1 L763.6,522.1 L766.7,522.2 L769.7,522.2 L772.7,522.2 L775.6,522.3 L778.5,522.3 L781.3,522.3 L784.1,522.4 L786.8,522.4 L789.4,522.4 L792.0,522.4 L794.4,522.5 L796.8,522.5 L799.2,522.5 L801.4,522.5 L803.6,522.5 L805.6,522.5 L807.6,522.5 L809.5,522.5 L811.3,522.5 L812.9,522.5 L814.5,522.5 L816.0,522.5 L817.4,522.5 L818.7,522.5M670.4,542.0 L671.7,542.1 L673.0,542.1 L674.5,542.2 L676.0,542.2 L677.7,542.3 L679.4,542.3 L681.3,542.4 L683.2,542.4 L685.3,542.5 L687.4,542.5 L689.6,542.5 L691.9,542.6 L694.3,542.6 L696.7,542.7 L699.2,542.7 L701.8,542.7 L704.5,542.8 L707.2,542.8 L710.0,542.8 L712.8,542.9 L715.7,542.9 L718.6,542.9 L721.6,542.9 L724.6,543.0 L727.6,543.0 L730.7,543.0 L733.8,543.0 L736.9,543.0 L740.0,543.0 L743.1,543.0 L746.2,543.0 L749.3,543.0 L752.4,543.0 L755.5,543.0 L758.6,543.0 L761.6,543.0 L764.6,542.9 L767.6,542.9 L770.5,542.9 L773.4,542.9 L776.2,542.8 L779.0,542.8 L781.7,542.8 L784.4,542.7 L787.0,542.7 L789.5,542.7 L791.9,542.6 L794.3,542.6 L796.6,542.5 L798.8,542.5 L800.9,542.5 L803.0,542.4 L804.9,542.4 L806.8,542.3 L808.5,542.3 L810.2,542.2 L811.7,542.2 L813.2,542.1 L814.5,542.1 L815.8,542.0M669.4,562.0 L670.7,562.1 L672.0,562.1 L673.5,562.2 L675.1,562.3 L676.7,562.4 L678.5,562.4 L680.3,562.5 L682.3,562.6 L684.3,562.6 L686.5,562.7 L688.7,562.8 L691.0,562.8 L693.4,562.9 L695.8,562.9 L698.4,563.0 L701.0,563.1 L703.6,563.1 L706.4,563.1 L709.2,563.2 L712.0,563.2 L714.9,563.3 L717.8,563.3 L720.8,563.3 L723.8,563.3 L726.9,563.4 L730.0,563.4 L733.1,563.4 L736.2,563.4 L739.3,563.4 L742.4,563.4 L745.6,563.4 L748.7,563.4 L751.8,563.4 L754.9,563.4 L758.0,563.4 L761.0,563.3 L764.0,563.3 L767.0,563.3 L770.0,563.3 L772.9,563.2 L775.7,563.2 L778.5,563.1 L781.2,563.1 L783.9,563.1 L786.5,563.0 L789.0,562.9 L791.5,562.9 L793.9,562.8 L796.2,562.8 L798.4,562.7 L800.5,562.6 L802.6,562.6 L804.5,562.5 L806.4,562.4 L808.1,562.4 L809.8,562.3 L811.4,562.2 L812.8,562.1 L814.2,562.1 L815.5,562.0M668.4,582.0 L669.7,582.1 L671.0,582.2 L672.5,582.3 L674.1,582.4 L675.8,582.5 L677.5,582.6 L679.4,582.7 L681.4,582.7 L683.4,582.8 L685.5,582.9 L687.8,583.0 L690.1,583.1 L692.5,583.2 L694.9,583.2 L697.5,583.3 L700.1,583.4 L702.8,583.4 L705.5,583.5 L708.3,583.5 L711.2,583.6 L714.1,583.6 L717.1,583.7 L720.1,583.7 L723.1,583.7 L726.2,583.8 L729.2,583.8 L732.4,583.8 L735.5,583.8 L738.6,583.8 L741.8,583.8 L744.9,583.8 L748.0,583.8 L751.2,583.8 L754.3,583.8 L757.4,583.8 L760.4,583.7 L763.5,583.7 L766.5,583.7 L769.4,583.6 L772.3,583.6 L775.2,583.5 L778.0,583.5 L780.7,583.4 L783.4,583.4 L786.0,583.3 L788.6,583.2 L791.1,583.2 L793.5,583.1 L795.8,583.0 L798.0,582.9 L800.1,582.8 L802.2,582.7 L804.1,582.7 L806.0,582.6 L807.8,582.5 L809.4,582.4 L811.0,582.3 L812.5,582.2 L813.9,582.1 L815.1,582.0M669.2,600.0 L670.5,600.1 L671.9,600.2 L673.3,600.4 L674.9,600.5 L676.5,600.6 L678.2,600.7 L680.1,600.8 L682.0,600.9 L684.0,601.0 L686.1,601.1 L688.3,601.2 L690.6,601.3 L693.0,601.4 L695.4,601.5 L697.9,601.6 L700.5,601.7 L703.1,601.7 L705.8,601.8 L708.6,601.9 L711.4,601.9 L714.3,602.0 L717.2,602.1 L720.1,602.1 L723.1,602.1 L726.1,602.2 L729.2,602.2 L732.2,602.2 L735.3,602.2 L738.4,602.2 L741.5,602.2 L744.6,602.2 L747.7,602.2 L750.8,602.2 L753.8,602.2 L756.9,602.2 L759.9,602.1 L762.9,602.1 L765.8,602.1 L768.7,602.0 L771.6,601.9 L774.4,601.9 L777.2,601.8 L779.9,601.7 L782.5,601.7 L785.1,601.6 L787.6,601.5 L790.0,601.4 L792.4,601.3 L794.7,601.2 L796.9,601.1 L799.0,601.0 L801.0,600.9 L802.9,600.8 L804.8,600.7 L806.5,600.6 L808.1,600.5 L809.7,600.4 L811.1,600.2 L812.5,600.1 L813.8,600.0M671.3,616.7 L672.6,616.8 L673.9,616.9 L675.3,617.1 L676.8,617.2 L678.4,617.4 L680.1,617.5 L681.8,617.6 L683.7,617.8 L685.7,617.9 L687.7,618.0 L689.9,618.1 L692.1,618.2 L694.4,618.3 L696.7,618.5 L699.2,618.6 L701.7,618.6 L704.2,618.7 L706.8,618.8 L709.5,618.9 L712.3,619.0 L715.0,619.0 L717.9,619.1 L720.7,619.2 L723.6,619.2 L726.6,619.2 L729.5,619.3 L732.5,619.3 L735.5,619.3 L738.5,619.3 L741.5,619.3 L744.5,619.3 L747.5,619.3 L750.5,619.3 L753.5,619.3 L756.4,619.2 L759.4,619.2 L762.3,619.2 L765.1,619.1 L768.0,619.0 L770.7,619.0 L773.5,618.9 L776.2,618.8 L778.8,618.7 L781.3,618.6 L783.8,618.6 L786.3,618.5 L788.6,618.3 L790.9,618.2 L793.1,618.1 L795.3,618.0 L797.3,617.9 L799.3,617.8 L801.2,617.6 L802.9,617.5 L804.6,617.4 L806.2,617.2 L807.7,617.1 L809.1,616.9 L810.4,616.8 L811.7,616.7M675.8,633.7 L677.0,633.8 L678.2,634.0 L679.5,634.1 L680.9,634.3 L682.4,634.5 L684.0,634.6 L685.6,634.8 L687.4,634.9 L689.2,635.1 L691.1,635.2 L693.1,635.3 L695.2,635.5 L697.3,635.6 L699.5,635.7 L701.8,635.8 L704.1,636.0 L706.5,636.1 L708.9,636.2 L711.4,636.3 L714.0,636.3 L716.6,636.4 L719.2,636.5 L721.9,636.5 L724.6,636.6 L727.3,636.6 L730.1,636.7 L732.9,636.7 L735.7,636.7 L738.4,636.7 L741.2,636.8 L744.1,636.7 L746.8,636.7 L749.6,636.7 L752.4,636.7 L755.2,636.6 L757.9,636.6 L760.6,636.5 L763.3,636.5 L765.9,636.4 L768.5,636.3 L771.1,636.3 L773.6,636.2 L776.0,636.1 L778.4,636.0 L780.7,635.8 L783.0,635.7 L785.2,635.6 L787.3,635.5 L789.4,635.3 L791.4,635.2 L793.3,635.1 L795.1,634.9 L796.9,634.8 L798.5,634.6 L800.1,634.5 L801.6,634.3 L803.0,634.1 L804.3,634.0 L805.5,633.8 L806.7,633.7M690.0,652.0 L690.9,652.2 L691.8,652.4 L692.8,652.5 L693.9,652.7 L695.0,652.9 L696.2,653.1 L697.5,653.3 L698.8,653.4 L700.2,653.6 L701.7,653.8 L703.2,653.9 L704.8,654.1 L706.4,654.2 L708.1,654.3 L709.8,654.5 L711.6,654.6 L713.4,654.7 L715.3,654.8 L717.2,654.9 L719.2,655.0 L721.2,655.1 L723.2,655.2 L725.2,655.3 L727.3,655.3 L729.4,655.4 L731.5,655.4 L733.6,655.5 L735.7,655.5 L737.9,655.5 L740.0,655.5 L742.1,655.5 L744.3,655.5 L746.4,655.5 L748.5,655.4 L750.6,655.4 L752.7,655.3 L754.8,655.3 L756.8,655.2 L758.8,655.1 L760.8,655.0 L762.8,654.9 L764.7,654.8 L766.6,654.7 L768.4,654.6 L770.2,654.5 L771.9,654.3 L773.6,654.2 L775.2,654.1 L776.8,653.9 L778.3,653.8 L779.8,653.6 L781.2,653.4 L782.5,653.3 L783.8,653.1 L785.0,652.9 L786.1,652.7 L787.2,652.5 L788.2,652.4 L789.1,652.2 L790.0,652.0" fill="none" stroke="#121214" stroke-width="1.60" opacity="0.9"/>
<path d="M668.5,404.1h3.8v3.8h-3.8zM668.3,425.0h3.8v3.8h-3.8zM671.1,453.9h3.8v3.8h-3.8zM672.4,480.8h3.8v3.8h-3.8zM672.3,505.8h3.8v3.8h-3.8zM672.1,530.2h3.8v3.8h-3.8zM671.1,550.2h3.8v3.8h-3.8zM670.1,570.3h3.8v3.8h-3.8zM669.4,590.0h3.8v3.8h-3.8zM671.4,606.7h3.8v3.8h-3.8zM673.4,623.4h3.8v3.8h-3.8zM683.4,641.3h3.8v3.8h-3.8zM679.4,403.9h3.8v3.8h-3.8zM678.5,425.6h3.8v3.8h-3.8zM680.2,454.6h3.8v3.8h-3.8zM680.8,481.5h3.8v3.8h-3.8zM680.3,506.1h3.8v3.8h-3.8zM679.7,530.4h3.8v3.8h-3.8zM678.8,550.5h3.8v3.8h-3.8zM677.8,570.7h3.8v3.8h-3.8zM677.1,590.5h3.8v3.8h-3.8zM678.9,607.3h3.8v3.8h-3.8zM680.7,624.1h3.8v3.8h-3.8zM689.6,642.1h3.8v3.8h-3.8zM693.2,403.8h3.8v3.8h-3.8zM691.4,426.4h3.8v3.8h-3.8zM691.6,455.5h3.8v3.8h-3.8zM691.2,482.2h3.8v3.8h-3.8zM690.3,506.6h3.8v3.8h-3.8zM689.4,530.5h3.8v3.8h-3.8zM688.5,550.8h3.8v3.8h-3.8zM687.6,571.0h3.8v3.8h-3.8zM686.9,590.9h3.8v3.8h-3.8zM688.4,607.8h3.8v3.8h-3.8zM689.9,624.7h3.8v3.8h-3.8zM697.2,642.8h3.8v3.8h-3.8zM709.4,403.8h3.8v3.8h-3.8zM706.5,427.5h3.8v3.8h-3.8zM705.0,456.6h3.8v3.8h-3.8zM703.6,483.2h3.8v3.8h-3.8zM702.1,507.1h3.8v3.8h-3.8zM700.7,530.7h3.8v3.8h-3.8zM699.9,551.0h3.8v3.8h-3.8zM699.0,571.3h3.8v3.8h-3.8zM698.4,591.3h3.8v3.8h-3.8zM699.6,608.3h3.8v3.8h-3.8zM700.7,625.3h3.8v3.8h-3.8zM706.3,643.4h3.8v3.8h-3.8zM727.6,403.8h3.8v3.8h-3.8zM723.4,428.7h3.8v3.8h-3.8zM720.2,457.9h3.8v3.8h-3.8zM717.5,484.2h3.8v3.8h-3.8zM715.4,507.7h3.8v3.8h-3.8zM713.5,530.8h3.8v3.8h-3.8zM712.7,551.2h3.8v3.8h-3.8zM711.9,571.5h3.8v3.8h-3.8zM711.3,591.6h3.8v3.8h-3.8zM712.1,608.6h3.8v3.8h-3.8zM712.9,625.6h3.8v3.8h-3.8zM716.4,643.8h3.8v3.8h-3.8zM747.3,404.0h3.8v3.8h-3.8zM741.7,430.0h3.8v3.8h-3.8zM736.4,459.3h3.8v3.8h-3.8zM732.4,485.3h3.8v3.8h-3.8zM729.8,508.2h3.8v3.8h-3.8zM727.3,530.9h3.8v3.8h-3.8zM726.5,551.3h3.8v3.8h-3.8zM725.8,571.7h3.8v3.8h-3.8zM725.2,591.7h3.8v3.8h-3.8zM725.6,608.8h3.8v3.8h-3.8zM726.0,625.9h3.8v3.8h-3.8zM727.4,644.1h3.8v3.8h-3.8zM767.6,404.2h3.8v3.8h-3.8zM760.7,431.5h3.8v3.8h-3.8zM753.3,460.7h3.8v3.8h-3.8zM747.9,486.5h3.8v3.8h-3.8zM744.6,508.8h3.8v3.8h-3.8zM741.5,530.9h3.8v3.8h-3.8zM740.9,551.3h3.8v3.8h-3.8zM740.2,571.7h3.8v3.8h-3.8zM739.6,591.8h3.8v3.8h-3.8zM739.6,608.9h3.8v3.8h-3.8zM739.6,626.0h3.8v3.8h-3.8zM738.7,644.2h3.8v3.8h-3.8zM788.0,404.5h3.8v3.8h-3.8zM779.6,433.0h3.8v3.8h-3.8zM770.2,462.2h3.8v3.8h-3.8zM763.4,487.7h3.8v3.8h-3.8zM759.4,509.3h3.8v3.8h-3.8zM755.8,530.9h3.8v3.8h-3.8zM755.2,551.3h3.8v3.8h-3.8zM754.6,571.7h3.8v3.8h-3.8zM754.0,591.7h3.8v3.8h-3.8zM753.6,608.8h3.8v3.8h-3.8zM753.2,625.9h3.8v3.8h-3.8zM750.1,644.1h3.8v3.8h-3.8zM807.6,404.8h3.8v3.8h-3.8zM797.9,434.5h3.8v3.8h-3.8zM786.4,463.7h3.8v3.8h-3.8zM778.4,488.8h3.8v3.8h-3.8zM773.8,509.8h3.8v3.8h-3.8zM769.5,530.8h3.8v3.8h-3.8zM769.0,551.2h3.8v3.8h-3.8zM768.5,571.5h3.8v3.8h-3.8zM767.9,591.6h3.8v3.8h-3.8zM767.1,608.6h3.8v3.8h-3.8zM766.3,625.6h3.8v3.8h-3.8zM761.0,643.8h3.8v3.8h-3.8zM825.8,405.2h3.8v3.8h-3.8zM814.8,435.9h3.8v3.8h-3.8zM801.5,465.1h3.8v3.8h-3.8zM792.3,489.8h3.8v3.8h-3.8zM787.1,510.3h3.8v3.8h-3.8zM782.3,530.7h3.8v3.8h-3.8zM781.8,551.0h3.8v3.8h-3.8zM781.4,571.3h3.8v3.8h-3.8zM780.8,591.3h3.8v3.8h-3.8zM779.6,608.3h3.8v3.8h-3.8zM778.5,625.3h3.8v3.8h-3.8zM771.2,643.4h3.8v3.8h-3.8zM842.1,405.7h3.8v3.8h-3.8zM830.0,437.2h3.8v3.8h-3.8zM815.0,466.3h3.8v3.8h-3.8zM804.6,490.8h3.8v3.8h-3.8zM798.9,510.6h3.8v3.8h-3.8zM793.7,530.5h3.8v3.8h-3.8zM793.3,550.8h3.8v3.8h-3.8zM792.8,571.0h3.8v3.8h-3.8zM792.3,590.9h3.8v3.8h-3.8zM790.8,607.8h3.8v3.8h-3.8zM789.3,624.7h3.8v3.8h-3.8zM780.2,642.8h3.8v3.8h-3.8zM855.8,406.1h3.8v3.8h-3.8zM842.8,438.4h3.8v3.8h-3.8zM826.4,467.4h3.8v3.8h-3.8zM815.1,491.6h3.8v3.8h-3.8zM808.9,510.9h3.8v3.8h-3.8zM803.3,530.4h3.8v3.8h-3.8zM803.0,550.5h3.8v3.8h-3.8zM802.6,570.7h3.8v3.8h-3.8zM802.1,590.5h3.8v3.8h-3.8zM800.3,607.3h3.8v3.8h-3.8zM798.5,624.1h3.8v3.8h-3.8zM787.9,642.1h3.8v3.8h-3.8zM866.8,406.6h3.8v3.8h-3.8zM853.0,439.4h3.8v3.8h-3.8zM835.5,468.3h3.8v3.8h-3.8zM823.4,492.2h3.8v3.8h-3.8zM816.9,511.2h3.8v3.8h-3.8zM811.0,530.2h3.8v3.8h-3.8zM810.7,550.2h3.8v3.8h-3.8zM810.3,570.3h3.8v3.8h-3.8zM809.8,590.0h3.8v3.8h-3.8zM807.8,606.7h3.8v3.8h-3.8zM805.8,623.4h3.8v3.8h-3.8zM794.0,641.3h3.8v3.8h-3.8z" fill="#121214"/>
<ellipse cx="0" cy="0" rx="1" ry="1" fill="url(#gNose)" transform="translate(692 436) scale(27 27)"/><circle cx="692" cy="436" r="8" fill="none" stroke="#0c0c0e" stroke-width="1.6" stroke-dasharray="3,2.5"/><circle cx="692" cy="436" r="13" fill="none" stroke="#0c0c0e" stroke-width="1.6" stroke-dasharray="3,2.5"/><circle cx="692" cy="436" r="18" fill="none" stroke="#0c0c0e" stroke-width="1.6" stroke-dasharray="3,2.5"/><circle cx="692" cy="436" r="23" fill="none" stroke="#0c0c0e" stroke-width="1.6" stroke-dasharray="3,2.5"/><ellipse cx="0" cy="0" rx="1" ry="1" fill="url(#gMouth)" transform="translate(703 622) scale(28 26)"/><circle cx="703" cy="622" r="8" fill="none" stroke="#0c0c0e" stroke-width="1.6" stroke-dasharray="3,2.5"/><circle cx="703" cy="622" r="13" fill="none" stroke="#0c0c0e" stroke-width="1.6" stroke-dasharray="3,2.5"/><circle cx="703" cy="622" r="18" fill="none" stroke="#0c0c0e" stroke-width="1.6" stroke-dasharray="3,2.5"/><circle cx="703" cy="622" r="23" fill="none" stroke="#0c0c0e" stroke-width="1.6" stroke-dasharray="3,2.5"/>
</g>
<g clip-path="url(#cOr)"><use href="#shade"/><path d="M765,411 L790,395 L822,378 L855,362 C900,364 960,372 1000,377 C1025,380 1045,384 1062,390  C1052.8,393.3 1027.5,395.0 1017.0,400.0 C1006.5,405.0 1006.5,414.5 997.0,422.0 C987.5,429.5 974.5,437.8 960.0,445.0 C945.5,452.2 926.7,459.0 910.0,465.0 C893.3,471.0 873.3,476.0 860.0,481.0 C846.7,486.0 835.0,492.7 830.0,495.0 L845,478 L866,457 L860,446 L815,425 Z" fill="#e07830" opacity="0.42"/>
<path d="M833.2,359.3 L829.7,361.0 L826.1,362.7 L822.6,364.4 L819.1,366.1 L815.6,367.8 L812.1,369.5 L808.6,371.2 L805.1,372.9 L801.6,374.6 L798.1,376.3 L794.7,378.0 L791.2,379.7 L787.7,381.4 L784.2,383.1 L780.7,384.8 L777.2,386.5 L773.7,388.2 L770.2,389.9 L766.8,391.6 L763.3,393.3 L759.8,395.0 L756.3,396.7 L752.9,398.4 L749.4,400.1 L745.9,401.8 L742.4,403.5 L739.0,405.2 L735.5,406.9 L732.0,408.6 L728.6,410.3 L725.1,412.0 L721.6,413.7 L718.2,415.4 L714.7,417.1 L711.3,418.8 L707.8,420.6 L704.3,422.3 L700.9,424.0 L697.4,425.7 L694.0,427.4 L690.5,429.1 L687.1,430.8 L683.6,432.5 L680.2,434.3M855.0,362.0 L851.5,363.9 L847.9,365.8 L844.4,367.6 L840.9,369.5 L837.3,371.4 L833.8,373.3 L830.3,375.1 L826.7,377.0 L823.2,378.9 L819.7,380.8 L816.2,382.7 L812.6,384.5 L809.1,386.4 L805.6,388.3 L802.0,390.2 L798.5,392.0 L795.0,393.9 L791.4,395.8 L787.9,397.7 L784.4,399.6 L780.8,401.4 L777.3,403.3 L773.8,405.2 L770.2,407.1 L766.7,408.9 L763.2,410.8 L759.6,412.7 L756.1,414.6 L752.6,416.5 L749.0,418.3 L745.5,420.2 L742.0,422.1 L738.5,424.0 L734.9,425.8 L731.4,427.7 L727.9,429.6 L724.3,431.5 L720.8,433.4 L717.3,435.2 L713.7,437.1 L710.2,439.0 L706.7,440.9 L703.1,442.7 L699.6,444.6M876.8,364.7 L873.4,367.0 L870.0,369.2 L866.5,371.5 L863.1,373.8 L859.7,376.0 L856.2,378.3 L852.8,380.6 L849.3,382.9 L845.9,385.1 L842.4,387.4 L839.0,389.7 L835.5,392.0 L832.1,394.2 L828.6,396.5 L825.2,398.8 L821.7,401.0 L818.3,403.3 L814.8,405.6 L811.3,407.8 L807.9,410.1 L804.4,412.4 L801.0,414.6 L797.5,416.9 L794.0,419.2 L790.6,421.4 L787.1,423.7 L783.6,426.0 L780.1,428.2 L776.7,430.5 L773.2,432.8 L769.7,435.0 L766.2,437.3 L762.8,439.5 L759.3,441.8 L755.8,444.1 L752.3,446.3 L748.8,448.6 L745.3,450.8 L741.8,453.1 L738.3,455.4 L734.9,457.6 L731.4,459.9 L727.9,462.1 L724.4,464.4M898.7,367.4 L895.4,370.0 L892.0,372.7 L888.7,375.3 L885.4,378.0 L882.0,380.7 L878.7,383.3 L875.4,386.0 L872.0,388.6 L868.7,391.3 L865.3,394.0 L862.0,396.6 L858.6,399.3 L855.3,401.9 L851.9,404.6 L848.5,407.2 L845.2,409.9 L841.8,412.5 L838.4,415.2 L835.0,417.9 L831.7,420.5 L828.3,423.2 L824.9,425.8 L821.5,428.4 L818.1,431.1 L814.7,433.7 L811.3,436.4 L807.9,439.0 L804.5,441.7 L801.1,444.3 L797.7,447.0 L794.3,449.6 L790.9,452.2 L787.5,454.9 L784.1,457.5 L780.6,460.1 L777.2,462.8 L773.8,465.4 L770.3,468.0 L766.9,470.7 L763.5,473.3 L760.0,475.9 L756.6,478.5 L753.2,481.2 L749.7,483.8M920.5,370.0 L917.3,373.1 L914.1,376.1 L910.9,379.2 L907.7,382.2 L904.5,385.2 L901.3,388.3 L898.0,391.3 L894.8,394.4 L891.6,397.4 L888.3,400.4 L885.1,403.5 L881.8,406.5 L878.6,409.5 L875.3,412.6 L872.1,415.6 L868.8,418.6 L865.5,421.6 L862.3,424.7 L859.0,427.7 L855.7,430.7 L852.4,433.7 L849.1,436.8 L845.8,439.8 L842.5,442.8 L839.2,445.8 L835.9,448.8 L832.6,451.9 L829.3,454.9 L825.9,457.9 L822.6,460.9 L819.3,463.9 L815.9,466.9 L812.6,469.9 L809.3,472.9 L805.9,475.9 L802.6,478.9 L799.2,481.9 L795.8,484.9 L792.5,487.9 L789.1,490.9 L785.7,493.9 L782.4,496.8 L779.0,499.8 L775.6,502.8M942.3,372.7 L939.3,376.1 L936.2,379.5 L933.1,383.0 L930.1,386.4 L927.0,389.8 L923.9,393.2 L920.8,396.6 L917.7,400.0 L914.6,403.4 L911.5,406.8 L908.3,410.2 L905.2,413.6 L902.1,417.0 L898.9,420.4 L895.8,423.8 L892.6,427.2 L889.5,430.6 L886.3,434.0 L883.1,437.4 L880.0,440.8 L876.8,444.1 L873.6,447.5 L870.4,450.9 L867.2,454.3 L864.0,457.7 L860.8,461.0 L857.6,464.4 L854.3,467.8 L851.1,471.2 L847.9,474.5 L844.6,477.9 L841.4,481.3 L838.1,484.6 L834.9,488.0 L831.6,491.3 L828.3,494.7 L825.1,498.0 L821.8,501.4 L818.5,504.7 L815.2,508.1 L811.9,511.4 L808.6,514.8 L805.3,518.1 L802.0,521.4M964.2,375.4 L961.3,379.2 L958.3,382.9 L955.4,386.7 L952.5,390.5 L949.5,394.3 L946.6,398.0 L943.6,401.8 L940.6,405.6 L937.7,409.3 L934.7,413.1 L931.7,416.8 L928.7,420.6 L925.7,424.3 L922.7,428.1 L919.7,431.9 L916.6,435.6 L913.6,439.4 L910.6,443.1 L907.5,446.8 L904.4,450.6 L901.4,454.3 L898.3,458.1 L895.2,461.8 L892.1,465.5 L889.0,469.3 L885.9,473.0 L882.8,476.7 L879.7,480.4 L876.6,484.2 L873.5,487.9 L870.3,491.6 L867.2,495.3 L864.0,499.0 L860.9,502.7 L857.7,506.4 L854.5,510.1 L851.3,513.8 L848.1,517.5 L845.0,521.2 L841.8,524.9 L838.5,528.6 L835.3,532.2 L832.1,535.9 L828.9,539.6M986.0,378.1 L983.3,382.2 L980.5,386.3 L977.7,390.4 L974.9,394.6 L972.1,398.7 L969.3,402.8 L966.5,406.9 L963.7,411.0 L960.9,415.1 L958.0,419.2 L955.2,423.3 L952.3,427.4 L949.5,431.5 L946.6,435.6 L943.7,439.7 L940.8,443.8 L937.9,447.9 L935.0,452.0 L932.1,456.1 L929.1,460.2 L926.2,464.3 L923.3,468.4 L920.3,472.4 L917.3,476.5 L914.4,480.6 L911.4,484.7 L908.4,488.7 L905.4,492.8 L902.4,496.8 L899.4,500.9 L896.3,504.9 L893.3,509.0 L890.3,513.0 L887.2,517.1 L884.1,521.1 L881.1,525.2 L878.0,529.2 L874.9,533.2 L871.8,537.2 L868.7,541.3 L865.6,545.3 L862.5,549.3 L859.4,553.3 L856.2,557.3M1007.9,380.8 L1005.3,385.2 L1002.7,389.7 L1000.1,394.1 L997.4,398.6 L994.8,403.0 L992.2,407.5 L989.5,411.9 L986.8,416.4 L984.2,420.8 L981.5,425.3 L978.8,429.7 L976.1,434.2 L973.4,438.6 L970.6,443.0 L967.9,447.5 L965.1,451.9 L962.4,456.3 L959.6,460.7 L956.8,465.2 L954.0,469.6 L951.2,474.0 L948.4,478.4 L945.6,482.8 L942.8,487.2 L939.9,491.6 L937.1,496.0 L934.2,500.4 L931.3,504.8 L928.5,509.2 L925.6,513.6 L922.7,518.0 L919.7,522.3 L916.8,526.7 L913.9,531.1 L910.9,535.4 L908.0,539.8 L905.0,544.1 L902.1,548.5 L899.1,552.8 L896.1,557.2 L893.1,561.5 L890.1,565.8 L887.1,570.2 L884.0,574.5M1029.7,383.4 L1027.3,388.2 L1024.8,393.0 L1022.4,397.8 L1020.0,402.6 L1017.5,407.4 L1015.0,412.1 L1012.5,416.9 L1010.0,421.7 L1007.5,426.4 L1005.0,431.2 L1002.5,436.0 L999.9,440.7 L997.4,445.5 L994.8,450.3 L992.2,455.0 L989.6,459.8 L987.0,464.5 L984.4,469.3 L981.8,474.0 L979.1,478.7 L976.5,483.5 L973.8,488.2 L971.1,492.9 L968.4,497.6 L965.7,502.4 L963.0,507.1 L960.3,511.8 L957.5,516.5 L954.8,521.2 L952.0,525.9 L949.3,530.6 L946.5,535.3 L943.7,540.0 L940.9,544.6 L938.1,549.3 L935.2,554.0 L932.4,558.6 L929.6,563.3 L926.7,568.0 L923.8,572.6 L920.9,577.2 L918.0,581.9 L915.1,586.5 L912.2,591.1M1051.5,386.1 L1049.3,391.2 L1047.1,396.3 L1044.8,401.4 L1042.5,406.5 L1040.2,411.6 L1037.9,416.7 L1035.6,421.8 L1033.3,426.9 L1031.0,431.9 L1028.6,437.0 L1026.3,442.1 L1023.9,447.2 L1021.5,452.2 L1019.1,457.3 L1016.7,462.4 L1014.2,467.4 L1011.8,472.5 L1009.3,477.5 L1006.8,482.6 L1004.4,487.6 L1001.9,492.7 L999.3,497.7 L996.8,502.7 L994.3,507.8 L991.7,512.8 L989.2,517.8 L986.6,522.8 L984.0,527.8 L981.4,532.8 L978.8,537.8 L976.1,542.8 L973.5,547.8 L970.8,552.8 L968.2,557.8 L965.5,562.8 L962.8,567.7 L960.1,572.7 L957.4,577.6 L954.6,582.6 L951.9,587.5 L949.1,592.5 L946.4,597.4 L943.6,602.3 L940.8,607.2M1073.4,388.8 L1071.3,394.2 L1069.3,399.6 L1067.2,405.0 L1065.1,410.4 L1063.0,415.8 L1060.9,421.2 L1058.8,426.6 L1056.6,431.9 L1054.5,437.3 L1052.3,442.7 L1050.1,448.1 L1047.9,453.4 L1045.7,458.8 L1043.5,464.2 L1041.2,469.5 L1039.0,474.9 L1036.7,480.2 L1034.4,485.6 L1032.1,490.9 L1029.8,496.3 L1027.4,501.6 L1025.1,506.9 L1022.7,512.2 L1020.3,517.6 L1017.9,522.9 L1015.5,528.2 L1013.1,533.5 L1010.7,538.8 L1008.2,544.1 L1005.7,549.4 L1003.2,554.7 L1000.7,559.9 L998.2,565.2 L995.7,570.5 L993.2,575.7 L990.6,581.0 L988.0,586.2 L985.5,591.5 L982.9,596.7 L980.3,601.9 L977.6,607.2 L975.0,612.4 L972.3,617.6 L969.7,622.8M825.2,358.3 L829.2,358.8 L833.2,359.3 L837.1,359.8 L841.1,360.3 L845.1,360.8 L849.0,361.3 L853.0,361.8 L857.0,362.2 L861.0,362.7 L864.9,363.2 L868.9,363.7 L872.9,364.2 L876.8,364.7 L880.8,365.2 L884.8,365.7 L888.7,366.1 L892.7,366.6 L896.7,367.1 L900.7,367.6 L904.6,368.1 L908.6,368.6 L912.6,369.1 L916.5,369.6 L920.5,370.0 L924.5,370.5 L928.4,371.0 L932.4,371.5 L936.4,372.0 L940.4,372.5 L944.3,373.0 L948.3,373.5 L952.3,373.9 L956.2,374.4 L960.2,374.9 L964.2,375.4 L968.2,375.9 L972.1,376.4 L976.1,376.9 L980.1,377.4 L984.0,377.8 L988.0,378.3 L992.0,378.8 L995.9,379.3 L999.9,379.8 L1003.9,380.3 L1007.9,380.8 L1011.8,381.3 L1015.8,381.7 L1019.8,382.2 L1023.7,382.7 L1027.7,383.2 L1031.7,383.7 L1035.6,384.2 L1039.6,384.7 L1043.6,385.2 L1047.6,385.6 L1051.5,386.1 L1055.5,386.6 L1059.5,387.1 L1063.4,387.6 L1067.4,388.1 L1071.4,388.6 L1075.3,389.1 L1079.3,389.5 L1083.3,390.0 L1087.3,390.5 L1091.2,391.0 L1095.2,391.5 L1099.2,392.0M812.5,364.2 L816.5,364.9 L820.5,365.5 L824.4,366.1 L828.4,366.7 L832.3,367.3 L836.3,367.9 L840.2,368.5 L844.2,369.2 L848.2,369.9 L852.3,370.7 L856.3,371.4 L860.3,372.2 L864.4,372.9 L868.4,373.7 L872.5,374.4 L876.5,375.2 L880.5,375.9 L884.6,376.6 L888.6,377.4 L892.7,378.1 L896.7,378.9 L900.8,379.6 L904.8,380.3 L908.9,381.1 L913.0,381.8 L917.0,382.5 L921.1,383.3 L925.1,384.0 L929.2,384.7 L933.2,385.5 L937.3,386.2 L941.4,386.9 L945.4,387.6 L949.5,388.4 L953.6,389.1 L957.6,389.8 L961.7,390.5 L965.8,391.2 L969.9,391.9 L973.9,392.7 L978.0,393.4 L982.1,394.1 L986.2,394.8 L990.3,395.5 L994.3,396.2 L998.4,396.9 L1002.5,397.6 L1006.6,398.3 L1010.7,399.0 L1014.8,399.7 L1018.8,400.4 L1022.9,401.1 L1027.0,401.8 L1031.1,402.5 L1035.2,403.2 L1039.3,403.9 L1043.4,404.6 L1047.5,405.3 L1051.6,406.0 L1055.7,406.7 L1059.8,407.3 L1063.9,408.0 L1068.0,408.7 L1072.1,409.4 L1076.2,410.1 L1080.3,410.7 L1084.4,411.4 L1088.5,412.1 L1092.6,412.8M799.9,370.2 L803.8,370.9 L807.8,371.6 L811.7,372.3 L815.6,373.1 L819.6,373.8 L823.5,374.5 L827.4,375.3 L831.4,376.1 L835.5,377.1 L839.6,378.1 L843.7,379.2 L847.8,380.2 L851.9,381.2 L856.0,382.2 L860.1,383.2 L864.2,384.2 L868.3,385.2 L872.5,386.2 L876.6,387.1 L880.7,388.1 L884.8,389.1 L889.0,390.1 L893.1,391.1 L897.2,392.1 L901.4,393.1 L905.5,394.0 L909.6,395.0 L913.8,396.0 L917.9,397.0 L922.1,397.9 L926.2,398.9 L930.4,399.9 L934.6,400.8 L938.7,401.8 L942.9,402.7 L947.0,403.7 L951.2,404.6 L955.4,405.6 L959.6,406.5 L963.7,407.5 L967.9,408.4 L972.1,409.3 L976.3,410.3 L980.5,411.2 L984.6,412.1 L988.8,413.1 L993.0,414.0 L997.2,414.9 L1001.4,415.8 L1005.6,416.7 L1009.8,417.6 L1014.0,418.6 L1018.2,419.5 L1022.4,420.4 L1026.6,421.3 L1030.8,422.2 L1035.1,423.0 L1039.3,423.9 L1043.5,424.8 L1047.7,425.7 L1051.9,426.6 L1056.1,427.5 L1060.4,428.3 L1064.6,429.2 L1068.8,430.1 L1073.0,430.9 L1077.3,431.8 L1081.5,432.7 L1085.7,433.5M787.3,376.1 L791.2,376.9 L795.1,377.8 L799.0,378.6 L802.9,379.5 L806.8,380.3 L810.7,381.2 L814.6,382.0 L818.7,383.1 L822.8,384.3 L827.0,385.6 L831.1,386.9 L835.3,388.1 L839.4,389.4 L843.6,390.7 L847.8,391.9 L851.9,393.2 L856.1,394.4 L860.3,395.7 L864.5,396.9 L868.7,398.2 L872.9,399.4 L877.1,400.6 L881.3,401.9 L885.5,403.1 L889.7,404.3 L893.9,405.5 L898.1,406.7 L902.4,408.0 L906.6,409.2 L910.8,410.4 L915.1,411.6 L919.3,412.8 L923.6,414.0 L927.8,415.2 L932.1,416.4 L936.3,417.5 L940.6,418.7 L944.9,419.9 L949.1,421.1 L953.4,422.2 L957.7,423.4 L962.0,424.6 L966.2,425.7 L970.5,426.9 L974.8,428.0 L979.1,429.2 L983.4,430.3 L987.7,431.4 L992.0,432.6 L996.3,433.7 L1000.6,434.8 L1004.9,435.9 L1009.3,437.1 L1013.6,438.2 L1017.9,439.3 L1022.2,440.4 L1026.6,441.5 L1030.9,442.5 L1035.2,443.6 L1039.6,444.7 L1043.9,445.8 L1048.2,446.9 L1052.6,447.9 L1056.9,449.0 L1061.3,450.0 L1065.6,451.1 L1070.0,452.1 L1074.3,453.2 L1078.7,454.2M774.7,382.0 L778.6,383.0 L782.4,383.9 L786.3,384.9 L790.2,385.9 L794.1,386.8 L798.0,387.8 L801.8,388.7 L805.9,390.0 L810.1,391.5 L814.3,393.1 L818.5,394.6 L822.7,396.1 L826.9,397.6 L831.1,399.1 L835.4,400.7 L839.6,402.2 L843.8,403.7 L848.1,405.2 L852.3,406.7 L856.6,408.2 L860.9,409.6 L865.1,411.1 L869.4,412.6 L873.7,414.1 L878.0,415.5 L882.3,417.0 L886.6,418.5 L890.9,419.9 L895.2,421.4 L899.5,422.8 L903.8,424.3 L908.2,425.7 L912.5,427.1 L916.8,428.6 L921.2,430.0 L925.5,431.4 L929.9,432.8 L934.2,434.2 L938.6,435.6 L943.0,437.0 L947.3,438.4 L951.7,439.8 L956.1,441.2 L960.5,442.5 L964.9,443.9 L969.3,445.3 L973.7,446.6 L978.1,448.0 L982.5,449.3 L986.9,450.6 L991.3,452.0 L995.7,453.3 L1000.1,454.6 L1004.6,455.9 L1009.0,457.2 L1013.4,458.5 L1017.9,459.8 L1022.3,461.1 L1026.8,462.4 L1031.2,463.7 L1035.7,465.0 L1040.1,466.2 L1044.6,467.5 L1049.0,468.7 L1053.5,470.0 L1058.0,471.2 L1062.5,472.4 L1066.9,473.7 L1071.4,474.9M762.1,387.9 L766.0,389.0 L769.8,390.1 L773.7,391.2 L777.5,392.2 L781.4,393.3 L785.2,394.4 L789.1,395.5 L793.1,396.9 L797.3,398.7 L801.6,400.5 L805.8,402.3 L810.1,404.1 L814.4,405.9 L818.7,407.6 L822.9,409.4 L827.2,411.2 L831.5,412.9 L835.8,414.7 L840.2,416.4 L844.5,418.1 L848.8,419.9 L853.1,421.6 L857.5,423.3 L861.8,425.1 L866.2,426.8 L870.6,428.5 L874.9,430.2 L879.3,431.9 L883.7,433.6 L888.1,435.2 L892.5,436.9 L896.9,438.6 L901.3,440.3 L905.7,441.9 L910.2,443.6 L914.6,445.2 L919.0,446.9 L923.5,448.5 L927.9,450.1 L932.4,451.7 L936.9,453.3 L941.3,454.9 L945.8,456.5 L950.3,458.1 L954.8,459.7 L959.3,461.3 L963.8,462.9 L968.3,464.4 L972.8,466.0 L977.3,467.5 L981.8,469.1 L986.3,470.6 L990.9,472.1 L995.4,473.7 L999.9,475.2 L1004.5,476.7 L1009.0,478.2 L1013.6,479.6 L1018.1,481.1 L1022.7,482.6 L1027.2,484.1 L1031.8,485.5 L1036.4,487.0 L1041.0,488.4 L1045.6,489.8 L1050.1,491.3 L1054.7,492.7 L1059.3,494.1 L1063.9,495.5M749.6,393.9 L753.4,395.1 L757.2,396.3 L761.0,397.4 L764.8,398.6 L768.6,399.8 L772.5,401.0 L776.3,402.2 L780.3,403.9 L784.6,405.9 L788.9,408.0 L793.2,410.0 L797.5,412.0 L801.8,414.1 L806.2,416.1 L810.5,418.1 L814.8,420.1 L819.2,422.1 L823.6,424.1 L827.9,426.1 L832.3,428.1 L836.7,430.1 L841.1,432.1 L845.5,434.0 L849.9,436.0 L854.4,438.0 L858.8,439.9 L863.2,441.9 L867.7,443.8 L872.1,445.7 L876.6,447.6 L881.1,449.6 L885.6,451.5 L890.1,453.4 L894.6,455.2 L899.1,457.1 L903.6,459.0 L908.1,460.9 L912.6,462.7 L917.2,464.6 L921.7,466.4 L926.3,468.3 L930.8,470.1 L935.4,471.9 L940.0,473.7 L944.5,475.5 L949.1,477.3 L953.7,479.1 L958.3,480.9 L962.9,482.6 L967.5,484.4 L972.2,486.1 L976.8,487.9 L981.4,489.6 L986.0,491.3 L990.7,493.0 L995.3,494.7 L1000.0,496.4 L1004.6,498.1 L1009.3,499.8 L1014.0,501.5 L1018.6,503.1 L1023.3,504.8 L1028.0,506.4 L1032.7,508.0 L1037.4,509.7 L1042.1,511.3 L1046.8,512.9 L1051.5,514.4 L1056.2,516.0M737.0,399.8 L740.8,401.1 L744.6,402.4 L748.4,403.7 L752.2,405.1 L755.9,406.4 L759.7,407.7 L763.5,409.0 L767.5,410.8 L771.9,413.1 L776.2,415.4 L780.5,417.7 L784.9,420.0 L789.3,422.3 L793.6,424.6 L798.0,426.8 L802.4,429.1 L806.8,431.4 L811.2,433.6 L815.7,435.9 L820.1,438.1 L824.6,440.3 L829.0,442.5 L833.5,444.7 L838.0,447.0 L842.5,449.1 L847.0,451.3 L851.5,453.5 L856.0,455.7 L860.5,457.9 L865.1,460.0 L869.6,462.2 L874.2,464.3 L878.7,466.4 L883.3,468.5 L887.9,470.7 L892.5,472.8 L897.1,474.9 L901.7,476.9 L906.3,479.0 L910.9,481.1 L915.6,483.1 L920.2,485.2 L924.9,487.2 L929.5,489.2 L934.2,491.3 L938.9,493.3 L943.5,495.3 L948.2,497.3 L952.9,499.2 L957.6,501.2 L962.3,503.2 L967.1,505.1 L971.8,507.0 L976.5,509.0 L981.3,510.9 L986.0,512.8 L990.8,514.7 L995.5,516.5 L1000.3,518.4 L1005.1,520.3 L1009.8,522.1 L1014.6,524.0 L1019.4,525.8 L1024.2,527.6 L1029.0,529.4 L1033.8,531.2 L1038.6,533.0 L1043.5,534.7 L1048.3,536.5M724.6,405.7 L728.3,407.2 L732.0,408.6 L735.8,410.0 L739.5,411.5 L743.2,412.9 L747.0,414.3 L750.7,415.7 L754.8,417.7 L759.1,420.3 L763.5,422.9 L767.9,425.4 L772.3,428.0 L776.7,430.5 L781.1,433.0 L785.5,435.6 L790.0,438.1 L794.4,440.6 L798.9,443.1 L803.4,445.6 L807.9,448.0 L812.4,450.5 L816.9,453.0 L821.4,455.4 L825.9,457.9 L830.5,460.3 L835.1,462.7 L839.6,465.2 L844.2,467.6 L848.8,470.0 L853.4,472.4 L858.0,474.7 L862.6,477.1 L867.3,479.5 L871.9,481.8 L876.6,484.2 L881.3,486.5 L885.9,488.8 L890.6,491.1 L895.3,493.4 L900.0,495.7 L904.7,498.0 L909.5,500.2 L914.2,502.5 L918.9,504.7 L923.7,507.0 L928.5,509.2 L933.2,511.4 L938.0,513.6 L942.8,515.8 L947.6,518.0 L952.4,520.1 L957.2,522.3 L962.0,524.4 L966.9,526.5 L971.7,528.6 L976.5,530.7 L981.4,532.8 L986.2,534.9 L991.1,537.0 L996.0,539.0 L1000.9,541.1 L1005.8,543.1 L1010.6,545.1 L1015.5,547.1 L1020.4,549.1 L1025.4,551.1 L1030.3,553.0 L1035.2,555.0 L1040.1,556.9M712.1,411.7 L715.8,413.2 L719.5,414.8 L723.2,416.3 L726.9,417.9 L730.5,419.4 L734.2,421.0 L737.9,422.5 L742.0,424.7 L746.4,427.5 L750.8,430.3 L755.2,433.1 L759.6,435.9 L764.1,438.7 L768.5,441.5 L773.0,444.3 L777.5,447.0 L782.0,449.8 L786.5,452.5 L791.0,455.2 L795.6,458.0 L800.1,460.7 L804.7,463.4 L809.3,466.1 L813.9,468.8 L818.5,471.4 L823.1,474.1 L827.7,476.8 L832.4,479.4 L837.0,482.0 L841.7,484.7 L846.4,487.3 L851.1,489.9 L855.8,492.5 L860.5,495.1 L865.2,497.6 L869.9,500.2 L874.7,502.7 L879.5,505.2 L884.2,507.8 L889.0,510.3 L893.8,512.8 L898.6,515.3 L903.4,517.7 L908.2,520.2 L913.1,522.6 L917.9,525.1 L922.8,527.5 L927.6,529.9 L932.5,532.3 L937.4,534.7 L942.3,537.0 L947.2,539.4 L952.1,541.7 L957.0,544.0 L962.0,546.4 L966.9,548.6 L971.8,550.9 L976.8,553.2 L981.8,555.5 L986.7,557.7 L991.7,559.9 L996.7,562.1 L1001.7,564.3 L1006.7,566.5 L1011.7,568.7 L1016.7,570.8 L1021.7,573.0 L1026.7,575.1 L1031.8,577.2M699.7,417.7 L703.3,419.3 L706.9,421.0 L710.6,422.6 L714.2,424.3 L717.9,425.9 L721.5,427.6 L725.2,429.2 L729.2,431.6 L733.6,434.7 L738.0,437.8 L742.5,440.8 L746.9,443.9 L751.4,446.9 L755.9,449.9 L760.4,452.9 L765.0,455.9 L769.5,458.9 L774.1,461.9 L778.6,464.9 L783.2,467.9 L787.8,470.8 L792.4,473.8 L797.1,476.7 L801.7,479.6 L806.4,482.6 L811.1,485.5 L815.7,488.4 L820.4,491.2 L825.2,494.1 L829.9,497.0 L834.6,499.8 L839.4,502.6 L844.1,505.4 L848.9,508.2 L853.7,511.0 L858.5,513.8 L863.3,516.6 L868.2,519.3 L873.0,522.1 L877.9,524.8 L882.7,527.5 L887.6,530.2 L892.5,532.9 L897.4,535.6 L902.3,538.2 L907.3,540.9 L912.2,543.5 L917.1,546.1 L922.1,548.7 L927.1,551.3 L932.0,553.9 L937.0,556.4 L942.0,559.0 L947.0,561.5 L952.1,564.0 L957.1,566.5 L962.1,569.0 L967.2,571.4 L972.2,573.9 L977.3,576.3 L982.3,578.7 L987.4,581.1 L992.5,583.5 L997.6,585.9 L1002.7,588.2 L1007.8,590.5 L1013.0,592.9 L1018.1,595.2 L1023.2,597.5M687.2,423.7 L690.8,425.4 L694.4,427.2 L698.0,429.0 L701.6,430.7 L705.2,432.5 L708.8,434.2 L712.4,436.0 L716.4,438.5 L720.8,441.9 L725.3,445.2 L729.8,448.5 L734.3,451.8 L738.8,455.1 L743.3,458.4 L747.9,461.6 L752.4,464.9 L757.0,468.1 L761.6,471.3 L766.2,474.6 L770.8,477.8 L775.5,481.0 L780.2,484.2 L784.8,487.3 L789.5,490.5 L794.2,493.6 L799.0,496.8 L803.7,499.9 L808.5,503.0 L813.2,506.1 L818.0,509.2 L822.8,512.3 L827.6,515.3 L832.5,518.4 L837.3,521.4 L842.2,524.4 L847.0,527.4 L851.9,530.4 L856.8,533.4 L861.7,536.3 L866.6,539.3 L871.6,542.2 L876.5,545.1 L881.5,548.0 L886.5,550.9 L891.5,553.8 L896.5,556.6 L901.5,559.5 L906.5,562.3 L911.5,565.1 L916.6,567.9 L921.6,570.6 L926.7,573.4 L931.8,576.1 L936.9,578.9 L942.0,581.6 L947.1,584.2 L952.2,586.9 L957.4,589.6 L962.5,592.2 L967.7,594.8 L972.8,597.4 L978.0,600.0 L983.2,602.6 L988.4,605.1 L993.6,607.7 L998.8,610.2 L1004.0,612.7 L1009.2,615.1 L1014.4,617.6" fill="none" stroke="#f0a866" stroke-width="1.3" opacity="0.95"/>
<path d="M836.2,362.4h3.0v3.0h-3.0zM823.5,368.9h3.0v3.0h-3.0zM810.7,375.4h3.0v3.0h-3.0zM798.0,381.8h3.0v3.0h-3.0zM785.3,388.3h3.0v3.0h-3.0zM772.5,394.8h3.0v3.0h-3.0zM759.8,401.3h3.0v3.0h-3.0zM747.1,407.8h3.0v3.0h-3.0zM734.5,414.3h3.0v3.0h-3.0zM721.8,420.8h3.0v3.0h-3.0zM709.1,427.3h3.0v3.0h-3.0zM858.1,365.6h3.0v3.0h-3.0zM845.5,373.1h3.0v3.0h-3.0zM832.8,380.7h3.0v3.0h-3.0zM820.2,388.2h3.0v3.0h-3.0zM807.5,395.7h3.0v3.0h-3.0zM794.8,403.2h3.0v3.0h-3.0zM782.1,410.7h3.0v3.0h-3.0zM769.4,418.3h3.0v3.0h-3.0zM756.7,425.8h3.0v3.0h-3.0zM744.0,433.3h3.0v3.0h-3.0zM731.3,440.8h3.0v3.0h-3.0zM880.1,369.0h3.0v3.0h-3.0zM867.9,377.9h3.0v3.0h-3.0zM855.5,386.9h3.0v3.0h-3.0zM843.2,395.8h3.0v3.0h-3.0zM830.9,404.8h3.0v3.0h-3.0zM818.5,413.7h3.0v3.0h-3.0zM806.0,422.6h3.0v3.0h-3.0zM793.6,431.5h3.0v3.0h-3.0zM781.1,440.4h3.0v3.0h-3.0zM768.6,449.3h3.0v3.0h-3.0zM756.1,458.1h3.0v3.0h-3.0zM902.2,372.4h3.0v3.0h-3.0zM890.3,382.7h3.0v3.0h-3.0zM878.4,393.0h3.0v3.0h-3.0zM866.4,403.4h3.0v3.0h-3.0zM854.4,413.7h3.0v3.0h-3.0zM842.4,424.0h3.0v3.0h-3.0zM830.2,434.2h3.0v3.0h-3.0zM818.1,444.5h3.0v3.0h-3.0zM805.9,454.7h3.0v3.0h-3.0zM793.6,465.0h3.0v3.0h-3.0zM781.3,475.2h3.0v3.0h-3.0zM924.2,375.7h3.0v3.0h-3.0zM912.8,387.4h3.0v3.0h-3.0zM901.4,399.1h3.0v3.0h-3.0zM889.8,410.8h3.0v3.0h-3.0zM878.2,422.4h3.0v3.0h-3.0zM866.5,434.1h3.0v3.0h-3.0zM854.7,445.7h3.0v3.0h-3.0zM842.9,457.3h3.0v3.0h-3.0zM831.0,468.8h3.0v3.0h-3.0zM819.1,480.4h3.0v3.0h-3.0zM807.0,491.9h3.0v3.0h-3.0zM946.3,379.1h3.0v3.0h-3.0zM935.4,392.1h3.0v3.0h-3.0zM924.4,405.1h3.0v3.0h-3.0zM913.3,418.1h3.0v3.0h-3.0zM902.1,431.0h3.0v3.0h-3.0zM890.9,444.0h3.0v3.0h-3.0zM879.5,456.9h3.0v3.0h-3.0zM868.1,469.8h3.0v3.0h-3.0zM856.5,482.6h3.0v3.0h-3.0zM844.9,495.4h3.0v3.0h-3.0zM833.2,508.2h3.0v3.0h-3.0zM968.4,382.4h3.0v3.0h-3.0zM958.1,396.7h3.0v3.0h-3.0zM947.6,411.0h3.0v3.0h-3.0zM937.0,425.2h3.0v3.0h-3.0zM926.3,439.5h3.0v3.0h-3.0zM915.5,453.7h3.0v3.0h-3.0zM904.5,467.8h3.0v3.0h-3.0zM893.5,482.0h3.0v3.0h-3.0zM882.4,496.1h3.0v3.0h-3.0zM871.1,510.1h3.0v3.0h-3.0zM859.8,524.2h3.0v3.0h-3.0zM990.6,385.7h3.0v3.0h-3.0zM980.8,401.2h3.0v3.0h-3.0zM970.8,416.8h3.0v3.0h-3.0zM960.8,432.3h3.0v3.0h-3.0zM950.6,447.7h3.0v3.0h-3.0zM940.2,463.2h3.0v3.0h-3.0zM929.8,478.5h3.0v3.0h-3.0zM919.2,493.9h3.0v3.0h-3.0zM908.5,509.2h3.0v3.0h-3.0zM897.7,524.5h3.0v3.0h-3.0zM886.8,539.7h3.0v3.0h-3.0zM1012.7,389.0h3.0v3.0h-3.0zM1003.5,405.7h3.0v3.0h-3.0zM994.2,422.4h3.0v3.0h-3.0zM984.7,439.1h3.0v3.0h-3.0zM975.0,455.8h3.0v3.0h-3.0zM965.2,472.4h3.0v3.0h-3.0zM955.3,489.0h3.0v3.0h-3.0zM945.2,505.5h3.0v3.0h-3.0zM935.0,522.0h3.0v3.0h-3.0zM924.6,538.4h3.0v3.0h-3.0zM914.1,554.7h3.0v3.0h-3.0zM1034.9,392.2h3.0v3.0h-3.0zM1026.3,410.1h3.0v3.0h-3.0zM1017.6,428.0h3.0v3.0h-3.0zM1008.7,445.9h3.0v3.0h-3.0zM999.6,463.6h3.0v3.0h-3.0zM990.4,481.4h3.0v3.0h-3.0zM981.0,499.1h3.0v3.0h-3.0zM971.4,516.8h3.0v3.0h-3.0zM961.7,534.3h3.0v3.0h-3.0zM951.8,551.9h3.0v3.0h-3.0zM941.7,569.3h3.0v3.0h-3.0zM1057.1,395.5h3.0v3.0h-3.0zM1049.2,414.5h3.0v3.0h-3.0zM1041.1,433.5h3.0v3.0h-3.0zM1032.8,452.4h3.0v3.0h-3.0zM1024.3,471.3h3.0v3.0h-3.0zM1015.7,490.1h3.0v3.0h-3.0zM1006.9,508.9h3.0v3.0h-3.0zM997.8,527.7h3.0v3.0h-3.0zM988.6,546.3h3.0v3.0h-3.0zM979.3,564.9h3.0v3.0h-3.0zM969.7,583.4h3.0v3.0h-3.0z" fill="#eea070"/>
</g>
<path d="M765,411 L790,395 L822,378 L855,362 C900,364 960,372 1000,377 C1025,380 1045,384 1062,390  C1052.8,393.3 1027.5,395.0 1017.0,400.0 C1006.5,405.0 1006.5,414.5 997.0,422.0 C987.5,429.5 974.5,437.8 960.0,445.0 C945.5,452.2 926.7,459.0 910.0,465.0 C893.3,471.0 873.3,476.0 860.0,481.0 C846.7,486.0 835.0,492.7 830.0,495.0 L845,478 L866,457 L860,446 L815,425 Z" fill="none" stroke="#e9a56a" stroke-width="1.6"/>
<path d="M617,331 C625,326 640,326 646,332 C638,338 622,337 617,331Z" fill="#e39a68"/>
<path d="M752,332 C762,327 780,328 790,334 C780,340 760,339 752,332Z" fill="#e39a68"/>
<path d="M692,603 C700,595 716,595 724,602 C716,609 700,609 692,603Z" fill="#e6a06c"/>
<path d="M672,620 C685,636 705,644 735,646 C768,645 796,634 814,616 L818,660 L660,662Z" fill="#d99463"/>
<path d="M676,630 C700,646 760,648 810,626 M690,645 C715,654 760,654 800,640" fill="none" stroke="#6a4030" stroke-width="1.2" opacity="0.6"/><path d="M690,634 L700,652 M712,642 L718,656 M735,645 L738,657 M758,644 L756,656 M780,638 L775,652 M800,630 L792,646" stroke="#7a5038" stroke-width="1" opacity="0.5"/>
<path d="M619,375 C630,388 645,398 662,411" fill="none" stroke="#e39f6c" stroke-width="3" stroke-dasharray="4,3"/>
<path d="M1020,393 C1060,393 1110,386 1150,371 C1180,358 1205,335 1215,318" fill="none" stroke="#d9956a" stroke-width="3"/>
<path d="M705,214 C715,200 735,190 770,182 C800,188 835,212 870,237 C900,250 940,258 990,268" fill="none" stroke="#121214" stroke-width="1.8" opacity="0.8"/>
<path d="M664,190 C676,196 690,206 702,215 C712,222 722,226 735,228" fill="none" stroke="#121214" stroke-width="1.6" opacity="0.6"/>
</g>
<path d="M640.0,181.0 C649.2,179.0 656.7,186.5 664.0,189.0 C671.3,191.5 678.0,197.5 684.0,196.0 C690.0,194.5 690.3,188.3 700.0,180.0 C709.7,171.7 724.5,155.8 742.0,146.0 C759.5,136.2 783.0,126.5 805.0,121.0 C827.0,115.5 853.2,113.2 874.0,113.0 C894.8,112.8 910.3,115.2 930.0,120.0 C949.7,124.8 973.8,133.7 992.0,142.0 C1010.2,150.3 1026.5,160.5 1039.0,170.0 C1051.5,179.5 1060.2,189.2 1067.0,199.0 C1073.8,208.8 1076.8,219.0 1080.0,229.0 C1083.2,239.0 1081.0,254.5 1086.0,259.0 C1091.0,263.5 1099.8,257.7 1110.0,256.0 C1120.2,254.3 1135.3,249.8 1147.0,249.0 C1158.7,248.2 1170.7,248.8 1180.0,251.0 C1189.3,253.2 1196.5,256.2 1203.0,262.0 C1209.5,267.8 1215.8,279.7 1219.0,286.0 C1222.2,292.3 1223.0,294.2 1222.0,300.0 C1221.0,305.8 1217.8,314.2 1213.0,321.0 C1208.2,327.8 1199.2,335.5 1193.0,341.0 C1186.8,346.5 1182.7,349.2 1176.0,354.0 C1169.3,358.8 1161.2,365.5 1153.0,370.0 C1144.8,374.5 1137.0,377.8 1127.0,381.0 C1117.0,384.2 1106.0,387.0 1093.0,389.0 C1080.0,391.0 1062.3,392.3 1049.0,393.0 C1035.7,393.7 1022.7,391.5 1013.0,393.0 C1003.3,394.5 999.8,394.2 991.0,402.0 C982.2,409.8 973.5,429.5 960.0,440.0 C946.5,450.5 926.7,458.2 910.0,465.0 C893.3,471.8 873.3,476.0 860.0,481.0 C846.7,486.0 837.2,488.8 830.0,495.0 C822.8,501.2 819.7,507.2 817.0,518.0 C814.3,528.8 814.3,544.8 814.0,560.0 C813.7,575.2 815.8,597.2 815.0,609.0 C814.2,620.8 813.0,625.0 809.0,631.0 C805.0,637.0 798.8,641.5 791.0,645.0 C783.2,648.5 771.7,650.2 762.0,652.0 C752.3,653.8 742.2,656.0 733.0,656.0 C723.8,656.0 715.2,654.2 707.0,652.0 C698.8,649.8 689.3,646.8 684.0,643.0 C678.7,639.2 677.3,634.7 675.0,629.0 C672.7,623.3 671.2,619.8 670.0,609.0 C668.8,598.2 668.0,576.5 668.0,564.0 C668.0,551.5 669.3,544.3 670.0,534.0 C670.7,523.7 672.0,512.7 672.0,502.0 C672.0,491.3 671.0,479.7 670.0,470.0 C669.0,460.3 666.7,451.8 666.0,444.0 C665.3,436.2 666.7,428.5 666.0,423.0 C665.3,417.5 665.8,415.7 662.0,411.0 C658.2,406.3 650.2,401.0 643.0,395.0 C635.8,389.0 625.3,381.8 619.0,375.0 C612.7,368.2 610.2,361.5 605.0,354.0 C599.8,346.5 592.8,337.5 588.0,330.0 C583.2,322.5 578.7,316.5 576.0,309.0 C573.3,301.5 572.3,293.7 572.0,285.0 C571.7,276.3 571.8,266.3 574.0,257.0 C576.2,247.7 579.2,238.3 585.0,229.0 C590.8,219.7 599.8,209.0 609.0,201.0 C618.2,193.0 630.8,183.0 640.0,181.0Z" fill="none" stroke="#141416" stroke-width="2" opacity="0.8"/>
<path d="M620,373 C634,387 650,399 669,412" fill="none" stroke="#d8905c" stroke-width="2.4" stroke-dasharray="3,3" opacity="0.85"/>
<g><circle cx="946" cy="596" r="10.2" fill="none" stroke="#7a2a30" stroke-width="2"/><circle cx="946" cy="596" r="10.2" fill="none" stroke="#f2eeee" stroke-width="2.2" stroke-dasharray="4.8,3.2" stroke-dashoffset="2"/><path d="M946,577V587M946,605V616M927,596H937M955,596H965" stroke="#0a0a0a" stroke-width="1.8" opacity="0.9"/><path d="M946,587V605M937,596H955" stroke="#0a0a0a" stroke-width="1.5" opacity="0.45"/></g>
<ellipse cx="0" cy="0" rx="1" ry="1" fill="url(#gGlow)" transform="translate(1198 122) scale(62 26)"/>
<g fill="#8e4f28" stroke="#8e4f28"><circle cx="1204" cy="85" r="45.2" stroke="none"/><path d="M1171,62 L1200,48.4 L1225.5,53 L1204,85 L1159.6,87.2Z" stroke-width="2.4" stroke-linejoin="round"/><path d="M1186.5,32.5 L1220,57" stroke-width="14.9" stroke-linecap="round" fill="none"/><path d="M1143.5,55.5 L1200,55.5" stroke-width="15.9" stroke-linecap="round" fill="none"/><path d="M1126,103 L1178,67" stroke-width="16.9" stroke-linecap="round" fill="none"/></g>
<g fill="url(#gBl)" stroke="url(#gBl)"><circle cx="1204" cy="85" r="44" stroke="none"/><path d="M1171,62 L1200,48.4 L1225.5,53 L1204,85 L1159.6,87.2Z" stroke-width="0.01" stroke-linejoin="round"/><path d="M1186.5,32.5 L1220,57" stroke-width="12.5" stroke-linecap="round" fill="none"/><path d="M1143.5,55.5 L1200,55.5" stroke-width="13.5" stroke-linecap="round" fill="none"/><path d="M1126,103 L1178,67" stroke-width="14.5" stroke-linecap="round" fill="none"/></g>
<ellipse cx="1203.5" cy="85" rx="27.5" ry="25" fill="#f2f2f2"/><ellipse cx="1203.5" cy="85" rx="27.5" ry="25" fill="none" stroke="#c9c9c9" stroke-width="1"/>
<ellipse cx="1204.3" cy="84.6" rx="16.8" ry="15.4" fill="url(#gBlue)" stroke="#1f3f6a" stroke-width="0.8"/>
<g><path d="M1153.8,593 Q1153.8,580 1167,580 L1197,580 Q1212.5,580 1212.5,595 L1212.5,622 Q1212.5,637 1197,637 L1169,637 Q1154,637 1154,652 L1154,666 L1137,666 Q1123,666 1123,651 L1123,623 Q1123,608 1138,608 L1182.7,608 L1182.7,605 L1153.8,605Z" fill="url(#gPyB)" stroke="#151515" stroke-width="2.2"/><path d="M1153.8,606.5 H1183" stroke="#151515" stroke-width="2.6"/><circle cx="1166.5" cy="592.8" r="5.6" fill="#f4f4f4"/></g>
<g transform="rotate(180 1182.9 637.3)"><path d="M1153.8,593 Q1153.8,580 1167,580 L1197,580 Q1212.5,580 1212.5,595 L1212.5,622 Q1212.5,637 1197,637 L1169,637 Q1154,637 1154,652 L1154,666 L1137,666 Q1123,666 1123,651 L1123,623 Q1123,608 1138,608 L1182.7,608 L1182.7,605 L1153.8,605Z" fill="url(#gPyY)" stroke="#151515" stroke-width="2.2"/><path d="M1153.8,606.5 H1183" stroke="#151515" stroke-width="2.6"/><circle cx="1166.5" cy="592.8" r="5.6" fill="#f6f6f0"/></g>
</svg>
</body></html>
